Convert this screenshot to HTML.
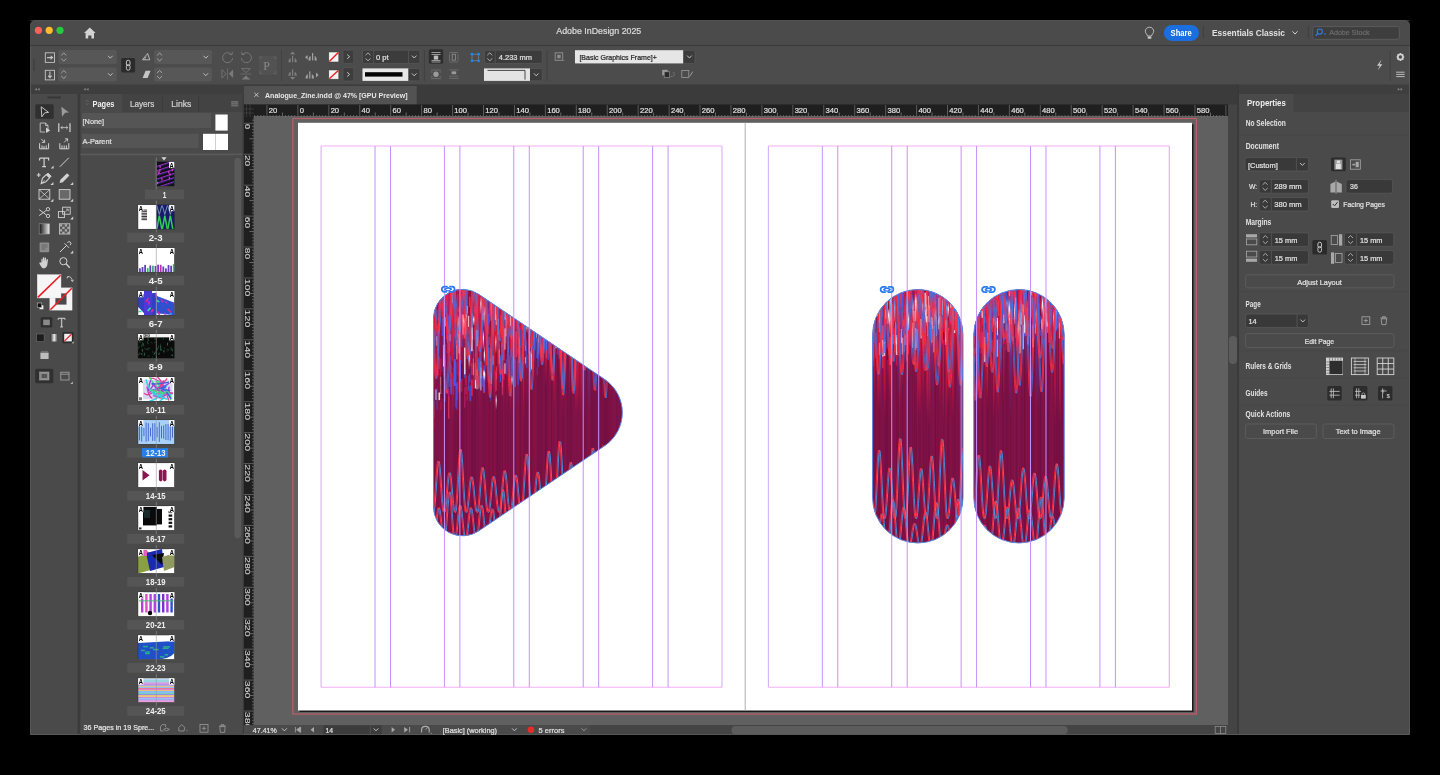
<!DOCTYPE html>
<html><head><meta charset="utf-8">
<style>
*{margin:0;padding:0;box-sizing:border-box}
html,body{width:1440px;height:775px;overflow:hidden;background:#000}
body{position:relative;font-family:"Liberation Sans",sans-serif}
.a{position:absolute}
svg text{font-family:"Liberation Sans",sans-serif}
</style></head>
<body>
<svg class="a" style="left:0;top:0;will-change:transform" width="1440" height="775" viewBox="0 0 1440 775"><path d="M30 735 L30 26 Q30 20 36 20 L1404 20 Q1410 20 1410 26 L1410 735 Z" fill="#3b3b3b" /><path d="M30 45.5 L30 26 Q30 20 36 20 L1404 20 Q1410 20 1410 26 L1410 45.5 Z" fill="#4b4b4b" /><line x1="30" y1="20.5" x2="1410" y2="20.5" stroke="#5a5a5a" stroke-width="0.8" opacity="0.6"/><line x1="30" y1="45.5" x2="1410" y2="45.5" stroke="#3a3a3a" stroke-width="1"/><rect x="30" y="46" width="1380" height="38.8" fill="#4c4c4c"/><rect x="30" y="84.8" width="1380" height="9.2" fill="#3e3e3e"/><rect x="30" y="94" width="47.5" height="641" fill="#4a4a4a"/><rect x="80.5" y="94" width="162" height="18" fill="#434343"/><rect x="80.5" y="112" width="162" height="623" fill="#4a4a4a"/><rect x="244" y="84.8" width="994" height="19.7" fill="#3b3b3b"/><rect x="244" y="86" width="172.7" height="18.5" fill="#525252"/><rect x="244" y="104.5" width="984" height="12" fill="#1f1f1f"/><rect x="244" y="116.5" width="10" height="608.5" fill="#1f1f1f"/><rect x="254" y="116.5" width="974" height="608.5" fill="#606060"/><rect x="1228" y="104.5" width="9.5" height="630.5" fill="#444444"/><rect x="1229" y="336" width="8" height="28" fill="#5c5c5c" rx="4"/><rect x="1237.5" y="84.8" width="1.5" height="650.2" fill="#383838"/><rect x="244" y="725" width="346" height="10" fill="#4a4a4a"/><rect x="590" y="725" width="638" height="10" fill="#444444"/><rect x="731.5" y="726" width="336.2" height="8.3" fill="#5c5c5c" rx="4.1"/><rect x="1239" y="94" width="170" height="18" fill="#434343"/><rect x="1239" y="94" width="54.5" height="18" fill="#4a4a4a"/><rect x="1239" y="112" width="170" height="623" fill="#4a4a4a"/><path d="M30.5 46 L30.5 734.5 L1409.5 734.5 L1409.5 46" fill="none" stroke="#575757" stroke-width="1" /><rect x="292.9" y="118.5" width="903.5" height="595.6" fill="none" stroke="#bb5e68" stroke-width="1.2"/><rect x="299.5" y="124.3" width="894" height="587.7" fill="#1a1a1a"/><rect x="298" y="122.8" width="894" height="587.7" fill="#ffffff"/></svg>
<svg class="a" style="left:0;top:0" width="1440" height="775"><defs><linearGradient id="gr" x1="0" y1="0" x2="0" y2="1"><stop offset="0" stop-color="#ff2038" stop-opacity="0.95"/><stop offset="0.7" stop-color="#e01838" stop-opacity="0.6"/><stop offset="1" stop-color="#c01838" stop-opacity="0"/></linearGradient><linearGradient id="gm" x1="0" y1="0" x2="0" y2="1"><stop offset="0" stop-color="#d0206a" stop-opacity="0.9"/><stop offset="1" stop-color="#b01860" stop-opacity="0"/></linearGradient><linearGradient id="gb" x1="0" y1="0" x2="0" y2="1"><stop offset="0" stop-color="#4060f0" stop-opacity="0.85"/><stop offset="1" stop-color="#4050d0" stop-opacity="0"/></linearGradient><linearGradient id="gc" x1="0" y1="0" x2="0" y2="1"><stop offset="0" stop-color="#9a0c3c" stop-opacity="0.9"/><stop offset="1" stop-color="#9a0c3c" stop-opacity="0"/></linearGradient><linearGradient id="gw" x1="0" y1="0" x2="0" y2="1"><stop offset="0" stop-color="#ffffff" stop-opacity="0"/><stop offset="0.4" stop-color="#ffffff" stop-opacity="0.95"/><stop offset="1" stop-color="#ffffff" stop-opacity="0"/></linearGradient><clipPath id="ct"><path d="M 433.5 318.3 A 29 29 0 0 1 478.7 294.3 L 604.8 379.5 A 40 40 0 0 1 604.8 445.7 L 478.7 530.9 A 29 29 0 0 1 433.5 506.9 Z"/></clipPath><clipPath id="cp1"><path d="M 872.6 334.7 A 45.19999999999999 45.19999999999999 0 0 1 963 334.7 L 963 497.8 A 45.19999999999999 45.19999999999999 0 0 1 872.6 497.8 Z"/></clipPath><clipPath id="cp2"><path d="M 973.8 334.70000000000005 A 45.200000000000045 45.200000000000045 0 0 1 1064.2 334.70000000000005 L 1064.2 497.79999999999995 A 45.200000000000045 45.200000000000045 0 0 1 973.8 497.79999999999995 Z"/></clipPath></defs><g clip-path="url(#ct)"><rect x="433" y="289" width="191" height="248" fill="#7c1246"/><rect x="433.0" y="289" width="1.1" height="248" fill="#8a2068" opacity="0.23"/><rect x="434.7" y="289" width="1.1" height="248" fill="#8a2068" opacity="0.11"/><rect x="436.4" y="289" width="1.1" height="248" fill="#8a2068" opacity="0.22"/><rect x="437.5" y="289" width="0.9" height="248" fill="#b01040" opacity="0.18"/><rect x="439.0" y="289" width="1.2" height="248" fill="#8a2068" opacity="0.26"/><rect x="441.2" y="289" width="1.3" height="248" fill="#8a2068" opacity="0.20"/><rect x="443.0" y="289" width="1.4" height="248" fill="#b01040" opacity="0.09"/><rect x="444.5" y="289" width="0.8" height="248" fill="#b01040" opacity="0.22"/><rect x="445.5" y="289" width="1.2" height="248" fill="#5a0830" opacity="0.17"/><rect x="447.3" y="289" width="1.1" height="248" fill="#4a0a40" opacity="0.10"/><rect x="448.9" y="289" width="1.0" height="248" fill="#8a2068" opacity="0.26"/><rect x="450.6" y="289" width="1.3" height="248" fill="#c01848" opacity="0.22"/><rect x="452.4" y="289" width="0.6" height="248" fill="#8a2068" opacity="0.22"/><rect x="453.2" y="289" width="1.4" height="248" fill="#600a38" opacity="0.09"/><rect x="454.5" y="289" width="1.3" height="248" fill="#5a0830" opacity="0.12"/><rect x="456.7" y="289" width="1.1" height="248" fill="#4a0a40" opacity="0.15"/><rect x="457.7" y="289" width="1.2" height="248" fill="#4a0a40" opacity="0.13"/><rect x="459.0" y="289" width="0.9" height="248" fill="#600a38" opacity="0.22"/><rect x="459.9" y="289" width="0.8" height="248" fill="#b01040" opacity="0.08"/><rect x="461.0" y="289" width="1.1" height="248" fill="#4a0a40" opacity="0.18"/><rect x="462.4" y="289" width="0.8" height="248" fill="#4a0a40" opacity="0.22"/><rect x="463.4" y="289" width="1.0" height="248" fill="#600a38" opacity="0.16"/><rect x="464.5" y="289" width="0.9" height="248" fill="#8a2068" opacity="0.13"/><rect x="466.0" y="289" width="0.8" height="248" fill="#600a38" opacity="0.26"/><rect x="467.1" y="289" width="1.2" height="248" fill="#b01040" opacity="0.26"/><rect x="468.4" y="289" width="0.9" height="248" fill="#8a2068" opacity="0.14"/><rect x="469.4" y="289" width="0.7" height="248" fill="#b01040" opacity="0.12"/><rect x="470.4" y="289" width="0.6" height="248" fill="#c01848" opacity="0.15"/><rect x="471.2" y="289" width="1.6" height="248" fill="#600a38" opacity="0.23"/><rect x="472.8" y="289" width="1.0" height="248" fill="#4a0a40" opacity="0.11"/><rect x="474.5" y="289" width="1.4" height="248" fill="#5a0830" opacity="0.21"/><rect x="476.0" y="289" width="1.2" height="248" fill="#8a2068" opacity="0.12"/><rect x="478.2" y="289" width="1.5" height="248" fill="#8a2068" opacity="0.09"/><rect x="479.6" y="289" width="0.7" height="248" fill="#8a2068" opacity="0.25"/><rect x="480.3" y="289" width="1.3" height="248" fill="#c01848" opacity="0.16"/><rect x="482.6" y="289" width="1.1" height="248" fill="#8a2068" opacity="0.11"/><rect x="484.3" y="289" width="0.7" height="248" fill="#5a0830" opacity="0.17"/><rect x="485.3" y="289" width="1.2" height="248" fill="#b01040" opacity="0.13"/><rect x="487.4" y="289" width="0.8" height="248" fill="#b01040" opacity="0.09"/><rect x="488.4" y="289" width="0.8" height="248" fill="#b01040" opacity="0.11"/><rect x="489.4" y="289" width="1.2" height="248" fill="#5a0830" opacity="0.10"/><rect x="490.6" y="289" width="1.1" height="248" fill="#c01848" opacity="0.20"/><rect x="492.2" y="289" width="1.2" height="248" fill="#5a0830" opacity="0.19"/><rect x="494.3" y="289" width="1.1" height="248" fill="#c01848" opacity="0.21"/><rect x="496.2" y="289" width="0.6" height="248" fill="#4a0a40" opacity="0.09"/><rect x="496.8" y="289" width="0.9" height="248" fill="#5a0830" opacity="0.26"/><rect x="497.7" y="289" width="1.1" height="248" fill="#4a0a40" opacity="0.09"/><rect x="499.7" y="289" width="1.3" height="248" fill="#5a0830" opacity="0.22"/><rect x="502.0" y="289" width="1.0" height="248" fill="#4a0a40" opacity="0.17"/><rect x="502.9" y="289" width="1.5" height="248" fill="#b01040" opacity="0.24"/><rect x="504.9" y="289" width="1.2" height="248" fill="#600a38" opacity="0.15"/><rect x="506.1" y="289" width="0.7" height="248" fill="#b01040" opacity="0.20"/><rect x="507.3" y="289" width="1.5" height="248" fill="#4a0a40" opacity="0.14"/><rect x="509.8" y="289" width="1.3" height="248" fill="#600a38" opacity="0.16"/><rect x="512.0" y="289" width="0.7" height="248" fill="#8a2068" opacity="0.09"/><rect x="513.0" y="289" width="1.1" height="248" fill="#5a0830" opacity="0.25"/><rect x="514.1" y="289" width="1.4" height="248" fill="#4a0a40" opacity="0.25"/><rect x="515.6" y="289" width="0.6" height="248" fill="#c01848" opacity="0.11"/><rect x="516.5" y="289" width="1.1" height="248" fill="#c01848" opacity="0.20"/><rect x="518.0" y="289" width="1.5" height="248" fill="#c01848" opacity="0.15"/><rect x="519.6" y="289" width="1.2" height="248" fill="#5a0830" opacity="0.24"/><rect x="521.2" y="289" width="1.2" height="248" fill="#c01848" opacity="0.12"/><rect x="522.4" y="289" width="1.0" height="248" fill="#b01040" opacity="0.21"/><rect x="524.0" y="289" width="0.9" height="248" fill="#5a0830" opacity="0.10"/><rect x="525.2" y="289" width="1.5" height="248" fill="#600a38" opacity="0.15"/><rect x="527.3" y="289" width="1.3" height="248" fill="#4a0a40" opacity="0.23"/><rect x="529.6" y="289" width="1.1" height="248" fill="#b01040" opacity="0.23"/><rect x="530.8" y="289" width="1.2" height="248" fill="#4a0a40" opacity="0.21"/><rect x="532.5" y="289" width="0.9" height="248" fill="#8a2068" opacity="0.08"/><rect x="533.4" y="289" width="1.1" height="248" fill="#b01040" opacity="0.22"/><rect x="534.6" y="289" width="1.4" height="248" fill="#b01040" opacity="0.26"/><rect x="536.0" y="289" width="0.7" height="248" fill="#8a2068" opacity="0.20"/><rect x="537.1" y="289" width="1.6" height="248" fill="#4a0a40" opacity="0.12"/><rect x="539.7" y="289" width="0.9" height="248" fill="#4a0a40" opacity="0.08"/><rect x="540.8" y="289" width="1.3" height="248" fill="#5a0830" opacity="0.12"/><rect x="542.9" y="289" width="1.1" height="248" fill="#8a2068" opacity="0.17"/><rect x="545.0" y="289" width="0.8" height="248" fill="#4a0a40" opacity="0.24"/><rect x="545.7" y="289" width="1.5" height="248" fill="#4a0a40" opacity="0.15"/><rect x="547.7" y="289" width="0.8" height="248" fill="#b01040" opacity="0.15"/><rect x="548.9" y="289" width="1.5" height="248" fill="#c01848" opacity="0.16"/><rect x="551.1" y="289" width="0.8" height="248" fill="#4a0a40" opacity="0.24"/><rect x="552.4" y="289" width="1.5" height="248" fill="#b01040" opacity="0.12"/><rect x="555.0" y="289" width="1.6" height="248" fill="#c01848" opacity="0.18"/><rect x="557.5" y="289" width="0.9" height="248" fill="#4a0a40" opacity="0.23"/><rect x="558.6" y="289" width="0.7" height="248" fill="#600a38" opacity="0.14"/><rect x="559.5" y="289" width="0.9" height="248" fill="#b01040" opacity="0.12"/><rect x="561.0" y="289" width="1.0" height="248" fill="#b01040" opacity="0.11"/><rect x="562.2" y="289" width="1.4" height="248" fill="#5a0830" opacity="0.16"/><rect x="564.7" y="289" width="1.5" height="248" fill="#8a2068" opacity="0.23"/><rect x="567.0" y="289" width="1.5" height="248" fill="#600a38" opacity="0.18"/><rect x="569.3" y="289" width="1.4" height="248" fill="#600a38" opacity="0.17"/><rect x="570.9" y="289" width="1.3" height="248" fill="#4a0a40" opacity="0.11"/><rect x="572.7" y="289" width="1.5" height="248" fill="#c01848" opacity="0.14"/><rect x="574.6" y="289" width="1.4" height="248" fill="#8a2068" opacity="0.12"/><rect x="577.0" y="289" width="1.6" height="248" fill="#8a2068" opacity="0.13"/><rect x="579.1" y="289" width="1.0" height="248" fill="#b01040" opacity="0.17"/><rect x="580.6" y="289" width="0.6" height="248" fill="#b01040" opacity="0.17"/><rect x="581.4" y="289" width="1.4" height="248" fill="#8a2068" opacity="0.10"/><rect x="582.8" y="289" width="0.8" height="248" fill="#8a2068" opacity="0.16"/><rect x="584.1" y="289" width="1.4" height="248" fill="#600a38" opacity="0.13"/><rect x="585.9" y="289" width="0.7" height="248" fill="#600a38" opacity="0.24"/><rect x="587.2" y="289" width="1.5" height="248" fill="#8a2068" opacity="0.14"/><rect x="588.8" y="289" width="1.2" height="248" fill="#c01848" opacity="0.10"/><rect x="590.8" y="289" width="0.6" height="248" fill="#5a0830" opacity="0.11"/><rect x="591.4" y="289" width="0.9" height="248" fill="#4a0a40" opacity="0.14"/><rect x="592.6" y="289" width="0.7" height="248" fill="#4a0a40" opacity="0.18"/><rect x="593.8" y="289" width="1.2" height="248" fill="#4a0a40" opacity="0.12"/><rect x="595.5" y="289" width="1.0" height="248" fill="#600a38" opacity="0.19"/><rect x="597.2" y="289" width="1.2" height="248" fill="#8a2068" opacity="0.12"/><rect x="599.0" y="289" width="1.2" height="248" fill="#8a2068" opacity="0.12"/><rect x="600.7" y="289" width="1.2" height="248" fill="#5a0830" opacity="0.12"/><rect x="602.6" y="289" width="1.4" height="248" fill="#5a0830" opacity="0.14"/><rect x="604.2" y="289" width="1.5" height="248" fill="#5a0830" opacity="0.22"/><rect x="605.9" y="289" width="0.7" height="248" fill="#5a0830" opacity="0.10"/><rect x="606.6" y="289" width="1.0" height="248" fill="#600a38" opacity="0.23"/><rect x="607.8" y="289" width="1.4" height="248" fill="#5a0830" opacity="0.12"/><rect x="609.9" y="289" width="1.4" height="248" fill="#b01040" opacity="0.12"/><rect x="612.0" y="289" width="1.5" height="248" fill="#c01848" opacity="0.10"/><rect x="614.0" y="289" width="1.4" height="248" fill="#8a2068" opacity="0.26"/><rect x="616.3" y="289" width="1.4" height="248" fill="#600a38" opacity="0.10"/><rect x="617.6" y="289" width="1.2" height="248" fill="#8a2068" opacity="0.24"/><rect x="619.1" y="289" width="0.8" height="248" fill="#b01040" opacity="0.12"/><rect x="620.4" y="289" width="1.6" height="248" fill="#4a0a40" opacity="0.10"/><rect x="621.9" y="289" width="1.6" height="248" fill="#600a38" opacity="0.09"/><rect x="623.5" y="289" width="1.0" height="248" fill="#600a38" opacity="0.17"/><rect x="433.0" y="289.0" width="1.8" height="111.9" fill="url(#gr)"/><rect x="434.8" y="289.0" width="1.2" height="115.1" fill="url(#gm)"/><rect x="435.7" y="289.0" width="1.2" height="96.5" fill="url(#gr)"/><rect x="436.3" y="289.0" width="2.2" height="112.2" fill="url(#gc)"/><rect x="438.6" y="289.0" width="1.8" height="103.6" fill="url(#gm)"/><rect x="440.0" y="289.0" width="2.4" height="75.7" fill="url(#gc)"/><rect x="442.5" y="289.0" width="2.0" height="121.2" fill="url(#gb)"/><rect x="444.0" y="289.0" width="2.2" height="111.4" fill="url(#gc)"/><rect x="446.2" y="289.0" width="2.0" height="113.7" fill="url(#gm)"/><rect x="447.3" y="289.0" width="1.4" height="55.4" fill="url(#gm)"/><rect x="448.3" y="289.0" width="1.9" height="73.6" fill="url(#gm)"/><rect x="450.3" y="289.0" width="1.9" height="108.6" fill="url(#gr)"/><rect x="451.9" y="289.0" width="1.7" height="136.4" fill="url(#gr)"/><rect x="453.4" y="289.0" width="2.0" height="134.8" fill="url(#gb)"/><rect x="454.4" y="289.0" width="1.8" height="75.6" fill="url(#gb)"/><rect x="455.7" y="289.0" width="1.0" height="85.3" fill="url(#gr)"/><rect x="456.3" y="289.0" width="1.3" height="99.6" fill="url(#gc)"/><rect x="457.3" y="289.0" width="2.4" height="136.0" fill="url(#gm)"/><rect x="459.4" y="289.0" width="2.1" height="103.5" fill="url(#gr)"/><rect x="461.4" y="289.0" width="1.0" height="67.6" fill="url(#gc)"/><rect x="462.2" y="289.0" width="1.2" height="104.6" fill="url(#gm)"/><rect x="462.8" y="289.0" width="2.3" height="97.7" fill="url(#gm)"/><rect x="464.8" y="289.0" width="1.4" height="108.2" fill="url(#gr)"/><rect x="466.0" y="289.0" width="1.3" height="78.8" fill="url(#gb)"/><rect x="466.7" y="289.0" width="1.3" height="67.4" fill="url(#gr)"/><rect x="467.9" y="289.0" width="1.5" height="115.8" fill="url(#gc)"/><rect x="468.7" y="289.0" width="2.4" height="60.6" fill="url(#gc)"/><rect x="471.1" y="289.0" width="1.5" height="134.2" fill="url(#gm)"/><rect x="472.1" y="289.0" width="1.7" height="113.7" fill="url(#gc)"/><rect x="473.5" y="289.0" width="2.4" height="104.0" fill="url(#gc)"/><rect x="474.8" y="289.0" width="1.8" height="71.2" fill="url(#gm)"/><rect x="475.8" y="289.0" width="1.7" height="90.8" fill="url(#gr)"/><rect x="477.3" y="289.0" width="1.6" height="102.2" fill="url(#gr)"/><rect x="478.5" y="289.0" width="2.1" height="136.2" fill="url(#gm)"/><rect x="480.7" y="289.0" width="2.0" height="63.9" fill="url(#gr)"/><rect x="482.8" y="289.0" width="2.1" height="84.0" fill="url(#gm)"/><rect x="484.2" y="289.0" width="1.9" height="103.0" fill="url(#gm)"/><rect x="485.9" y="289.0" width="2.0" height="74.9" fill="url(#gr)"/><rect x="488.1" y="289.0" width="2.3" height="57.8" fill="url(#gc)"/><rect x="489.3" y="289.0" width="1.3" height="105.6" fill="url(#gm)"/><rect x="490.0" y="289.0" width="1.7" height="61.6" fill="url(#gr)"/><rect x="491.6" y="289.0" width="1.7" height="85.1" fill="url(#gm)"/><rect x="492.9" y="289.0" width="1.2" height="115.5" fill="url(#gr)"/><rect x="494.1" y="289.0" width="1.0" height="120.8" fill="url(#gr)"/><rect x="495.0" y="289.0" width="2.1" height="89.3" fill="url(#gr)"/><rect x="496.4" y="289.0" width="2.1" height="108.1" fill="url(#gr)"/><rect x="498.7" y="289.0" width="1.4" height="115.6" fill="url(#gm)"/><rect x="500.2" y="289.0" width="1.5" height="62.5" fill="url(#gr)"/><rect x="501.7" y="289.0" width="1.0" height="100.7" fill="url(#gr)"/><rect x="502.5" y="289.0" width="1.9" height="118.0" fill="url(#gr)"/><rect x="503.6" y="289.0" width="1.2" height="61.2" fill="url(#gb)"/><rect x="504.4" y="289.0" width="2.0" height="77.7" fill="url(#gb)"/><rect x="505.6" y="289.0" width="1.4" height="84.5" fill="url(#gb)"/><rect x="506.4" y="289.0" width="2.0" height="129.7" fill="url(#gm)"/><rect x="508.5" y="289.0" width="2.3" height="120.3" fill="url(#gm)"/><rect x="510.0" y="289.0" width="1.4" height="131.1" fill="url(#gr)"/><rect x="511.5" y="289.0" width="1.3" height="84.5" fill="url(#gr)"/><rect x="512.4" y="289.0" width="1.5" height="70.5" fill="url(#gr)"/><rect x="513.6" y="289.0" width="2.1" height="123.0" fill="url(#gm)"/><rect x="515.4" y="289.0" width="1.2" height="126.7" fill="url(#gb)"/><rect x="516.2" y="289.0" width="0.9" height="99.1" fill="url(#gm)"/><rect x="517.0" y="289.0" width="2.3" height="120.4" fill="url(#gb)"/><rect x="518.2" y="289.0" width="1.7" height="61.4" fill="url(#gb)"/><rect x="519.2" y="289.0" width="2.0" height="61.5" fill="url(#gc)"/><rect x="520.9" y="289.0" width="1.1" height="107.7" fill="url(#gb)"/><rect x="521.7" y="289.0" width="1.2" height="97.2" fill="url(#gb)"/><rect x="522.8" y="289.0" width="1.5" height="133.8" fill="url(#gr)"/><rect x="524.2" y="289.0" width="1.6" height="113.6" fill="url(#gm)"/><rect x="525.7" y="289.0" width="2.3" height="122.2" fill="url(#gm)"/><rect x="527.7" y="289.0" width="2.2" height="122.8" fill="url(#gc)"/><rect x="530.0" y="289.0" width="2.3" height="97.4" fill="url(#gm)"/><rect x="532.2" y="289.0" width="2.1" height="89.0" fill="url(#gm)"/><rect x="533.4" y="289.0" width="2.0" height="85.3" fill="url(#gc)"/><rect x="534.6" y="289.0" width="1.2" height="78.5" fill="url(#gm)"/><rect x="535.9" y="289.0" width="1.0" height="64.0" fill="url(#gr)"/><rect x="536.8" y="289.0" width="2.1" height="59.7" fill="url(#gr)"/><rect x="538.4" y="289.0" width="1.8" height="57.5" fill="url(#gc)"/><rect x="539.4" y="289.0" width="1.2" height="73.8" fill="url(#gr)"/><rect x="540.5" y="289.0" width="1.8" height="69.7" fill="url(#gr)"/><rect x="541.7" y="289.0" width="1.2" height="80.1" fill="url(#gb)"/><rect x="542.6" y="289.0" width="2.1" height="75.9" fill="url(#gm)"/><rect x="544.8" y="289.0" width="2.3" height="99.4" fill="url(#gr)"/><rect x="547.3" y="289.0" width="1.6" height="58.6" fill="url(#gr)"/><rect x="549.0" y="289.0" width="2.1" height="97.7" fill="url(#gr)"/><rect x="550.7" y="289.0" width="1.3" height="108.4" fill="url(#gc)"/><rect x="551.6" y="289.0" width="0.9" height="85.0" fill="url(#gm)"/><rect x="552.5" y="289.0" width="2.0" height="67.4" fill="url(#gm)"/><rect x="553.6" y="289.0" width="1.4" height="125.7" fill="url(#gr)"/><rect x="554.7" y="289.0" width="1.9" height="76.4" fill="url(#gc)"/><rect x="556.3" y="289.0" width="1.1" height="54.7" fill="url(#gb)"/><rect x="557.4" y="289.0" width="2.2" height="61.3" fill="url(#gc)"/><rect x="558.8" y="289.0" width="2.0" height="93.9" fill="url(#gr)"/><rect x="560.4" y="289.0" width="2.3" height="124.7" fill="url(#gm)"/><rect x="562.0" y="289.0" width="2.1" height="129.6" fill="url(#gm)"/><rect x="563.1" y="289.0" width="2.1" height="99.0" fill="url(#gr)"/><rect x="564.9" y="289.0" width="1.1" height="80.0" fill="url(#gc)"/><rect x="565.6" y="289.0" width="1.0" height="92.8" fill="url(#gr)"/><rect x="566.6" y="289.0" width="1.4" height="63.2" fill="url(#gb)"/><rect x="567.6" y="289.0" width="1.6" height="122.5" fill="url(#gc)"/><rect x="569.1" y="289.0" width="0.9" height="112.7" fill="url(#gr)"/><rect x="569.7" y="289.0" width="1.7" height="55.4" fill="url(#gm)"/><rect x="571.6" y="289.0" width="2.1" height="105.0" fill="url(#gr)"/><rect x="573.0" y="289.0" width="1.5" height="79.0" fill="url(#gm)"/><rect x="574.0" y="289.0" width="1.5" height="75.5" fill="url(#gb)"/><rect x="574.9" y="289.0" width="2.0" height="131.9" fill="url(#gr)"/><rect x="576.6" y="289.0" width="2.0" height="122.2" fill="url(#gr)"/><rect x="577.7" y="289.0" width="1.1" height="110.0" fill="url(#gr)"/><rect x="578.7" y="289.0" width="1.2" height="123.1" fill="url(#gm)"/><rect x="579.7" y="289.0" width="1.0" height="67.4" fill="url(#gr)"/><rect x="580.3" y="289.0" width="1.5" height="129.9" fill="url(#gr)"/><rect x="581.5" y="289.0" width="1.7" height="117.3" fill="url(#gm)"/><rect x="583.1" y="289.0" width="1.5" height="88.3" fill="url(#gr)"/><rect x="583.9" y="289.0" width="1.5" height="134.9" fill="url(#gb)"/><rect x="585.3" y="289.0" width="1.9" height="56.1" fill="url(#gm)"/><rect x="586.7" y="289.0" width="1.4" height="63.3" fill="url(#gb)"/><rect x="587.7" y="289.0" width="1.7" height="122.1" fill="url(#gb)"/><rect x="589.1" y="289.0" width="1.1" height="128.5" fill="url(#gb)"/><rect x="590.1" y="289.0" width="1.4" height="66.2" fill="url(#gm)"/><rect x="591.4" y="289.0" width="2.4" height="113.1" fill="url(#gm)"/><rect x="593.8" y="289.0" width="1.2" height="105.9" fill="url(#gc)"/><rect x="594.5" y="289.0" width="1.0" height="101.7" fill="url(#gr)"/><rect x="595.5" y="289.0" width="1.4" height="84.1" fill="url(#gc)"/><rect x="596.5" y="289.0" width="1.1" height="65.7" fill="url(#gc)"/><rect x="597.7" y="289.0" width="1.7" height="100.4" fill="url(#gm)"/><rect x="598.8" y="289.0" width="2.3" height="121.5" fill="url(#gc)"/><rect x="600.8" y="289.0" width="1.1" height="78.2" fill="url(#gc)"/><rect x="601.9" y="289.0" width="1.3" height="122.5" fill="url(#gm)"/><rect x="602.7" y="289.0" width="1.7" height="57.2" fill="url(#gr)"/><rect x="603.7" y="289.0" width="2.4" height="108.4" fill="url(#gc)"/><rect x="605.3" y="289.0" width="1.9" height="85.8" fill="url(#gb)"/><rect x="607.0" y="289.0" width="2.1" height="70.9" fill="url(#gr)"/><rect x="608.6" y="289.0" width="1.1" height="101.2" fill="url(#gr)"/><rect x="609.3" y="289.0" width="1.7" height="101.0" fill="url(#gr)"/><rect x="610.5" y="289.0" width="1.9" height="109.5" fill="url(#gr)"/><rect x="611.5" y="289.0" width="2.3" height="93.0" fill="url(#gm)"/><rect x="613.3" y="289.0" width="1.8" height="116.6" fill="url(#gb)"/><rect x="615.0" y="289.0" width="1.6" height="123.2" fill="url(#gc)"/><rect x="616.7" y="289.0" width="1.5" height="100.9" fill="url(#gm)"/><rect x="618.3" y="289.0" width="1.7" height="89.9" fill="url(#gm)"/><rect x="620.0" y="289.0" width="1.4" height="113.9" fill="url(#gr)"/><rect x="621.5" y="289.0" width="2.0" height="116.1" fill="url(#gm)"/><rect x="622.8" y="289.0" width="1.8" height="64.7" fill="url(#gr)"/><rect x="433.0" y="401.4" width="1.2" height="16.5" fill="#ffffff" opacity="0.49"/><rect x="433.0" y="352.0" width="1.2" height="20.5" fill="#3a58f0" opacity="0.92"/><rect x="433.0" y="404.5" width="1.2" height="22.1" fill="#ff2040" opacity="0.89"/><rect x="433.0" y="389.2" width="1.2" height="15.3" fill="#4a60ff" opacity="0.86"/><rect x="434.1" y="303.1" width="1.4" height="7.6" fill="#d02080" opacity="0.73"/><rect x="434.1" y="303.2" width="1.4" height="17.8" fill="#e01838" opacity="0.93"/><rect x="434.1" y="323.1" width="1.4" height="22.0" fill="#ff2040" opacity="0.51"/><rect x="434.1" y="296.2" width="1.4" height="25.7" fill="#e01838" opacity="0.87"/><rect x="435.5" y="315.4" width="1.0" height="12.7" fill="#d02080" opacity="0.70"/><rect x="435.5" y="324.2" width="1.0" height="17.0" fill="#4a60ff" opacity="0.92"/><rect x="435.5" y="389.5" width="1.0" height="10.5" fill="#ffffff" opacity="0.79"/><rect x="435.5" y="311.4" width="1.0" height="24.4" fill="#ff2040" opacity="0.66"/><rect x="436.6" y="312.0" width="0.9" height="19.9" fill="#5a0a30" opacity="0.59"/><rect x="436.6" y="363.0" width="0.9" height="12.7" fill="#ff2040" opacity="0.87"/><rect x="436.6" y="388.0" width="0.9" height="21.7" fill="#2a70ff" opacity="0.56"/><rect x="436.6" y="336.2" width="0.9" height="9.7" fill="#ffffff" opacity="0.79"/><rect x="437.4" y="309.5" width="1.3" height="11.2" fill="#2a70ff" opacity="0.80"/><rect x="437.4" y="331.3" width="1.3" height="20.6" fill="#2a70ff" opacity="0.90"/><rect x="437.4" y="347.5" width="1.3" height="27.5" fill="#d02080" opacity="0.90"/><rect x="437.4" y="364.7" width="1.3" height="12.1" fill="#e01838" opacity="0.79"/><rect x="438.5" y="392.5" width="1.6" height="7.6" fill="#ffffff" opacity="0.81"/><rect x="438.5" y="356.7" width="1.6" height="12.3" fill="#ff2040" opacity="0.61"/><rect x="438.5" y="298.8" width="1.6" height="12.3" fill="#d02080" opacity="0.84"/><rect x="438.5" y="309.2" width="1.6" height="22.2" fill="#3a58f0" opacity="0.51"/><rect x="440.5" y="358.6" width="0.8" height="26.2" fill="#ff2040" opacity="0.76"/><rect x="440.5" y="392.9" width="0.8" height="17.0" fill="#ff2040" opacity="0.58"/><rect x="440.5" y="375.9" width="0.8" height="26.0" fill="#5a0a30" opacity="0.64"/><rect x="440.5" y="376.6" width="0.8" height="17.4" fill="#ffffff" opacity="0.65"/><rect x="441.6" y="371.8" width="1.3" height="17.7" fill="#5a0a30" opacity="0.77"/><rect x="441.6" y="301.5" width="1.3" height="15.6" fill="#e01838" opacity="0.80"/><rect x="441.6" y="375.0" width="1.3" height="23.3" fill="#5a0a30" opacity="0.86"/><rect x="441.6" y="317.9" width="1.3" height="18.0" fill="#3a58f0" opacity="0.88"/><rect x="443.1" y="355.0" width="0.9" height="21.7" fill="#3a58f0" opacity="0.76"/><rect x="443.1" y="324.9" width="0.9" height="19.4" fill="#e01838" opacity="0.77"/><rect x="443.1" y="344.7" width="0.9" height="21.9" fill="#ffffff" opacity="0.79"/><rect x="443.1" y="297.0" width="0.9" height="26.0" fill="#ff2040" opacity="0.76"/><rect x="444.2" y="357.6" width="1.4" height="7.2" fill="#3a58f0" opacity="0.69"/><rect x="444.2" y="379.2" width="1.4" height="22.2" fill="#4a60ff" opacity="0.85"/><rect x="444.2" y="343.8" width="1.4" height="20.3" fill="#d02080" opacity="0.73"/><rect x="444.2" y="317.0" width="1.4" height="9.5" fill="#ffffff" opacity="0.73"/><rect x="446.0" y="323.4" width="1.4" height="16.3" fill="#ff2040" opacity="0.81"/><rect x="446.0" y="303.0" width="1.4" height="22.6" fill="#ff2040" opacity="0.77"/><rect x="446.0" y="304.8" width="1.4" height="16.0" fill="#e01838" opacity="0.84"/><rect x="446.0" y="289.4" width="1.4" height="15.0" fill="#ff2040" opacity="0.74"/><rect x="447.2" y="335.0" width="1.2" height="7.7" fill="#ffffff" opacity="0.46"/><rect x="447.2" y="313.9" width="1.2" height="11.6" fill="#d02080" opacity="0.75"/><rect x="447.2" y="334.4" width="1.2" height="7.9" fill="#3a58f0" opacity="0.60"/><rect x="447.2" y="325.6" width="1.2" height="27.6" fill="#2a70ff" opacity="0.77"/><rect x="448.2" y="396.4" width="1.1" height="22.2" fill="#ff4060" opacity="0.76"/><rect x="448.2" y="388.8" width="1.1" height="9.9" fill="#d02080" opacity="0.89"/><rect x="448.2" y="330.2" width="1.1" height="23.2" fill="#3a58f0" opacity="0.60"/><rect x="448.2" y="315.6" width="1.1" height="23.5" fill="#4a60ff" opacity="0.86"/><rect x="449.4" y="339.2" width="1.1" height="12.8" fill="#d02080" opacity="0.70"/><rect x="449.4" y="362.0" width="1.1" height="25.0" fill="#ff4060" opacity="0.59"/><rect x="449.4" y="334.0" width="1.1" height="7.0" fill="#ffffff" opacity="0.56"/><rect x="449.4" y="355.7" width="1.1" height="17.4" fill="#2a70ff" opacity="0.83"/><rect x="450.5" y="365.4" width="1.2" height="11.9" fill="#ff4060" opacity="0.66"/><rect x="450.5" y="366.8" width="1.2" height="23.1" fill="#e01838" opacity="0.56"/><rect x="450.5" y="366.3" width="1.2" height="26.0" fill="#3a58f0" opacity="0.51"/><rect x="450.5" y="378.6" width="1.2" height="15.9" fill="#4a60ff" opacity="0.88"/><rect x="451.8" y="360.1" width="0.9" height="12.6" fill="#5a0a30" opacity="0.77"/><rect x="451.8" y="293.3" width="0.9" height="9.3" fill="#ffffff" opacity="0.69"/><rect x="451.8" y="311.1" width="0.9" height="15.0" fill="#ff2040" opacity="0.72"/><rect x="451.8" y="343.9" width="0.9" height="18.1" fill="#e01838" opacity="0.64"/><rect x="452.8" y="377.2" width="1.0" height="17.8" fill="#3a58f0" opacity="0.70"/><rect x="452.8" y="329.9" width="1.0" height="25.1" fill="#e01838" opacity="0.60"/><rect x="452.8" y="328.2" width="1.0" height="19.4" fill="#2a70ff" opacity="0.56"/><rect x="452.8" y="368.0" width="1.0" height="16.6" fill="#ff2040" opacity="0.51"/><rect x="454.1" y="359.4" width="1.4" height="26.2" fill="#ff4060" opacity="0.60"/><rect x="454.1" y="359.0" width="1.4" height="27.0" fill="#4a60ff" opacity="0.89"/><rect x="454.1" y="371.3" width="1.4" height="11.7" fill="#3a58f0" opacity="0.86"/><rect x="454.1" y="330.2" width="1.4" height="7.3" fill="#ff2040" opacity="0.67"/><rect x="455.4" y="312.1" width="1.1" height="26.4" fill="#2a70ff" opacity="0.59"/><rect x="455.4" y="325.6" width="1.1" height="21.7" fill="#e01838" opacity="0.73"/><rect x="455.4" y="383.7" width="1.1" height="23.7" fill="#4a60ff" opacity="0.72"/><rect x="455.4" y="362.2" width="1.1" height="18.2" fill="#2a70ff" opacity="0.82"/><rect x="456.4" y="383.5" width="1.1" height="26.1" fill="#4a60ff" opacity="0.62"/><rect x="456.4" y="340.5" width="1.1" height="18.9" fill="#ffffff" opacity="0.64"/><rect x="456.4" y="381.1" width="1.1" height="7.6" fill="#4a60ff" opacity="0.52"/><rect x="456.4" y="381.7" width="1.1" height="18.4" fill="#4a60ff" opacity="0.62"/><rect x="457.6" y="328.7" width="0.9" height="13.5" fill="#ffffff" opacity="0.81"/><rect x="457.6" y="348.5" width="0.9" height="26.7" fill="#ff2040" opacity="0.85"/><rect x="457.6" y="293.9" width="0.9" height="17.9" fill="#ff4060" opacity="0.78"/><rect x="457.6" y="317.5" width="0.9" height="24.3" fill="#ff2040" opacity="0.90"/><rect x="458.5" y="371.6" width="1.5" height="21.0" fill="#ff2040" opacity="0.62"/><rect x="458.5" y="326.1" width="1.5" height="27.5" fill="#ffffff" opacity="0.51"/><rect x="458.5" y="316.7" width="1.5" height="11.7" fill="#3a58f0" opacity="0.60"/><rect x="458.5" y="289.1" width="1.5" height="18.0" fill="#5a0a30" opacity="0.68"/><rect x="460.0" y="367.1" width="1.1" height="7.7" fill="#ff4060" opacity="0.87"/><rect x="460.0" y="316.0" width="1.1" height="8.3" fill="#4a60ff" opacity="0.51"/><rect x="460.0" y="360.0" width="1.1" height="21.1" fill="#3a58f0" opacity="0.93"/><rect x="460.0" y="305.3" width="1.1" height="19.7" fill="#e01838" opacity="0.72"/><rect x="461.3" y="326.2" width="1.0" height="20.7" fill="#2a70ff" opacity="0.72"/><rect x="461.3" y="314.3" width="1.0" height="13.1" fill="#ff4060" opacity="0.58"/><rect x="461.3" y="363.8" width="1.0" height="25.3" fill="#5a0a30" opacity="0.95"/><rect x="461.3" y="378.8" width="1.0" height="12.8" fill="#ff2040" opacity="0.88"/><rect x="462.4" y="305.4" width="1.3" height="25.1" fill="#ff2040" opacity="0.89"/><rect x="462.4" y="323.8" width="1.3" height="14.7" fill="#ff2040" opacity="0.83"/><rect x="462.4" y="314.5" width="1.3" height="20.0" fill="#ffffff" opacity="0.60"/><rect x="462.4" y="322.0" width="1.3" height="13.3" fill="#ff4060" opacity="0.84"/><rect x="464.1" y="387.4" width="1.4" height="20.1" fill="#d02080" opacity="0.56"/><rect x="464.1" y="369.1" width="1.4" height="8.8" fill="#2a70ff" opacity="0.67"/><rect x="464.1" y="318.2" width="1.4" height="20.3" fill="#ff4060" opacity="0.94"/><rect x="464.1" y="347.6" width="1.4" height="26.7" fill="#ffffff" opacity="0.84"/><rect x="465.4" y="314.0" width="1.3" height="20.6" fill="#ffffff" opacity="0.60"/><rect x="465.4" y="387.3" width="1.3" height="7.1" fill="#ff4060" opacity="0.82"/><rect x="465.4" y="375.5" width="1.3" height="10.3" fill="#ff2040" opacity="0.66"/><rect x="465.4" y="387.7" width="1.3" height="8.6" fill="#5a0a30" opacity="0.65"/><rect x="466.5" y="305.9" width="1.2" height="7.5" fill="#ffffff" opacity="0.63"/><rect x="466.5" y="317.0" width="1.2" height="14.6" fill="#ff4060" opacity="0.78"/><rect x="466.5" y="386.0" width="1.2" height="14.6" fill="#e01838" opacity="0.81"/><rect x="466.5" y="316.9" width="1.2" height="25.1" fill="#5a0a30" opacity="0.70"/><rect x="468.0" y="375.4" width="1.2" height="15.5" fill="#2a70ff" opacity="0.57"/><rect x="468.0" y="315.5" width="1.2" height="18.5" fill="#ff2040" opacity="0.62"/><rect x="468.0" y="315.9" width="1.2" height="11.0" fill="#ffffff" opacity="0.64"/><rect x="468.0" y="343.1" width="1.2" height="18.3" fill="#4a60ff" opacity="0.57"/><rect x="469.0" y="296.7" width="1.4" height="10.0" fill="#ff4060" opacity="0.72"/><rect x="469.0" y="385.8" width="1.4" height="15.0" fill="#3a58f0" opacity="0.51"/><rect x="469.0" y="367.8" width="1.4" height="14.7" fill="#4a60ff" opacity="0.53"/><rect x="469.0" y="349.2" width="1.4" height="24.2" fill="#5a0a30" opacity="0.61"/><rect x="470.2" y="385.4" width="1.0" height="15.8" fill="#3a58f0" opacity="0.88"/><rect x="470.2" y="306.0" width="1.0" height="6.6" fill="#ff2040" opacity="0.58"/><rect x="470.2" y="354.4" width="1.0" height="12.0" fill="#ff2040" opacity="0.51"/><rect x="470.2" y="319.1" width="1.0" height="17.3" fill="#5a0a30" opacity="0.50"/><rect x="471.1" y="363.0" width="1.6" height="11.8" fill="#ff2040" opacity="0.61"/><rect x="471.1" y="327.5" width="1.6" height="23.7" fill="#ffffff" opacity="0.78"/><rect x="471.1" y="379.3" width="1.6" height="16.6" fill="#ff2040" opacity="0.88"/><rect x="471.1" y="313.2" width="1.6" height="26.0" fill="#ffffff" opacity="0.46"/><rect x="472.9" y="358.3" width="0.9" height="17.1" fill="#ffffff" opacity="0.56"/><rect x="472.9" y="348.9" width="0.9" height="15.9" fill="#4a60ff" opacity="0.64"/><rect x="472.9" y="375.5" width="0.9" height="13.1" fill="#ff2040" opacity="0.54"/><rect x="472.9" y="309.4" width="0.9" height="10.0" fill="#4a60ff" opacity="0.52"/><rect x="473.7" y="305.9" width="1.0" height="8.3" fill="#3a58f0" opacity="0.56"/><rect x="473.7" y="306.4" width="1.0" height="6.5" fill="#4a60ff" opacity="0.68"/><rect x="473.7" y="327.4" width="1.0" height="13.1" fill="#ff2040" opacity="0.74"/><rect x="473.7" y="291.0" width="1.0" height="9.8" fill="#3a58f0" opacity="0.53"/><rect x="474.8" y="329.7" width="1.2" height="27.2" fill="#4a60ff" opacity="0.60"/><rect x="474.8" y="362.9" width="1.2" height="25.5" fill="#ffffff" opacity="0.78"/><rect x="474.8" y="353.1" width="1.2" height="26.8" fill="#ff2040" opacity="0.65"/><rect x="474.8" y="362.6" width="1.2" height="17.6" fill="#e01838" opacity="0.50"/><rect x="476.4" y="294.2" width="1.3" height="19.6" fill="#ff4060" opacity="0.66"/><rect x="476.4" y="369.4" width="1.3" height="19.8" fill="#ffffff" opacity="0.65"/><rect x="476.4" y="375.8" width="1.3" height="8.7" fill="#d02080" opacity="0.83"/><rect x="476.4" y="330.0" width="1.3" height="16.3" fill="#ffffff" opacity="0.78"/><rect x="477.8" y="342.4" width="1.0" height="17.3" fill="#5a0a30" opacity="0.51"/><rect x="477.8" y="331.1" width="1.0" height="12.3" fill="#ff4060" opacity="0.52"/><rect x="477.8" y="375.8" width="1.0" height="9.3" fill="#ff2040" opacity="0.71"/><rect x="477.8" y="357.8" width="1.0" height="12.9" fill="#2a70ff" opacity="0.83"/><rect x="479.2" y="358.6" width="1.1" height="25.7" fill="#e01838" opacity="0.55"/><rect x="479.2" y="366.7" width="1.1" height="20.3" fill="#e01838" opacity="0.92"/><rect x="479.2" y="362.7" width="1.1" height="17.3" fill="#ff2040" opacity="0.95"/><rect x="479.2" y="306.1" width="1.1" height="6.8" fill="#ff2040" opacity="0.65"/><rect x="480.4" y="338.3" width="1.0" height="25.0" fill="#3a58f0" opacity="0.59"/><rect x="480.4" y="377.3" width="1.0" height="11.2" fill="#2a70ff" opacity="0.55"/><rect x="480.4" y="361.3" width="1.0" height="16.8" fill="#ffffff" opacity="0.55"/><rect x="480.4" y="367.5" width="1.0" height="23.0" fill="#ffffff" opacity="0.67"/><rect x="481.8" y="363.0" width="1.4" height="9.9" fill="#e01838" opacity="0.65"/><rect x="481.8" y="376.1" width="1.4" height="10.8" fill="#4a60ff" opacity="0.63"/><rect x="481.8" y="305.6" width="1.4" height="14.5" fill="#ffffff" opacity="0.79"/><rect x="481.8" y="331.5" width="1.4" height="16.8" fill="#d02080" opacity="0.54"/><rect x="483.5" y="368.2" width="1.2" height="22.0" fill="#4a60ff" opacity="0.59"/><rect x="483.5" y="378.8" width="1.2" height="14.3" fill="#ff4060" opacity="0.87"/><rect x="483.5" y="365.3" width="1.2" height="26.8" fill="#4a60ff" opacity="0.80"/><rect x="483.5" y="351.8" width="1.2" height="10.0" fill="#3a58f0" opacity="0.56"/><rect x="484.9" y="313.9" width="1.1" height="11.7" fill="#e01838" opacity="0.65"/><rect x="484.9" y="321.0" width="1.1" height="10.3" fill="#d02080" opacity="0.95"/><rect x="484.9" y="355.0" width="1.1" height="13.9" fill="#3a58f0" opacity="0.64"/><rect x="484.9" y="306.9" width="1.1" height="7.6" fill="#ffffff" opacity="0.56"/><rect x="486.0" y="329.7" width="1.3" height="17.1" fill="#2a70ff" opacity="0.92"/><rect x="486.0" y="334.8" width="1.3" height="15.2" fill="#4a60ff" opacity="0.72"/><rect x="486.0" y="314.4" width="1.3" height="25.2" fill="#ff2040" opacity="0.63"/><rect x="486.0" y="349.3" width="1.3" height="16.0" fill="#ff2040" opacity="0.92"/><rect x="487.3" y="308.5" width="1.4" height="20.1" fill="#d02080" opacity="0.67"/><rect x="487.3" y="313.9" width="1.4" height="15.7" fill="#4a60ff" opacity="0.93"/><rect x="487.3" y="347.5" width="1.4" height="6.3" fill="#2a70ff" opacity="0.77"/><rect x="487.3" y="325.4" width="1.4" height="8.9" fill="#ff2040" opacity="0.90"/><rect x="488.6" y="298.0" width="1.1" height="25.4" fill="#4a60ff" opacity="0.85"/><rect x="488.6" y="336.9" width="1.1" height="8.2" fill="#ff2040" opacity="0.90"/><rect x="488.6" y="358.3" width="1.1" height="6.4" fill="#ff2040" opacity="0.51"/><rect x="488.6" y="347.7" width="1.1" height="13.6" fill="#d02080" opacity="0.90"/><rect x="490.1" y="302.5" width="0.7" height="7.6" fill="#ff4060" opacity="0.58"/><rect x="490.1" y="316.5" width="0.7" height="20.8" fill="#5a0a30" opacity="0.77"/><rect x="490.1" y="374.0" width="0.7" height="27.8" fill="#3a58f0" opacity="0.68"/><rect x="490.1" y="345.6" width="0.7" height="21.4" fill="#3a58f0" opacity="0.95"/><rect x="490.7" y="357.5" width="1.1" height="26.5" fill="#ffffff" opacity="0.66"/><rect x="490.7" y="307.2" width="1.1" height="14.1" fill="#d02080" opacity="0.56"/><rect x="490.7" y="297.3" width="1.1" height="23.5" fill="#ffffff" opacity="0.45"/><rect x="490.7" y="349.3" width="1.1" height="23.3" fill="#ff4060" opacity="0.91"/><rect x="492.1" y="355.8" width="1.6" height="8.6" fill="#ffffff" opacity="0.64"/><rect x="492.1" y="320.9" width="1.6" height="14.1" fill="#ff2040" opacity="0.87"/><rect x="492.1" y="298.4" width="1.6" height="15.1" fill="#ff2040" opacity="0.75"/><rect x="492.1" y="355.8" width="1.6" height="8.1" fill="#ff2040" opacity="0.95"/><rect x="493.8" y="300.0" width="0.8" height="7.9" fill="#3a58f0" opacity="0.73"/><rect x="493.8" y="319.0" width="0.8" height="11.4" fill="#2a70ff" opacity="0.77"/><rect x="493.8" y="293.6" width="0.8" height="10.8" fill="#ffffff" opacity="0.63"/><rect x="493.8" y="297.9" width="0.8" height="9.0" fill="#5a0a30" opacity="0.90"/><rect x="494.8" y="371.1" width="1.2" height="17.5" fill="#e01838" opacity="0.68"/><rect x="494.8" y="370.6" width="1.2" height="21.7" fill="#d02080" opacity="0.55"/><rect x="494.8" y="308.4" width="1.2" height="23.5" fill="#ff2040" opacity="0.55"/><rect x="494.8" y="302.3" width="1.2" height="17.7" fill="#ffffff" opacity="0.46"/><rect x="495.8" y="343.1" width="1.0" height="24.6" fill="#5a0a30" opacity="0.52"/><rect x="495.8" y="314.2" width="1.0" height="10.7" fill="#ffffff" opacity="0.66"/><rect x="495.8" y="366.3" width="1.0" height="13.2" fill="#ff4060" opacity="0.72"/><rect x="495.8" y="372.6" width="1.0" height="18.3" fill="#ff4060" opacity="0.56"/><rect x="497.2" y="321.9" width="1.5" height="12.6" fill="#ff2040" opacity="0.83"/><rect x="497.2" y="307.4" width="1.5" height="7.9" fill="#2a70ff" opacity="0.86"/><rect x="497.2" y="318.9" width="1.5" height="15.5" fill="#ffffff" opacity="0.63"/><rect x="497.2" y="315.0" width="1.5" height="17.7" fill="#ff2040" opacity="0.57"/><rect x="498.8" y="344.8" width="1.0" height="21.7" fill="#3a58f0" opacity="0.51"/><rect x="498.8" y="329.0" width="1.0" height="11.1" fill="#4a60ff" opacity="0.84"/><rect x="498.8" y="349.6" width="1.0" height="14.2" fill="#ffffff" opacity="0.69"/><rect x="498.8" y="289.6" width="1.0" height="19.1" fill="#ff2040" opacity="0.93"/><rect x="499.8" y="358.0" width="1.2" height="10.6" fill="#4a60ff" opacity="0.84"/><rect x="499.8" y="314.9" width="1.2" height="16.9" fill="#ff2040" opacity="0.73"/><rect x="499.8" y="293.4" width="1.2" height="8.0" fill="#4a60ff" opacity="0.61"/><rect x="499.8" y="355.4" width="1.2" height="26.8" fill="#2a70ff" opacity="0.79"/><rect x="501.0" y="344.4" width="0.8" height="7.9" fill="#d02080" opacity="0.94"/><rect x="501.0" y="315.8" width="0.8" height="13.0" fill="#2a70ff" opacity="0.87"/><rect x="501.0" y="341.4" width="0.8" height="7.2" fill="#2a70ff" opacity="0.84"/><rect x="501.0" y="321.2" width="0.8" height="7.8" fill="#ff2040" opacity="0.56"/><rect x="501.8" y="364.8" width="1.3" height="22.6" fill="#d02080" opacity="0.76"/><rect x="501.8" y="355.9" width="1.3" height="16.5" fill="#ff2040" opacity="0.65"/><rect x="501.8" y="368.8" width="1.3" height="26.2" fill="#ff4060" opacity="0.53"/><rect x="501.8" y="324.7" width="1.3" height="22.5" fill="#ff2040" opacity="0.67"/><rect x="503.3" y="324.8" width="1.1" height="25.7" fill="#ff2040" opacity="0.83"/><rect x="503.3" y="365.9" width="1.1" height="13.8" fill="#ff2040" opacity="0.87"/><rect x="503.3" y="345.5" width="1.1" height="14.7" fill="#ff2040" opacity="0.81"/><rect x="503.3" y="334.1" width="1.1" height="26.3" fill="#ff4060" opacity="0.60"/><rect x="504.4" y="301.4" width="1.2" height="12.0" fill="#ff2040" opacity="0.68"/><rect x="504.4" y="363.3" width="1.2" height="10.4" fill="#ffffff" opacity="0.73"/><rect x="504.4" y="328.4" width="1.2" height="21.2" fill="#ffffff" opacity="0.61"/><rect x="504.4" y="297.4" width="1.2" height="22.3" fill="#ffffff" opacity="0.52"/><rect x="505.8" y="354.2" width="0.9" height="20.3" fill="#4a60ff" opacity="0.67"/><rect x="505.8" y="343.1" width="0.9" height="16.0" fill="#5a0a30" opacity="0.76"/><rect x="505.8" y="317.4" width="0.9" height="18.8" fill="#ffffff" opacity="0.64"/><rect x="505.8" y="315.0" width="0.9" height="21.3" fill="#ffffff" opacity="0.54"/><rect x="506.6" y="292.6" width="1.4" height="26.3" fill="#d02080" opacity="0.86"/><rect x="506.6" y="318.7" width="1.4" height="21.8" fill="#2a70ff" opacity="0.69"/><rect x="506.6" y="294.1" width="1.4" height="10.0" fill="#d02080" opacity="0.69"/><rect x="506.6" y="324.9" width="1.4" height="16.7" fill="#5a0a30" opacity="0.60"/><rect x="508.3" y="328.0" width="0.8" height="9.3" fill="#2a70ff" opacity="0.95"/><rect x="508.3" y="333.3" width="0.8" height="18.1" fill="#4a60ff" opacity="0.65"/><rect x="508.3" y="323.8" width="0.8" height="27.4" fill="#e01838" opacity="0.66"/><rect x="508.3" y="296.6" width="0.8" height="23.2" fill="#2a70ff" opacity="0.60"/><rect x="509.0" y="315.7" width="1.2" height="9.6" fill="#d02080" opacity="0.59"/><rect x="509.0" y="358.7" width="1.2" height="26.3" fill="#e01838" opacity="0.81"/><rect x="509.0" y="297.4" width="1.2" height="23.3" fill="#4a60ff" opacity="0.86"/><rect x="509.0" y="355.5" width="1.2" height="22.0" fill="#d02080" opacity="0.62"/><rect x="510.2" y="357.5" width="0.7" height="20.7" fill="#5a0a30" opacity="0.63"/><rect x="510.2" y="299.1" width="0.7" height="16.7" fill="#5a0a30" opacity="0.62"/><rect x="510.2" y="350.1" width="0.7" height="26.8" fill="#2a70ff" opacity="0.57"/><rect x="510.2" y="301.3" width="0.7" height="24.9" fill="#ffffff" opacity="0.79"/><rect x="511.0" y="329.9" width="1.2" height="20.5" fill="#e01838" opacity="0.91"/><rect x="511.0" y="308.9" width="1.2" height="7.2" fill="#ff4060" opacity="0.92"/><rect x="511.0" y="338.9" width="1.2" height="17.9" fill="#4a60ff" opacity="0.72"/><rect x="511.0" y="317.4" width="1.2" height="22.0" fill="#ff4060" opacity="0.92"/><rect x="512.3" y="356.2" width="1.2" height="7.7" fill="#4a60ff" opacity="0.75"/><rect x="512.3" y="360.4" width="1.2" height="20.5" fill="#d02080" opacity="0.53"/><rect x="512.3" y="296.7" width="1.2" height="18.4" fill="#ff2040" opacity="0.55"/><rect x="512.3" y="312.5" width="1.2" height="25.2" fill="#4a60ff" opacity="0.53"/><rect x="513.8" y="320.1" width="0.8" height="9.1" fill="#ff2040" opacity="0.91"/><rect x="513.8" y="329.8" width="0.8" height="15.6" fill="#5a0a30" opacity="0.81"/><rect x="513.8" y="328.6" width="0.8" height="13.8" fill="#ff2040" opacity="0.72"/><rect x="513.8" y="355.1" width="0.8" height="8.2" fill="#3a58f0" opacity="0.56"/><rect x="514.5" y="330.7" width="1.3" height="27.4" fill="#ff2040" opacity="0.75"/><rect x="514.5" y="356.3" width="1.3" height="11.6" fill="#e01838" opacity="0.60"/><rect x="514.5" y="359.3" width="1.3" height="27.5" fill="#2a70ff" opacity="0.93"/><rect x="514.5" y="353.2" width="1.3" height="26.6" fill="#e01838" opacity="0.51"/><rect x="515.9" y="331.3" width="1.2" height="25.8" fill="#ff4060" opacity="0.64"/><rect x="515.9" y="295.4" width="1.2" height="17.4" fill="#e01838" opacity="0.93"/><rect x="515.9" y="297.1" width="1.2" height="12.6" fill="#ff2040" opacity="0.64"/><rect x="515.9" y="319.7" width="1.2" height="9.3" fill="#ff2040" opacity="0.58"/><rect x="517.3" y="348.3" width="1.5" height="6.0" fill="#ff4060" opacity="0.53"/><rect x="517.3" y="360.6" width="1.5" height="24.3" fill="#3a58f0" opacity="0.68"/><rect x="517.3" y="305.1" width="1.5" height="14.6" fill="#4a60ff" opacity="0.90"/><rect x="517.3" y="308.2" width="1.5" height="18.9" fill="#3a58f0" opacity="0.74"/><rect x="518.8" y="336.3" width="1.3" height="26.5" fill="#ffffff" opacity="0.62"/><rect x="518.8" y="299.9" width="1.3" height="11.6" fill="#3a58f0" opacity="0.72"/><rect x="518.8" y="302.4" width="1.3" height="20.9" fill="#4a60ff" opacity="0.77"/><rect x="518.8" y="327.0" width="1.3" height="11.6" fill="#d02080" opacity="0.89"/><rect x="520.0" y="325.7" width="0.9" height="22.3" fill="#2a70ff" opacity="0.59"/><rect x="520.0" y="345.9" width="0.9" height="17.9" fill="#ff2040" opacity="0.54"/><rect x="520.0" y="306.6" width="0.9" height="10.8" fill="#5a0a30" opacity="0.69"/><rect x="520.0" y="315.7" width="0.9" height="13.8" fill="#e01838" opacity="0.91"/><rect x="521.3" y="318.9" width="1.0" height="20.8" fill="#e01838" opacity="0.60"/><rect x="521.3" y="316.1" width="1.0" height="12.3" fill="#3a58f0" opacity="0.77"/><rect x="521.3" y="323.0" width="1.0" height="24.0" fill="#ff2040" opacity="0.51"/><rect x="521.3" y="291.3" width="1.0" height="27.0" fill="#ffffff" opacity="0.62"/><rect x="522.2" y="351.3" width="0.8" height="27.1" fill="#e01838" opacity="0.92"/><rect x="522.2" y="298.8" width="0.8" height="9.0" fill="#4a60ff" opacity="0.86"/><rect x="522.2" y="356.1" width="0.8" height="10.2" fill="#4a60ff" opacity="0.56"/><rect x="522.2" y="305.8" width="0.8" height="24.7" fill="#ff4060" opacity="0.90"/><rect x="523.1" y="354.1" width="1.0" height="9.2" fill="#ff2040" opacity="0.89"/><rect x="523.1" y="340.1" width="1.0" height="20.9" fill="#e01838" opacity="0.56"/><rect x="523.1" y="301.9" width="1.0" height="8.7" fill="#4a60ff" opacity="0.74"/><rect x="523.1" y="346.5" width="1.0" height="15.7" fill="#5a0a30" opacity="0.86"/><rect x="524.1" y="304.6" width="0.8" height="7.7" fill="#ff4060" opacity="0.64"/><rect x="524.1" y="324.3" width="0.8" height="9.5" fill="#ff4060" opacity="0.65"/><rect x="524.1" y="296.3" width="0.8" height="16.6" fill="#d02080" opacity="0.90"/><rect x="524.1" y="321.2" width="0.8" height="19.3" fill="#d02080" opacity="0.88"/><rect x="524.9" y="357.0" width="0.9" height="6.5" fill="#ffffff" opacity="0.76"/><rect x="524.9" y="326.8" width="0.9" height="12.2" fill="#ffffff" opacity="0.47"/><rect x="524.9" y="340.2" width="0.9" height="10.7" fill="#ffffff" opacity="0.46"/><rect x="524.9" y="318.5" width="0.9" height="27.2" fill="#3a58f0" opacity="0.78"/><rect x="525.7" y="290.1" width="0.7" height="12.7" fill="#4a60ff" opacity="0.52"/><rect x="525.7" y="347.7" width="0.7" height="18.4" fill="#2a70ff" opacity="0.81"/><rect x="525.7" y="332.2" width="0.7" height="13.0" fill="#2a70ff" opacity="0.66"/><rect x="525.7" y="329.2" width="0.7" height="15.2" fill="#d02080" opacity="0.74"/><rect x="526.4" y="305.1" width="1.0" height="26.6" fill="#ffffff" opacity="0.79"/><rect x="526.4" y="300.2" width="1.0" height="17.2" fill="#ff4060" opacity="0.94"/><rect x="526.4" y="341.7" width="1.0" height="26.5" fill="#2a70ff" opacity="0.64"/><rect x="526.4" y="329.2" width="1.0" height="9.5" fill="#5a0a30" opacity="0.93"/><rect x="527.4" y="289.2" width="0.8" height="16.5" fill="#ff4060" opacity="0.55"/><rect x="527.4" y="333.5" width="0.8" height="21.1" fill="#5a0a30" opacity="0.80"/><rect x="527.4" y="307.4" width="0.8" height="18.6" fill="#ffffff" opacity="0.70"/><rect x="527.4" y="292.9" width="0.8" height="13.0" fill="#ffffff" opacity="0.71"/><rect x="528.1" y="308.0" width="0.8" height="15.7" fill="#ff2040" opacity="0.54"/><rect x="528.1" y="304.9" width="0.8" height="24.2" fill="#ff2040" opacity="0.86"/><rect x="528.1" y="302.3" width="0.8" height="19.9" fill="#2a70ff" opacity="0.55"/><rect x="528.1" y="326.8" width="0.8" height="26.8" fill="#4a60ff" opacity="0.72"/><rect x="529.0" y="323.0" width="1.0" height="13.5" fill="#ff4060" opacity="0.59"/><rect x="529.0" y="335.6" width="1.0" height="15.8" fill="#3a58f0" opacity="0.63"/><rect x="529.0" y="351.0" width="1.0" height="21.1" fill="#ff4060" opacity="0.86"/><rect x="529.0" y="343.7" width="1.0" height="23.6" fill="#2a70ff" opacity="0.58"/><rect x="530.2" y="292.0" width="1.0" height="23.8" fill="#3a58f0" opacity="0.93"/><rect x="530.2" y="312.0" width="1.0" height="23.4" fill="#ff4060" opacity="0.77"/><rect x="530.2" y="351.4" width="1.0" height="20.2" fill="#ffffff" opacity="0.48"/><rect x="530.2" y="299.7" width="1.0" height="11.7" fill="#ff4060" opacity="0.63"/><rect x="531.2" y="335.1" width="0.9" height="22.7" fill="#d02080" opacity="0.94"/><rect x="531.2" y="332.1" width="0.9" height="22.5" fill="#d02080" opacity="0.80"/><rect x="531.2" y="346.6" width="0.9" height="22.9" fill="#ffffff" opacity="0.76"/><rect x="531.2" y="326.8" width="0.9" height="26.8" fill="#ff2040" opacity="0.79"/><rect x="532.2" y="291.6" width="1.0" height="25.4" fill="#4a60ff" opacity="0.72"/><rect x="532.2" y="304.2" width="1.0" height="19.6" fill="#3a58f0" opacity="0.55"/><rect x="532.2" y="323.0" width="1.0" height="13.0" fill="#e01838" opacity="0.62"/><rect x="532.2" y="290.8" width="1.0" height="11.9" fill="#e01838" opacity="0.85"/><rect x="533.1" y="348.7" width="1.0" height="12.4" fill="#ff2040" opacity="0.93"/><rect x="533.1" y="308.8" width="1.0" height="16.2" fill="#d02080" opacity="0.53"/><rect x="533.1" y="307.3" width="1.0" height="17.5" fill="#ff2040" opacity="0.72"/><rect x="533.1" y="295.3" width="1.0" height="21.5" fill="#ff2040" opacity="0.52"/><rect x="534.4" y="301.9" width="1.2" height="18.8" fill="#2a70ff" opacity="0.61"/><rect x="534.4" y="314.8" width="1.2" height="13.5" fill="#4a60ff" opacity="0.93"/><rect x="534.4" y="323.2" width="1.2" height="26.9" fill="#2a70ff" opacity="0.79"/><rect x="534.4" y="303.0" width="1.2" height="26.2" fill="#ffffff" opacity="0.77"/><rect x="536.0" y="316.7" width="0.8" height="21.1" fill="#ffffff" opacity="0.75"/><rect x="536.0" y="340.8" width="0.8" height="26.3" fill="#5a0a30" opacity="0.73"/><rect x="536.0" y="326.5" width="0.8" height="15.2" fill="#2a70ff" opacity="0.51"/><rect x="536.0" y="301.1" width="0.8" height="22.9" fill="#ff2040" opacity="0.53"/><rect x="536.7" y="339.1" width="1.2" height="18.9" fill="#2a70ff" opacity="0.92"/><rect x="536.7" y="337.9" width="1.2" height="20.2" fill="#2a70ff" opacity="0.82"/><rect x="536.7" y="292.9" width="1.2" height="27.5" fill="#ffffff" opacity="0.83"/><rect x="536.7" y="349.8" width="1.2" height="25.5" fill="#3a58f0" opacity="0.53"/><rect x="537.7" y="316.7" width="0.9" height="8.8" fill="#d02080" opacity="0.69"/><rect x="537.7" y="338.6" width="0.9" height="11.4" fill="#d02080" opacity="0.87"/><rect x="537.7" y="332.1" width="0.9" height="19.5" fill="#3a58f0" opacity="0.52"/><rect x="537.7" y="297.1" width="0.9" height="7.2" fill="#d02080" opacity="0.71"/><rect x="538.4" y="334.9" width="0.8" height="19.6" fill="#ffffff" opacity="0.53"/><rect x="538.4" y="342.5" width="0.8" height="16.7" fill="#3a58f0" opacity="0.76"/><rect x="538.4" y="347.2" width="0.8" height="20.0" fill="#4a60ff" opacity="0.65"/><rect x="538.4" y="302.9" width="0.8" height="25.0" fill="#ff2040" opacity="0.73"/><rect x="539.2" y="305.1" width="1.1" height="23.4" fill="#3a58f0" opacity="0.82"/><rect x="539.2" y="301.9" width="1.1" height="20.6" fill="#ffffff" opacity="0.53"/><rect x="539.2" y="308.7" width="1.1" height="19.7" fill="#ffffff" opacity="0.61"/><rect x="539.2" y="327.8" width="1.1" height="8.0" fill="#2a70ff" opacity="0.83"/><rect x="540.5" y="312.2" width="1.2" height="25.8" fill="#ff4060" opacity="0.94"/><rect x="540.5" y="343.8" width="1.2" height="7.6" fill="#ffffff" opacity="0.54"/><rect x="540.5" y="333.7" width="1.2" height="26.9" fill="#3a58f0" opacity="0.80"/><rect x="540.5" y="317.1" width="1.2" height="10.7" fill="#ff4060" opacity="0.63"/><rect x="541.9" y="348.9" width="0.8" height="13.5" fill="#d02080" opacity="0.82"/><rect x="541.9" y="340.3" width="0.8" height="13.6" fill="#ff2040" opacity="0.69"/><rect x="541.9" y="326.5" width="0.8" height="10.9" fill="#ff2040" opacity="0.68"/><rect x="541.9" y="334.7" width="0.8" height="15.5" fill="#3a58f0" opacity="0.72"/><rect x="542.5" y="312.8" width="0.9" height="19.0" fill="#ff4060" opacity="0.82"/><rect x="542.5" y="334.4" width="0.9" height="18.7" fill="#4a60ff" opacity="0.61"/><rect x="542.5" y="323.1" width="0.9" height="18.0" fill="#ff4060" opacity="0.94"/><rect x="542.5" y="334.7" width="0.9" height="18.9" fill="#e01838" opacity="0.86"/><rect x="543.5" y="309.7" width="0.7" height="27.0" fill="#d02080" opacity="0.65"/><rect x="543.5" y="336.8" width="0.7" height="16.9" fill="#ff4060" opacity="0.72"/><rect x="543.5" y="329.8" width="0.7" height="8.2" fill="#ffffff" opacity="0.47"/><rect x="543.5" y="320.9" width="0.7" height="27.8" fill="#ffffff" opacity="0.68"/><rect x="544.5" y="293.5" width="1.0" height="12.6" fill="#ff2040" opacity="0.81"/><rect x="544.5" y="338.5" width="1.0" height="14.4" fill="#4a60ff" opacity="0.62"/><rect x="544.5" y="323.6" width="1.0" height="17.3" fill="#4a60ff" opacity="0.74"/><rect x="544.5" y="328.3" width="1.0" height="9.3" fill="#ffffff" opacity="0.57"/><rect x="545.8" y="301.2" width="1.5" height="6.6" fill="#3a58f0" opacity="0.91"/><rect x="545.8" y="335.9" width="1.5" height="22.3" fill="#ff4060" opacity="0.62"/><rect x="545.8" y="292.4" width="1.5" height="18.8" fill="#ffffff" opacity="0.72"/><rect x="545.8" y="339.8" width="1.5" height="10.6" fill="#2a70ff" opacity="0.82"/><rect x="547.7" y="338.2" width="1.0" height="21.4" fill="#3a58f0" opacity="0.51"/><rect x="547.7" y="305.4" width="1.0" height="17.1" fill="#d02080" opacity="0.66"/><rect x="547.7" y="302.0" width="1.0" height="19.6" fill="#5a0a30" opacity="0.57"/><rect x="547.7" y="334.8" width="1.0" height="25.5" fill="#4a60ff" opacity="0.58"/><rect x="548.6" y="316.3" width="1.2" height="19.3" fill="#e01838" opacity="0.66"/><rect x="548.6" y="339.3" width="1.2" height="11.0" fill="#4a60ff" opacity="0.66"/><rect x="548.6" y="317.5" width="1.2" height="20.7" fill="#3a58f0" opacity="0.88"/><rect x="548.6" y="333.2" width="1.2" height="21.0" fill="#ff2040" opacity="0.92"/><rect x="549.6" y="309.2" width="1.0" height="27.7" fill="#d02080" opacity="0.77"/><rect x="549.6" y="292.6" width="1.0" height="8.2" fill="#ffffff" opacity="0.46"/><rect x="549.6" y="299.1" width="1.0" height="12.0" fill="#d02080" opacity="0.80"/><rect x="549.6" y="307.4" width="1.0" height="16.3" fill="#ff4060" opacity="0.63"/><rect x="550.8" y="289.2" width="1.0" height="26.3" fill="#4a60ff" opacity="0.63"/><rect x="550.8" y="289.9" width="1.0" height="12.8" fill="#ff2040" opacity="0.77"/><rect x="550.8" y="298.8" width="1.0" height="9.6" fill="#2a70ff" opacity="0.54"/><rect x="550.8" y="318.0" width="1.0" height="12.9" fill="#ff4060" opacity="0.90"/><rect x="552.0" y="313.9" width="1.3" height="21.8" fill="#ff4060" opacity="0.61"/><rect x="552.0" y="309.3" width="1.3" height="11.8" fill="#ffffff" opacity="0.63"/><rect x="552.0" y="318.9" width="1.3" height="23.3" fill="#d02080" opacity="0.90"/><rect x="552.0" y="305.0" width="1.3" height="12.5" fill="#3a58f0" opacity="0.68"/><rect x="553.5" y="304.8" width="0.7" height="10.2" fill="#ffffff" opacity="0.80"/><rect x="553.5" y="326.8" width="0.7" height="21.2" fill="#5a0a30" opacity="0.84"/><rect x="553.5" y="294.0" width="0.7" height="17.0" fill="#ffffff" opacity="0.54"/><rect x="553.5" y="343.8" width="0.7" height="26.2" fill="#d02080" opacity="0.88"/><rect x="554.2" y="318.9" width="0.9" height="17.3" fill="#4a60ff" opacity="0.64"/><rect x="554.2" y="317.4" width="0.9" height="27.8" fill="#2a70ff" opacity="0.53"/><rect x="554.2" y="289.7" width="0.9" height="9.3" fill="#ff2040" opacity="0.68"/><rect x="554.2" y="330.3" width="0.9" height="15.8" fill="#ff4060" opacity="0.95"/><rect x="555.4" y="321.2" width="1.2" height="18.8" fill="#5a0a30" opacity="0.58"/><rect x="555.4" y="329.5" width="1.2" height="11.3" fill="#ffffff" opacity="0.65"/><rect x="555.4" y="324.4" width="1.2" height="23.9" fill="#ffffff" opacity="0.85"/><rect x="555.4" y="322.4" width="1.2" height="6.3" fill="#ff4060" opacity="0.82"/><rect x="557.1" y="329.8" width="1.2" height="13.3" fill="#3a58f0" opacity="0.93"/><rect x="557.1" y="317.0" width="1.2" height="27.5" fill="#5a0a30" opacity="0.58"/><rect x="557.1" y="332.6" width="1.2" height="21.9" fill="#3a58f0" opacity="0.84"/><rect x="557.1" y="307.4" width="1.2" height="22.0" fill="#ff2040" opacity="0.82"/><rect x="558.6" y="335.7" width="1.3" height="20.2" fill="#e01838" opacity="0.94"/><rect x="558.6" y="336.5" width="1.3" height="22.3" fill="#2a70ff" opacity="0.64"/><rect x="558.6" y="321.4" width="1.3" height="26.6" fill="#ff2040" opacity="0.52"/><rect x="558.6" y="305.0" width="1.3" height="25.3" fill="#d02080" opacity="0.80"/><rect x="560.0" y="314.8" width="1.3" height="27.3" fill="#ffffff" opacity="0.55"/><rect x="560.0" y="303.1" width="1.3" height="10.4" fill="#2a70ff" opacity="0.54"/><rect x="560.0" y="298.7" width="1.3" height="11.2" fill="#2a70ff" opacity="0.63"/><rect x="560.0" y="325.5" width="1.3" height="27.6" fill="#ff4060" opacity="0.80"/><rect x="483.7" y="370.3" width="1.6" height="10.9" fill="url(#gw)" opacity="0.85"/><rect x="483.8" y="350.8" width="1.1" height="10.4" fill="url(#gw)" opacity="0.99"/><rect x="482.8" y="329.7" width="1.2" height="19.5" fill="url(#gw)" opacity="0.97"/><rect x="468.5" y="347.5" width="1.6" height="22.3" fill="url(#gw)" opacity="0.87"/><rect x="472.9" y="314.9" width="1.9" height="11.2" fill="url(#gw)" opacity="0.96"/><rect x="457.5" y="314.9" width="1.6" height="23.5" fill="url(#gw)" opacity="0.89"/><rect x="510.9" y="374.9" width="1.9" height="10.8" fill="url(#gw)" opacity="0.95"/><rect x="466.1" y="312.0" width="1.0" height="10.5" fill="url(#gw)" opacity="0.96"/><rect x="483.6" y="304.1" width="1.1" height="23.5" fill="url(#gw)" opacity="0.88"/><rect x="523.7" y="298.9" width="1.1" height="14.6" fill="url(#gw)" opacity="0.76"/><rect x="463.4" y="316.1" width="1.8" height="12.7" fill="url(#gw)" opacity="0.75"/><rect x="495.2" y="334.4" width="1.2" height="19.1" fill="url(#gw)" opacity="0.85"/><rect x="484.1" y="344.8" width="1.0" height="19.8" fill="url(#gw)" opacity="0.76"/><rect x="480.2" y="296.0" width="2.1" height="19.4" fill="url(#gw)" opacity="0.82"/><rect x="495.6" y="393.7" width="1.2" height="16.1" fill="url(#gw)" opacity="0.91"/><rect x="482.9" y="369.2" width="2.1" height="10.7" fill="url(#gw)" opacity="0.79"/><polyline points="433.0,329.4 433.7,348.7 434.4,365.4 435.1,376.0 435.8,378.5 436.5,372.3 437.2,358.7 437.9,340.4 438.6,321.2 439.3,304.6 440.0,293.6 440.7,289.2 441.4,290.1 442.1,297.6 442.8,312.6 443.5,333.2 444.2,355.7 444.9,375.7 445.6,389.1 446.3,393.2 447.0,387.2 447.7,372.3 448.4,351.5 449.1,329.0 449.8,309.2 450.5,295.5 451.2,289.5 451.9,289.4 452.6,292.9 453.3,300.6 454.0,311.5 454.7,323.7 455.4,334.9 456.1,342.7 456.8,345.6 457.5,343.0 458.2,335.4 458.9,324.4 459.6,312.2 460.3,301.2 461.0,293.2 461.7,289.4 462.4,289.2 463.1,293.0 463.8,302.0 464.5,315.1 465.2,330.1 465.9,344.2 466.6,354.5 467.3,358.9 468.0,356.5 468.7,347.8 469.4,334.6 470.1,319.5 470.8,305.5 471.5,295.2 472.2,289.9 472.9,289.2 473.6,293.7 474.3,305.5 475.0,323.6 475.7,344.9 476.4,365.3 477.1,380.9 477.8,388.3 478.5,386.0 479.2,374.6 479.9,356.4 480.6,335.0 481.3,314.7 482.0,299.2 482.7,290.7 483.4,289.0 484.1,292.5 484.8,302.9 485.5,319.3 486.2,339.2 486.9,358.8 487.6,374.2 488.3,382.3 489.0,381.3 489.7,371.5 490.4,354.9 491.1,334.9 491.8,315.4 492.5,300.1 493.2,291.2 493.9,289.0 494.6,290.5 495.3,295.8 496.0,304.5 496.7,315.4 497.4,326.3 498.1,335.2 498.8,340.2 499.5,340.3 500.2,335.5 500.9,326.7 501.6,315.7 502.3,304.8 503.0,296.0 503.7,290.6 504.4,289.0 505.1,291.4 505.8,301.3 506.5,318.6 507.2,340.9 507.9,363.9 508.6,383.1 509.3,394.6 510.0,396.1 510.7,387.2 511.4,369.8 512.1,347.4 512.8,324.5 513.5,305.4 514.2,293.3 514.9,289.1 515.6,290.5 516.3,298.1 517.0,312.3 517.7,331.0 518.4,350.8 519.1,367.9 519.8,378.8 520.5,381.1 521.2,374.5 521.9,360.4 522.6,341.5 523.3,321.7 524.0,304.8 524.7,293.6 525.4,289.2 526.1,290.1 526.8,297.5 527.5,312.1 528.2,332.0 528.9,353.7 529.6,372.9 530.3,385.6 531.0,389.4 531.7,383.4 532.4,368.8 533.1,348.7 533.8,327.1 534.5,308.1 535.2,295.1 535.9,289.4 536.6,289.5 537.3,293.9 538.0,303.2 538.7,316.4 539.4,331.0 540.1,344.3 540.8,353.6 541.5,357.0 542.2,353.7 542.9,344.5 543.6,331.2 544.3,316.5 545.0,303.3 545.7,293.9 546.4,289.5 547.1,289.3 547.8,294.0 548.5,304.8 549.2,320.5 549.9,338.5 550.6,355.3 551.3,367.5 552.0,372.6 552.7,369.6 553.4,359.0 554.1,343.1 554.8,325.1 555.5,308.4 556.2,296.2 556.9,290.0 557.6,289.2 558.3,294.2 559.0,307.0 559.7,326.4 560.4,349.2 561.1,371.0 561.8,387.4 562.5,395.1 563.2,392.5 563.9,380.1 564.6,360.5 565.3,337.7 566.0,316.1 566.7,299.7 567.4,290.8 568.1,289.1 568.8,293.0 569.5,304.4 570.2,322.5 570.9,344.3 571.6,365.6 572.3,382.3 573.0,390.8 573.7,389.6 574.4,378.7 575.1,360.5 575.8,338.6 576.5,317.4 577.2,300.8 577.9,291.3 578.6,289.0 579.3,291.5 580.0,299.9 580.7,313.8 581.4,330.9 582.1,348.2 582.8,362.1 583.5,369.9 584.2,369.8 584.9,362.0 585.6,348.1 586.3,330.8 587.0,313.6 587.7,299.8 588.4,291.5 589.1,289.0 589.8,291.4 590.5,300.9 591.2,317.5 591.9,338.6 592.6,360.3 593.3,378.4 594.0,389.1 594.7,390.3 595.4,381.7 596.1,365.0 596.8,343.8 597.5,322.2 598.2,304.2 598.9,292.9 599.6,289.1 600.3,290.8 601.0,300.0 601.7,316.9 602.4,339.1 603.1,362.5 603.8,382.5 604.5,395.1 605.2,397.7 605.9,389.7 606.6,372.8 607.3,350.5 608.0,327.1 608.7,307.3 609.4,294.2 610.1,289.2 610.8,290.2 611.5,297.6 612.2,312.1 612.9,331.8 613.6,353.0 614.3,371.8 615.0,384.2 615.7,387.7 616.4,381.6 617.1,367.1 617.8,347.3 618.5,326.0 619.2,307.5 619.9,294.8 620.6,289.4 621.3,289.7 622.0,295.4 622.7,307.5 623.4,324.4" transform="translate(1,0.3)" fill="none" stroke="#3a80f0" stroke-width="0.85" opacity="0.85"/><polyline points="433.0,329.4 433.7,348.7 434.4,365.4 435.1,376.0 435.8,378.5 436.5,372.3 437.2,358.7 437.9,340.4 438.6,321.2 439.3,304.6 440.0,293.6 440.7,289.2 441.4,290.1 442.1,297.6 442.8,312.6 443.5,333.2 444.2,355.7 444.9,375.7 445.6,389.1 446.3,393.2 447.0,387.2 447.7,372.3 448.4,351.5 449.1,329.0 449.8,309.2 450.5,295.5 451.2,289.5 451.9,289.4 452.6,292.9 453.3,300.6 454.0,311.5 454.7,323.7 455.4,334.9 456.1,342.7 456.8,345.6 457.5,343.0 458.2,335.4 458.9,324.4 459.6,312.2 460.3,301.2 461.0,293.2 461.7,289.4 462.4,289.2 463.1,293.0 463.8,302.0 464.5,315.1 465.2,330.1 465.9,344.2 466.6,354.5 467.3,358.9 468.0,356.5 468.7,347.8 469.4,334.6 470.1,319.5 470.8,305.5 471.5,295.2 472.2,289.9 472.9,289.2 473.6,293.7 474.3,305.5 475.0,323.6 475.7,344.9 476.4,365.3 477.1,380.9 477.8,388.3 478.5,386.0 479.2,374.6 479.9,356.4 480.6,335.0 481.3,314.7 482.0,299.2 482.7,290.7 483.4,289.0 484.1,292.5 484.8,302.9 485.5,319.3 486.2,339.2 486.9,358.8 487.6,374.2 488.3,382.3 489.0,381.3 489.7,371.5 490.4,354.9 491.1,334.9 491.8,315.4 492.5,300.1 493.2,291.2 493.9,289.0 494.6,290.5 495.3,295.8 496.0,304.5 496.7,315.4 497.4,326.3 498.1,335.2 498.8,340.2 499.5,340.3 500.2,335.5 500.9,326.7 501.6,315.7 502.3,304.8 503.0,296.0 503.7,290.6 504.4,289.0 505.1,291.4 505.8,301.3 506.5,318.6 507.2,340.9 507.9,363.9 508.6,383.1 509.3,394.6 510.0,396.1 510.7,387.2 511.4,369.8 512.1,347.4 512.8,324.5 513.5,305.4 514.2,293.3 514.9,289.1 515.6,290.5 516.3,298.1 517.0,312.3 517.7,331.0 518.4,350.8 519.1,367.9 519.8,378.8 520.5,381.1 521.2,374.5 521.9,360.4 522.6,341.5 523.3,321.7 524.0,304.8 524.7,293.6 525.4,289.2 526.1,290.1 526.8,297.5 527.5,312.1 528.2,332.0 528.9,353.7 529.6,372.9 530.3,385.6 531.0,389.4 531.7,383.4 532.4,368.8 533.1,348.7 533.8,327.1 534.5,308.1 535.2,295.1 535.9,289.4 536.6,289.5 537.3,293.9 538.0,303.2 538.7,316.4 539.4,331.0 540.1,344.3 540.8,353.6 541.5,357.0 542.2,353.7 542.9,344.5 543.6,331.2 544.3,316.5 545.0,303.3 545.7,293.9 546.4,289.5 547.1,289.3 547.8,294.0 548.5,304.8 549.2,320.5 549.9,338.5 550.6,355.3 551.3,367.5 552.0,372.6 552.7,369.6 553.4,359.0 554.1,343.1 554.8,325.1 555.5,308.4 556.2,296.2 556.9,290.0 557.6,289.2 558.3,294.2 559.0,307.0 559.7,326.4 560.4,349.2 561.1,371.0 561.8,387.4 562.5,395.1 563.2,392.5 563.9,380.1 564.6,360.5 565.3,337.7 566.0,316.1 566.7,299.7 567.4,290.8 568.1,289.1 568.8,293.0 569.5,304.4 570.2,322.5 570.9,344.3 571.6,365.6 572.3,382.3 573.0,390.8 573.7,389.6 574.4,378.7 575.1,360.5 575.8,338.6 576.5,317.4 577.2,300.8 577.9,291.3 578.6,289.0 579.3,291.5 580.0,299.9 580.7,313.8 581.4,330.9 582.1,348.2 582.8,362.1 583.5,369.9 584.2,369.8 584.9,362.0 585.6,348.1 586.3,330.8 587.0,313.6 587.7,299.8 588.4,291.5 589.1,289.0 589.8,291.4 590.5,300.9 591.2,317.5 591.9,338.6 592.6,360.3 593.3,378.4 594.0,389.1 594.7,390.3 595.4,381.7 596.1,365.0 596.8,343.8 597.5,322.2 598.2,304.2 598.9,292.9 599.6,289.1 600.3,290.8 601.0,300.0 601.7,316.9 602.4,339.1 603.1,362.5 603.8,382.5 604.5,395.1 605.2,397.7 605.9,389.7 606.6,372.8 607.3,350.5 608.0,327.1 608.7,307.3 609.4,294.2 610.1,289.2 610.8,290.2 611.5,297.6 612.2,312.1 612.9,331.8 613.6,353.0 614.3,371.8 615.0,384.2 615.7,387.7 616.4,381.6 617.1,367.1 617.8,347.3 618.5,326.0 619.2,307.5 619.9,294.8 620.6,289.4 621.3,289.7 622.0,295.4 622.7,307.5 623.4,324.4" fill="none" stroke="#ff3040" stroke-width="0.85" opacity="0.9"/><polyline points="433.0,289.8 433.7,293.8 434.4,301.0 435.1,310.4 435.8,320.1 436.5,328.2 437.2,332.9 437.9,333.3 438.6,329.3 439.3,321.7 440.0,312.1 440.7,302.6 441.4,294.9 442.1,290.3 442.8,289.0 443.5,290.2 444.2,294.7 444.9,302.3 445.6,311.8 446.3,321.4 447.0,329.1 447.7,333.3 448.4,333.0 449.1,328.4 449.8,320.4 450.5,310.7 451.2,301.3 451.9,294.0 452.6,289.9 453.3,289.0 454.0,290.6 454.7,295.6 455.4,303.6 456.1,313.3 456.8,322.8 457.5,330.0 458.2,333.6 458.9,332.6 459.6,327.4 460.3,319.0 461.0,309.3 461.7,300.1 462.4,293.2 463.1,289.6 463.8,289.1 464.5,292.2 465.2,300.2 465.9,312.5 466.6,326.9 467.3,340.4 468.0,350.4 468.7,354.7 469.4,352.4 470.1,343.9 470.8,331.1 471.5,316.7 472.2,303.5 472.9,294.0 473.6,289.5 474.3,289.2 475.0,292.8 475.7,301.1 476.4,313.2 477.1,326.9 477.8,339.4 478.5,348.2 479.2,351.4 479.9,348.2 480.6,339.5 481.3,326.9 482.0,313.3 482.7,301.2 483.4,292.8 484.1,289.2 484.8,289.8 485.5,297.3 486.2,312.9 486.9,334.6 487.6,358.4 488.3,379.5 489.0,393.5 489.7,397.4 490.4,390.4 491.1,374.0 491.8,351.6 492.5,327.9 493.2,307.6 493.9,294.2 494.6,289.2 495.3,290.1 496.0,296.9 496.7,310.1 497.4,327.7 498.1,346.5 498.8,362.5 499.5,372.6 500.2,374.4 500.9,367.6 501.6,353.7 502.3,335.6 503.0,317.1 503.7,301.7 504.4,292.2 505.1,289.0 505.8,290.0 506.5,294.4 507.2,302.4 507.9,312.6 508.6,323.2 509.3,332.0 510.0,337.1 510.7,337.4 511.4,332.8 512.1,324.5 512.8,314.0 513.5,303.6 514.2,295.2 514.9,290.3 515.6,289.0 516.3,291.6 517.0,300.9 517.7,316.5 518.4,335.9 519.1,355.3 519.8,370.8 520.5,379.0 521.2,378.2 521.9,368.6 522.6,352.2 523.3,332.5 524.0,313.5 524.7,298.8 525.4,290.7 526.1,289.0 526.8,291.3 527.5,298.1 528.2,308.8 528.9,321.7 529.6,334.3 530.3,343.8 531.0,348.4 531.7,347.0 532.4,339.9 533.1,328.7 533.8,315.6 534.5,303.4 535.2,294.4 535.9,289.7 536.6,289.1 537.3,292.8 538.0,302.2 538.7,316.4 539.4,333.0 540.1,348.5 540.8,359.9 541.5,364.6 542.2,361.7 542.9,351.8 543.6,337.0 544.3,320.4 545.0,305.3 545.7,294.6 546.4,289.5 547.1,289.4 547.8,294.8 548.5,307.1 549.2,324.9 549.9,344.9 550.6,363.2 551.3,375.8 552.0,380.2 552.7,375.4 553.4,362.4 554.1,344.0 554.8,324.0 555.5,306.4 556.2,294.4 556.9,289.3 557.6,289.9 558.3,296.9 559.0,311.4 559.7,331.5 560.4,353.4 561.1,372.7 561.8,385.4 562.5,388.7 563.2,382.0 563.9,366.7 564.6,346.0 565.3,324.2 566.0,305.7 566.7,293.6 567.4,289.1 568.1,290.5 568.8,299.0 569.5,315.3 570.2,337.0 570.9,359.9 571.6,379.4 572.3,391.5 573.0,393.4 573.7,384.9 574.4,367.7 575.1,345.5 575.8,322.8 576.5,304.2 577.2,292.7 577.9,289.0 578.6,290.5 579.3,297.2 580.0,309.0 580.7,324.1 581.4,339.7 582.1,352.4 582.8,359.7 583.5,360.0 584.2,353.2 584.9,340.7 585.6,325.3 586.3,310.0 587.0,297.9 587.7,290.8 588.4,289.0 589.1,291.0 589.8,297.7 590.5,309.0 591.2,323.0 591.9,336.9 592.6,347.9 593.3,353.6 594.0,352.9 594.7,345.8 595.4,334.0 596.1,319.8 596.8,306.2 597.5,295.8 598.2,290.1 598.9,289.0 599.6,291.8 600.3,299.9 601.0,312.7 601.7,328.0 602.4,342.7 603.1,353.8 603.8,359.1 604.5,357.2 605.2,348.7 605.9,335.4 606.6,320.0 607.3,305.7 608.0,295.1 608.7,289.8 609.4,289.1 610.1,292.4 610.8,300.6 611.5,312.9 612.2,327.0 612.9,340.3 613.6,349.9 614.3,353.8 615.0,351.1 615.7,342.5 616.4,329.7 617.1,315.5 617.8,302.7 618.5,293.6 619.2,289.4 619.9,289.5 620.6,295.1 621.3,307.8 622.0,325.9 622.7,346.2 623.4,364.6" transform="translate(1,0.3)" fill="none" stroke="#3a80f0" stroke-width="0.85" opacity="0.85"/><polyline points="433.0,289.8 433.7,293.8 434.4,301.0 435.1,310.4 435.8,320.1 436.5,328.2 437.2,332.9 437.9,333.3 438.6,329.3 439.3,321.7 440.0,312.1 440.7,302.6 441.4,294.9 442.1,290.3 442.8,289.0 443.5,290.2 444.2,294.7 444.9,302.3 445.6,311.8 446.3,321.4 447.0,329.1 447.7,333.3 448.4,333.0 449.1,328.4 449.8,320.4 450.5,310.7 451.2,301.3 451.9,294.0 452.6,289.9 453.3,289.0 454.0,290.6 454.7,295.6 455.4,303.6 456.1,313.3 456.8,322.8 457.5,330.0 458.2,333.6 458.9,332.6 459.6,327.4 460.3,319.0 461.0,309.3 461.7,300.1 462.4,293.2 463.1,289.6 463.8,289.1 464.5,292.2 465.2,300.2 465.9,312.5 466.6,326.9 467.3,340.4 468.0,350.4 468.7,354.7 469.4,352.4 470.1,343.9 470.8,331.1 471.5,316.7 472.2,303.5 472.9,294.0 473.6,289.5 474.3,289.2 475.0,292.8 475.7,301.1 476.4,313.2 477.1,326.9 477.8,339.4 478.5,348.2 479.2,351.4 479.9,348.2 480.6,339.5 481.3,326.9 482.0,313.3 482.7,301.2 483.4,292.8 484.1,289.2 484.8,289.8 485.5,297.3 486.2,312.9 486.9,334.6 487.6,358.4 488.3,379.5 489.0,393.5 489.7,397.4 490.4,390.4 491.1,374.0 491.8,351.6 492.5,327.9 493.2,307.6 493.9,294.2 494.6,289.2 495.3,290.1 496.0,296.9 496.7,310.1 497.4,327.7 498.1,346.5 498.8,362.5 499.5,372.6 500.2,374.4 500.9,367.6 501.6,353.7 502.3,335.6 503.0,317.1 503.7,301.7 504.4,292.2 505.1,289.0 505.8,290.0 506.5,294.4 507.2,302.4 507.9,312.6 508.6,323.2 509.3,332.0 510.0,337.1 510.7,337.4 511.4,332.8 512.1,324.5 512.8,314.0 513.5,303.6 514.2,295.2 514.9,290.3 515.6,289.0 516.3,291.6 517.0,300.9 517.7,316.5 518.4,335.9 519.1,355.3 519.8,370.8 520.5,379.0 521.2,378.2 521.9,368.6 522.6,352.2 523.3,332.5 524.0,313.5 524.7,298.8 525.4,290.7 526.1,289.0 526.8,291.3 527.5,298.1 528.2,308.8 528.9,321.7 529.6,334.3 530.3,343.8 531.0,348.4 531.7,347.0 532.4,339.9 533.1,328.7 533.8,315.6 534.5,303.4 535.2,294.4 535.9,289.7 536.6,289.1 537.3,292.8 538.0,302.2 538.7,316.4 539.4,333.0 540.1,348.5 540.8,359.9 541.5,364.6 542.2,361.7 542.9,351.8 543.6,337.0 544.3,320.4 545.0,305.3 545.7,294.6 546.4,289.5 547.1,289.4 547.8,294.8 548.5,307.1 549.2,324.9 549.9,344.9 550.6,363.2 551.3,375.8 552.0,380.2 552.7,375.4 553.4,362.4 554.1,344.0 554.8,324.0 555.5,306.4 556.2,294.4 556.9,289.3 557.6,289.9 558.3,296.9 559.0,311.4 559.7,331.5 560.4,353.4 561.1,372.7 561.8,385.4 562.5,388.7 563.2,382.0 563.9,366.7 564.6,346.0 565.3,324.2 566.0,305.7 566.7,293.6 567.4,289.1 568.1,290.5 568.8,299.0 569.5,315.3 570.2,337.0 570.9,359.9 571.6,379.4 572.3,391.5 573.0,393.4 573.7,384.9 574.4,367.7 575.1,345.5 575.8,322.8 576.5,304.2 577.2,292.7 577.9,289.0 578.6,290.5 579.3,297.2 580.0,309.0 580.7,324.1 581.4,339.7 582.1,352.4 582.8,359.7 583.5,360.0 584.2,353.2 584.9,340.7 585.6,325.3 586.3,310.0 587.0,297.9 587.7,290.8 588.4,289.0 589.1,291.0 589.8,297.7 590.5,309.0 591.2,323.0 591.9,336.9 592.6,347.9 593.3,353.6 594.0,352.9 594.7,345.8 595.4,334.0 596.1,319.8 596.8,306.2 597.5,295.8 598.2,290.1 598.9,289.0 599.6,291.8 600.3,299.9 601.0,312.7 601.7,328.0 602.4,342.7 603.1,353.8 603.8,359.1 604.5,357.2 605.2,348.7 605.9,335.4 606.6,320.0 607.3,305.7 608.0,295.1 608.7,289.8 609.4,289.1 610.1,292.4 610.8,300.6 611.5,312.9 612.2,327.0 612.9,340.3 613.6,349.9 614.3,353.8 615.0,351.1 615.7,342.5 616.4,329.7 617.1,315.5 617.8,302.7 618.5,293.6 619.2,289.4 619.9,289.5 620.6,295.1 621.3,307.8 622.0,325.9 622.7,346.2 623.4,364.6" fill="none" stroke="#ff3040" stroke-width="0.85" opacity="0.9"/><polyline points="433.0,511.6 433.7,507.9 434.4,500.7 435.1,491.1 435.8,480.4 436.5,470.7 437.2,463.8 437.9,460.9 438.6,462.6 439.3,468.7 440.0,477.8 440.7,488.4 441.4,498.5 442.1,506.4 442.8,511.0 443.5,512.2 444.2,511.2 444.9,507.7 445.6,501.6 446.3,493.8 447.0,485.6 447.7,478.5 448.4,473.8 449.1,472.5 449.8,474.7 450.5,480.1 451.2,487.6 451.9,495.8 452.6,503.3 453.3,508.8 454.0,511.7 454.7,512.1 455.4,509.7 456.1,502.9 456.8,492.4 457.5,479.6 458.2,466.7 458.9,456.2 459.6,450.0 460.3,449.2 461.0,454.1 461.7,463.7 462.4,476.2 463.1,489.2 463.8,500.5 464.5,508.4 465.2,511.9 465.9,512.0 466.6,510.1 467.3,505.6 468.0,499.3 468.7,491.9 469.4,484.8 470.1,479.4 470.8,476.6 471.5,477.0 472.2,480.5 472.9,486.4 473.6,493.7 474.3,500.9 475.0,506.9 475.7,510.8 476.4,512.2 477.1,511.6 477.8,508.4 478.5,502.2 479.2,493.7 479.9,484.4 480.6,475.9 481.3,469.8 482.0,467.3 482.7,468.8 483.4,474.0 484.1,482.0 484.8,491.3 485.5,500.1 486.2,507.1 486.9,511.1 487.6,512.2 488.3,511.3 489.0,508.1 489.7,502.6 490.4,495.5 491.1,488.1 491.8,481.7 492.5,477.4 493.2,476.2 493.9,478.2 494.6,483.0 495.3,489.8 496.0,497.3 496.7,504.1 497.4,509.1 498.1,511.7 498.8,512.2 499.5,510.5 500.2,506.1 500.9,499.1 501.6,490.6 502.3,482.1 503.0,475.2 503.7,471.0 504.4,470.5 505.1,473.7 505.8,480.1 506.5,488.3 507.2,497.0 507.9,504.5 508.6,509.6 509.3,512.0 510.0,512.0 510.7,510.0 511.4,505.4 512.1,498.7 512.8,490.9 513.5,483.5 514.2,477.8 514.9,474.9 515.6,475.3 516.3,478.9 517.0,485.2 517.7,492.8 518.4,500.4 519.1,506.6 519.8,510.7 520.5,512.2 521.2,511.5 521.9,507.3 522.6,499.2 523.3,488.2 524.0,476.1 524.7,465.1 525.4,457.1 526.1,453.8 526.8,455.7 527.5,462.5 528.2,472.9 528.9,485.0 529.6,496.5 530.3,505.5 531.0,510.8 531.7,512.2 532.4,511.2 533.1,507.7 533.8,501.5 534.5,493.5 535.2,485.2 535.9,478.0 536.6,473.2 537.3,471.8 538.0,474.0 538.7,479.5 539.4,487.1 540.1,495.4 540.8,503.1 541.5,508.7 542.2,511.7 542.9,512.1 543.6,509.8 544.3,503.3 545.0,493.0 545.7,480.5 546.4,468.0 547.1,457.8 547.8,451.7 548.5,450.9 549.2,455.6 549.9,464.9 550.6,477.0 551.3,489.7 552.0,500.8 552.7,508.4 553.4,511.9 554.1,511.9 554.8,508.0 555.5,499.2 556.2,486.5 556.9,471.8 557.6,457.7 558.3,446.8 559.0,441.2 559.7,441.9 560.4,448.8 561.1,460.7 561.8,475.1 562.5,489.6 563.2,501.6 563.9,509.3 564.6,512.1 565.3,511.6 566.0,508.0 566.7,501.1 567.4,491.7 568.1,481.3 568.8,471.8 569.5,465.0 570.2,462.1 570.9,463.8 571.6,469.6 572.3,478.5 573.0,488.8 573.7,498.7 574.4,506.4 575.1,511.0 575.8,512.2 576.5,511.3 577.2,507.7 577.9,501.6 578.6,493.7 579.3,485.5 580.0,478.3 580.7,473.5 581.4,472.1 582.1,474.3 582.8,479.7 583.5,487.3 584.2,495.6 584.9,503.1 585.6,508.7 586.3,511.7 587.0,512.1 587.7,509.7 588.4,502.9 589.1,492.1 589.8,479.0 590.5,465.9 591.2,455.1 591.9,448.7 592.6,447.9 593.3,452.8 594.0,462.6 594.7,475.3 595.4,488.6 596.1,500.2 596.8,508.2 597.5,511.9 598.2,511.9 598.9,508.2 599.6,500.0 600.3,488.1 601.0,474.2 601.7,461.0 602.4,450.7 603.1,445.4 603.8,446.1 604.5,452.6 605.2,463.7 605.9,477.3 606.6,490.9 607.3,502.2 608.0,509.4 608.7,512.1 609.4,511.3 610.1,506.0 610.8,495.8 611.5,481.9 612.2,466.5 612.9,452.5 613.6,442.4 614.3,438.1 615.0,440.5 615.7,449.1 616.4,462.3 617.1,477.5 617.8,492.2 618.5,503.6 619.2,510.3 619.9,512.2 620.6,510.8 621.3,505.6 622.0,496.5 622.7,484.9 623.4,472.6" transform="translate(1,0.3)" fill="none" stroke="#40a0f0" stroke-width="0.9" opacity="0.95"/><polyline points="433.0,511.6 433.7,507.9 434.4,500.7 435.1,491.1 435.8,480.4 436.5,470.7 437.2,463.8 437.9,460.9 438.6,462.6 439.3,468.7 440.0,477.8 440.7,488.4 441.4,498.5 442.1,506.4 442.8,511.0 443.5,512.2 444.2,511.2 444.9,507.7 445.6,501.6 446.3,493.8 447.0,485.6 447.7,478.5 448.4,473.8 449.1,472.5 449.8,474.7 450.5,480.1 451.2,487.6 451.9,495.8 452.6,503.3 453.3,508.8 454.0,511.7 454.7,512.1 455.4,509.7 456.1,502.9 456.8,492.4 457.5,479.6 458.2,466.7 458.9,456.2 459.6,450.0 460.3,449.2 461.0,454.1 461.7,463.7 462.4,476.2 463.1,489.2 463.8,500.5 464.5,508.4 465.2,511.9 465.9,512.0 466.6,510.1 467.3,505.6 468.0,499.3 468.7,491.9 469.4,484.8 470.1,479.4 470.8,476.6 471.5,477.0 472.2,480.5 472.9,486.4 473.6,493.7 474.3,500.9 475.0,506.9 475.7,510.8 476.4,512.2 477.1,511.6 477.8,508.4 478.5,502.2 479.2,493.7 479.9,484.4 480.6,475.9 481.3,469.8 482.0,467.3 482.7,468.8 483.4,474.0 484.1,482.0 484.8,491.3 485.5,500.1 486.2,507.1 486.9,511.1 487.6,512.2 488.3,511.3 489.0,508.1 489.7,502.6 490.4,495.5 491.1,488.1 491.8,481.7 492.5,477.4 493.2,476.2 493.9,478.2 494.6,483.0 495.3,489.8 496.0,497.3 496.7,504.1 497.4,509.1 498.1,511.7 498.8,512.2 499.5,510.5 500.2,506.1 500.9,499.1 501.6,490.6 502.3,482.1 503.0,475.2 503.7,471.0 504.4,470.5 505.1,473.7 505.8,480.1 506.5,488.3 507.2,497.0 507.9,504.5 508.6,509.6 509.3,512.0 510.0,512.0 510.7,510.0 511.4,505.4 512.1,498.7 512.8,490.9 513.5,483.5 514.2,477.8 514.9,474.9 515.6,475.3 516.3,478.9 517.0,485.2 517.7,492.8 518.4,500.4 519.1,506.6 519.8,510.7 520.5,512.2 521.2,511.5 521.9,507.3 522.6,499.2 523.3,488.2 524.0,476.1 524.7,465.1 525.4,457.1 526.1,453.8 526.8,455.7 527.5,462.5 528.2,472.9 528.9,485.0 529.6,496.5 530.3,505.5 531.0,510.8 531.7,512.2 532.4,511.2 533.1,507.7 533.8,501.5 534.5,493.5 535.2,485.2 535.9,478.0 536.6,473.2 537.3,471.8 538.0,474.0 538.7,479.5 539.4,487.1 540.1,495.4 540.8,503.1 541.5,508.7 542.2,511.7 542.9,512.1 543.6,509.8 544.3,503.3 545.0,493.0 545.7,480.5 546.4,468.0 547.1,457.8 547.8,451.7 548.5,450.9 549.2,455.6 549.9,464.9 550.6,477.0 551.3,489.7 552.0,500.8 552.7,508.4 553.4,511.9 554.1,511.9 554.8,508.0 555.5,499.2 556.2,486.5 556.9,471.8 557.6,457.7 558.3,446.8 559.0,441.2 559.7,441.9 560.4,448.8 561.1,460.7 561.8,475.1 562.5,489.6 563.2,501.6 563.9,509.3 564.6,512.1 565.3,511.6 566.0,508.0 566.7,501.1 567.4,491.7 568.1,481.3 568.8,471.8 569.5,465.0 570.2,462.1 570.9,463.8 571.6,469.6 572.3,478.5 573.0,488.8 573.7,498.7 574.4,506.4 575.1,511.0 575.8,512.2 576.5,511.3 577.2,507.7 577.9,501.6 578.6,493.7 579.3,485.5 580.0,478.3 580.7,473.5 581.4,472.1 582.1,474.3 582.8,479.7 583.5,487.3 584.2,495.6 584.9,503.1 585.6,508.7 586.3,511.7 587.0,512.1 587.7,509.7 588.4,502.9 589.1,492.1 589.8,479.0 590.5,465.9 591.2,455.1 591.9,448.7 592.6,447.9 593.3,452.8 594.0,462.6 594.7,475.3 595.4,488.6 596.1,500.2 596.8,508.2 597.5,511.9 598.2,511.9 598.9,508.2 599.6,500.0 600.3,488.1 601.0,474.2 601.7,461.0 602.4,450.7 603.1,445.4 603.8,446.1 604.5,452.6 605.2,463.7 605.9,477.3 606.6,490.9 607.3,502.2 608.0,509.4 608.7,512.1 609.4,511.3 610.1,506.0 610.8,495.8 611.5,481.9 612.2,466.5 612.9,452.5 613.6,442.4 614.3,438.1 615.0,440.5 615.7,449.1 616.4,462.3 617.1,477.5 617.8,492.2 618.5,503.6 619.2,510.3 619.9,512.2 620.6,510.8 621.3,505.6 622.0,496.5 622.7,484.9 623.4,472.6" fill="none" stroke="#ff3040" stroke-width="0.9" opacity="1"/><polyline points="433.0,539.0 433.7,538.0 434.4,534.8 435.1,529.5 435.8,523.0 436.5,516.3 437.2,511.0 437.9,507.9 438.6,507.7 439.3,510.5 440.0,515.8 440.7,522.3 441.4,528.9 442.1,534.4 442.8,537.8 443.5,539.0 444.2,538.2 444.9,534.3 445.6,527.1 446.3,517.7 447.0,507.6 447.7,498.9 448.4,493.3 449.1,491.8 449.8,494.9 450.5,501.9 451.2,511.4 451.9,521.4 452.6,530.2 453.3,536.2 454.0,538.8 454.7,538.8 455.4,536.6 456.1,532.0 456.8,525.4 457.5,518.1 458.2,511.4 458.9,506.6 459.6,504.8 460.3,506.2 461.0,510.6 461.7,517.1 462.4,524.4 463.1,531.1 463.8,536.1 464.5,538.6 465.2,538.9 465.9,537.5 466.6,533.8 467.3,528.1 468.0,521.4 468.7,515.0 469.4,510.0 470.1,507.5 470.8,508.0 471.5,511.4 472.2,517.0 472.9,523.7 473.6,530.2 474.3,535.3 475.0,538.2 475.7,539.0 476.4,538.0 477.1,534.7 477.8,529.1 478.5,522.0 479.2,514.8 479.9,508.9 480.6,505.5 481.3,505.2 482.0,508.0 482.7,513.6 483.4,520.6 484.1,527.8 484.8,533.8 485.5,537.6 486.2,539.0 486.9,538.6 487.6,536.2 488.3,531.6 489.0,525.5 489.7,519.0 490.4,513.4 491.1,509.6 491.8,508.6 492.5,510.4 493.2,514.8 493.9,520.9 494.6,527.4 495.3,533.1 496.0,537.1 496.7,538.8 497.4,538.7 498.1,535.7 498.8,529.2 499.5,519.8 500.2,509.3 500.9,499.5 501.6,492.4 502.3,489.4 503.0,491.3 503.7,497.4 504.4,506.7 505.1,517.3 505.8,527.2 506.5,534.5 507.2,538.3 507.9,539.0 508.6,538.1 509.3,535.7 510.0,531.9 510.7,527.5 511.4,523.1 512.1,519.7 512.8,517.9 513.5,518.2 514.2,520.4 514.9,524.1 515.6,528.5 516.3,532.9 517.0,536.4 517.7,538.4 518.4,539.0 519.1,538.2 519.8,535.2 520.5,530.1 521.2,523.5 521.9,516.8 522.6,511.3 523.3,507.9 524.0,507.5 524.7,510.0 525.4,515.1 526.1,521.6 526.8,528.3 527.5,533.9 528.2,537.6 528.9,539.0 529.6,538.7 530.3,537.0 531.0,533.8 531.7,529.4 532.4,524.7 533.1,520.5 533.8,517.7 534.5,516.8 535.2,518.1 535.9,521.2 536.6,525.6 537.3,530.3 538.0,534.5 538.7,537.5 539.4,538.9 540.1,538.8 540.8,536.6 541.5,531.4 542.2,523.9 542.9,515.4 543.6,507.4 544.3,501.6 545.0,499.0 545.7,500.3 546.4,505.2 547.1,512.6 547.8,521.1 548.5,529.1 549.2,535.1 549.9,538.4 550.6,539.0 551.3,538.0 552.0,535.4 552.7,531.1 553.4,526.0 554.1,521.0 554.8,517.0 555.5,514.9 556.2,515.1 556.9,517.5 557.6,521.6 558.3,526.7 559.0,531.8 559.7,535.8 560.4,538.3 561.1,539.0 561.8,538.5 562.5,536.2 563.2,532.4 563.9,527.4 564.6,522.3 565.3,518.0 566.0,515.3 566.7,514.8 567.4,516.7 568.1,520.5 568.8,525.4 569.5,530.5 570.2,534.9 570.9,537.8 571.6,539.0 572.3,538.7 573.0,536.3 573.7,531.7 574.4,525.3 575.1,518.4 575.8,512.2 576.5,508.0 577.2,506.6 577.9,508.3 578.6,512.7 579.3,519.0 580.0,526.0 580.7,532.2 581.4,536.6 582.1,538.8 582.8,538.9 583.5,536.9 584.2,532.1 584.9,525.2 585.6,517.1 586.3,509.6 587.0,503.9 587.7,501.3 588.4,502.4 589.1,506.8 589.8,513.7 590.5,521.7 591.2,529.3 591.9,535.1 592.6,538.3 593.3,539.0 594.0,537.5 594.7,532.9 595.4,525.6 596.1,516.8 596.8,507.9 597.5,500.8 598.2,496.9 598.9,497.0 599.6,501.0 600.3,508.2 601.0,517.1 601.7,526.0 602.4,533.2 603.1,537.6 603.8,539.0 604.5,538.3 605.2,535.4 605.9,530.3 606.6,523.6 607.3,516.6 608.0,510.6 608.7,506.8 609.4,506.0 610.1,508.4 610.8,513.4 611.5,520.1 612.2,527.2 612.9,533.2 613.6,537.2 614.3,538.9 615.0,538.7 615.7,536.8 616.4,532.8 617.1,527.2 617.8,521.1 618.5,515.6 619.2,511.8 619.9,510.4 620.6,511.7 621.3,515.6 622.0,521.1 622.7,527.2 623.4,532.7" transform="translate(1,0.3)" fill="none" stroke="#40a0f0" stroke-width="0.9" opacity="0.95"/><polyline points="433.0,539.0 433.7,538.0 434.4,534.8 435.1,529.5 435.8,523.0 436.5,516.3 437.2,511.0 437.9,507.9 438.6,507.7 439.3,510.5 440.0,515.8 440.7,522.3 441.4,528.9 442.1,534.4 442.8,537.8 443.5,539.0 444.2,538.2 444.9,534.3 445.6,527.1 446.3,517.7 447.0,507.6 447.7,498.9 448.4,493.3 449.1,491.8 449.8,494.9 450.5,501.9 451.2,511.4 451.9,521.4 452.6,530.2 453.3,536.2 454.0,538.8 454.7,538.8 455.4,536.6 456.1,532.0 456.8,525.4 457.5,518.1 458.2,511.4 458.9,506.6 459.6,504.8 460.3,506.2 461.0,510.6 461.7,517.1 462.4,524.4 463.1,531.1 463.8,536.1 464.5,538.6 465.2,538.9 465.9,537.5 466.6,533.8 467.3,528.1 468.0,521.4 468.7,515.0 469.4,510.0 470.1,507.5 470.8,508.0 471.5,511.4 472.2,517.0 472.9,523.7 473.6,530.2 474.3,535.3 475.0,538.2 475.7,539.0 476.4,538.0 477.1,534.7 477.8,529.1 478.5,522.0 479.2,514.8 479.9,508.9 480.6,505.5 481.3,505.2 482.0,508.0 482.7,513.6 483.4,520.6 484.1,527.8 484.8,533.8 485.5,537.6 486.2,539.0 486.9,538.6 487.6,536.2 488.3,531.6 489.0,525.5 489.7,519.0 490.4,513.4 491.1,509.6 491.8,508.6 492.5,510.4 493.2,514.8 493.9,520.9 494.6,527.4 495.3,533.1 496.0,537.1 496.7,538.8 497.4,538.7 498.1,535.7 498.8,529.2 499.5,519.8 500.2,509.3 500.9,499.5 501.6,492.4 502.3,489.4 503.0,491.3 503.7,497.4 504.4,506.7 505.1,517.3 505.8,527.2 506.5,534.5 507.2,538.3 507.9,539.0 508.6,538.1 509.3,535.7 510.0,531.9 510.7,527.5 511.4,523.1 512.1,519.7 512.8,517.9 513.5,518.2 514.2,520.4 514.9,524.1 515.6,528.5 516.3,532.9 517.0,536.4 517.7,538.4 518.4,539.0 519.1,538.2 519.8,535.2 520.5,530.1 521.2,523.5 521.9,516.8 522.6,511.3 523.3,507.9 524.0,507.5 524.7,510.0 525.4,515.1 526.1,521.6 526.8,528.3 527.5,533.9 528.2,537.6 528.9,539.0 529.6,538.7 530.3,537.0 531.0,533.8 531.7,529.4 532.4,524.7 533.1,520.5 533.8,517.7 534.5,516.8 535.2,518.1 535.9,521.2 536.6,525.6 537.3,530.3 538.0,534.5 538.7,537.5 539.4,538.9 540.1,538.8 540.8,536.6 541.5,531.4 542.2,523.9 542.9,515.4 543.6,507.4 544.3,501.6 545.0,499.0 545.7,500.3 546.4,505.2 547.1,512.6 547.8,521.1 548.5,529.1 549.2,535.1 549.9,538.4 550.6,539.0 551.3,538.0 552.0,535.4 552.7,531.1 553.4,526.0 554.1,521.0 554.8,517.0 555.5,514.9 556.2,515.1 556.9,517.5 557.6,521.6 558.3,526.7 559.0,531.8 559.7,535.8 560.4,538.3 561.1,539.0 561.8,538.5 562.5,536.2 563.2,532.4 563.9,527.4 564.6,522.3 565.3,518.0 566.0,515.3 566.7,514.8 567.4,516.7 568.1,520.5 568.8,525.4 569.5,530.5 570.2,534.9 570.9,537.8 571.6,539.0 572.3,538.7 573.0,536.3 573.7,531.7 574.4,525.3 575.1,518.4 575.8,512.2 576.5,508.0 577.2,506.6 577.9,508.3 578.6,512.7 579.3,519.0 580.0,526.0 580.7,532.2 581.4,536.6 582.1,538.8 582.8,538.9 583.5,536.9 584.2,532.1 584.9,525.2 585.6,517.1 586.3,509.6 587.0,503.9 587.7,501.3 588.4,502.4 589.1,506.8 589.8,513.7 590.5,521.7 591.2,529.3 591.9,535.1 592.6,538.3 593.3,539.0 594.0,537.5 594.7,532.9 595.4,525.6 596.1,516.8 596.8,507.9 597.5,500.8 598.2,496.9 598.9,497.0 599.6,501.0 600.3,508.2 601.0,517.1 601.7,526.0 602.4,533.2 603.1,537.6 603.8,539.0 604.5,538.3 605.2,535.4 605.9,530.3 606.6,523.6 607.3,516.6 608.0,510.6 608.7,506.8 609.4,506.0 610.1,508.4 610.8,513.4 611.5,520.1 612.2,527.2 612.9,533.2 613.6,537.2 614.3,538.9 615.0,538.7 615.7,536.8 616.4,532.8 617.1,527.2 617.8,521.1 618.5,515.6 619.2,511.8 619.9,510.4 620.6,511.7 621.3,515.6 622.0,521.1 622.7,527.2 623.4,532.7" fill="none" stroke="#ff3040" stroke-width="0.9" opacity="1"/></g><g clip-path="url(#cp1)"><rect x="872" y="289" width="92" height="255" fill="#7c1246"/><rect x="872.0" y="289" width="1.6" height="255" fill="#5a0830" opacity="0.12"/><rect x="874.3" y="289" width="1.0" height="255" fill="#4a0a40" opacity="0.10"/><rect x="875.8" y="289" width="0.9" height="255" fill="#b01040" opacity="0.12"/><rect x="877.5" y="289" width="0.9" height="255" fill="#8a2068" opacity="0.11"/><rect x="878.8" y="289" width="1.3" height="255" fill="#600a38" opacity="0.21"/><rect x="880.0" y="289" width="1.5" height="255" fill="#8a2068" opacity="0.13"/><rect x="881.9" y="289" width="0.8" height="255" fill="#b01040" opacity="0.18"/><rect x="883.3" y="289" width="1.4" height="255" fill="#8a2068" opacity="0.09"/><rect x="884.9" y="289" width="0.9" height="255" fill="#5a0830" opacity="0.25"/><rect x="886.0" y="289" width="1.4" height="255" fill="#4a0a40" opacity="0.17"/><rect x="887.6" y="289" width="0.9" height="255" fill="#4a0a40" opacity="0.11"/><rect x="888.4" y="289" width="1.1" height="255" fill="#b01040" opacity="0.16"/><rect x="889.7" y="289" width="0.9" height="255" fill="#600a38" opacity="0.15"/><rect x="891.2" y="289" width="0.8" height="255" fill="#8a2068" opacity="0.15"/><rect x="892.4" y="289" width="0.9" height="255" fill="#8a2068" opacity="0.18"/><rect x="893.6" y="289" width="1.4" height="255" fill="#8a2068" opacity="0.16"/><rect x="894.9" y="289" width="1.0" height="255" fill="#b01040" opacity="0.16"/><rect x="896.2" y="289" width="1.5" height="255" fill="#5a0830" opacity="0.17"/><rect x="898.2" y="289" width="0.7" height="255" fill="#5a0830" opacity="0.11"/><rect x="899.1" y="289" width="0.9" height="255" fill="#c01848" opacity="0.24"/><rect x="900.5" y="289" width="1.0" height="255" fill="#b01040" opacity="0.18"/><rect x="902.2" y="289" width="1.2" height="255" fill="#5a0830" opacity="0.20"/><rect x="903.5" y="289" width="0.8" height="255" fill="#b01040" opacity="0.23"/><rect x="904.8" y="289" width="1.1" height="255" fill="#b01040" opacity="0.17"/><rect x="906.3" y="289" width="1.2" height="255" fill="#4a0a40" opacity="0.21"/><rect x="907.9" y="289" width="1.3" height="255" fill="#4a0a40" opacity="0.21"/><rect x="910.2" y="289" width="0.7" height="255" fill="#8a2068" opacity="0.13"/><rect x="910.9" y="289" width="0.8" height="255" fill="#c01848" opacity="0.19"/><rect x="911.9" y="289" width="0.8" height="255" fill="#4a0a40" opacity="0.19"/><rect x="913.0" y="289" width="0.8" height="255" fill="#b01040" opacity="0.25"/><rect x="914.0" y="289" width="0.7" height="255" fill="#5a0830" opacity="0.18"/><rect x="914.9" y="289" width="0.7" height="255" fill="#b01040" opacity="0.13"/><rect x="915.6" y="289" width="1.1" height="255" fill="#5a0830" opacity="0.15"/><rect x="916.7" y="289" width="1.5" height="255" fill="#8a2068" opacity="0.23"/><rect x="918.1" y="289" width="1.0" height="255" fill="#8a2068" opacity="0.09"/><rect x="919.2" y="289" width="1.1" height="255" fill="#600a38" opacity="0.09"/><rect x="920.8" y="289" width="1.0" height="255" fill="#c01848" opacity="0.12"/><rect x="921.9" y="289" width="0.9" height="255" fill="#b01040" opacity="0.25"/><rect x="923.2" y="289" width="0.8" height="255" fill="#4a0a40" opacity="0.14"/><rect x="923.9" y="289" width="0.8" height="255" fill="#c01848" opacity="0.09"/><rect x="924.9" y="289" width="0.6" height="255" fill="#b01040" opacity="0.12"/><rect x="925.9" y="289" width="1.1" height="255" fill="#4a0a40" opacity="0.12"/><rect x="927.4" y="289" width="0.7" height="255" fill="#c01848" opacity="0.13"/><rect x="928.7" y="289" width="1.3" height="255" fill="#4a0a40" opacity="0.15"/><rect x="930.6" y="289" width="0.8" height="255" fill="#8a2068" opacity="0.18"/><rect x="931.5" y="289" width="1.4" height="255" fill="#8a2068" opacity="0.13"/><rect x="933.2" y="289" width="1.1" height="255" fill="#c01848" opacity="0.23"/><rect x="934.7" y="289" width="1.3" height="255" fill="#5a0830" opacity="0.26"/><rect x="936.1" y="289" width="1.0" height="255" fill="#b01040" opacity="0.15"/><rect x="937.6" y="289" width="0.8" height="255" fill="#5a0830" opacity="0.10"/><rect x="939.0" y="289" width="0.9" height="255" fill="#b01040" opacity="0.17"/><rect x="940.6" y="289" width="0.8" height="255" fill="#8a2068" opacity="0.15"/><rect x="942.0" y="289" width="0.6" height="255" fill="#c01848" opacity="0.22"/><rect x="942.5" y="289" width="1.5" height="255" fill="#4a0a40" opacity="0.09"/><rect x="944.8" y="289" width="0.7" height="255" fill="#8a2068" opacity="0.09"/><rect x="945.5" y="289" width="1.1" height="255" fill="#c01848" opacity="0.24"/><rect x="946.9" y="289" width="1.2" height="255" fill="#4a0a40" opacity="0.18"/><rect x="948.4" y="289" width="1.3" height="255" fill="#4a0a40" opacity="0.09"/><rect x="949.8" y="289" width="1.1" height="255" fill="#c01848" opacity="0.20"/><rect x="950.8" y="289" width="0.8" height="255" fill="#b01040" opacity="0.25"/><rect x="951.8" y="289" width="0.6" height="255" fill="#c01848" opacity="0.10"/><rect x="952.8" y="289" width="1.4" height="255" fill="#5a0830" opacity="0.11"/><rect x="954.5" y="289" width="1.0" height="255" fill="#5a0830" opacity="0.23"/><rect x="955.6" y="289" width="1.1" height="255" fill="#8a2068" opacity="0.25"/><rect x="957.1" y="289" width="0.6" height="255" fill="#c01848" opacity="0.17"/><rect x="957.8" y="289" width="0.7" height="255" fill="#5a0830" opacity="0.22"/><rect x="958.8" y="289" width="1.0" height="255" fill="#c01848" opacity="0.26"/><rect x="960.5" y="289" width="0.7" height="255" fill="#600a38" opacity="0.14"/><rect x="961.2" y="289" width="1.0" height="255" fill="#4a0a40" opacity="0.14"/><rect x="962.5" y="289" width="1.5" height="255" fill="#8a2068" opacity="0.24"/><rect x="872.0" y="289.0" width="1.7" height="94.7" fill="url(#gr)"/><rect x="873.7" y="289.0" width="1.6" height="114.0" fill="url(#gr)"/><rect x="875.4" y="289.0" width="1.1" height="119.5" fill="url(#gc)"/><rect x="876.0" y="289.0" width="1.7" height="78.6" fill="url(#gc)"/><rect x="877.0" y="289.0" width="2.0" height="122.4" fill="url(#gr)"/><rect x="878.7" y="289.0" width="1.8" height="122.8" fill="url(#gr)"/><rect x="880.3" y="289.0" width="1.6" height="121.4" fill="url(#gb)"/><rect x="881.8" y="289.0" width="1.6" height="91.9" fill="url(#gc)"/><rect x="883.3" y="289.0" width="1.2" height="110.2" fill="url(#gr)"/><rect x="884.1" y="289.0" width="1.3" height="134.1" fill="url(#gr)"/><rect x="885.2" y="289.0" width="1.3" height="124.0" fill="url(#gm)"/><rect x="886.6" y="289.0" width="1.1" height="85.4" fill="url(#gb)"/><rect x="887.4" y="289.0" width="2.3" height="102.4" fill="url(#gr)"/><rect x="889.3" y="289.0" width="1.9" height="124.0" fill="url(#gr)"/><rect x="890.8" y="289.0" width="2.3" height="64.7" fill="url(#gr)"/><rect x="892.6" y="289.0" width="2.0" height="70.0" fill="url(#gr)"/><rect x="894.8" y="289.0" width="1.4" height="69.9" fill="url(#gm)"/><rect x="896.0" y="289.0" width="2.0" height="66.3" fill="url(#gr)"/><rect x="897.2" y="289.0" width="2.0" height="112.4" fill="url(#gb)"/><rect x="899.0" y="289.0" width="1.7" height="122.1" fill="url(#gr)"/><rect x="900.2" y="289.0" width="2.2" height="109.8" fill="url(#gb)"/><rect x="902.1" y="289.0" width="1.4" height="100.7" fill="url(#gr)"/><rect x="903.6" y="289.0" width="1.5" height="136.2" fill="url(#gc)"/><rect x="905.1" y="289.0" width="1.0" height="137.7" fill="url(#gc)"/><rect x="905.8" y="289.0" width="1.8" height="79.1" fill="url(#gm)"/><rect x="907.4" y="289.0" width="1.4" height="64.2" fill="url(#gr)"/><rect x="908.1" y="289.0" width="1.4" height="93.4" fill="url(#gr)"/><rect x="909.6" y="289.0" width="0.9" height="91.8" fill="url(#gb)"/><rect x="910.2" y="289.0" width="0.9" height="74.0" fill="url(#gm)"/><rect x="910.7" y="289.0" width="1.7" height="134.7" fill="url(#gc)"/><rect x="912.7" y="289.0" width="1.1" height="73.1" fill="url(#gm)"/><rect x="913.5" y="289.0" width="1.2" height="61.5" fill="url(#gr)"/><rect x="914.7" y="289.0" width="1.2" height="110.5" fill="url(#gm)"/><rect x="915.7" y="289.0" width="1.3" height="86.2" fill="url(#gm)"/><rect x="916.6" y="289.0" width="1.4" height="138.1" fill="url(#gm)"/><rect x="917.4" y="289.0" width="1.5" height="124.3" fill="url(#gr)"/><rect x="918.8" y="289.0" width="2.0" height="133.3" fill="url(#gr)"/><rect x="920.8" y="289.0" width="2.3" height="107.7" fill="url(#gm)"/><rect x="922.7" y="289.0" width="1.2" height="117.9" fill="url(#gr)"/><rect x="923.3" y="289.0" width="0.9" height="102.1" fill="url(#gm)"/><rect x="923.9" y="289.0" width="1.9" height="137.3" fill="url(#gc)"/><rect x="925.0" y="289.0" width="1.3" height="121.8" fill="url(#gc)"/><rect x="926.1" y="289.0" width="1.9" height="129.0" fill="url(#gr)"/><rect x="927.3" y="289.0" width="1.1" height="137.7" fill="url(#gb)"/><rect x="928.4" y="289.0" width="1.9" height="139.7" fill="url(#gr)"/><rect x="930.1" y="289.0" width="1.9" height="102.8" fill="url(#gb)"/><rect x="931.3" y="289.0" width="1.9" height="83.0" fill="url(#gr)"/><rect x="932.4" y="289.0" width="1.0" height="133.3" fill="url(#gb)"/><rect x="933.2" y="289.0" width="2.2" height="66.2" fill="url(#gr)"/><rect x="934.4" y="289.0" width="2.3" height="57.9" fill="url(#gb)"/><rect x="936.4" y="289.0" width="1.8" height="90.8" fill="url(#gb)"/><rect x="938.1" y="289.0" width="2.0" height="70.8" fill="url(#gb)"/><rect x="939.4" y="289.0" width="1.4" height="119.7" fill="url(#gr)"/><rect x="940.4" y="289.0" width="2.1" height="86.8" fill="url(#gm)"/><rect x="942.7" y="289.0" width="1.3" height="138.1" fill="url(#gr)"/><rect x="943.4" y="289.0" width="1.0" height="58.6" fill="url(#gb)"/><rect x="944.5" y="289.0" width="1.7" height="85.9" fill="url(#gr)"/><rect x="945.8" y="289.0" width="1.7" height="135.9" fill="url(#gr)"/><rect x="947.3" y="289.0" width="1.4" height="106.7" fill="url(#gr)"/><rect x="948.1" y="289.0" width="2.4" height="117.2" fill="url(#gr)"/><rect x="950.5" y="289.0" width="1.5" height="126.3" fill="url(#gc)"/><rect x="951.9" y="289.0" width="2.3" height="130.4" fill="url(#gr)"/><rect x="953.5" y="289.0" width="2.1" height="85.2" fill="url(#gr)"/><rect x="955.0" y="289.0" width="1.3" height="70.6" fill="url(#gm)"/><rect x="956.3" y="289.0" width="1.0" height="76.1" fill="url(#gr)"/><rect x="957.0" y="289.0" width="2.0" height="124.8" fill="url(#gb)"/><rect x="958.5" y="289.0" width="1.9" height="137.9" fill="url(#gm)"/><rect x="959.9" y="289.0" width="2.1" height="65.6" fill="url(#gc)"/><rect x="961.4" y="289.0" width="1.3" height="131.1" fill="url(#gr)"/><rect x="962.5" y="289.0" width="1.6" height="93.3" fill="url(#gr)"/><rect x="872.0" y="314.3" width="1.6" height="22.8" fill="#ffffff" opacity="0.60"/><rect x="872.0" y="332.9" width="1.6" height="27.0" fill="#ff2040" opacity="0.82"/><rect x="872.0" y="295.6" width="1.6" height="27.2" fill="#d02080" opacity="0.83"/><rect x="872.0" y="334.3" width="1.6" height="21.9" fill="#4a60ff" opacity="0.84"/><rect x="873.3" y="335.9" width="1.3" height="6.2" fill="#2a70ff" opacity="0.61"/><rect x="873.3" y="317.0" width="1.3" height="7.1" fill="#4a60ff" opacity="0.58"/><rect x="873.3" y="310.4" width="1.3" height="7.1" fill="#3a58f0" opacity="0.62"/><rect x="873.3" y="294.3" width="1.3" height="7.9" fill="#4a60ff" opacity="0.83"/><rect x="875.1" y="329.0" width="1.4" height="18.5" fill="#5a0a30" opacity="0.86"/><rect x="875.1" y="293.5" width="1.4" height="17.3" fill="#5a0a30" opacity="0.89"/><rect x="875.1" y="291.3" width="1.4" height="14.6" fill="#2a70ff" opacity="0.59"/><rect x="875.1" y="332.8" width="1.4" height="25.0" fill="#ff2040" opacity="0.94"/><rect x="876.9" y="299.2" width="0.9" height="17.0" fill="#5a0a30" opacity="0.81"/><rect x="876.9" y="322.8" width="0.9" height="12.3" fill="#ff2040" opacity="0.58"/><rect x="876.9" y="308.7" width="0.9" height="7.1" fill="#ffffff" opacity="0.61"/><rect x="876.9" y="302.2" width="0.9" height="13.9" fill="#ffffff" opacity="0.61"/><rect x="877.7" y="291.8" width="1.0" height="12.3" fill="#3a58f0" opacity="0.53"/><rect x="877.7" y="325.5" width="1.0" height="26.3" fill="#e01838" opacity="0.80"/><rect x="877.7" y="347.3" width="1.0" height="13.7" fill="#e01838" opacity="0.79"/><rect x="877.7" y="319.9" width="1.0" height="8.0" fill="#2a70ff" opacity="0.71"/><rect x="878.9" y="342.8" width="1.4" height="12.4" fill="#ffffff" opacity="0.51"/><rect x="878.9" y="295.4" width="1.4" height="17.5" fill="#ff2040" opacity="0.77"/><rect x="878.9" y="322.9" width="1.4" height="11.6" fill="#5a0a30" opacity="0.84"/><rect x="878.9" y="306.7" width="1.4" height="25.7" fill="#ffffff" opacity="0.62"/><rect x="880.8" y="304.6" width="1.4" height="12.6" fill="#d02080" opacity="0.76"/><rect x="880.8" y="308.1" width="1.4" height="9.4" fill="#ff2040" opacity="0.90"/><rect x="880.8" y="291.3" width="1.4" height="12.6" fill="#ff4060" opacity="0.52"/><rect x="880.8" y="319.2" width="1.4" height="25.5" fill="#d02080" opacity="0.83"/><rect x="882.1" y="325.1" width="1.4" height="12.7" fill="#ff4060" opacity="0.73"/><rect x="882.1" y="326.6" width="1.4" height="20.2" fill="#ff4060" opacity="0.85"/><rect x="882.1" y="340.8" width="1.4" height="27.5" fill="#ff4060" opacity="0.59"/><rect x="882.1" y="340.0" width="1.4" height="16.7" fill="#ffffff" opacity="0.62"/><rect x="883.7" y="339.2" width="1.5" height="13.0" fill="#ffffff" opacity="0.50"/><rect x="883.7" y="341.2" width="1.5" height="14.8" fill="#ffffff" opacity="0.66"/><rect x="883.7" y="324.5" width="1.5" height="17.7" fill="#3a58f0" opacity="0.86"/><rect x="883.7" y="343.3" width="1.5" height="9.6" fill="#3a58f0" opacity="0.72"/><rect x="885.0" y="302.0" width="1.3" height="16.9" fill="#ffffff" opacity="0.77"/><rect x="885.0" y="290.7" width="1.3" height="19.5" fill="#d02080" opacity="0.69"/><rect x="885.0" y="294.7" width="1.3" height="8.0" fill="#5a0a30" opacity="0.81"/><rect x="885.0" y="317.9" width="1.3" height="24.5" fill="#4a60ff" opacity="0.57"/><rect x="886.7" y="335.2" width="1.1" height="24.9" fill="#5a0a30" opacity="0.70"/><rect x="886.7" y="327.3" width="1.1" height="21.1" fill="#2a70ff" opacity="0.61"/><rect x="886.7" y="299.5" width="1.1" height="24.3" fill="#ffffff" opacity="0.58"/><rect x="886.7" y="323.9" width="1.1" height="23.5" fill="#e01838" opacity="0.52"/><rect x="887.9" y="293.5" width="1.3" height="26.6" fill="#5a0a30" opacity="0.67"/><rect x="887.9" y="336.5" width="1.3" height="13.7" fill="#ff2040" opacity="0.72"/><rect x="887.9" y="310.4" width="1.3" height="6.9" fill="#d02080" opacity="0.89"/><rect x="887.9" y="335.0" width="1.3" height="9.9" fill="#e01838" opacity="0.73"/><rect x="889.5" y="306.3" width="1.5" height="14.0" fill="#5a0a30" opacity="0.56"/><rect x="889.5" y="337.3" width="1.5" height="27.7" fill="#ff4060" opacity="0.95"/><rect x="889.5" y="313.1" width="1.5" height="20.2" fill="#ff2040" opacity="0.94"/><rect x="889.5" y="294.4" width="1.5" height="26.0" fill="#ffffff" opacity="0.81"/><rect x="891.1" y="291.6" width="1.1" height="26.4" fill="#3a58f0" opacity="0.56"/><rect x="891.1" y="319.7" width="1.1" height="27.9" fill="#d02080" opacity="0.62"/><rect x="891.1" y="290.1" width="1.1" height="6.6" fill="#4a60ff" opacity="0.81"/><rect x="891.1" y="291.7" width="1.1" height="22.0" fill="#ff4060" opacity="0.86"/><rect x="892.2" y="334.5" width="1.2" height="9.4" fill="#ffffff" opacity="0.77"/><rect x="892.2" y="304.5" width="1.2" height="6.0" fill="#ff2040" opacity="0.54"/><rect x="892.2" y="292.6" width="1.2" height="11.4" fill="#5a0a30" opacity="0.68"/><rect x="892.2" y="324.2" width="1.2" height="20.4" fill="#ff2040" opacity="0.91"/><rect x="893.9" y="328.1" width="1.3" height="13.1" fill="#e01838" opacity="0.71"/><rect x="893.9" y="328.4" width="1.3" height="24.0" fill="#ff2040" opacity="0.74"/><rect x="893.9" y="290.0" width="1.3" height="6.7" fill="#ff2040" opacity="0.64"/><rect x="893.9" y="296.0" width="1.3" height="25.5" fill="#ff2040" opacity="0.91"/><rect x="895.0" y="304.2" width="0.7" height="25.1" fill="#2a70ff" opacity="0.71"/><rect x="895.0" y="291.4" width="0.7" height="23.1" fill="#d02080" opacity="0.59"/><rect x="895.0" y="325.8" width="0.7" height="19.5" fill="#ffffff" opacity="0.59"/><rect x="895.0" y="322.0" width="0.7" height="21.0" fill="#ffffff" opacity="0.76"/><rect x="895.9" y="339.9" width="1.5" height="25.8" fill="#ff2040" opacity="0.57"/><rect x="895.9" y="334.9" width="1.5" height="20.1" fill="#ffffff" opacity="0.66"/><rect x="895.9" y="302.6" width="1.5" height="22.1" fill="#5a0a30" opacity="0.60"/><rect x="895.9" y="337.3" width="1.5" height="7.0" fill="#ffffff" opacity="0.56"/><rect x="897.3" y="309.3" width="0.7" height="12.5" fill="#ff2040" opacity="0.50"/><rect x="897.3" y="313.8" width="0.7" height="14.3" fill="#ff2040" opacity="0.56"/><rect x="897.3" y="330.3" width="0.7" height="21.3" fill="#e01838" opacity="0.95"/><rect x="897.3" y="289.5" width="0.7" height="11.7" fill="#2a70ff" opacity="0.67"/><rect x="898.2" y="328.5" width="0.9" height="27.2" fill="#ff2040" opacity="0.84"/><rect x="898.2" y="311.0" width="0.9" height="26.5" fill="#4a60ff" opacity="0.62"/><rect x="898.2" y="301.6" width="0.9" height="22.1" fill="#e01838" opacity="0.82"/><rect x="898.2" y="315.7" width="0.9" height="25.6" fill="#e01838" opacity="0.66"/><rect x="899.1" y="296.5" width="1.3" height="18.6" fill="#2a70ff" opacity="0.74"/><rect x="899.1" y="325.4" width="1.3" height="7.7" fill="#5a0a30" opacity="0.75"/><rect x="899.1" y="306.2" width="1.3" height="25.8" fill="#e01838" opacity="0.58"/><rect x="899.1" y="293.1" width="1.3" height="7.5" fill="#ff2040" opacity="0.53"/><rect x="900.8" y="327.2" width="1.2" height="12.6" fill="#e01838" opacity="0.71"/><rect x="900.8" y="318.7" width="1.2" height="24.2" fill="#3a58f0" opacity="0.72"/><rect x="900.8" y="329.0" width="1.2" height="14.2" fill="#ffffff" opacity="0.50"/><rect x="900.8" y="290.1" width="1.2" height="12.5" fill="#e01838" opacity="0.79"/><rect x="901.7" y="296.8" width="1.3" height="15.6" fill="#5a0a30" opacity="0.57"/><rect x="901.7" y="337.6" width="1.3" height="17.0" fill="#ffffff" opacity="0.48"/><rect x="901.7" y="290.7" width="1.3" height="16.5" fill="#4a60ff" opacity="0.75"/><rect x="901.7" y="314.8" width="1.3" height="22.3" fill="#3a58f0" opacity="0.67"/><rect x="903.6" y="337.6" width="0.8" height="14.8" fill="#ffffff" opacity="0.51"/><rect x="903.6" y="319.6" width="0.8" height="7.2" fill="#ffffff" opacity="0.45"/><rect x="903.6" y="307.9" width="0.8" height="18.2" fill="#2a70ff" opacity="0.53"/><rect x="903.6" y="289.8" width="0.8" height="23.2" fill="#ff4060" opacity="0.90"/><rect x="904.4" y="334.1" width="1.2" height="11.0" fill="#ffffff" opacity="0.73"/><rect x="904.4" y="304.7" width="1.2" height="24.4" fill="#ff2040" opacity="0.69"/><rect x="904.4" y="315.0" width="1.2" height="15.8" fill="#ff2040" opacity="0.71"/><rect x="904.4" y="336.9" width="1.2" height="14.3" fill="#ff2040" opacity="0.55"/><rect x="905.9" y="328.6" width="0.8" height="15.5" fill="#d02080" opacity="0.54"/><rect x="905.9" y="333.7" width="0.8" height="27.0" fill="#ff4060" opacity="0.79"/><rect x="905.9" y="315.1" width="0.8" height="23.3" fill="#ff4060" opacity="0.61"/><rect x="905.9" y="309.3" width="0.8" height="18.3" fill="#4a60ff" opacity="0.79"/><rect x="906.7" y="289.5" width="1.0" height="16.2" fill="#ff4060" opacity="0.80"/><rect x="906.7" y="304.0" width="1.0" height="7.3" fill="#ffffff" opacity="0.68"/><rect x="906.7" y="310.1" width="1.0" height="25.6" fill="#3a58f0" opacity="0.69"/><rect x="906.7" y="334.5" width="1.0" height="12.0" fill="#ff2040" opacity="0.70"/><rect x="907.7" y="319.0" width="1.3" height="25.9" fill="#3a58f0" opacity="0.87"/><rect x="907.7" y="320.9" width="1.3" height="10.2" fill="#ffffff" opacity="0.55"/><rect x="907.7" y="310.1" width="1.3" height="21.8" fill="#3a58f0" opacity="0.56"/><rect x="907.7" y="330.1" width="1.3" height="23.8" fill="#ff2040" opacity="0.85"/><rect x="909.3" y="335.5" width="0.9" height="9.8" fill="#4a60ff" opacity="0.54"/><rect x="909.3" y="306.0" width="0.9" height="20.5" fill="#ff2040" opacity="0.90"/><rect x="909.3" y="324.8" width="0.9" height="11.2" fill="#ff2040" opacity="0.76"/><rect x="909.3" y="330.3" width="0.9" height="11.4" fill="#2a70ff" opacity="0.79"/><rect x="910.1" y="307.8" width="1.1" height="21.0" fill="#4a60ff" opacity="0.51"/><rect x="910.1" y="308.8" width="1.1" height="17.0" fill="#5a0a30" opacity="0.52"/><rect x="910.1" y="319.9" width="1.1" height="11.7" fill="#e01838" opacity="0.72"/><rect x="910.1" y="294.4" width="1.1" height="13.8" fill="#ff4060" opacity="0.56"/><rect x="911.0" y="294.6" width="1.0" height="14.9" fill="#2a70ff" opacity="0.60"/><rect x="911.0" y="310.4" width="1.0" height="14.8" fill="#d02080" opacity="0.67"/><rect x="911.0" y="320.2" width="1.0" height="26.7" fill="#2a70ff" opacity="0.53"/><rect x="911.0" y="331.4" width="1.0" height="14.0" fill="#e01838" opacity="0.90"/><rect x="912.2" y="328.2" width="1.3" height="13.5" fill="#ffffff" opacity="0.46"/><rect x="912.2" y="307.7" width="1.3" height="8.2" fill="#3a58f0" opacity="0.83"/><rect x="912.2" y="306.3" width="1.3" height="11.8" fill="#d02080" opacity="0.64"/><rect x="912.2" y="322.9" width="1.3" height="25.0" fill="#ffffff" opacity="0.81"/><rect x="913.3" y="311.1" width="1.2" height="17.7" fill="#ffffff" opacity="0.70"/><rect x="913.3" y="321.1" width="1.2" height="22.5" fill="#ff4060" opacity="0.78"/><rect x="913.3" y="290.6" width="1.2" height="12.8" fill="#5a0a30" opacity="0.52"/><rect x="913.3" y="328.1" width="1.2" height="24.8" fill="#ff2040" opacity="0.72"/><rect x="914.8" y="314.1" width="1.4" height="25.2" fill="#ff2040" opacity="0.69"/><rect x="914.8" y="300.5" width="1.4" height="20.7" fill="#ffffff" opacity="0.49"/><rect x="914.8" y="328.1" width="1.4" height="22.0" fill="#ffffff" opacity="0.71"/><rect x="914.8" y="289.9" width="1.4" height="14.1" fill="#ff2040" opacity="0.70"/><rect x="916.3" y="318.6" width="1.4" height="23.2" fill="#3a58f0" opacity="0.68"/><rect x="916.3" y="327.4" width="1.4" height="21.3" fill="#d02080" opacity="0.89"/><rect x="916.3" y="329.1" width="1.4" height="18.7" fill="#ffffff" opacity="0.58"/><rect x="916.3" y="297.1" width="1.4" height="25.7" fill="#e01838" opacity="0.63"/><rect x="917.7" y="304.7" width="1.2" height="14.1" fill="#2a70ff" opacity="0.83"/><rect x="917.7" y="313.4" width="1.2" height="18.6" fill="#ff2040" opacity="0.67"/><rect x="917.7" y="296.3" width="1.2" height="9.3" fill="#ff2040" opacity="0.78"/><rect x="917.7" y="327.8" width="1.2" height="26.9" fill="#3a58f0" opacity="0.62"/><rect x="918.9" y="290.0" width="1.3" height="12.0" fill="#4a60ff" opacity="0.71"/><rect x="918.9" y="294.8" width="1.3" height="14.2" fill="#ff4060" opacity="0.82"/><rect x="918.9" y="298.6" width="1.3" height="14.2" fill="#3a58f0" opacity="0.75"/><rect x="918.9" y="330.4" width="1.3" height="20.3" fill="#d02080" opacity="0.84"/><rect x="920.5" y="289.0" width="1.4" height="26.5" fill="#ff2040" opacity="0.72"/><rect x="920.5" y="321.7" width="1.4" height="16.2" fill="#5a0a30" opacity="0.52"/><rect x="920.5" y="309.2" width="1.4" height="24.6" fill="#ff2040" opacity="0.60"/><rect x="920.5" y="318.9" width="1.4" height="19.4" fill="#ffffff" opacity="0.72"/><rect x="921.6" y="325.9" width="1.6" height="9.5" fill="#ff2040" opacity="0.93"/><rect x="921.6" y="315.1" width="1.6" height="27.6" fill="#3a58f0" opacity="0.51"/><rect x="921.6" y="328.6" width="1.6" height="7.9" fill="#ff2040" opacity="0.90"/><rect x="921.6" y="291.5" width="1.6" height="19.1" fill="#ff2040" opacity="0.74"/><rect x="923.2" y="307.2" width="1.0" height="27.3" fill="#4a60ff" opacity="0.84"/><rect x="923.2" y="328.0" width="1.0" height="17.3" fill="#ff2040" opacity="0.78"/><rect x="923.2" y="324.1" width="1.0" height="25.1" fill="#e01838" opacity="0.83"/><rect x="923.2" y="295.4" width="1.0" height="13.3" fill="#5a0a30" opacity="0.89"/><rect x="924.4" y="292.6" width="1.5" height="19.7" fill="#ffffff" opacity="0.73"/><rect x="924.4" y="320.0" width="1.5" height="25.7" fill="#e01838" opacity="0.91"/><rect x="924.4" y="316.8" width="1.5" height="16.2" fill="#4a60ff" opacity="0.83"/><rect x="924.4" y="307.4" width="1.5" height="16.9" fill="#ff2040" opacity="0.69"/><rect x="926.2" y="295.3" width="0.9" height="17.9" fill="#ffffff" opacity="0.62"/><rect x="926.2" y="311.6" width="0.9" height="14.2" fill="#ff4060" opacity="0.80"/><rect x="926.2" y="289.7" width="0.9" height="14.5" fill="#ff4060" opacity="0.63"/><rect x="926.2" y="316.2" width="0.9" height="6.1" fill="#ffffff" opacity="0.81"/><rect x="927.2" y="293.1" width="0.8" height="15.3" fill="#ff2040" opacity="0.60"/><rect x="927.2" y="294.6" width="0.8" height="15.5" fill="#ff2040" opacity="0.80"/><rect x="927.2" y="316.4" width="0.8" height="19.7" fill="#ffffff" opacity="0.60"/><rect x="927.2" y="300.1" width="0.8" height="12.4" fill="#d02080" opacity="0.88"/><rect x="928.0" y="313.8" width="0.8" height="12.5" fill="#5a0a30" opacity="0.50"/><rect x="928.0" y="302.0" width="0.8" height="20.1" fill="#ffffff" opacity="0.65"/><rect x="928.0" y="296.8" width="0.8" height="10.5" fill="#ff4060" opacity="0.57"/><rect x="928.0" y="296.0" width="0.8" height="15.0" fill="#ffffff" opacity="0.70"/><rect x="929.0" y="307.1" width="1.1" height="7.2" fill="#4a60ff" opacity="0.79"/><rect x="929.0" y="306.6" width="1.1" height="14.3" fill="#4a60ff" opacity="0.81"/><rect x="929.0" y="297.5" width="1.1" height="6.8" fill="#2a70ff" opacity="0.72"/><rect x="929.0" y="305.3" width="1.1" height="16.9" fill="#ffffff" opacity="0.76"/><rect x="929.9" y="314.7" width="1.1" height="25.6" fill="#2a70ff" opacity="0.77"/><rect x="929.9" y="291.4" width="1.1" height="22.4" fill="#3a58f0" opacity="0.88"/><rect x="929.9" y="317.8" width="1.1" height="6.1" fill="#ffffff" opacity="0.76"/><rect x="929.9" y="310.4" width="1.1" height="25.7" fill="#2a70ff" opacity="0.77"/><rect x="931.2" y="317.1" width="1.1" height="25.6" fill="#ffffff" opacity="0.81"/><rect x="931.2" y="317.8" width="1.1" height="22.6" fill="#ff2040" opacity="0.51"/><rect x="931.2" y="324.7" width="1.1" height="20.4" fill="#ff2040" opacity="0.79"/><rect x="931.2" y="299.3" width="1.1" height="7.4" fill="#ff4060" opacity="0.58"/><rect x="932.3" y="296.4" width="1.4" height="7.0" fill="#ff4060" opacity="0.52"/><rect x="932.3" y="290.8" width="1.4" height="20.0" fill="#5a0a30" opacity="0.55"/><rect x="932.3" y="308.3" width="1.4" height="20.6" fill="#ffffff" opacity="0.52"/><rect x="932.3" y="306.9" width="1.4" height="11.3" fill="#d02080" opacity="0.78"/><rect x="933.4" y="293.7" width="1.3" height="11.6" fill="#4a60ff" opacity="0.62"/><rect x="933.4" y="315.7" width="1.3" height="20.2" fill="#3a58f0" opacity="0.91"/><rect x="933.4" y="315.6" width="1.3" height="26.0" fill="#ff2040" opacity="0.87"/><rect x="933.4" y="326.0" width="1.3" height="26.4" fill="#ffffff" opacity="0.59"/><rect x="934.9" y="292.9" width="1.2" height="18.4" fill="#ffffff" opacity="0.49"/><rect x="934.9" y="294.0" width="1.2" height="11.1" fill="#d02080" opacity="0.87"/><rect x="934.9" y="300.7" width="1.2" height="9.1" fill="#ff4060" opacity="0.84"/><rect x="934.9" y="304.5" width="1.2" height="15.5" fill="#3a58f0" opacity="0.80"/><rect x="936.2" y="320.1" width="0.8" height="24.3" fill="#e01838" opacity="0.84"/><rect x="936.2" y="316.6" width="0.8" height="19.3" fill="#ffffff" opacity="0.65"/><rect x="936.2" y="289.9" width="0.8" height="9.4" fill="#d02080" opacity="0.80"/><rect x="936.2" y="307.8" width="0.8" height="17.0" fill="#ff2040" opacity="0.52"/><rect x="936.9" y="320.2" width="1.4" height="14.4" fill="#2a70ff" opacity="0.76"/><rect x="936.9" y="294.9" width="1.4" height="19.5" fill="#ff2040" opacity="0.69"/><rect x="936.9" y="320.8" width="1.4" height="6.3" fill="#d02080" opacity="0.71"/><rect x="936.9" y="325.1" width="1.4" height="8.6" fill="#e01838" opacity="0.67"/><rect x="938.4" y="319.2" width="0.9" height="9.9" fill="#ffffff" opacity="0.52"/><rect x="938.4" y="305.7" width="0.9" height="17.1" fill="#2a70ff" opacity="0.54"/><rect x="938.4" y="289.5" width="0.9" height="25.1" fill="#ff4060" opacity="0.51"/><rect x="938.4" y="298.1" width="0.9" height="25.8" fill="#ffffff" opacity="0.55"/><rect x="939.3" y="296.9" width="1.2" height="22.2" fill="#ffffff" opacity="0.71"/><rect x="939.3" y="294.5" width="1.2" height="22.2" fill="#d02080" opacity="0.76"/><rect x="939.3" y="321.3" width="1.2" height="25.6" fill="#ff2040" opacity="0.53"/><rect x="939.3" y="313.4" width="1.2" height="13.9" fill="#5a0a30" opacity="0.63"/><rect x="941.0" y="289.4" width="1.3" height="20.5" fill="#ff2040" opacity="0.82"/><rect x="941.0" y="314.7" width="1.3" height="13.1" fill="#ff4060" opacity="0.75"/><rect x="941.0" y="293.6" width="1.3" height="23.2" fill="#5a0a30" opacity="0.77"/><rect x="941.0" y="295.0" width="1.3" height="10.7" fill="#d02080" opacity="0.83"/><rect x="942.1" y="300.1" width="0.8" height="10.8" fill="#ffffff" opacity="0.69"/><rect x="942.1" y="317.1" width="0.8" height="23.7" fill="#ff2040" opacity="0.59"/><rect x="942.1" y="299.2" width="0.8" height="15.7" fill="#ffffff" opacity="0.75"/><rect x="942.1" y="321.1" width="0.8" height="22.5" fill="#ff2040" opacity="0.91"/><rect x="943.1" y="312.3" width="1.4" height="27.4" fill="#5a0a30" opacity="0.91"/><rect x="943.1" y="313.1" width="1.4" height="8.5" fill="#e01838" opacity="0.60"/><rect x="943.1" y="310.6" width="1.4" height="17.2" fill="#d02080" opacity="0.61"/><rect x="943.1" y="307.5" width="1.4" height="24.5" fill="#ff2040" opacity="0.70"/><rect x="944.4" y="315.1" width="1.0" height="18.5" fill="#ff2040" opacity="0.86"/><rect x="944.4" y="307.1" width="1.0" height="19.1" fill="#ff2040" opacity="0.67"/><rect x="944.4" y="317.5" width="1.0" height="27.3" fill="#ff2040" opacity="0.57"/><rect x="944.4" y="289.8" width="1.0" height="16.7" fill="#ffffff" opacity="0.57"/><rect x="945.3" y="319.8" width="1.5" height="22.2" fill="#ffffff" opacity="0.76"/><rect x="945.3" y="301.6" width="1.5" height="8.2" fill="#5a0a30" opacity="0.81"/><rect x="945.3" y="321.6" width="1.5" height="23.2" fill="#ffffff" opacity="0.57"/><rect x="945.3" y="290.1" width="1.5" height="26.8" fill="#d02080" opacity="0.59"/><rect x="946.9" y="298.5" width="1.0" height="12.3" fill="#ff2040" opacity="0.94"/><rect x="946.9" y="304.0" width="1.0" height="13.6" fill="#5a0a30" opacity="0.56"/><rect x="946.9" y="316.7" width="1.0" height="22.7" fill="#ff2040" opacity="0.81"/><rect x="946.9" y="306.6" width="1.0" height="11.0" fill="#ff4060" opacity="0.93"/><rect x="947.9" y="302.8" width="1.0" height="16.3" fill="#d02080" opacity="0.87"/><rect x="947.9" y="320.8" width="1.0" height="9.6" fill="#ff4060" opacity="0.87"/><rect x="947.9" y="293.8" width="1.0" height="22.3" fill="#e01838" opacity="0.67"/><rect x="947.9" y="314.7" width="1.0" height="13.6" fill="#5a0a30" opacity="0.55"/><rect x="949.2" y="309.5" width="1.6" height="7.1" fill="#3a58f0" opacity="0.87"/><rect x="949.2" y="296.5" width="1.6" height="24.9" fill="#4a60ff" opacity="0.93"/><rect x="949.2" y="295.3" width="1.6" height="20.0" fill="#e01838" opacity="0.77"/><rect x="949.2" y="320.7" width="1.6" height="9.1" fill="#e01838" opacity="0.70"/><rect x="950.4" y="301.1" width="1.2" height="7.6" fill="#ff2040" opacity="0.79"/><rect x="950.4" y="302.1" width="1.2" height="21.6" fill="#ff4060" opacity="0.89"/><rect x="950.4" y="291.0" width="1.2" height="16.7" fill="#ffffff" opacity="0.79"/><rect x="950.4" y="293.6" width="1.2" height="7.0" fill="#2a70ff" opacity="0.74"/><rect x="951.8" y="297.7" width="0.9" height="27.6" fill="#e01838" opacity="0.55"/><rect x="951.8" y="306.2" width="0.9" height="19.1" fill="#ffffff" opacity="0.62"/><rect x="951.8" y="295.9" width="0.9" height="17.3" fill="#ff2040" opacity="0.94"/><rect x="951.8" y="314.8" width="0.9" height="12.6" fill="#d02080" opacity="0.73"/><rect x="952.6" y="302.6" width="1.1" height="22.4" fill="#ffffff" opacity="0.73"/><rect x="952.6" y="308.5" width="1.1" height="23.4" fill="#ff2040" opacity="0.53"/><rect x="952.6" y="289.8" width="1.1" height="20.1" fill="#ff4060" opacity="0.66"/><rect x="952.6" y="318.7" width="1.1" height="25.6" fill="#3a58f0" opacity="0.89"/><rect x="953.9" y="292.6" width="1.4" height="27.2" fill="#2a70ff" opacity="0.93"/><rect x="953.9" y="316.3" width="1.4" height="16.8" fill="#ffffff" opacity="0.70"/><rect x="953.9" y="310.8" width="1.4" height="19.5" fill="#e01838" opacity="0.94"/><rect x="953.9" y="289.1" width="1.4" height="19.0" fill="#ffffff" opacity="0.66"/><rect x="955.5" y="294.7" width="1.3" height="26.0" fill="#ffffff" opacity="0.71"/><rect x="955.5" y="305.7" width="1.3" height="20.4" fill="#2a70ff" opacity="0.66"/><rect x="955.5" y="309.1" width="1.3" height="20.1" fill="#e01838" opacity="0.87"/><rect x="955.5" y="305.8" width="1.3" height="25.2" fill="#ff4060" opacity="0.87"/><rect x="956.7" y="313.6" width="0.8" height="23.7" fill="#ff4060" opacity="0.81"/><rect x="956.7" y="303.4" width="0.8" height="9.9" fill="#5a0a30" opacity="0.55"/><rect x="956.7" y="295.9" width="0.8" height="14.8" fill="#4a60ff" opacity="0.85"/><rect x="956.7" y="309.4" width="0.8" height="6.7" fill="#2a70ff" opacity="0.79"/><rect x="957.3" y="300.6" width="0.8" height="10.5" fill="#d02080" opacity="0.64"/><rect x="957.3" y="308.7" width="0.8" height="17.8" fill="#ff2040" opacity="0.60"/><rect x="957.3" y="295.3" width="0.8" height="25.9" fill="#d02080" opacity="0.66"/><rect x="957.3" y="303.3" width="0.8" height="15.7" fill="#3a58f0" opacity="0.61"/><rect x="958.0" y="314.9" width="1.2" height="19.7" fill="#ffffff" opacity="0.83"/><rect x="958.0" y="313.2" width="1.2" height="9.9" fill="#2a70ff" opacity="0.66"/><rect x="958.0" y="316.0" width="1.2" height="27.4" fill="#2a70ff" opacity="0.60"/><rect x="958.0" y="301.6" width="1.2" height="16.2" fill="#e01838" opacity="0.74"/><rect x="959.6" y="295.6" width="1.2" height="21.0" fill="#ff2040" opacity="0.86"/><rect x="959.6" y="290.0" width="1.2" height="8.4" fill="#ff2040" opacity="0.68"/><rect x="959.6" y="291.6" width="1.2" height="19.6" fill="#ffffff" opacity="0.81"/><rect x="959.6" y="310.5" width="1.2" height="17.4" fill="#3a58f0" opacity="0.58"/><rect x="960.8" y="302.4" width="1.2" height="15.9" fill="#2a70ff" opacity="0.63"/><rect x="960.8" y="292.3" width="1.2" height="10.5" fill="#d02080" opacity="0.92"/><rect x="960.8" y="301.0" width="1.2" height="28.0" fill="#4a60ff" opacity="0.53"/><rect x="960.8" y="289.0" width="1.2" height="13.3" fill="#d02080" opacity="0.94"/><rect x="962.1" y="303.2" width="0.9" height="22.5" fill="#e01838" opacity="0.92"/><rect x="962.1" y="316.1" width="0.9" height="23.2" fill="#ffffff" opacity="0.49"/><rect x="962.1" y="305.2" width="0.9" height="17.9" fill="#ffffff" opacity="0.77"/><rect x="962.1" y="299.1" width="0.9" height="24.1" fill="#ff2040" opacity="0.59"/><rect x="963.2" y="298.5" width="1.5" height="25.5" fill="#d02080" opacity="0.76"/><rect x="963.2" y="301.3" width="1.5" height="13.8" fill="#3a58f0" opacity="0.56"/><rect x="963.2" y="292.5" width="1.5" height="7.8" fill="#d02080" opacity="0.64"/><rect x="963.2" y="302.1" width="1.5" height="23.7" fill="#e01838" opacity="0.80"/><rect x="945.9" y="302.8" width="1.2" height="12.4" fill="url(#gw)" opacity="0.77"/><rect x="927.8" y="303.0" width="1.9" height="16.8" fill="url(#gw)" opacity="0.88"/><rect x="921.9" y="300.0" width="1.7" height="14.6" fill="url(#gw)" opacity="0.80"/><rect x="907.6" y="311.0" width="1.7" height="19.9" fill="url(#gw)" opacity="0.87"/><rect x="947.6" y="302.4" width="1.3" height="15.6" fill="url(#gw)" opacity="0.98"/><rect x="938.7" y="311.5" width="2.1" height="21.8" fill="url(#gw)" opacity="0.74"/><rect x="916.2" y="296.4" width="1.2" height="25.2" fill="url(#gw)" opacity="0.96"/><rect x="906.4" y="300.1" width="1.7" height="24.2" fill="url(#gw)" opacity="0.95"/><rect x="889.4" y="308.5" width="1.9" height="25.0" fill="url(#gw)" opacity="0.95"/><rect x="914.8" y="293.3" width="1.8" height="19.6" fill="url(#gw)" opacity="0.88"/><rect x="894.1" y="298.1" width="1.2" height="23.8" fill="url(#gw)" opacity="0.75"/><rect x="924.8" y="307.4" width="1.9" height="16.2" fill="url(#gw)" opacity="0.79"/><rect x="887.9" y="308.0" width="2.0" height="17.6" fill="url(#gw)" opacity="0.99"/><rect x="911.9" y="297.9" width="1.8" height="23.6" fill="url(#gw)" opacity="0.78"/><rect x="888.8" y="313.1" width="1.3" height="11.3" fill="url(#gw)" opacity="1.00"/><rect x="934.2" y="305.8" width="2.1" height="24.0" fill="url(#gw)" opacity="0.76"/><polyline points="872.0,289.0 872.7,290.7 873.4,297.2 874.1,308.8 874.8,324.1 875.5,340.8 876.2,356.4 876.9,368.2 877.6,374.4 878.3,373.8 879.0,366.6 879.7,353.9 880.4,337.9 881.1,321.3 881.8,306.5 882.5,295.7 883.2,290.1 883.9,289.0 884.6,291.2 885.3,297.3 886.0,307.3 886.7,319.9 887.4,333.1 888.1,345.0 888.8,353.5 889.5,357.2 890.2,355.4 890.9,348.6 891.6,337.8 892.3,324.8 893.0,311.7 893.7,300.6 894.4,293.0 895.1,289.4 895.8,289.3 896.5,293.0 897.2,301.9 897.9,315.4 898.6,331.5 899.3,348.0 900.0,362.1 900.7,371.5 901.4,374.6 902.1,370.9 902.8,361.0 903.5,346.6 904.2,330.0 904.9,314.0 905.6,300.9 906.3,292.5 907.0,289.2 907.7,289.6 908.4,294.0 909.1,302.9 909.8,315.5 910.5,330.2 911.2,344.5 911.9,356.2 912.6,363.3 913.3,364.7 914.0,360.1 914.7,350.2 915.4,336.8 916.1,322.0 916.8,308.2 917.5,297.5 918.2,291.0 918.9,289.0 919.6,290.3 920.3,296.2 921.0,306.8 921.7,321.2 922.4,337.1 923.1,352.2 923.8,363.9 924.5,370.2 925.2,370.2 925.9,363.8 926.6,352.1 927.3,337.0 928.0,321.1 928.7,306.7 929.4,296.1 930.1,290.3 930.8,289.0 931.5,291.6 932.2,299.8 932.9,313.5 933.6,330.9 934.3,349.7 935.0,366.6 935.7,379.1 936.4,384.9 937.1,383.1 937.8,374.0 938.5,359.1 939.2,341.0 939.9,322.5 940.6,306.5 941.3,295.2 942.0,289.8 942.7,289.2 943.4,292.4 944.1,300.7 944.8,313.4 945.5,329.0 946.2,345.1 946.9,359.0 947.6,368.6 948.3,372.2 949.0,369.1 949.7,359.9 950.4,346.2 951.1,330.2 951.8,314.5 952.5,301.5 953.2,292.9 953.9,289.2 954.6,289.6 955.3,294.6 956.0,305.5 956.7,321.3 957.4,339.7 958.1,358.1 958.8,373.3 959.5,382.9 960.2,385.3 960.9,380.0 961.6,368.0 962.3,351.2 963.0,332.5 963.7,314.7" transform="translate(1,0.3)" fill="none" stroke="#3a80f0" stroke-width="0.85" opacity="0.85"/><polyline points="872.0,289.0 872.7,290.7 873.4,297.2 874.1,308.8 874.8,324.1 875.5,340.8 876.2,356.4 876.9,368.2 877.6,374.4 878.3,373.8 879.0,366.6 879.7,353.9 880.4,337.9 881.1,321.3 881.8,306.5 882.5,295.7 883.2,290.1 883.9,289.0 884.6,291.2 885.3,297.3 886.0,307.3 886.7,319.9 887.4,333.1 888.1,345.0 888.8,353.5 889.5,357.2 890.2,355.4 890.9,348.6 891.6,337.8 892.3,324.8 893.0,311.7 893.7,300.6 894.4,293.0 895.1,289.4 895.8,289.3 896.5,293.0 897.2,301.9 897.9,315.4 898.6,331.5 899.3,348.0 900.0,362.1 900.7,371.5 901.4,374.6 902.1,370.9 902.8,361.0 903.5,346.6 904.2,330.0 904.9,314.0 905.6,300.9 906.3,292.5 907.0,289.2 907.7,289.6 908.4,294.0 909.1,302.9 909.8,315.5 910.5,330.2 911.2,344.5 911.9,356.2 912.6,363.3 913.3,364.7 914.0,360.1 914.7,350.2 915.4,336.8 916.1,322.0 916.8,308.2 917.5,297.5 918.2,291.0 918.9,289.0 919.6,290.3 920.3,296.2 921.0,306.8 921.7,321.2 922.4,337.1 923.1,352.2 923.8,363.9 924.5,370.2 925.2,370.2 925.9,363.8 926.6,352.1 927.3,337.0 928.0,321.1 928.7,306.7 929.4,296.1 930.1,290.3 930.8,289.0 931.5,291.6 932.2,299.8 932.9,313.5 933.6,330.9 934.3,349.7 935.0,366.6 935.7,379.1 936.4,384.9 937.1,383.1 937.8,374.0 938.5,359.1 939.2,341.0 939.9,322.5 940.6,306.5 941.3,295.2 942.0,289.8 942.7,289.2 943.4,292.4 944.1,300.7 944.8,313.4 945.5,329.0 946.2,345.1 946.9,359.0 947.6,368.6 948.3,372.2 949.0,369.1 949.7,359.9 950.4,346.2 951.1,330.2 951.8,314.5 952.5,301.5 953.2,292.9 953.9,289.2 954.6,289.6 955.3,294.6 956.0,305.5 956.7,321.3 957.4,339.7 958.1,358.1 958.8,373.3 959.5,382.9 960.2,385.3 960.9,380.0 961.6,368.0 962.3,351.2 963.0,332.5 963.7,314.7" fill="none" stroke="#ff3040" stroke-width="0.85" opacity="0.9"/><polyline points="872.0,365.7 872.7,348.0 873.4,328.7 874.1,311.0 874.8,297.7 875.5,290.5 876.2,289.0 876.9,291.1 877.6,297.3 878.3,307.5 879.0,320.2 879.7,333.4 880.4,344.8 881.1,352.3 881.8,354.6 882.5,351.2 883.2,342.8 883.9,330.9 884.6,317.6 885.3,305.2 886.0,295.7 886.7,290.3 887.4,289.0 888.1,290.9 888.8,297.3 889.5,308.1 890.2,321.9 890.9,336.5 891.6,349.4 892.3,358.1 893.0,361.3 893.7,358.1 894.4,349.4 895.1,336.5 895.8,321.9 896.5,308.1 897.2,297.2 897.9,290.8 898.6,289.0 899.3,290.0 900.0,293.8 900.7,300.5 901.4,309.3 902.1,318.7 902.8,327.2 903.5,333.2 904.2,335.6 904.9,333.9 905.6,328.6 906.3,320.5 907.0,311.1 907.7,302.1 908.4,294.9 909.1,290.5 909.8,289.0 910.5,290.3 911.2,296.6 911.9,308.1 912.6,323.4 913.3,340.2 914.0,355.5 914.7,366.6 915.4,371.5 916.1,369.3 916.8,360.4 917.5,346.5 918.2,329.9 918.9,313.7 919.6,300.5 920.3,292.1 921.0,289.1 921.7,290.0 922.4,295.6 923.1,306.4 923.8,321.1 924.5,337.5 925.2,352.7 925.9,364.1 926.6,369.6 927.3,368.1 928.0,360.0 928.7,346.7 929.4,330.6 930.1,314.6 930.8,301.3 931.5,292.6 932.2,289.2 932.9,289.7 933.6,294.6 934.3,304.4 935.0,318.2 935.7,333.9 936.4,348.7 937.1,360.0 937.8,365.9 938.5,365.1 939.2,358.0 939.9,345.6 940.6,330.4 941.3,314.9 942.0,301.9 942.7,293.0 943.4,289.3 944.1,289.6 944.8,295.2 945.5,307.3 946.2,324.6 946.9,344.5 947.6,363.7 948.3,378.8 949.0,387.0 949.7,386.9 950.4,378.5 951.1,363.2 951.8,344.0 952.5,324.1 953.2,306.9 953.9,295.0 954.6,289.5 955.3,289.4 956.0,294.1 956.7,304.8 957.4,320.7 958.1,339.3 958.8,357.5 959.5,372.2 960.2,380.7 960.9,381.4 961.6,374.1 962.3,360.3 963.0,342.5 963.7,323.7" transform="translate(1,0.3)" fill="none" stroke="#3a80f0" stroke-width="0.85" opacity="0.85"/><polyline points="872.0,365.7 872.7,348.0 873.4,328.7 874.1,311.0 874.8,297.7 875.5,290.5 876.2,289.0 876.9,291.1 877.6,297.3 878.3,307.5 879.0,320.2 879.7,333.4 880.4,344.8 881.1,352.3 881.8,354.6 882.5,351.2 883.2,342.8 883.9,330.9 884.6,317.6 885.3,305.2 886.0,295.7 886.7,290.3 887.4,289.0 888.1,290.9 888.8,297.3 889.5,308.1 890.2,321.9 890.9,336.5 891.6,349.4 892.3,358.1 893.0,361.3 893.7,358.1 894.4,349.4 895.1,336.5 895.8,321.9 896.5,308.1 897.2,297.2 897.9,290.8 898.6,289.0 899.3,290.0 900.0,293.8 900.7,300.5 901.4,309.3 902.1,318.7 902.8,327.2 903.5,333.2 904.2,335.6 904.9,333.9 905.6,328.6 906.3,320.5 907.0,311.1 907.7,302.1 908.4,294.9 909.1,290.5 909.8,289.0 910.5,290.3 911.2,296.6 911.9,308.1 912.6,323.4 913.3,340.2 914.0,355.5 914.7,366.6 915.4,371.5 916.1,369.3 916.8,360.4 917.5,346.5 918.2,329.9 918.9,313.7 919.6,300.5 920.3,292.1 921.0,289.1 921.7,290.0 922.4,295.6 923.1,306.4 923.8,321.1 924.5,337.5 925.2,352.7 925.9,364.1 926.6,369.6 927.3,368.1 928.0,360.0 928.7,346.7 929.4,330.6 930.1,314.6 930.8,301.3 931.5,292.6 932.2,289.2 932.9,289.7 933.6,294.6 934.3,304.4 935.0,318.2 935.7,333.9 936.4,348.7 937.1,360.0 937.8,365.9 938.5,365.1 939.2,358.0 939.9,345.6 940.6,330.4 941.3,314.9 942.0,301.9 942.7,293.0 943.4,289.3 944.1,289.6 944.8,295.2 945.5,307.3 946.2,324.6 946.9,344.5 947.6,363.7 948.3,378.8 949.0,387.0 949.7,386.9 950.4,378.5 951.1,363.2 951.8,344.0 952.5,324.1 953.2,306.9 953.9,295.0 954.6,289.5 955.3,289.4 956.0,294.1 956.7,304.8 957.4,320.7 958.1,339.3 958.8,357.5 959.5,372.2 960.2,380.7 960.9,381.4 961.6,374.1 962.3,360.3 963.0,342.5 963.7,323.7" fill="none" stroke="#ff3040" stroke-width="0.85" opacity="0.9"/><polyline points="872.0,511.8 872.7,517.1 873.4,518.5 874.1,516.6 874.8,509.6 875.5,498.0 876.2,483.4 876.9,468.7 877.6,456.8 878.3,450.3 879.0,450.4 879.7,457.1 880.4,469.1 881.1,483.9 881.8,498.4 882.5,509.9 883.2,516.7 883.9,518.5 884.6,517.1 885.3,511.9 886.0,503.3 886.7,492.5 887.4,481.6 888.1,472.8 888.8,468.0 889.5,468.1 890.2,473.1 890.9,481.9 891.6,492.9 892.3,503.6 893.0,512.2 893.7,517.2 894.4,518.5 895.1,516.2 895.8,508.1 896.5,494.4 897.2,477.3 897.9,460.1 898.6,446.2 899.3,438.6 900.0,438.7 900.7,446.6 901.4,460.7 902.1,478.0 902.8,495.0 903.5,508.5 904.2,516.4 904.9,518.5 905.6,516.5 906.3,509.2 907.0,496.9 907.7,481.7 908.4,466.3 909.1,453.9 909.8,447.1 910.5,447.2 911.2,454.3 911.9,466.9 912.6,482.3 913.3,497.5 914.0,509.6 914.7,516.6 915.4,518.5 916.1,517.1 916.8,512.0 917.5,503.4 918.2,492.8 918.9,482.1 919.6,473.4 920.3,468.6 921.0,468.7 921.7,473.7 922.4,482.5 923.1,493.2 923.8,503.8 924.5,512.3 925.2,517.2 925.9,518.5 926.6,516.7 927.3,510.3 928.0,499.6 928.7,486.3 929.4,472.8 930.1,462.0 930.8,456.0 931.5,456.1 932.2,462.3 932.9,473.3 933.6,486.8 934.3,500.1 935.0,510.7 935.7,516.9 936.4,518.5 937.1,516.2 937.8,508.1 938.5,494.5 939.2,477.6 939.9,460.6 940.6,446.8 941.3,439.2 942.0,439.4 942.7,447.3 943.4,461.3 944.1,478.4 944.8,495.2 945.5,508.6 946.2,516.4 946.9,518.5 947.6,517.3 948.3,513.2 949.0,506.2 949.7,497.6 950.4,488.8 951.1,481.8 951.8,477.9 952.5,478.0 953.2,482.1 953.9,489.2 954.6,498.0 955.3,506.6 956.0,513.4 956.7,517.5 957.4,518.5 958.1,516.5 958.8,509.3 959.5,497.3 960.2,482.4 960.9,467.4 961.6,455.3 962.3,448.6 963.0,448.8 963.7,455.7" transform="translate(1,0.3)" fill="none" stroke="#40a0f0" stroke-width="0.9" opacity="0.95"/><polyline points="872.0,511.8 872.7,517.1 873.4,518.5 874.1,516.6 874.8,509.6 875.5,498.0 876.2,483.4 876.9,468.7 877.6,456.8 878.3,450.3 879.0,450.4 879.7,457.1 880.4,469.1 881.1,483.9 881.8,498.4 882.5,509.9 883.2,516.7 883.9,518.5 884.6,517.1 885.3,511.9 886.0,503.3 886.7,492.5 887.4,481.6 888.1,472.8 888.8,468.0 889.5,468.1 890.2,473.1 890.9,481.9 891.6,492.9 892.3,503.6 893.0,512.2 893.7,517.2 894.4,518.5 895.1,516.2 895.8,508.1 896.5,494.4 897.2,477.3 897.9,460.1 898.6,446.2 899.3,438.6 900.0,438.7 900.7,446.6 901.4,460.7 902.1,478.0 902.8,495.0 903.5,508.5 904.2,516.4 904.9,518.5 905.6,516.5 906.3,509.2 907.0,496.9 907.7,481.7 908.4,466.3 909.1,453.9 909.8,447.1 910.5,447.2 911.2,454.3 911.9,466.9 912.6,482.3 913.3,497.5 914.0,509.6 914.7,516.6 915.4,518.5 916.1,517.1 916.8,512.0 917.5,503.4 918.2,492.8 918.9,482.1 919.6,473.4 920.3,468.6 921.0,468.7 921.7,473.7 922.4,482.5 923.1,493.2 923.8,503.8 924.5,512.3 925.2,517.2 925.9,518.5 926.6,516.7 927.3,510.3 928.0,499.6 928.7,486.3 929.4,472.8 930.1,462.0 930.8,456.0 931.5,456.1 932.2,462.3 932.9,473.3 933.6,486.8 934.3,500.1 935.0,510.7 935.7,516.9 936.4,518.5 937.1,516.2 937.8,508.1 938.5,494.5 939.2,477.6 939.9,460.6 940.6,446.8 941.3,439.2 942.0,439.4 942.7,447.3 943.4,461.3 944.1,478.4 944.8,495.2 945.5,508.6 946.2,516.4 946.9,518.5 947.6,517.3 948.3,513.2 949.0,506.2 949.7,497.6 950.4,488.8 951.1,481.8 951.8,477.9 952.5,478.0 953.2,482.1 953.9,489.2 954.6,498.0 955.3,506.6 956.0,513.4 956.7,517.5 957.4,518.5 958.1,516.5 958.8,509.3 959.5,497.3 960.2,482.4 960.9,467.4 961.6,455.3 962.3,448.6 963.0,448.8 963.7,455.7" fill="none" stroke="#ff3040" stroke-width="0.9" opacity="1"/><polyline points="872.0,505.9 872.7,515.3 873.4,525.7 874.1,535.1 874.8,542.0 875.5,545.5 876.2,545.9 876.9,544.5 877.6,540.8 878.3,535.2 879.0,528.4 879.7,521.8 880.4,516.6 881.1,513.8 881.8,513.9 882.5,516.9 883.2,522.3 883.9,528.9 884.6,535.6 885.3,541.2 886.0,544.7 886.7,546.0 887.4,545.4 888.1,541.9 888.8,535.2 889.5,526.2 890.2,516.4 890.9,507.7 891.6,501.6 892.3,499.4 893.0,501.5 893.7,507.5 894.4,516.3 895.1,526.0 895.8,535.1 896.5,541.8 897.2,545.3 897.9,546.0 898.6,544.5 899.3,540.2 900.0,533.6 900.7,525.5 901.4,517.5 902.1,510.9 902.8,507.2 903.5,507.1 904.2,510.4 904.9,516.7 905.6,524.7 906.3,532.8 907.0,539.7 907.7,544.2 908.4,545.9 909.1,545.8 909.8,544.2 910.5,541.0 911.2,536.7 911.9,531.9 912.6,527.5 913.3,524.4 914.0,523.1 914.7,524.0 915.4,526.8 916.1,531.0 916.8,535.8 917.5,540.3 918.2,543.7 918.9,545.6 919.6,546.0 920.3,544.9 921.0,541.4 921.7,535.7 922.4,528.7 923.1,521.6 923.8,515.7 924.5,512.2 925.2,511.8 925.9,514.5 926.6,519.8 927.3,526.7 928.0,533.9 928.7,540.0 929.4,544.2 930.1,545.9 930.8,545.7 931.5,542.9 932.2,537.1 932.9,528.9 933.6,519.7 934.3,511.1 935.0,504.9 935.7,502.2 936.4,503.5 937.1,508.6 937.8,516.5 938.5,525.7 939.2,534.4 939.9,541.2 940.6,545.0 941.3,546.0 942.0,545.4 942.7,543.3 943.4,539.9 944.1,535.6 944.8,531.1 945.5,527.4 946.2,525.1 946.9,524.6 947.6,526.2 948.3,529.4 949.0,533.6 949.7,538.1 950.4,542.0 951.1,544.7 951.8,545.9 952.5,545.7 953.2,543.0 953.9,537.0 954.6,528.4 955.3,518.5 956.0,509.2 956.7,502.2 957.4,498.9 958.1,500.0 958.8,505.2 959.5,513.5 960.2,523.3 960.9,532.8 961.6,540.3 962.3,544.7 963.0,546.0 963.7,544.9" transform="translate(1,0.3)" fill="none" stroke="#40a0f0" stroke-width="0.9" opacity="0.95"/><polyline points="872.0,505.9 872.7,515.3 873.4,525.7 874.1,535.1 874.8,542.0 875.5,545.5 876.2,545.9 876.9,544.5 877.6,540.8 878.3,535.2 879.0,528.4 879.7,521.8 880.4,516.6 881.1,513.8 881.8,513.9 882.5,516.9 883.2,522.3 883.9,528.9 884.6,535.6 885.3,541.2 886.0,544.7 886.7,546.0 887.4,545.4 888.1,541.9 888.8,535.2 889.5,526.2 890.2,516.4 890.9,507.7 891.6,501.6 892.3,499.4 893.0,501.5 893.7,507.5 894.4,516.3 895.1,526.0 895.8,535.1 896.5,541.8 897.2,545.3 897.9,546.0 898.6,544.5 899.3,540.2 900.0,533.6 900.7,525.5 901.4,517.5 902.1,510.9 902.8,507.2 903.5,507.1 904.2,510.4 904.9,516.7 905.6,524.7 906.3,532.8 907.0,539.7 907.7,544.2 908.4,545.9 909.1,545.8 909.8,544.2 910.5,541.0 911.2,536.7 911.9,531.9 912.6,527.5 913.3,524.4 914.0,523.1 914.7,524.0 915.4,526.8 916.1,531.0 916.8,535.8 917.5,540.3 918.2,543.7 918.9,545.6 919.6,546.0 920.3,544.9 921.0,541.4 921.7,535.7 922.4,528.7 923.1,521.6 923.8,515.7 924.5,512.2 925.2,511.8 925.9,514.5 926.6,519.8 927.3,526.7 928.0,533.9 928.7,540.0 929.4,544.2 930.1,545.9 930.8,545.7 931.5,542.9 932.2,537.1 932.9,528.9 933.6,519.7 934.3,511.1 935.0,504.9 935.7,502.2 936.4,503.5 937.1,508.6 937.8,516.5 938.5,525.7 939.2,534.4 939.9,541.2 940.6,545.0 941.3,546.0 942.0,545.4 942.7,543.3 943.4,539.9 944.1,535.6 944.8,531.1 945.5,527.4 946.2,525.1 946.9,524.6 947.6,526.2 948.3,529.4 949.0,533.6 949.7,538.1 950.4,542.0 951.1,544.7 951.8,545.9 952.5,545.7 953.2,543.0 953.9,537.0 954.6,528.4 955.3,518.5 956.0,509.2 956.7,502.2 957.4,498.9 958.1,500.0 958.8,505.2 959.5,513.5 960.2,523.3 960.9,532.8 961.6,540.3 962.3,544.7 963.0,546.0 963.7,544.9" fill="none" stroke="#ff3040" stroke-width="0.9" opacity="1"/></g><g clip-path="url(#cp2)"><rect x="973" y="289" width="92" height="255" fill="#7c1246"/><rect x="973.0" y="289" width="1.2" height="255" fill="#4a0a40" opacity="0.12"/><rect x="974.9" y="289" width="1.1" height="255" fill="#8a2068" opacity="0.24"/><rect x="976.1" y="289" width="1.3" height="255" fill="#8a2068" opacity="0.25"/><rect x="977.6" y="289" width="1.3" height="255" fill="#600a38" opacity="0.16"/><rect x="979.8" y="289" width="1.2" height="255" fill="#c01848" opacity="0.15"/><rect x="981.5" y="289" width="1.5" height="255" fill="#4a0a40" opacity="0.19"/><rect x="983.9" y="289" width="1.0" height="255" fill="#c01848" opacity="0.25"/><rect x="985.3" y="289" width="1.3" height="255" fill="#b01040" opacity="0.24"/><rect x="986.8" y="289" width="1.5" height="255" fill="#5a0830" opacity="0.26"/><rect x="988.2" y="289" width="1.0" height="255" fill="#4a0a40" opacity="0.14"/><rect x="989.3" y="289" width="0.9" height="255" fill="#b01040" opacity="0.14"/><rect x="990.6" y="289" width="1.2" height="255" fill="#600a38" opacity="0.11"/><rect x="991.8" y="289" width="0.6" height="255" fill="#4a0a40" opacity="0.21"/><rect x="992.7" y="289" width="0.7" height="255" fill="#5a0830" opacity="0.10"/><rect x="993.8" y="289" width="0.6" height="255" fill="#600a38" opacity="0.13"/><rect x="994.5" y="289" width="0.8" height="255" fill="#4a0a40" opacity="0.15"/><rect x="995.6" y="289" width="1.4" height="255" fill="#8a2068" opacity="0.18"/><rect x="997.9" y="289" width="0.9" height="255" fill="#b01040" opacity="0.08"/><rect x="999.0" y="289" width="1.4" height="255" fill="#c01848" opacity="0.10"/><rect x="1001.3" y="289" width="0.6" height="255" fill="#8a2068" opacity="0.19"/><rect x="1002.2" y="289" width="1.5" height="255" fill="#4a0a40" opacity="0.24"/><rect x="1004.8" y="289" width="1.3" height="255" fill="#600a38" opacity="0.09"/><rect x="1006.1" y="289" width="1.2" height="255" fill="#4a0a40" opacity="0.13"/><rect x="1007.5" y="289" width="1.5" height="255" fill="#600a38" opacity="0.13"/><rect x="1010.1" y="289" width="1.6" height="255" fill="#600a38" opacity="0.15"/><rect x="1012.5" y="289" width="0.9" height="255" fill="#c01848" opacity="0.11"/><rect x="1014.2" y="289" width="1.5" height="255" fill="#c01848" opacity="0.19"/><rect x="1015.9" y="289" width="1.2" height="255" fill="#4a0a40" opacity="0.25"/><rect x="1017.9" y="289" width="1.0" height="255" fill="#c01848" opacity="0.25"/><rect x="1019.7" y="289" width="1.4" height="255" fill="#8a2068" opacity="0.20"/><rect x="1020.9" y="289" width="1.3" height="255" fill="#4a0a40" opacity="0.08"/><rect x="1022.7" y="289" width="1.4" height="255" fill="#8a2068" opacity="0.09"/><rect x="1024.1" y="289" width="1.5" height="255" fill="#5a0830" opacity="0.25"/><rect x="1025.5" y="289" width="1.5" height="255" fill="#b01040" opacity="0.18"/><rect x="1028.3" y="289" width="1.3" height="255" fill="#b01040" opacity="0.23"/><rect x="1029.6" y="289" width="0.6" height="255" fill="#b01040" opacity="0.23"/><rect x="1030.3" y="289" width="0.6" height="255" fill="#b01040" opacity="0.19"/><rect x="1030.9" y="289" width="1.2" height="255" fill="#4a0a40" opacity="0.10"/><rect x="1032.4" y="289" width="1.4" height="255" fill="#4a0a40" opacity="0.17"/><rect x="1034.0" y="289" width="0.6" height="255" fill="#4a0a40" opacity="0.23"/><rect x="1034.6" y="289" width="0.6" height="255" fill="#c01848" opacity="0.19"/><rect x="1035.3" y="289" width="0.7" height="255" fill="#c01848" opacity="0.10"/><rect x="1036.2" y="289" width="1.4" height="255" fill="#c01848" opacity="0.12"/><rect x="1037.5" y="289" width="0.8" height="255" fill="#5a0830" opacity="0.13"/><rect x="1038.4" y="289" width="1.1" height="255" fill="#5a0830" opacity="0.22"/><rect x="1040.0" y="289" width="1.1" height="255" fill="#4a0a40" opacity="0.21"/><rect x="1040.9" y="289" width="0.6" height="255" fill="#5a0830" opacity="0.14"/><rect x="1041.7" y="289" width="0.9" height="255" fill="#c01848" opacity="0.19"/><rect x="1043.1" y="289" width="1.1" height="255" fill="#8a2068" opacity="0.15"/><rect x="1044.3" y="289" width="1.3" height="255" fill="#5a0830" opacity="0.22"/><rect x="1045.9" y="289" width="1.0" height="255" fill="#b01040" opacity="0.14"/><rect x="1046.9" y="289" width="1.6" height="255" fill="#4a0a40" opacity="0.25"/><rect x="1048.8" y="289" width="0.8" height="255" fill="#600a38" opacity="0.09"/><rect x="1049.8" y="289" width="1.4" height="255" fill="#8a2068" opacity="0.11"/><rect x="1052.2" y="289" width="1.2" height="255" fill="#b01040" opacity="0.23"/><rect x="1053.8" y="289" width="1.4" height="255" fill="#600a38" opacity="0.23"/><rect x="1055.9" y="289" width="0.9" height="255" fill="#600a38" opacity="0.24"/><rect x="1057.2" y="289" width="0.8" height="255" fill="#4a0a40" opacity="0.21"/><rect x="1058.3" y="289" width="1.1" height="255" fill="#4a0a40" opacity="0.15"/><rect x="1059.3" y="289" width="1.4" height="255" fill="#5a0830" opacity="0.13"/><rect x="1061.6" y="289" width="0.7" height="255" fill="#5a0830" opacity="0.15"/><rect x="1062.5" y="289" width="0.8" height="255" fill="#600a38" opacity="0.10"/><rect x="1063.4" y="289" width="1.4" height="255" fill="#8a2068" opacity="0.15"/><rect x="1064.8" y="289" width="1.5" height="255" fill="#8a2068" opacity="0.10"/><rect x="973.0" y="289.0" width="2.4" height="100.8" fill="url(#gc)"/><rect x="974.7" y="289.0" width="1.8" height="139.8" fill="url(#gc)"/><rect x="976.2" y="289.0" width="1.7" height="101.6" fill="url(#gr)"/><rect x="977.5" y="289.0" width="1.3" height="133.1" fill="url(#gm)"/><rect x="978.4" y="289.0" width="1.3" height="128.3" fill="url(#gr)"/><rect x="979.3" y="289.0" width="2.1" height="129.8" fill="url(#gc)"/><rect x="981.4" y="289.0" width="1.2" height="125.4" fill="url(#gm)"/><rect x="982.1" y="289.0" width="1.8" height="134.7" fill="url(#gc)"/><rect x="983.4" y="289.0" width="1.1" height="82.7" fill="url(#gr)"/><rect x="984.3" y="289.0" width="1.3" height="110.8" fill="url(#gc)"/><rect x="985.5" y="289.0" width="2.1" height="110.8" fill="url(#gr)"/><rect x="987.0" y="289.0" width="1.3" height="122.5" fill="url(#gr)"/><rect x="988.4" y="289.0" width="0.9" height="61.4" fill="url(#gb)"/><rect x="989.1" y="289.0" width="1.4" height="92.5" fill="url(#gc)"/><rect x="990.2" y="289.0" width="1.4" height="76.6" fill="url(#gr)"/><rect x="991.0" y="289.0" width="0.9" height="118.2" fill="url(#gm)"/><rect x="991.8" y="289.0" width="1.3" height="62.7" fill="url(#gc)"/><rect x="992.8" y="289.0" width="1.4" height="137.0" fill="url(#gr)"/><rect x="994.1" y="289.0" width="1.1" height="124.3" fill="url(#gr)"/><rect x="994.9" y="289.0" width="1.4" height="83.5" fill="url(#gr)"/><rect x="996.0" y="289.0" width="1.4" height="61.4" fill="url(#gm)"/><rect x="997.1" y="289.0" width="1.8" height="129.1" fill="url(#gr)"/><rect x="999.0" y="289.0" width="1.9" height="70.1" fill="url(#gm)"/><rect x="1000.7" y="289.0" width="1.3" height="100.9" fill="url(#gr)"/><rect x="1001.5" y="289.0" width="1.9" height="57.1" fill="url(#gb)"/><rect x="1003.1" y="289.0" width="1.2" height="117.0" fill="url(#gr)"/><rect x="1004.4" y="289.0" width="1.4" height="85.3" fill="url(#gb)"/><rect x="1005.9" y="289.0" width="1.2" height="63.1" fill="url(#gb)"/><rect x="1006.8" y="289.0" width="2.0" height="120.5" fill="url(#gc)"/><rect x="1008.5" y="289.0" width="1.5" height="110.7" fill="url(#gm)"/><rect x="1009.8" y="289.0" width="2.0" height="135.0" fill="url(#gb)"/><rect x="1011.5" y="289.0" width="2.2" height="88.1" fill="url(#gb)"/><rect x="1013.7" y="289.0" width="1.4" height="130.1" fill="url(#gc)"/><rect x="1015.2" y="289.0" width="2.3" height="98.0" fill="url(#gb)"/><rect x="1016.7" y="289.0" width="1.9" height="86.3" fill="url(#gc)"/><rect x="1017.9" y="289.0" width="2.0" height="73.4" fill="url(#gc)"/><rect x="1019.1" y="289.0" width="1.1" height="126.1" fill="url(#gm)"/><rect x="1019.8" y="289.0" width="2.1" height="73.7" fill="url(#gr)"/><rect x="1021.5" y="289.0" width="2.0" height="114.0" fill="url(#gm)"/><rect x="1023.0" y="289.0" width="1.5" height="56.3" fill="url(#gm)"/><rect x="1023.9" y="289.0" width="1.4" height="72.7" fill="url(#gb)"/><rect x="1024.8" y="289.0" width="2.4" height="90.7" fill="url(#gb)"/><rect x="1027.1" y="289.0" width="2.0" height="103.1" fill="url(#gc)"/><rect x="1028.8" y="289.0" width="1.0" height="89.1" fill="url(#gm)"/><rect x="1029.5" y="289.0" width="1.4" height="74.8" fill="url(#gc)"/><rect x="1030.3" y="289.0" width="1.4" height="58.1" fill="url(#gr)"/><rect x="1031.8" y="289.0" width="1.7" height="100.8" fill="url(#gr)"/><rect x="1032.8" y="289.0" width="1.6" height="138.4" fill="url(#gc)"/><rect x="1034.0" y="289.0" width="2.1" height="62.9" fill="url(#gm)"/><rect x="1035.6" y="289.0" width="2.1" height="116.9" fill="url(#gb)"/><rect x="1037.9" y="289.0" width="1.5" height="125.0" fill="url(#gb)"/><rect x="1039.4" y="289.0" width="2.2" height="84.7" fill="url(#gc)"/><rect x="1041.0" y="289.0" width="1.8" height="82.0" fill="url(#gr)"/><rect x="1042.4" y="289.0" width="1.2" height="111.0" fill="url(#gr)"/><rect x="1043.2" y="289.0" width="1.0" height="135.7" fill="url(#gc)"/><rect x="1043.8" y="289.0" width="1.9" height="74.7" fill="url(#gr)"/><rect x="1045.0" y="289.0" width="1.9" height="125.3" fill="url(#gm)"/><rect x="1046.6" y="289.0" width="2.0" height="105.2" fill="url(#gc)"/><rect x="1047.9" y="289.0" width="1.1" height="125.1" fill="url(#gc)"/><rect x="1048.9" y="289.0" width="2.3" height="90.0" fill="url(#gc)"/><rect x="1050.4" y="289.0" width="1.5" height="130.9" fill="url(#gc)"/><rect x="1051.1" y="289.0" width="0.9" height="132.7" fill="url(#gm)"/><rect x="1052.1" y="289.0" width="2.2" height="73.4" fill="url(#gr)"/><rect x="1054.2" y="289.0" width="1.6" height="136.9" fill="url(#gr)"/><rect x="1054.9" y="289.0" width="1.6" height="115.1" fill="url(#gc)"/><rect x="1056.6" y="289.0" width="1.3" height="138.5" fill="url(#gm)"/><rect x="1057.4" y="289.0" width="1.5" height="69.6" fill="url(#gc)"/><rect x="1058.9" y="289.0" width="2.0" height="139.4" fill="url(#gr)"/><rect x="1060.8" y="289.0" width="1.1" height="130.4" fill="url(#gc)"/><rect x="1061.7" y="289.0" width="0.9" height="105.3" fill="url(#gb)"/><rect x="1062.6" y="289.0" width="1.0" height="124.1" fill="url(#gm)"/><rect x="1063.6" y="289.0" width="1.2" height="94.3" fill="url(#gr)"/><rect x="1064.5" y="289.0" width="2.4" height="56.2" fill="url(#gc)"/><rect x="973.0" y="330.7" width="0.8" height="14.6" fill="#5a0a30" opacity="0.81"/><rect x="973.0" y="299.2" width="0.8" height="7.4" fill="#d02080" opacity="0.85"/><rect x="973.0" y="298.7" width="0.8" height="16.2" fill="#ffffff" opacity="0.68"/><rect x="973.0" y="322.8" width="0.8" height="25.2" fill="#4a60ff" opacity="0.93"/><rect x="974.0" y="323.8" width="1.4" height="21.1" fill="#e01838" opacity="0.91"/><rect x="974.0" y="305.9" width="1.4" height="17.4" fill="#4a60ff" opacity="0.91"/><rect x="974.0" y="322.7" width="1.4" height="14.0" fill="#3a58f0" opacity="0.79"/><rect x="974.0" y="347.9" width="1.4" height="14.8" fill="#ff2040" opacity="0.77"/><rect x="975.1" y="304.7" width="1.3" height="24.4" fill="#ff2040" opacity="0.67"/><rect x="975.1" y="305.6" width="1.3" height="13.6" fill="#ffffff" opacity="0.83"/><rect x="975.1" y="344.8" width="1.3" height="8.5" fill="#4a60ff" opacity="0.53"/><rect x="975.1" y="309.1" width="1.3" height="8.3" fill="#ffffff" opacity="0.49"/><rect x="976.4" y="312.4" width="1.0" height="22.8" fill="#ff4060" opacity="0.51"/><rect x="976.4" y="324.1" width="1.0" height="25.1" fill="#4a60ff" opacity="0.95"/><rect x="976.4" y="298.7" width="1.0" height="15.4" fill="#e01838" opacity="0.77"/><rect x="976.4" y="290.9" width="1.0" height="22.7" fill="#5a0a30" opacity="0.78"/><rect x="977.6" y="291.5" width="1.4" height="26.7" fill="#e01838" opacity="0.93"/><rect x="977.6" y="340.1" width="1.4" height="11.9" fill="#4a60ff" opacity="0.79"/><rect x="977.6" y="308.7" width="1.4" height="19.2" fill="#3a58f0" opacity="0.85"/><rect x="977.6" y="291.9" width="1.4" height="14.0" fill="#ffffff" opacity="0.65"/><rect x="979.5" y="323.4" width="0.9" height="24.3" fill="#ff4060" opacity="0.68"/><rect x="979.5" y="303.9" width="0.9" height="11.7" fill="#2a70ff" opacity="0.84"/><rect x="979.5" y="313.0" width="0.9" height="11.4" fill="#ff2040" opacity="0.77"/><rect x="979.5" y="332.6" width="0.9" height="8.1" fill="#3a58f0" opacity="0.54"/><rect x="980.7" y="316.7" width="0.8" height="25.5" fill="#d02080" opacity="0.75"/><rect x="980.7" y="332.0" width="0.8" height="21.2" fill="#ff4060" opacity="0.80"/><rect x="980.7" y="325.2" width="0.8" height="23.5" fill="#ff2040" opacity="0.82"/><rect x="980.7" y="307.7" width="0.8" height="7.6" fill="#2a70ff" opacity="0.67"/><rect x="981.6" y="298.8" width="1.5" height="26.5" fill="#ff2040" opacity="0.75"/><rect x="981.6" y="332.1" width="1.5" height="16.0" fill="#d02080" opacity="0.93"/><rect x="981.6" y="295.9" width="1.5" height="20.0" fill="#ff4060" opacity="0.89"/><rect x="981.6" y="310.9" width="1.5" height="6.9" fill="#ffffff" opacity="0.79"/><rect x="983.0" y="298.2" width="1.3" height="14.6" fill="#ff2040" opacity="0.65"/><rect x="983.0" y="335.9" width="1.3" height="12.3" fill="#ff2040" opacity="0.91"/><rect x="983.0" y="292.4" width="1.3" height="18.3" fill="#e01838" opacity="0.58"/><rect x="983.0" y="341.8" width="1.3" height="21.0" fill="#3a58f0" opacity="0.88"/><rect x="984.1" y="316.4" width="1.6" height="6.4" fill="#ff2040" opacity="0.91"/><rect x="984.1" y="298.6" width="1.6" height="14.8" fill="#d02080" opacity="0.77"/><rect x="984.1" y="289.7" width="1.6" height="9.4" fill="#3a58f0" opacity="0.76"/><rect x="984.1" y="337.0" width="1.6" height="24.8" fill="#ffffff" opacity="0.75"/><rect x="985.4" y="329.1" width="1.4" height="26.5" fill="#e01838" opacity="0.93"/><rect x="985.4" y="330.5" width="1.4" height="12.7" fill="#3a58f0" opacity="0.85"/><rect x="985.4" y="294.2" width="1.4" height="13.0" fill="#4a60ff" opacity="0.88"/><rect x="985.4" y="291.1" width="1.4" height="9.3" fill="#ffffff" opacity="0.56"/><rect x="986.6" y="331.6" width="0.7" height="14.3" fill="#4a60ff" opacity="0.69"/><rect x="986.6" y="320.8" width="0.7" height="19.0" fill="#3a58f0" opacity="0.58"/><rect x="986.6" y="318.7" width="0.7" height="17.8" fill="#4a60ff" opacity="0.87"/><rect x="986.6" y="295.9" width="0.7" height="27.3" fill="#ff2040" opacity="0.86"/><rect x="987.5" y="294.6" width="1.3" height="24.2" fill="#e01838" opacity="0.68"/><rect x="987.5" y="332.7" width="1.3" height="8.4" fill="#ffffff" opacity="0.55"/><rect x="987.5" y="339.2" width="1.3" height="14.7" fill="#ff4060" opacity="0.83"/><rect x="987.5" y="333.6" width="1.3" height="16.2" fill="#ff4060" opacity="0.77"/><rect x="988.9" y="331.0" width="1.6" height="26.0" fill="#d02080" opacity="0.75"/><rect x="988.9" y="298.2" width="1.6" height="16.9" fill="#2a70ff" opacity="0.62"/><rect x="988.9" y="301.0" width="1.6" height="18.0" fill="#ff2040" opacity="0.50"/><rect x="988.9" y="317.5" width="1.6" height="23.5" fill="#2a70ff" opacity="0.85"/><rect x="990.7" y="302.8" width="1.5" height="26.3" fill="#ff2040" opacity="0.79"/><rect x="990.7" y="309.1" width="1.5" height="11.3" fill="#ff2040" opacity="0.72"/><rect x="990.7" y="324.0" width="1.5" height="25.7" fill="#2a70ff" opacity="0.58"/><rect x="990.7" y="339.4" width="1.5" height="12.7" fill="#2a70ff" opacity="0.69"/><rect x="992.2" y="295.7" width="1.0" height="16.9" fill="#ff2040" opacity="0.57"/><rect x="992.2" y="340.0" width="1.0" height="13.4" fill="#ff2040" opacity="0.61"/><rect x="992.2" y="317.8" width="1.0" height="14.2" fill="#ff4060" opacity="0.77"/><rect x="992.2" y="295.9" width="1.0" height="21.4" fill="#4a60ff" opacity="0.62"/><rect x="993.0" y="289.7" width="0.7" height="15.4" fill="#4a60ff" opacity="0.76"/><rect x="993.0" y="325.9" width="0.7" height="21.7" fill="#5a0a30" opacity="0.82"/><rect x="993.0" y="324.6" width="0.7" height="23.9" fill="#3a58f0" opacity="0.75"/><rect x="993.0" y="310.9" width="0.7" height="11.1" fill="#5a0a30" opacity="0.62"/><rect x="993.9" y="303.5" width="1.6" height="24.2" fill="#5a0a30" opacity="0.70"/><rect x="993.9" y="340.0" width="1.6" height="26.9" fill="#e01838" opacity="0.65"/><rect x="993.9" y="307.2" width="1.6" height="13.6" fill="#3a58f0" opacity="0.63"/><rect x="993.9" y="301.1" width="1.6" height="7.8" fill="#e01838" opacity="0.89"/><rect x="995.7" y="340.4" width="1.1" height="16.4" fill="#ff4060" opacity="0.94"/><rect x="995.7" y="306.3" width="1.1" height="16.3" fill="#d02080" opacity="0.76"/><rect x="995.7" y="331.6" width="1.1" height="26.0" fill="#3a58f0" opacity="0.92"/><rect x="995.7" y="292.3" width="1.1" height="27.7" fill="#ff2040" opacity="0.63"/><rect x="996.9" y="317.9" width="1.2" height="17.4" fill="#ffffff" opacity="0.70"/><rect x="996.9" y="321.0" width="1.2" height="6.6" fill="#ffffff" opacity="0.69"/><rect x="996.9" y="339.6" width="1.2" height="17.2" fill="#ffffff" opacity="0.50"/><rect x="996.9" y="302.7" width="1.2" height="9.4" fill="#ff2040" opacity="0.84"/><rect x="998.2" y="315.6" width="1.2" height="18.3" fill="#5a0a30" opacity="0.67"/><rect x="998.2" y="328.3" width="1.2" height="21.9" fill="#3a58f0" opacity="0.57"/><rect x="998.2" y="303.7" width="1.2" height="25.7" fill="#e01838" opacity="0.79"/><rect x="998.2" y="300.6" width="1.2" height="15.5" fill="#ff4060" opacity="0.73"/><rect x="999.7" y="319.6" width="1.0" height="8.7" fill="#ffffff" opacity="0.56"/><rect x="999.7" y="318.5" width="1.0" height="24.9" fill="#5a0a30" opacity="0.65"/><rect x="999.7" y="316.8" width="1.0" height="24.2" fill="#3a58f0" opacity="0.81"/><rect x="999.7" y="315.3" width="1.0" height="15.6" fill="#4a60ff" opacity="0.87"/><rect x="1000.8" y="300.3" width="1.4" height="9.0" fill="#ff4060" opacity="0.52"/><rect x="1000.8" y="335.2" width="1.4" height="24.1" fill="#e01838" opacity="0.78"/><rect x="1000.8" y="330.3" width="1.4" height="9.5" fill="#ff2040" opacity="0.62"/><rect x="1000.8" y="330.9" width="1.4" height="16.8" fill="#3a58f0" opacity="0.91"/><rect x="1002.3" y="321.6" width="0.8" height="9.8" fill="#ff2040" opacity="0.93"/><rect x="1002.3" y="294.1" width="0.8" height="15.7" fill="#d02080" opacity="0.89"/><rect x="1002.3" y="298.0" width="0.8" height="17.4" fill="#2a70ff" opacity="0.81"/><rect x="1002.3" y="314.2" width="0.8" height="8.6" fill="#e01838" opacity="0.55"/><rect x="1003.2" y="333.7" width="1.4" height="10.2" fill="#ff2040" opacity="0.76"/><rect x="1003.2" y="318.9" width="1.4" height="23.5" fill="#2a70ff" opacity="0.62"/><rect x="1003.2" y="296.4" width="1.4" height="27.0" fill="#ff4060" opacity="0.79"/><rect x="1003.2" y="314.6" width="1.4" height="8.7" fill="#ffffff" opacity="0.48"/><rect x="1004.5" y="322.9" width="1.5" height="24.3" fill="#5a0a30" opacity="0.60"/><rect x="1004.5" y="298.6" width="1.5" height="15.4" fill="#4a60ff" opacity="0.88"/><rect x="1004.5" y="303.3" width="1.5" height="17.3" fill="#2a70ff" opacity="0.90"/><rect x="1004.5" y="330.2" width="1.5" height="20.4" fill="#e01838" opacity="0.56"/><rect x="1006.2" y="326.3" width="1.2" height="11.3" fill="#ff2040" opacity="0.82"/><rect x="1006.2" y="322.6" width="1.2" height="20.5" fill="#d02080" opacity="0.67"/><rect x="1006.2" y="290.5" width="1.2" height="13.6" fill="#3a58f0" opacity="0.70"/><rect x="1006.2" y="324.2" width="1.2" height="6.4" fill="#ffffff" opacity="0.71"/><rect x="1007.5" y="309.9" width="1.4" height="26.6" fill="#e01838" opacity="0.52"/><rect x="1007.5" y="305.6" width="1.4" height="22.4" fill="#ff2040" opacity="0.56"/><rect x="1007.5" y="327.2" width="1.4" height="23.5" fill="#ff4060" opacity="0.78"/><rect x="1007.5" y="322.6" width="1.4" height="16.4" fill="#4a60ff" opacity="0.57"/><rect x="1008.9" y="293.4" width="1.0" height="26.4" fill="#d02080" opacity="0.56"/><rect x="1008.9" y="289.7" width="1.0" height="6.1" fill="#ffffff" opacity="0.83"/><rect x="1008.9" y="335.9" width="1.0" height="6.5" fill="#4a60ff" opacity="0.53"/><rect x="1008.9" y="317.8" width="1.0" height="25.1" fill="#ffffff" opacity="0.64"/><rect x="1009.7" y="298.4" width="0.8" height="11.9" fill="#3a58f0" opacity="0.55"/><rect x="1009.7" y="323.8" width="0.8" height="23.1" fill="#ff4060" opacity="0.80"/><rect x="1009.7" y="325.6" width="0.8" height="8.6" fill="#3a58f0" opacity="0.62"/><rect x="1009.7" y="320.3" width="0.8" height="12.4" fill="#ff4060" opacity="0.94"/><rect x="1010.7" y="313.1" width="1.1" height="12.0" fill="#e01838" opacity="0.90"/><rect x="1010.7" y="309.3" width="1.1" height="15.3" fill="#ffffff" opacity="0.70"/><rect x="1010.7" y="334.4" width="1.1" height="20.7" fill="#d02080" opacity="0.86"/><rect x="1010.7" y="325.0" width="1.1" height="13.5" fill="#2a70ff" opacity="0.69"/><rect x="1011.9" y="333.7" width="0.9" height="22.1" fill="#5a0a30" opacity="0.62"/><rect x="1011.9" y="328.5" width="0.9" height="11.9" fill="#ffffff" opacity="0.82"/><rect x="1011.9" y="318.5" width="0.9" height="16.9" fill="#ff2040" opacity="0.76"/><rect x="1011.9" y="323.1" width="0.9" height="18.7" fill="#4a60ff" opacity="0.90"/><rect x="1012.8" y="318.3" width="1.2" height="22.9" fill="#ff4060" opacity="0.78"/><rect x="1012.8" y="326.9" width="1.2" height="7.2" fill="#2a70ff" opacity="0.77"/><rect x="1012.8" y="328.4" width="1.2" height="15.8" fill="#ff2040" opacity="0.80"/><rect x="1012.8" y="319.6" width="1.2" height="16.5" fill="#5a0a30" opacity="0.87"/><rect x="1013.9" y="312.2" width="1.1" height="11.6" fill="#d02080" opacity="0.94"/><rect x="1013.9" y="304.1" width="1.1" height="6.3" fill="#ffffff" opacity="0.65"/><rect x="1013.9" y="295.6" width="1.1" height="13.6" fill="#4a60ff" opacity="0.78"/><rect x="1013.9" y="289.7" width="1.1" height="27.1" fill="#ff4060" opacity="0.57"/><rect x="1015.0" y="295.1" width="1.2" height="15.1" fill="#ff2040" opacity="0.68"/><rect x="1015.0" y="325.7" width="1.2" height="12.3" fill="#2a70ff" opacity="0.79"/><rect x="1015.0" y="297.6" width="1.2" height="21.3" fill="#ffffff" opacity="0.71"/><rect x="1015.0" y="310.6" width="1.2" height="13.5" fill="#2a70ff" opacity="0.72"/><rect x="1016.1" y="302.9" width="1.3" height="11.4" fill="#4a60ff" opacity="0.94"/><rect x="1016.1" y="324.1" width="1.3" height="26.8" fill="#3a58f0" opacity="0.55"/><rect x="1016.1" y="327.9" width="1.3" height="18.8" fill="#d02080" opacity="0.92"/><rect x="1016.1" y="307.4" width="1.3" height="12.3" fill="#2a70ff" opacity="0.88"/><rect x="1017.8" y="316.7" width="1.1" height="9.6" fill="#ff2040" opacity="0.82"/><rect x="1017.8" y="311.0" width="1.1" height="13.2" fill="#ff2040" opacity="0.85"/><rect x="1017.8" y="327.0" width="1.1" height="16.5" fill="#d02080" opacity="0.60"/><rect x="1017.8" y="289.8" width="1.1" height="22.5" fill="#ff2040" opacity="0.70"/><rect x="1018.7" y="310.2" width="0.8" height="23.0" fill="#ffffff" opacity="0.73"/><rect x="1018.7" y="308.9" width="0.8" height="25.2" fill="#e01838" opacity="0.69"/><rect x="1018.7" y="297.8" width="0.8" height="24.7" fill="#e01838" opacity="0.81"/><rect x="1018.7" y="313.7" width="0.8" height="13.7" fill="#ffffff" opacity="0.54"/><rect x="1019.5" y="309.2" width="1.1" height="20.8" fill="#ffffff" opacity="0.62"/><rect x="1019.5" y="310.7" width="1.1" height="12.6" fill="#ffffff" opacity="0.65"/><rect x="1019.5" y="326.3" width="1.1" height="27.1" fill="#ffffff" opacity="0.77"/><rect x="1019.5" y="292.8" width="1.1" height="19.3" fill="#4a60ff" opacity="0.92"/><rect x="1020.7" y="320.3" width="1.1" height="13.4" fill="#e01838" opacity="0.50"/><rect x="1020.7" y="299.7" width="1.1" height="25.1" fill="#ffffff" opacity="0.79"/><rect x="1020.7" y="290.5" width="1.1" height="13.1" fill="#d02080" opacity="0.67"/><rect x="1020.7" y="293.0" width="1.1" height="19.6" fill="#e01838" opacity="0.65"/><rect x="1021.8" y="311.5" width="1.0" height="10.5" fill="#5a0a30" opacity="0.68"/><rect x="1021.8" y="331.2" width="1.0" height="6.6" fill="#3a58f0" opacity="0.68"/><rect x="1021.8" y="310.8" width="1.0" height="27.4" fill="#2a70ff" opacity="0.73"/><rect x="1021.8" y="305.0" width="1.0" height="8.5" fill="#ff2040" opacity="0.67"/><rect x="1022.6" y="327.4" width="1.1" height="18.2" fill="#e01838" opacity="0.55"/><rect x="1022.6" y="331.1" width="1.1" height="17.8" fill="#4a60ff" opacity="0.78"/><rect x="1022.6" y="324.7" width="1.1" height="24.6" fill="#ffffff" opacity="0.71"/><rect x="1022.6" y="304.2" width="1.1" height="8.6" fill="#ffffff" opacity="0.82"/><rect x="1024.1" y="293.7" width="1.0" height="25.1" fill="#ff2040" opacity="0.84"/><rect x="1024.1" y="312.6" width="1.0" height="23.8" fill="#4a60ff" opacity="0.74"/><rect x="1024.1" y="315.7" width="1.0" height="17.0" fill="#ffffff" opacity="0.64"/><rect x="1024.1" y="315.1" width="1.0" height="18.2" fill="#ffffff" opacity="0.52"/><rect x="1025.4" y="305.9" width="1.3" height="10.5" fill="#ffffff" opacity="0.47"/><rect x="1025.4" y="316.6" width="1.3" height="19.4" fill="#4a60ff" opacity="0.91"/><rect x="1025.4" y="296.9" width="1.3" height="26.2" fill="#ff2040" opacity="0.57"/><rect x="1025.4" y="300.4" width="1.3" height="27.3" fill="#e01838" opacity="0.93"/><rect x="1027.0" y="323.2" width="1.5" height="21.3" fill="#ffffff" opacity="0.55"/><rect x="1027.0" y="320.1" width="1.5" height="11.9" fill="#4a60ff" opacity="0.74"/><rect x="1027.0" y="301.1" width="1.5" height="8.7" fill="#ff2040" opacity="0.84"/><rect x="1027.0" y="307.5" width="1.5" height="19.2" fill="#ff4060" opacity="0.91"/><rect x="1028.5" y="289.2" width="0.8" height="27.5" fill="#2a70ff" opacity="0.74"/><rect x="1028.5" y="291.8" width="0.8" height="14.4" fill="#ff2040" opacity="0.90"/><rect x="1028.5" y="291.6" width="0.8" height="22.8" fill="#3a58f0" opacity="0.53"/><rect x="1028.5" y="293.8" width="0.8" height="17.1" fill="#d02080" opacity="0.76"/><rect x="1029.3" y="290.5" width="0.9" height="13.9" fill="#ff2040" opacity="0.84"/><rect x="1029.3" y="324.0" width="0.9" height="14.4" fill="#3a58f0" opacity="0.66"/><rect x="1029.3" y="302.0" width="0.9" height="26.8" fill="#d02080" opacity="0.71"/><rect x="1029.3" y="318.2" width="0.9" height="27.9" fill="#ff2040" opacity="0.61"/><rect x="1030.3" y="291.3" width="1.5" height="19.9" fill="#ffffff" opacity="0.66"/><rect x="1030.3" y="295.6" width="1.5" height="27.9" fill="#5a0a30" opacity="0.71"/><rect x="1030.3" y="294.8" width="1.5" height="11.1" fill="#ff2040" opacity="0.84"/><rect x="1030.3" y="307.3" width="1.5" height="10.1" fill="#e01838" opacity="0.54"/><rect x="1032.3" y="323.7" width="1.4" height="23.7" fill="#ffffff" opacity="0.74"/><rect x="1032.3" y="297.2" width="1.4" height="26.1" fill="#ff4060" opacity="0.95"/><rect x="1032.3" y="319.7" width="1.4" height="18.1" fill="#4a60ff" opacity="0.66"/><rect x="1032.3" y="309.2" width="1.4" height="16.4" fill="#d02080" opacity="0.65"/><rect x="1034.2" y="307.2" width="0.8" height="16.3" fill="#ff2040" opacity="0.95"/><rect x="1034.2" y="304.6" width="0.8" height="23.2" fill="#3a58f0" opacity="0.85"/><rect x="1034.2" y="315.2" width="0.8" height="25.5" fill="#e01838" opacity="0.50"/><rect x="1034.2" y="298.3" width="0.8" height="10.4" fill="#4a60ff" opacity="0.72"/><rect x="1035.1" y="313.4" width="0.9" height="20.2" fill="#ffffff" opacity="0.84"/><rect x="1035.1" y="293.7" width="0.9" height="16.1" fill="#ff2040" opacity="0.59"/><rect x="1035.1" y="295.7" width="0.9" height="27.9" fill="#e01838" opacity="0.92"/><rect x="1035.1" y="315.3" width="0.9" height="19.4" fill="#e01838" opacity="0.50"/><rect x="1035.9" y="294.5" width="1.2" height="18.7" fill="#4a60ff" opacity="0.50"/><rect x="1035.9" y="296.4" width="1.2" height="13.8" fill="#5a0a30" opacity="0.93"/><rect x="1035.9" y="315.5" width="1.2" height="13.2" fill="#ff2040" opacity="0.83"/><rect x="1035.9" y="319.7" width="1.2" height="16.0" fill="#e01838" opacity="0.85"/><rect x="1037.1" y="318.7" width="1.4" height="24.0" fill="#ff2040" opacity="0.79"/><rect x="1037.1" y="294.4" width="1.4" height="11.9" fill="#4a60ff" opacity="0.87"/><rect x="1037.1" y="312.5" width="1.4" height="13.8" fill="#e01838" opacity="0.62"/><rect x="1037.1" y="296.3" width="1.4" height="15.1" fill="#3a58f0" opacity="0.74"/><rect x="1038.4" y="294.0" width="1.5" height="25.3" fill="#d02080" opacity="0.67"/><rect x="1038.4" y="317.4" width="1.5" height="8.1" fill="#4a60ff" opacity="0.52"/><rect x="1038.4" y="303.4" width="1.5" height="20.9" fill="#3a58f0" opacity="0.93"/><rect x="1038.4" y="313.2" width="1.5" height="19.8" fill="#3a58f0" opacity="0.66"/><rect x="1040.3" y="324.4" width="0.9" height="11.5" fill="#4a60ff" opacity="0.78"/><rect x="1040.3" y="299.4" width="0.9" height="17.0" fill="#ff2040" opacity="0.50"/><rect x="1040.3" y="309.3" width="0.9" height="20.2" fill="#5a0a30" opacity="0.75"/><rect x="1040.3" y="316.0" width="0.9" height="7.7" fill="#3a58f0" opacity="0.91"/><rect x="1041.4" y="297.5" width="1.4" height="14.8" fill="#2a70ff" opacity="0.80"/><rect x="1041.4" y="308.6" width="1.4" height="17.1" fill="#5a0a30" opacity="0.55"/><rect x="1041.4" y="302.3" width="1.4" height="13.4" fill="#2a70ff" opacity="0.79"/><rect x="1041.4" y="319.4" width="1.4" height="9.7" fill="#ffffff" opacity="0.60"/><rect x="1042.9" y="308.8" width="1.3" height="9.1" fill="#d02080" opacity="0.67"/><rect x="1042.9" y="295.4" width="1.3" height="10.2" fill="#ff4060" opacity="0.73"/><rect x="1042.9" y="305.2" width="1.3" height="16.0" fill="#ffffff" opacity="0.58"/><rect x="1042.9" y="303.3" width="1.3" height="21.7" fill="#ffffff" opacity="0.53"/><rect x="1044.7" y="306.3" width="1.3" height="10.5" fill="#4a60ff" opacity="0.62"/><rect x="1044.7" y="291.9" width="1.3" height="15.7" fill="#ffffff" opacity="0.79"/><rect x="1044.7" y="322.6" width="1.3" height="7.7" fill="#5a0a30" opacity="0.57"/><rect x="1044.7" y="308.9" width="1.3" height="11.7" fill="#3a58f0" opacity="0.83"/><rect x="1046.2" y="297.1" width="1.4" height="12.2" fill="#ffffff" opacity="0.71"/><rect x="1046.2" y="307.1" width="1.4" height="19.4" fill="#ffffff" opacity="0.65"/><rect x="1046.2" y="302.1" width="1.4" height="10.9" fill="#ff2040" opacity="0.87"/><rect x="1046.2" y="304.9" width="1.4" height="14.7" fill="#ff2040" opacity="0.61"/><rect x="1047.5" y="312.4" width="0.7" height="13.1" fill="#ff4060" opacity="0.83"/><rect x="1047.5" y="321.9" width="0.7" height="10.9" fill="#ffffff" opacity="0.63"/><rect x="1047.5" y="295.4" width="0.7" height="10.3" fill="#ff2040" opacity="0.73"/><rect x="1047.5" y="296.3" width="0.7" height="10.6" fill="#ff2040" opacity="0.82"/><rect x="1048.4" y="308.8" width="1.1" height="16.6" fill="#ff2040" opacity="0.62"/><rect x="1048.4" y="316.2" width="1.1" height="25.8" fill="#3a58f0" opacity="0.62"/><rect x="1048.4" y="318.3" width="1.1" height="24.6" fill="#ff2040" opacity="0.64"/><rect x="1048.4" y="313.8" width="1.1" height="20.7" fill="#e01838" opacity="0.92"/><rect x="1049.4" y="294.2" width="1.6" height="24.3" fill="#ff4060" opacity="0.64"/><rect x="1049.4" y="302.8" width="1.6" height="22.5" fill="#5a0a30" opacity="0.54"/><rect x="1049.4" y="297.5" width="1.6" height="18.8" fill="#2a70ff" opacity="0.94"/><rect x="1049.4" y="304.9" width="1.6" height="23.3" fill="#ff2040" opacity="0.58"/><rect x="1051.1" y="292.7" width="1.3" height="14.1" fill="#ff4060" opacity="0.83"/><rect x="1051.1" y="303.3" width="1.3" height="21.7" fill="#ff2040" opacity="0.91"/><rect x="1051.1" y="305.7" width="1.3" height="11.6" fill="#ff2040" opacity="0.88"/><rect x="1051.1" y="307.4" width="1.3" height="15.3" fill="#2a70ff" opacity="0.61"/><rect x="1052.7" y="300.7" width="0.7" height="9.5" fill="#3a58f0" opacity="0.68"/><rect x="1052.7" y="309.8" width="0.7" height="25.7" fill="#e01838" opacity="0.87"/><rect x="1052.7" y="308.1" width="0.7" height="15.5" fill="#5a0a30" opacity="0.66"/><rect x="1052.7" y="307.1" width="0.7" height="18.6" fill="#2a70ff" opacity="0.54"/><rect x="1053.4" y="298.3" width="1.3" height="19.7" fill="#d02080" opacity="0.71"/><rect x="1053.4" y="291.5" width="1.3" height="9.3" fill="#ff2040" opacity="0.85"/><rect x="1053.4" y="290.4" width="1.3" height="7.5" fill="#ff4060" opacity="0.53"/><rect x="1053.4" y="290.7" width="1.3" height="12.1" fill="#d02080" opacity="0.66"/><rect x="1054.8" y="295.9" width="0.8" height="13.0" fill="#ffffff" opacity="0.73"/><rect x="1054.8" y="309.9" width="0.8" height="15.8" fill="#ff2040" opacity="0.74"/><rect x="1054.8" y="319.1" width="0.8" height="21.3" fill="#4a60ff" opacity="0.95"/><rect x="1054.8" y="306.0" width="0.8" height="21.4" fill="#d02080" opacity="0.60"/><rect x="1055.7" y="304.0" width="1.3" height="24.3" fill="#ff2040" opacity="0.79"/><rect x="1055.7" y="297.8" width="1.3" height="23.3" fill="#4a60ff" opacity="0.77"/><rect x="1055.7" y="318.3" width="1.3" height="11.3" fill="#ffffff" opacity="0.65"/><rect x="1055.7" y="312.5" width="1.3" height="18.7" fill="#3a58f0" opacity="0.81"/><rect x="1057.2" y="301.9" width="1.5" height="25.8" fill="#4a60ff" opacity="0.78"/><rect x="1057.2" y="291.3" width="1.5" height="26.9" fill="#2a70ff" opacity="0.56"/><rect x="1057.2" y="297.2" width="1.5" height="13.6" fill="#ffffff" opacity="0.82"/><rect x="1057.2" y="304.4" width="1.5" height="24.7" fill="#ff2040" opacity="0.65"/><rect x="1058.8" y="314.9" width="1.1" height="6.4" fill="#4a60ff" opacity="0.53"/><rect x="1058.8" y="315.9" width="1.1" height="22.6" fill="#ffffff" opacity="0.51"/><rect x="1058.8" y="304.2" width="1.1" height="11.6" fill="#2a70ff" opacity="0.92"/><rect x="1058.8" y="295.2" width="1.1" height="27.5" fill="#3a58f0" opacity="0.78"/><rect x="1060.3" y="299.2" width="1.6" height="13.0" fill="#ff4060" opacity="0.69"/><rect x="1060.3" y="301.2" width="1.6" height="26.5" fill="#2a70ff" opacity="0.56"/><rect x="1060.3" y="314.5" width="1.6" height="16.1" fill="#ff4060" opacity="0.54"/><rect x="1060.3" y="290.8" width="1.6" height="21.3" fill="#ff4060" opacity="0.70"/><rect x="1062.1" y="316.4" width="0.9" height="6.7" fill="#ff2040" opacity="0.83"/><rect x="1062.1" y="290.2" width="0.9" height="26.9" fill="#ffffff" opacity="0.59"/><rect x="1062.1" y="314.6" width="0.9" height="16.4" fill="#ff2040" opacity="0.89"/><rect x="1062.1" y="291.0" width="0.9" height="16.0" fill="#4a60ff" opacity="0.62"/><rect x="1063.1" y="314.4" width="1.4" height="8.2" fill="#e01838" opacity="0.72"/><rect x="1063.1" y="294.6" width="1.4" height="27.4" fill="#e01838" opacity="0.91"/><rect x="1063.1" y="289.5" width="1.4" height="23.6" fill="#d02080" opacity="0.61"/><rect x="1063.1" y="297.2" width="1.4" height="27.3" fill="#5a0a30" opacity="0.89"/><rect x="1064.6" y="295.3" width="0.9" height="22.9" fill="#ffffff" opacity="0.55"/><rect x="1064.6" y="309.0" width="0.9" height="12.3" fill="#5a0a30" opacity="0.51"/><rect x="1064.6" y="307.4" width="0.9" height="11.2" fill="#ffffff" opacity="0.64"/><rect x="1064.6" y="291.9" width="0.9" height="18.3" fill="#ff2040" opacity="0.88"/><rect x="1041.6" y="315.2" width="1.8" height="20.7" fill="url(#gw)" opacity="0.88"/><rect x="1008.2" y="298.7" width="2.0" height="23.9" fill="url(#gw)" opacity="0.96"/><rect x="1043.2" y="304.4" width="1.9" height="14.3" fill="url(#gw)" opacity="0.81"/><rect x="1041.6" y="301.7" width="2.1" height="12.6" fill="url(#gw)" opacity="0.79"/><rect x="1035.7" y="305.0" width="1.2" height="21.5" fill="url(#gw)" opacity="0.75"/><rect x="993.4" y="314.3" width="1.3" height="13.9" fill="url(#gw)" opacity="0.86"/><rect x="1022.2" y="304.3" width="1.6" height="23.2" fill="url(#gw)" opacity="0.77"/><rect x="1014.1" y="301.8" width="1.0" height="25.2" fill="url(#gw)" opacity="0.81"/><rect x="1053.3" y="308.8" width="1.1" height="21.0" fill="url(#gw)" opacity="0.90"/><rect x="988.7" y="313.2" width="1.3" height="25.0" fill="url(#gw)" opacity="0.78"/><rect x="1017.5" y="319.6" width="1.9" height="23.6" fill="url(#gw)" opacity="0.87"/><rect x="1006.5" y="299.0" width="1.4" height="11.4" fill="url(#gw)" opacity="0.74"/><rect x="1055.0" y="299.0" width="1.9" height="21.0" fill="url(#gw)" opacity="0.96"/><rect x="995.1" y="317.0" width="1.1" height="15.7" fill="url(#gw)" opacity="0.93"/><rect x="1042.0" y="296.1" width="1.2" height="16.5" fill="url(#gw)" opacity="0.96"/><rect x="1024.8" y="316.9" width="1.6" height="19.4" fill="url(#gw)" opacity="0.71"/><polyline points="973.0,291.1 973.7,289.0 974.4,290.6 975.1,298.0 975.8,311.6 976.5,330.1 977.2,350.9 977.9,370.9 978.6,386.9 979.3,396.5 980.0,398.0 980.7,391.1 981.4,377.1 982.1,358.1 982.8,337.2 983.5,317.6 984.2,302.1 984.9,292.5 985.6,289.1 986.3,289.9 987.0,295.1 987.7,305.1 988.4,318.9 989.1,334.7 989.8,350.1 990.5,362.8 991.2,370.6 991.9,372.3 992.6,367.7 993.3,357.4 994.0,343.2 994.7,327.3 995.4,312.1 996.1,299.9 996.8,292.1 997.5,289.1 998.2,289.4 998.9,292.3 999.6,298.0 1000.3,306.1 1001.0,315.6 1001.7,324.9 1002.4,332.7 1003.1,337.8 1003.8,339.2 1004.5,336.7 1005.2,330.8 1005.9,322.4 1006.6,312.9 1007.3,303.7 1008.0,296.1 1008.7,291.2 1009.4,289.1 1010.1,289.6 1010.8,295.0 1011.5,306.3 1012.2,322.8 1012.9,342.3 1013.6,361.8 1014.3,378.4 1015.0,389.4 1015.7,393.1 1016.4,388.7 1017.1,377.1 1017.8,360.1 1018.5,340.4 1019.2,321.1 1019.9,305.1 1020.6,294.2 1021.3,289.4 1022.0,289.2 1022.7,291.4 1023.4,296.4 1024.1,303.9 1024.8,312.8 1025.5,322.0 1026.2,329.9 1026.9,335.3 1027.6,337.3 1028.3,335.6 1029.0,330.5 1029.7,322.8 1030.4,313.7 1031.1,304.7 1031.8,297.1 1032.5,291.8 1033.2,289.3 1033.9,289.2 1034.6,292.0 1035.3,298.8 1036.0,309.2 1036.7,321.8 1037.4,334.9 1038.1,346.4 1038.8,354.5 1039.5,357.9 1040.2,356.0 1040.9,349.1 1041.6,338.4 1042.3,325.6 1043.0,312.6 1043.7,301.4 1044.4,293.5 1045.1,289.6 1045.8,289.1 1046.5,292.1 1047.2,299.9 1047.9,312.1 1048.6,327.2 1049.3,343.1 1050.0,357.3 1050.7,367.6 1051.4,372.3 1052.1,370.6 1052.8,362.8 1053.5,350.2 1054.2,334.7 1054.9,318.9 1055.6,305.1 1056.3,295.1 1057.0,290.0 1057.7,289.0 1058.4,291.4 1059.1,298.0 1059.8,308.7 1060.5,322.2 1061.2,336.5 1061.9,349.6 1062.6,359.3 1063.3,364.0 1064.0,363.0 1064.7,356.4" transform="translate(1,0.3)" fill="none" stroke="#3a80f0" stroke-width="0.85" opacity="0.85"/><polyline points="973.0,291.1 973.7,289.0 974.4,290.6 975.1,298.0 975.8,311.6 976.5,330.1 977.2,350.9 977.9,370.9 978.6,386.9 979.3,396.5 980.0,398.0 980.7,391.1 981.4,377.1 982.1,358.1 982.8,337.2 983.5,317.6 984.2,302.1 984.9,292.5 985.6,289.1 986.3,289.9 987.0,295.1 987.7,305.1 988.4,318.9 989.1,334.7 989.8,350.1 990.5,362.8 991.2,370.6 991.9,372.3 992.6,367.7 993.3,357.4 994.0,343.2 994.7,327.3 995.4,312.1 996.1,299.9 996.8,292.1 997.5,289.1 998.2,289.4 998.9,292.3 999.6,298.0 1000.3,306.1 1001.0,315.6 1001.7,324.9 1002.4,332.7 1003.1,337.8 1003.8,339.2 1004.5,336.7 1005.2,330.8 1005.9,322.4 1006.6,312.9 1007.3,303.7 1008.0,296.1 1008.7,291.2 1009.4,289.1 1010.1,289.6 1010.8,295.0 1011.5,306.3 1012.2,322.8 1012.9,342.3 1013.6,361.8 1014.3,378.4 1015.0,389.4 1015.7,393.1 1016.4,388.7 1017.1,377.1 1017.8,360.1 1018.5,340.4 1019.2,321.1 1019.9,305.1 1020.6,294.2 1021.3,289.4 1022.0,289.2 1022.7,291.4 1023.4,296.4 1024.1,303.9 1024.8,312.8 1025.5,322.0 1026.2,329.9 1026.9,335.3 1027.6,337.3 1028.3,335.6 1029.0,330.5 1029.7,322.8 1030.4,313.7 1031.1,304.7 1031.8,297.1 1032.5,291.8 1033.2,289.3 1033.9,289.2 1034.6,292.0 1035.3,298.8 1036.0,309.2 1036.7,321.8 1037.4,334.9 1038.1,346.4 1038.8,354.5 1039.5,357.9 1040.2,356.0 1040.9,349.1 1041.6,338.4 1042.3,325.6 1043.0,312.6 1043.7,301.4 1044.4,293.5 1045.1,289.6 1045.8,289.1 1046.5,292.1 1047.2,299.9 1047.9,312.1 1048.6,327.2 1049.3,343.1 1050.0,357.3 1050.7,367.6 1051.4,372.3 1052.1,370.6 1052.8,362.8 1053.5,350.2 1054.2,334.7 1054.9,318.9 1055.6,305.1 1056.3,295.1 1057.0,290.0 1057.7,289.0 1058.4,291.4 1059.1,298.0 1059.8,308.7 1060.5,322.2 1061.2,336.5 1061.9,349.6 1062.6,359.3 1063.3,364.0 1064.0,363.0 1064.7,356.4" fill="none" stroke="#ff3040" stroke-width="0.85" opacity="0.9"/><polyline points="973.0,354.9 973.7,376.6 974.4,392.8 975.1,400.3 975.8,397.7 976.5,385.5 977.2,366.0 977.9,342.9 978.6,320.6 979.3,302.8 980.0,292.2 980.7,289.0 981.4,290.6 982.1,297.3 982.8,309.1 983.5,324.4 984.2,340.5 984.9,354.6 985.6,363.9 986.3,366.7 987.0,362.4 987.7,351.9 988.4,337.1 989.1,320.9 989.8,306.2 990.5,295.4 991.2,289.9 991.9,289.1 992.6,293.5 993.3,305.0 994.0,322.7 994.7,344.0 995.4,365.1 996.1,382.0 996.8,391.6 997.5,392.0 998.2,383.1 998.9,366.6 999.6,345.7 1000.3,324.3 1001.0,306.1 1001.7,294.1 1002.4,289.2 1003.1,289.6 1003.8,293.7 1004.5,302.1 1005.2,313.8 1005.9,326.9 1006.6,339.1 1007.3,347.9 1008.0,351.8 1008.7,350.0 1009.4,342.8 1010.1,331.7 1010.8,318.6 1011.5,306.1 1012.2,296.3 1012.9,290.6 1013.6,289.0 1014.3,291.3 1015.0,300.0 1015.7,315.0 1016.4,334.1 1017.1,354.1 1017.8,371.3 1018.5,382.5 1019.2,385.4 1019.9,379.6 1020.6,366.1 1021.3,347.5 1022.0,327.4 1022.7,309.4 1023.4,296.3 1024.1,289.9 1024.8,289.2 1025.5,294.2 1026.2,306.6 1026.9,325.4 1027.6,347.6 1028.3,369.4 1029.0,386.7 1029.7,396.1 1030.4,395.9 1031.1,386.1 1031.8,368.6 1032.5,346.7 1033.2,324.5 1033.9,305.9 1034.6,293.8 1035.3,289.2 1036.0,290.1 1036.7,297.3 1037.4,311.4 1038.1,330.8 1038.8,352.3 1039.5,371.9 1040.2,385.9 1040.9,391.8 1041.6,388.2 1042.3,376.0 1043.0,357.5 1043.7,336.1 1044.4,315.9 1045.1,300.2 1045.8,291.2 1046.5,289.0 1047.2,290.6 1047.9,296.2 1048.6,305.7 1049.3,317.5 1050.0,329.8 1050.7,340.2 1051.4,346.8 1052.1,348.3 1052.8,344.4 1053.5,335.8 1054.2,324.3 1054.9,311.9 1055.6,301.0 1056.3,293.2 1057.0,289.4 1057.7,289.2 1058.4,291.7 1059.1,297.8 1059.8,306.8 1060.5,317.3 1061.2,327.6 1061.9,335.5 1062.6,339.7 1063.3,339.4 1064.0,334.5 1064.7,326.0" transform="translate(1,0.3)" fill="none" stroke="#3a80f0" stroke-width="0.85" opacity="0.85"/><polyline points="973.0,354.9 973.7,376.6 974.4,392.8 975.1,400.3 975.8,397.7 976.5,385.5 977.2,366.0 977.9,342.9 978.6,320.6 979.3,302.8 980.0,292.2 980.7,289.0 981.4,290.6 982.1,297.3 982.8,309.1 983.5,324.4 984.2,340.5 984.9,354.6 985.6,363.9 986.3,366.7 987.0,362.4 987.7,351.9 988.4,337.1 989.1,320.9 989.8,306.2 990.5,295.4 991.2,289.9 991.9,289.1 992.6,293.5 993.3,305.0 994.0,322.7 994.7,344.0 995.4,365.1 996.1,382.0 996.8,391.6 997.5,392.0 998.2,383.1 998.9,366.6 999.6,345.7 1000.3,324.3 1001.0,306.1 1001.7,294.1 1002.4,289.2 1003.1,289.6 1003.8,293.7 1004.5,302.1 1005.2,313.8 1005.9,326.9 1006.6,339.1 1007.3,347.9 1008.0,351.8 1008.7,350.0 1009.4,342.8 1010.1,331.7 1010.8,318.6 1011.5,306.1 1012.2,296.3 1012.9,290.6 1013.6,289.0 1014.3,291.3 1015.0,300.0 1015.7,315.0 1016.4,334.1 1017.1,354.1 1017.8,371.3 1018.5,382.5 1019.2,385.4 1019.9,379.6 1020.6,366.1 1021.3,347.5 1022.0,327.4 1022.7,309.4 1023.4,296.3 1024.1,289.9 1024.8,289.2 1025.5,294.2 1026.2,306.6 1026.9,325.4 1027.6,347.6 1028.3,369.4 1029.0,386.7 1029.7,396.1 1030.4,395.9 1031.1,386.1 1031.8,368.6 1032.5,346.7 1033.2,324.5 1033.9,305.9 1034.6,293.8 1035.3,289.2 1036.0,290.1 1036.7,297.3 1037.4,311.4 1038.1,330.8 1038.8,352.3 1039.5,371.9 1040.2,385.9 1040.9,391.8 1041.6,388.2 1042.3,376.0 1043.0,357.5 1043.7,336.1 1044.4,315.9 1045.1,300.2 1045.8,291.2 1046.5,289.0 1047.2,290.6 1047.9,296.2 1048.6,305.7 1049.3,317.5 1050.0,329.8 1050.7,340.2 1051.4,346.8 1052.1,348.3 1052.8,344.4 1053.5,335.8 1054.2,324.3 1054.9,311.9 1055.6,301.0 1056.3,293.2 1057.0,289.4 1057.7,289.2 1058.4,291.7 1059.1,297.8 1059.8,306.8 1060.5,317.3 1061.2,327.6 1061.9,335.5 1062.6,339.7 1063.3,339.4 1064.0,334.5 1064.7,326.0" fill="none" stroke="#ff3040" stroke-width="0.85" opacity="0.9"/><polyline points="973.0,518.2 973.7,514.7 974.4,507.0 975.1,495.8 975.8,482.8 976.5,470.2 977.2,460.4 977.9,455.1 978.6,455.4 979.3,461.1 980.0,471.3 980.7,484.0 981.4,496.9 982.1,507.9 982.8,515.2 983.5,518.3 984.2,518.1 984.9,514.9 985.6,508.2 986.3,498.7 987.0,487.9 987.7,477.6 988.4,469.7 989.1,465.7 989.8,466.3 990.5,471.5 991.2,480.1 991.9,490.8 992.6,501.4 993.3,510.3 994.0,516.1 994.7,518.4 995.4,517.8 996.1,513.4 996.8,504.4 997.5,491.9 998.2,477.9 998.9,464.8 999.6,455.0 1000.3,450.3 1001.0,451.7 1001.7,458.7 1002.4,470.2 1003.1,484.0 1003.8,497.6 1004.5,508.8 1005.2,515.9 1005.9,518.4 1006.6,518.0 1007.3,515.2 1008.0,509.9 1008.7,502.7 1009.4,494.7 1010.1,487.4 1010.8,482.0 1011.5,479.6 1012.2,480.7 1012.9,485.0 1013.6,491.7 1014.3,499.6 1015.0,507.2 1015.7,513.4 1016.4,517.2 1017.1,518.5 1017.8,517.7 1018.5,513.7 1019.2,506.5 1019.9,496.9 1020.6,486.5 1021.3,477.0 1022.0,470.3 1022.7,467.6 1023.4,469.3 1024.1,475.2 1024.8,484.2 1025.5,494.6 1026.2,504.6 1026.9,512.4 1027.6,517.1 1028.3,518.5 1029.0,517.6 1029.7,513.8 1030.4,507.1 1031.1,498.3 1031.8,489.0 1032.5,480.7 1033.2,474.9 1033.9,472.8 1034.6,474.7 1035.3,480.3 1036.0,488.5 1036.7,497.9 1037.4,506.7 1038.1,513.5 1038.8,517.5 1039.5,518.5 1040.2,517.5 1040.9,513.7 1041.6,507.2 1042.3,499.0 1043.0,490.3 1043.7,482.7 1044.4,477.6 1045.1,475.9 1045.8,478.0 1046.5,483.5 1047.2,491.3 1047.9,500.0 1048.6,508.1 1049.3,514.3 1050.0,517.7 1050.7,518.5 1051.4,516.9 1052.1,511.7 1052.8,503.1 1053.5,492.3 1054.2,481.1 1054.9,471.5 1055.6,465.3 1056.3,463.5 1057.0,466.7 1057.7,474.0 1058.4,484.3 1059.1,495.6 1059.8,505.9 1060.5,513.6 1061.2,517.7 1061.9,518.5 1062.6,517.0 1063.3,512.7 1064.0,505.8 1064.7,497.3" transform="translate(1,0.3)" fill="none" stroke="#40a0f0" stroke-width="0.9" opacity="0.95"/><polyline points="973.0,518.2 973.7,514.7 974.4,507.0 975.1,495.8 975.8,482.8 976.5,470.2 977.2,460.4 977.9,455.1 978.6,455.4 979.3,461.1 980.0,471.3 980.7,484.0 981.4,496.9 982.1,507.9 982.8,515.2 983.5,518.3 984.2,518.1 984.9,514.9 985.6,508.2 986.3,498.7 987.0,487.9 987.7,477.6 988.4,469.7 989.1,465.7 989.8,466.3 990.5,471.5 991.2,480.1 991.9,490.8 992.6,501.4 993.3,510.3 994.0,516.1 994.7,518.4 995.4,517.8 996.1,513.4 996.8,504.4 997.5,491.9 998.2,477.9 998.9,464.8 999.6,455.0 1000.3,450.3 1001.0,451.7 1001.7,458.7 1002.4,470.2 1003.1,484.0 1003.8,497.6 1004.5,508.8 1005.2,515.9 1005.9,518.4 1006.6,518.0 1007.3,515.2 1008.0,509.9 1008.7,502.7 1009.4,494.7 1010.1,487.4 1010.8,482.0 1011.5,479.6 1012.2,480.7 1012.9,485.0 1013.6,491.7 1014.3,499.6 1015.0,507.2 1015.7,513.4 1016.4,517.2 1017.1,518.5 1017.8,517.7 1018.5,513.7 1019.2,506.5 1019.9,496.9 1020.6,486.5 1021.3,477.0 1022.0,470.3 1022.7,467.6 1023.4,469.3 1024.1,475.2 1024.8,484.2 1025.5,494.6 1026.2,504.6 1026.9,512.4 1027.6,517.1 1028.3,518.5 1029.0,517.6 1029.7,513.8 1030.4,507.1 1031.1,498.3 1031.8,489.0 1032.5,480.7 1033.2,474.9 1033.9,472.8 1034.6,474.7 1035.3,480.3 1036.0,488.5 1036.7,497.9 1037.4,506.7 1038.1,513.5 1038.8,517.5 1039.5,518.5 1040.2,517.5 1040.9,513.7 1041.6,507.2 1042.3,499.0 1043.0,490.3 1043.7,482.7 1044.4,477.6 1045.1,475.9 1045.8,478.0 1046.5,483.5 1047.2,491.3 1047.9,500.0 1048.6,508.1 1049.3,514.3 1050.0,517.7 1050.7,518.5 1051.4,516.9 1052.1,511.7 1052.8,503.1 1053.5,492.3 1054.2,481.1 1054.9,471.5 1055.6,465.3 1056.3,463.5 1057.0,466.7 1057.7,474.0 1058.4,484.3 1059.1,495.6 1059.8,505.9 1060.5,513.6 1061.2,517.7 1061.9,518.5 1062.6,517.0 1063.3,512.7 1064.0,505.8 1064.7,497.3" fill="none" stroke="#ff3040" stroke-width="0.9" opacity="1"/><polyline points="973.0,508.3 973.7,512.0 974.4,518.1 975.1,525.7 975.8,533.3 976.5,539.7 977.2,544.0 977.9,545.9 978.6,545.9 979.3,544.7 980.0,542.1 980.7,538.5 981.4,534.2 982.1,530.1 982.8,526.8 983.5,525.0 984.2,524.9 984.9,526.6 985.6,529.8 986.3,533.9 987.0,538.1 987.7,541.9 988.4,544.5 989.1,545.8 989.8,545.9 990.5,543.9 991.2,539.1 991.9,531.6 992.6,522.7 993.3,513.7 994.0,506.2 994.7,501.6 995.4,500.7 996.1,503.6 996.8,509.9 997.5,518.3 998.2,527.4 998.9,535.8 999.6,542.0 1000.3,545.3 1001.0,546.0 1001.7,544.8 1002.4,541.0 1003.1,535.0 1003.8,527.4 1004.5,519.6 1005.2,512.7 1005.9,508.2 1006.6,506.7 1007.3,508.6 1008.0,513.5 1008.7,520.5 1009.4,528.4 1010.1,535.8 1010.8,541.6 1011.5,545.0 1012.2,546.0 1012.9,545.2 1013.6,542.1 1014.3,536.6 1015.0,529.4 1015.7,521.7 1016.4,514.8 1017.1,509.8 1017.8,507.8 1018.5,509.0 1019.2,513.2 1019.9,519.7 1020.6,527.3 1021.3,534.8 1022.0,540.8 1022.7,544.6 1023.4,546.0 1024.1,545.5 1024.8,543.0 1025.5,538.2 1026.2,531.5 1026.9,524.1 1027.6,517.2 1028.3,512.0 1029.0,509.4 1029.7,509.9 1030.4,513.5 1031.1,519.4 1031.8,526.6 1032.5,533.8 1033.2,540.0 1033.9,544.1 1034.6,545.9 1035.3,545.7 1036.0,542.9 1036.7,537.0 1037.4,528.5 1038.1,518.6 1038.8,509.0 1039.5,501.4 1040.2,497.2 1040.9,497.0 1041.6,501.0 1042.3,508.4 1043.0,517.9 1043.7,527.8 1044.4,536.5 1045.1,542.6 1045.8,545.6 1046.5,545.9 1047.2,544.6 1047.9,541.4 1048.6,536.4 1049.3,530.4 1050.0,524.5 1050.7,519.5 1051.4,516.4 1052.1,515.8 1052.8,517.8 1053.5,521.9 1054.2,527.6 1054.9,533.7 1055.6,539.2 1056.3,543.3 1057.0,545.5 1057.7,546.0 1058.4,545.1 1059.1,542.3 1059.8,537.8 1060.5,532.2 1061.2,526.4 1061.9,521.4 1062.6,518.0 1063.3,517.0 1064.0,518.4 1064.7,522.0" transform="translate(1,0.3)" fill="none" stroke="#40a0f0" stroke-width="0.9" opacity="0.95"/><polyline points="973.0,508.3 973.7,512.0 974.4,518.1 975.1,525.7 975.8,533.3 976.5,539.7 977.2,544.0 977.9,545.9 978.6,545.9 979.3,544.7 980.0,542.1 980.7,538.5 981.4,534.2 982.1,530.1 982.8,526.8 983.5,525.0 984.2,524.9 984.9,526.6 985.6,529.8 986.3,533.9 987.0,538.1 987.7,541.9 988.4,544.5 989.1,545.8 989.8,545.9 990.5,543.9 991.2,539.1 991.9,531.6 992.6,522.7 993.3,513.7 994.0,506.2 994.7,501.6 995.4,500.7 996.1,503.6 996.8,509.9 997.5,518.3 998.2,527.4 998.9,535.8 999.6,542.0 1000.3,545.3 1001.0,546.0 1001.7,544.8 1002.4,541.0 1003.1,535.0 1003.8,527.4 1004.5,519.6 1005.2,512.7 1005.9,508.2 1006.6,506.7 1007.3,508.6 1008.0,513.5 1008.7,520.5 1009.4,528.4 1010.1,535.8 1010.8,541.6 1011.5,545.0 1012.2,546.0 1012.9,545.2 1013.6,542.1 1014.3,536.6 1015.0,529.4 1015.7,521.7 1016.4,514.8 1017.1,509.8 1017.8,507.8 1018.5,509.0 1019.2,513.2 1019.9,519.7 1020.6,527.3 1021.3,534.8 1022.0,540.8 1022.7,544.6 1023.4,546.0 1024.1,545.5 1024.8,543.0 1025.5,538.2 1026.2,531.5 1026.9,524.1 1027.6,517.2 1028.3,512.0 1029.0,509.4 1029.7,509.9 1030.4,513.5 1031.1,519.4 1031.8,526.6 1032.5,533.8 1033.2,540.0 1033.9,544.1 1034.6,545.9 1035.3,545.7 1036.0,542.9 1036.7,537.0 1037.4,528.5 1038.1,518.6 1038.8,509.0 1039.5,501.4 1040.2,497.2 1040.9,497.0 1041.6,501.0 1042.3,508.4 1043.0,517.9 1043.7,527.8 1044.4,536.5 1045.1,542.6 1045.8,545.6 1046.5,545.9 1047.2,544.6 1047.9,541.4 1048.6,536.4 1049.3,530.4 1050.0,524.5 1050.7,519.5 1051.4,516.4 1052.1,515.8 1052.8,517.8 1053.5,521.9 1054.2,527.6 1054.9,533.7 1055.6,539.2 1056.3,543.3 1057.0,545.5 1057.7,546.0 1058.4,545.1 1059.1,542.3 1059.8,537.8 1060.5,532.2 1061.2,526.4 1061.9,521.4 1062.6,518.0 1063.3,517.0 1064.0,518.4 1064.7,522.0" fill="none" stroke="#ff3040" stroke-width="0.9" opacity="1"/></g><path d="M 433.5 318.3 A 29 29 0 0 1 478.7 294.3 L 604.8 379.5 A 40 40 0 0 1 604.8 445.7 L 478.7 530.9 A 29 29 0 0 1 433.5 506.9 Z" fill="none" stroke="#5a86e0" stroke-width="1"/><path d="M 872.6 334.7 A 45.19999999999999 45.19999999999999 0 0 1 963 334.7 L 963 497.8 A 45.19999999999999 45.19999999999999 0 0 1 872.6 497.8 Z" fill="none" stroke="#5a86e0" stroke-width="1"/><path d="M 973.8 334.70000000000005 A 45.200000000000045 45.200000000000045 0 0 1 1064.2 334.70000000000005 L 1064.2 497.79999999999995 A 45.200000000000045 45.200000000000045 0 0 1 973.8 497.79999999999995 Z" fill="none" stroke="#5a86e0" stroke-width="1"/><line x1="745.20" y1="122.8" x2="745.20" y2="710.5" stroke="#b0b0b0" stroke-width="1"/><line x1="321.10049999999995" y1="146.00" x2="721.9995" y2="146.00" stroke="#f4b0fa" stroke-width="1.1"/><line x1="321.10049999999995" y1="687.30" x2="721.9995" y2="687.30" stroke="#f4b0fa" stroke-width="1.1"/><line x1="321.10" y1="146.0005" x2="321.10" y2="687.2995" stroke="#d8b0fb" stroke-width="1.1"/><line x1="722.00" y1="146.0005" x2="722.00" y2="687.2995" stroke="#d8b0fb" stroke-width="1.1"/><line x1="375.03" y1="146.0005" x2="375.03" y2="687.2995" stroke="#c690fa" stroke-width="1"/><line x1="390.49" y1="146.0005" x2="390.49" y2="687.2995" stroke="#c690fa" stroke-width="1"/><line x1="444.42" y1="146.0005" x2="444.42" y2="687.2995" stroke="#c690fa" stroke-width="1"/><line x1="459.89" y1="146.0005" x2="459.89" y2="687.2995" stroke="#c690fa" stroke-width="1"/><line x1="513.82" y1="146.0005" x2="513.82" y2="687.2995" stroke="#c690fa" stroke-width="1"/><line x1="529.28" y1="146.0005" x2="529.28" y2="687.2995" stroke="#c690fa" stroke-width="1"/><line x1="583.21" y1="146.0005" x2="583.21" y2="687.2995" stroke="#c690fa" stroke-width="1"/><line x1="598.68" y1="146.0005" x2="598.68" y2="687.2995" stroke="#c690fa" stroke-width="1"/><line x1="652.61" y1="146.0005" x2="652.61" y2="687.2995" stroke="#c690fa" stroke-width="1"/><line x1="668.07" y1="146.0005" x2="668.07" y2="687.2995" stroke="#c690fa" stroke-width="1"/><line x1="768.4005000000001" y1="146.00" x2="1169.2995" y2="146.00" stroke="#f4b0fa" stroke-width="1.1"/><line x1="768.4005000000001" y1="687.30" x2="1169.2995" y2="687.30" stroke="#f4b0fa" stroke-width="1.1"/><line x1="768.40" y1="146.0005" x2="768.40" y2="687.2995" stroke="#d8b0fb" stroke-width="1.1"/><line x1="1169.30" y1="146.0005" x2="1169.30" y2="687.2995" stroke="#d8b0fb" stroke-width="1.1"/><line x1="822.33" y1="146.0005" x2="822.33" y2="687.2995" stroke="#c690fa" stroke-width="1"/><line x1="837.79" y1="146.0005" x2="837.79" y2="687.2995" stroke="#c690fa" stroke-width="1"/><line x1="891.72" y1="146.0005" x2="891.72" y2="687.2995" stroke="#c690fa" stroke-width="1"/><line x1="907.19" y1="146.0005" x2="907.19" y2="687.2995" stroke="#c690fa" stroke-width="1"/><line x1="961.12" y1="146.0005" x2="961.12" y2="687.2995" stroke="#c690fa" stroke-width="1"/><line x1="976.58" y1="146.0005" x2="976.58" y2="687.2995" stroke="#c690fa" stroke-width="1"/><line x1="1030.51" y1="146.0005" x2="1030.51" y2="687.2995" stroke="#c690fa" stroke-width="1"/><line x1="1045.98" y1="146.0005" x2="1045.98" y2="687.2995" stroke="#c690fa" stroke-width="1"/><line x1="1099.91" y1="146.0005" x2="1099.91" y2="687.2995" stroke="#c690fa" stroke-width="1"/><line x1="1115.37" y1="146.0005" x2="1115.37" y2="687.2995" stroke="#c690fa" stroke-width="1"/><g transform="translate(448.2,289.2)" fill="none" stroke="#2a7af0" stroke-width="1.7" stroke-linecap="round"><path d="M-1.2 -2.6 L-3.8 -2.6 A2.6 2.6 0 0 0 -3.8 2.6 L-1.8 2.6"/><path d="M1.2 2.6 L3.8 2.6 A2.6 2.6 0 0 0 3.8 -2.6 L1.8 -2.6"/><path d="M-3 0 Q0 -2.6 3 0" /><path d="M-3 0.6 Q0 2.8 3 0.2" stroke-width="1.2"/></g><g transform="translate(887,289.5)" fill="none" stroke="#2a7af0" stroke-width="1.7" stroke-linecap="round"><path d="M-1.2 -2.6 L-3.8 -2.6 A2.6 2.6 0 0 0 -3.8 2.6 L-1.8 2.6"/><path d="M1.2 2.6 L3.8 2.6 A2.6 2.6 0 0 0 3.8 -2.6 L1.8 -2.6"/><path d="M-3 0 Q0 -2.6 3 0" /><path d="M-3 0.6 Q0 2.8 3 0.2" stroke-width="1.2"/></g><g transform="translate(988.5,289.5)" fill="none" stroke="#2a7af0" stroke-width="1.7" stroke-linecap="round"><path d="M-1.2 -2.6 L-3.8 -2.6 A2.6 2.6 0 0 0 -3.8 2.6 L-1.8 2.6"/><path d="M1.2 2.6 L3.8 2.6 A2.6 2.6 0 0 0 3.8 -2.6 L1.8 -2.6"/><path d="M-3 0 Q0 -2.6 3 0" /><path d="M-3 0.6 Q0 2.8 3 0.2" stroke-width="1.2"/></g></svg><svg class="a" style="left:0;top:0;will-change:transform" width="1440" height="775" viewBox="0 0 1440 775"></svg>
<svg class="a" style="left:254px;top:104.5px;will-change:transform" width="974" height="12" font-family="Liberation Sans"><line x1="0.59" y1="10" x2="0.59" y2="12" stroke="#7a7a7a" stroke-width="0.7"/><line x1="3.69" y1="10" x2="3.69" y2="12" stroke="#7a7a7a" stroke-width="0.7"/><line x1="6.78" y1="10" x2="6.78" y2="12" stroke="#7a7a7a" stroke-width="0.7"/><line x1="9.87" y1="10" x2="9.87" y2="12" stroke="#7a7a7a" stroke-width="0.7"/><line x1="12.97" y1="0" x2="12.97" y2="12" stroke="#6a6a6a" stroke-width="0.8"/><text x="14.77" y="8.2" font-size="7.6" fill="#e0e0e0" stroke="#e0e0e0" stroke-width="0.2">20</text><line x1="16.06" y1="10" x2="16.06" y2="12" stroke="#7a7a7a" stroke-width="0.7"/><line x1="19.15" y1="10" x2="19.15" y2="12" stroke="#7a7a7a" stroke-width="0.7"/><line x1="22.25" y1="10" x2="22.25" y2="12" stroke="#7a7a7a" stroke-width="0.7"/><line x1="25.34" y1="10" x2="25.34" y2="12" stroke="#7a7a7a" stroke-width="0.7"/><line x1="28.43" y1="7.5" x2="28.43" y2="12" stroke="#8a8a8a" stroke-width="0.7"/><line x1="31.53" y1="10" x2="31.53" y2="12" stroke="#7a7a7a" stroke-width="0.7"/><line x1="34.62" y1="10" x2="34.62" y2="12" stroke="#7a7a7a" stroke-width="0.7"/><line x1="37.71" y1="10" x2="37.71" y2="12" stroke="#7a7a7a" stroke-width="0.7"/><line x1="40.81" y1="10" x2="40.81" y2="12" stroke="#7a7a7a" stroke-width="0.7"/><line x1="43.90" y1="0" x2="43.90" y2="12" stroke="#6a6a6a" stroke-width="0.8"/><text x="45.70" y="8.2" font-size="7.6" fill="#e0e0e0" stroke="#e0e0e0" stroke-width="0.2">0</text><line x1="46.99" y1="10" x2="46.99" y2="12" stroke="#7a7a7a" stroke-width="0.7"/><line x1="50.09" y1="10" x2="50.09" y2="12" stroke="#7a7a7a" stroke-width="0.7"/><line x1="53.18" y1="10" x2="53.18" y2="12" stroke="#7a7a7a" stroke-width="0.7"/><line x1="56.27" y1="10" x2="56.27" y2="12" stroke="#7a7a7a" stroke-width="0.7"/><line x1="59.37" y1="7.5" x2="59.37" y2="12" stroke="#8a8a8a" stroke-width="0.7"/><line x1="62.46" y1="10" x2="62.46" y2="12" stroke="#7a7a7a" stroke-width="0.7"/><line x1="65.55" y1="10" x2="65.55" y2="12" stroke="#7a7a7a" stroke-width="0.7"/><line x1="68.65" y1="10" x2="68.65" y2="12" stroke="#7a7a7a" stroke-width="0.7"/><line x1="71.74" y1="10" x2="71.74" y2="12" stroke="#7a7a7a" stroke-width="0.7"/><line x1="74.83" y1="0" x2="74.83" y2="12" stroke="#6a6a6a" stroke-width="0.8"/><text x="76.63" y="8.2" font-size="7.6" fill="#e0e0e0" stroke="#e0e0e0" stroke-width="0.2">20</text><line x1="77.93" y1="10" x2="77.93" y2="12" stroke="#7a7a7a" stroke-width="0.7"/><line x1="81.02" y1="10" x2="81.02" y2="12" stroke="#7a7a7a" stroke-width="0.7"/><line x1="84.11" y1="10" x2="84.11" y2="12" stroke="#7a7a7a" stroke-width="0.7"/><line x1="87.21" y1="10" x2="87.21" y2="12" stroke="#7a7a7a" stroke-width="0.7"/><line x1="90.30" y1="7.5" x2="90.30" y2="12" stroke="#8a8a8a" stroke-width="0.7"/><line x1="93.39" y1="10" x2="93.39" y2="12" stroke="#7a7a7a" stroke-width="0.7"/><line x1="96.49" y1="10" x2="96.49" y2="12" stroke="#7a7a7a" stroke-width="0.7"/><line x1="99.58" y1="10" x2="99.58" y2="12" stroke="#7a7a7a" stroke-width="0.7"/><line x1="102.67" y1="10" x2="102.67" y2="12" stroke="#7a7a7a" stroke-width="0.7"/><line x1="105.77" y1="0" x2="105.77" y2="12" stroke="#6a6a6a" stroke-width="0.8"/><text x="107.57" y="8.2" font-size="7.6" fill="#e0e0e0" stroke="#e0e0e0" stroke-width="0.2">40</text><line x1="108.86" y1="10" x2="108.86" y2="12" stroke="#7a7a7a" stroke-width="0.7"/><line x1="111.95" y1="10" x2="111.95" y2="12" stroke="#7a7a7a" stroke-width="0.7"/><line x1="115.05" y1="10" x2="115.05" y2="12" stroke="#7a7a7a" stroke-width="0.7"/><line x1="118.14" y1="10" x2="118.14" y2="12" stroke="#7a7a7a" stroke-width="0.7"/><line x1="121.23" y1="7.5" x2="121.23" y2="12" stroke="#8a8a8a" stroke-width="0.7"/><line x1="124.33" y1="10" x2="124.33" y2="12" stroke="#7a7a7a" stroke-width="0.7"/><line x1="127.42" y1="10" x2="127.42" y2="12" stroke="#7a7a7a" stroke-width="0.7"/><line x1="130.52" y1="10" x2="130.52" y2="12" stroke="#7a7a7a" stroke-width="0.7"/><line x1="133.61" y1="10" x2="133.61" y2="12" stroke="#7a7a7a" stroke-width="0.7"/><line x1="136.70" y1="0" x2="136.70" y2="12" stroke="#6a6a6a" stroke-width="0.8"/><text x="138.50" y="8.2" font-size="7.6" fill="#e0e0e0" stroke="#e0e0e0" stroke-width="0.2">60</text><line x1="139.80" y1="10" x2="139.80" y2="12" stroke="#7a7a7a" stroke-width="0.7"/><line x1="142.89" y1="10" x2="142.89" y2="12" stroke="#7a7a7a" stroke-width="0.7"/><line x1="145.98" y1="10" x2="145.98" y2="12" stroke="#7a7a7a" stroke-width="0.7"/><line x1="149.08" y1="10" x2="149.08" y2="12" stroke="#7a7a7a" stroke-width="0.7"/><line x1="152.17" y1="7.5" x2="152.17" y2="12" stroke="#8a8a8a" stroke-width="0.7"/><line x1="155.26" y1="10" x2="155.26" y2="12" stroke="#7a7a7a" stroke-width="0.7"/><line x1="158.36" y1="10" x2="158.36" y2="12" stroke="#7a7a7a" stroke-width="0.7"/><line x1="161.45" y1="10" x2="161.45" y2="12" stroke="#7a7a7a" stroke-width="0.7"/><line x1="164.54" y1="10" x2="164.54" y2="12" stroke="#7a7a7a" stroke-width="0.7"/><line x1="167.64" y1="0" x2="167.64" y2="12" stroke="#6a6a6a" stroke-width="0.8"/><text x="169.44" y="8.2" font-size="7.6" fill="#e0e0e0" stroke="#e0e0e0" stroke-width="0.2">80</text><line x1="170.73" y1="10" x2="170.73" y2="12" stroke="#7a7a7a" stroke-width="0.7"/><line x1="173.82" y1="10" x2="173.82" y2="12" stroke="#7a7a7a" stroke-width="0.7"/><line x1="176.92" y1="10" x2="176.92" y2="12" stroke="#7a7a7a" stroke-width="0.7"/><line x1="180.01" y1="10" x2="180.01" y2="12" stroke="#7a7a7a" stroke-width="0.7"/><line x1="183.10" y1="7.5" x2="183.10" y2="12" stroke="#8a8a8a" stroke-width="0.7"/><line x1="186.20" y1="10" x2="186.20" y2="12" stroke="#7a7a7a" stroke-width="0.7"/><line x1="189.29" y1="10" x2="189.29" y2="12" stroke="#7a7a7a" stroke-width="0.7"/><line x1="192.38" y1="10" x2="192.38" y2="12" stroke="#7a7a7a" stroke-width="0.7"/><line x1="195.48" y1="10" x2="195.48" y2="12" stroke="#7a7a7a" stroke-width="0.7"/><line x1="198.57" y1="0" x2="198.57" y2="12" stroke="#6a6a6a" stroke-width="0.8"/><text x="200.37" y="8.2" font-size="7.6" fill="#e0e0e0" stroke="#e0e0e0" stroke-width="0.2">100</text><line x1="201.66" y1="10" x2="201.66" y2="12" stroke="#7a7a7a" stroke-width="0.7"/><line x1="204.76" y1="10" x2="204.76" y2="12" stroke="#7a7a7a" stroke-width="0.7"/><line x1="207.85" y1="10" x2="207.85" y2="12" stroke="#7a7a7a" stroke-width="0.7"/><line x1="210.94" y1="10" x2="210.94" y2="12" stroke="#7a7a7a" stroke-width="0.7"/><line x1="214.04" y1="7.5" x2="214.04" y2="12" stroke="#8a8a8a" stroke-width="0.7"/><line x1="217.13" y1="10" x2="217.13" y2="12" stroke="#7a7a7a" stroke-width="0.7"/><line x1="220.22" y1="10" x2="220.22" y2="12" stroke="#7a7a7a" stroke-width="0.7"/><line x1="223.32" y1="10" x2="223.32" y2="12" stroke="#7a7a7a" stroke-width="0.7"/><line x1="226.41" y1="10" x2="226.41" y2="12" stroke="#7a7a7a" stroke-width="0.7"/><line x1="229.50" y1="0" x2="229.50" y2="12" stroke="#6a6a6a" stroke-width="0.8"/><text x="231.30" y="8.2" font-size="7.6" fill="#e0e0e0" stroke="#e0e0e0" stroke-width="0.2">120</text><line x1="232.60" y1="10" x2="232.60" y2="12" stroke="#7a7a7a" stroke-width="0.7"/><line x1="235.69" y1="10" x2="235.69" y2="12" stroke="#7a7a7a" stroke-width="0.7"/><line x1="238.78" y1="10" x2="238.78" y2="12" stroke="#7a7a7a" stroke-width="0.7"/><line x1="241.88" y1="10" x2="241.88" y2="12" stroke="#7a7a7a" stroke-width="0.7"/><line x1="244.97" y1="7.5" x2="244.97" y2="12" stroke="#8a8a8a" stroke-width="0.7"/><line x1="248.06" y1="10" x2="248.06" y2="12" stroke="#7a7a7a" stroke-width="0.7"/><line x1="251.16" y1="10" x2="251.16" y2="12" stroke="#7a7a7a" stroke-width="0.7"/><line x1="254.25" y1="10" x2="254.25" y2="12" stroke="#7a7a7a" stroke-width="0.7"/><line x1="257.34" y1="10" x2="257.34" y2="12" stroke="#7a7a7a" stroke-width="0.7"/><line x1="260.44" y1="0" x2="260.44" y2="12" stroke="#6a6a6a" stroke-width="0.8"/><text x="262.24" y="8.2" font-size="7.6" fill="#e0e0e0" stroke="#e0e0e0" stroke-width="0.2">140</text><line x1="263.53" y1="10" x2="263.53" y2="12" stroke="#7a7a7a" stroke-width="0.7"/><line x1="266.62" y1="10" x2="266.62" y2="12" stroke="#7a7a7a" stroke-width="0.7"/><line x1="269.72" y1="10" x2="269.72" y2="12" stroke="#7a7a7a" stroke-width="0.7"/><line x1="272.81" y1="10" x2="272.81" y2="12" stroke="#7a7a7a" stroke-width="0.7"/><line x1="275.90" y1="7.5" x2="275.90" y2="12" stroke="#8a8a8a" stroke-width="0.7"/><line x1="279.00" y1="10" x2="279.00" y2="12" stroke="#7a7a7a" stroke-width="0.7"/><line x1="282.09" y1="10" x2="282.09" y2="12" stroke="#7a7a7a" stroke-width="0.7"/><line x1="285.19" y1="10" x2="285.19" y2="12" stroke="#7a7a7a" stroke-width="0.7"/><line x1="288.28" y1="10" x2="288.28" y2="12" stroke="#7a7a7a" stroke-width="0.7"/><line x1="291.37" y1="0" x2="291.37" y2="12" stroke="#6a6a6a" stroke-width="0.8"/><text x="293.17" y="8.2" font-size="7.6" fill="#e0e0e0" stroke="#e0e0e0" stroke-width="0.2">160</text><line x1="294.47" y1="10" x2="294.47" y2="12" stroke="#7a7a7a" stroke-width="0.7"/><line x1="297.56" y1="10" x2="297.56" y2="12" stroke="#7a7a7a" stroke-width="0.7"/><line x1="300.65" y1="10" x2="300.65" y2="12" stroke="#7a7a7a" stroke-width="0.7"/><line x1="303.75" y1="10" x2="303.75" y2="12" stroke="#7a7a7a" stroke-width="0.7"/><line x1="306.84" y1="7.5" x2="306.84" y2="12" stroke="#8a8a8a" stroke-width="0.7"/><line x1="309.93" y1="10" x2="309.93" y2="12" stroke="#7a7a7a" stroke-width="0.7"/><line x1="313.03" y1="10" x2="313.03" y2="12" stroke="#7a7a7a" stroke-width="0.7"/><line x1="316.12" y1="10" x2="316.12" y2="12" stroke="#7a7a7a" stroke-width="0.7"/><line x1="319.21" y1="10" x2="319.21" y2="12" stroke="#7a7a7a" stroke-width="0.7"/><line x1="322.31" y1="0" x2="322.31" y2="12" stroke="#6a6a6a" stroke-width="0.8"/><text x="324.11" y="8.2" font-size="7.6" fill="#e0e0e0" stroke="#e0e0e0" stroke-width="0.2">180</text><line x1="325.40" y1="10" x2="325.40" y2="12" stroke="#7a7a7a" stroke-width="0.7"/><line x1="328.49" y1="10" x2="328.49" y2="12" stroke="#7a7a7a" stroke-width="0.7"/><line x1="331.59" y1="10" x2="331.59" y2="12" stroke="#7a7a7a" stroke-width="0.7"/><line x1="334.68" y1="10" x2="334.68" y2="12" stroke="#7a7a7a" stroke-width="0.7"/><line x1="337.77" y1="7.5" x2="337.77" y2="12" stroke="#8a8a8a" stroke-width="0.7"/><line x1="340.87" y1="10" x2="340.87" y2="12" stroke="#7a7a7a" stroke-width="0.7"/><line x1="343.96" y1="10" x2="343.96" y2="12" stroke="#7a7a7a" stroke-width="0.7"/><line x1="347.05" y1="10" x2="347.05" y2="12" stroke="#7a7a7a" stroke-width="0.7"/><line x1="350.15" y1="10" x2="350.15" y2="12" stroke="#7a7a7a" stroke-width="0.7"/><line x1="353.24" y1="0" x2="353.24" y2="12" stroke="#6a6a6a" stroke-width="0.8"/><text x="355.04" y="8.2" font-size="7.6" fill="#e0e0e0" stroke="#e0e0e0" stroke-width="0.2">200</text><line x1="356.33" y1="10" x2="356.33" y2="12" stroke="#7a7a7a" stroke-width="0.7"/><line x1="359.43" y1="10" x2="359.43" y2="12" stroke="#7a7a7a" stroke-width="0.7"/><line x1="362.52" y1="10" x2="362.52" y2="12" stroke="#7a7a7a" stroke-width="0.7"/><line x1="365.61" y1="10" x2="365.61" y2="12" stroke="#7a7a7a" stroke-width="0.7"/><line x1="368.71" y1="7.5" x2="368.71" y2="12" stroke="#8a8a8a" stroke-width="0.7"/><line x1="371.80" y1="10" x2="371.80" y2="12" stroke="#7a7a7a" stroke-width="0.7"/><line x1="374.89" y1="10" x2="374.89" y2="12" stroke="#7a7a7a" stroke-width="0.7"/><line x1="377.99" y1="10" x2="377.99" y2="12" stroke="#7a7a7a" stroke-width="0.7"/><line x1="381.08" y1="10" x2="381.08" y2="12" stroke="#7a7a7a" stroke-width="0.7"/><line x1="384.17" y1="0" x2="384.17" y2="12" stroke="#6a6a6a" stroke-width="0.8"/><text x="385.97" y="8.2" font-size="7.6" fill="#e0e0e0" stroke="#e0e0e0" stroke-width="0.2">220</text><line x1="387.27" y1="10" x2="387.27" y2="12" stroke="#7a7a7a" stroke-width="0.7"/><line x1="390.36" y1="10" x2="390.36" y2="12" stroke="#7a7a7a" stroke-width="0.7"/><line x1="393.45" y1="10" x2="393.45" y2="12" stroke="#7a7a7a" stroke-width="0.7"/><line x1="396.55" y1="10" x2="396.55" y2="12" stroke="#7a7a7a" stroke-width="0.7"/><line x1="399.64" y1="7.5" x2="399.64" y2="12" stroke="#8a8a8a" stroke-width="0.7"/><line x1="402.73" y1="10" x2="402.73" y2="12" stroke="#7a7a7a" stroke-width="0.7"/><line x1="405.83" y1="10" x2="405.83" y2="12" stroke="#7a7a7a" stroke-width="0.7"/><line x1="408.92" y1="10" x2="408.92" y2="12" stroke="#7a7a7a" stroke-width="0.7"/><line x1="412.01" y1="10" x2="412.01" y2="12" stroke="#7a7a7a" stroke-width="0.7"/><line x1="415.11" y1="0" x2="415.11" y2="12" stroke="#6a6a6a" stroke-width="0.8"/><text x="416.91" y="8.2" font-size="7.6" fill="#e0e0e0" stroke="#e0e0e0" stroke-width="0.2">240</text><line x1="418.20" y1="10" x2="418.20" y2="12" stroke="#7a7a7a" stroke-width="0.7"/><line x1="421.29" y1="10" x2="421.29" y2="12" stroke="#7a7a7a" stroke-width="0.7"/><line x1="424.39" y1="10" x2="424.39" y2="12" stroke="#7a7a7a" stroke-width="0.7"/><line x1="427.48" y1="10" x2="427.48" y2="12" stroke="#7a7a7a" stroke-width="0.7"/><line x1="430.58" y1="7.5" x2="430.58" y2="12" stroke="#8a8a8a" stroke-width="0.7"/><line x1="433.67" y1="10" x2="433.67" y2="12" stroke="#7a7a7a" stroke-width="0.7"/><line x1="436.76" y1="10" x2="436.76" y2="12" stroke="#7a7a7a" stroke-width="0.7"/><line x1="439.86" y1="10" x2="439.86" y2="12" stroke="#7a7a7a" stroke-width="0.7"/><line x1="442.95" y1="10" x2="442.95" y2="12" stroke="#7a7a7a" stroke-width="0.7"/><line x1="446.04" y1="0" x2="446.04" y2="12" stroke="#6a6a6a" stroke-width="0.8"/><text x="447.84" y="8.2" font-size="7.6" fill="#e0e0e0" stroke="#e0e0e0" stroke-width="0.2">260</text><line x1="449.14" y1="10" x2="449.14" y2="12" stroke="#7a7a7a" stroke-width="0.7"/><line x1="452.23" y1="10" x2="452.23" y2="12" stroke="#7a7a7a" stroke-width="0.7"/><line x1="455.32" y1="10" x2="455.32" y2="12" stroke="#7a7a7a" stroke-width="0.7"/><line x1="458.42" y1="10" x2="458.42" y2="12" stroke="#7a7a7a" stroke-width="0.7"/><line x1="461.51" y1="7.5" x2="461.51" y2="12" stroke="#8a8a8a" stroke-width="0.7"/><line x1="464.60" y1="10" x2="464.60" y2="12" stroke="#7a7a7a" stroke-width="0.7"/><line x1="467.70" y1="10" x2="467.70" y2="12" stroke="#7a7a7a" stroke-width="0.7"/><line x1="470.79" y1="10" x2="470.79" y2="12" stroke="#7a7a7a" stroke-width="0.7"/><line x1="473.88" y1="10" x2="473.88" y2="12" stroke="#7a7a7a" stroke-width="0.7"/><line x1="476.98" y1="0" x2="476.98" y2="12" stroke="#6a6a6a" stroke-width="0.8"/><text x="478.78" y="8.2" font-size="7.6" fill="#e0e0e0" stroke="#e0e0e0" stroke-width="0.2">280</text><line x1="480.07" y1="10" x2="480.07" y2="12" stroke="#7a7a7a" stroke-width="0.7"/><line x1="483.16" y1="10" x2="483.16" y2="12" stroke="#7a7a7a" stroke-width="0.7"/><line x1="486.26" y1="10" x2="486.26" y2="12" stroke="#7a7a7a" stroke-width="0.7"/><line x1="489.35" y1="10" x2="489.35" y2="12" stroke="#7a7a7a" stroke-width="0.7"/><line x1="492.44" y1="7.5" x2="492.44" y2="12" stroke="#8a8a8a" stroke-width="0.7"/><line x1="495.54" y1="10" x2="495.54" y2="12" stroke="#7a7a7a" stroke-width="0.7"/><line x1="498.63" y1="10" x2="498.63" y2="12" stroke="#7a7a7a" stroke-width="0.7"/><line x1="501.72" y1="10" x2="501.72" y2="12" stroke="#7a7a7a" stroke-width="0.7"/><line x1="504.82" y1="10" x2="504.82" y2="12" stroke="#7a7a7a" stroke-width="0.7"/><line x1="507.91" y1="0" x2="507.91" y2="12" stroke="#6a6a6a" stroke-width="0.8"/><text x="509.71" y="8.2" font-size="7.6" fill="#e0e0e0" stroke="#e0e0e0" stroke-width="0.2">300</text><line x1="511.00" y1="10" x2="511.00" y2="12" stroke="#7a7a7a" stroke-width="0.7"/><line x1="514.10" y1="10" x2="514.10" y2="12" stroke="#7a7a7a" stroke-width="0.7"/><line x1="517.19" y1="10" x2="517.19" y2="12" stroke="#7a7a7a" stroke-width="0.7"/><line x1="520.28" y1="10" x2="520.28" y2="12" stroke="#7a7a7a" stroke-width="0.7"/><line x1="523.38" y1="7.5" x2="523.38" y2="12" stroke="#8a8a8a" stroke-width="0.7"/><line x1="526.47" y1="10" x2="526.47" y2="12" stroke="#7a7a7a" stroke-width="0.7"/><line x1="529.56" y1="10" x2="529.56" y2="12" stroke="#7a7a7a" stroke-width="0.7"/><line x1="532.66" y1="10" x2="532.66" y2="12" stroke="#7a7a7a" stroke-width="0.7"/><line x1="535.75" y1="10" x2="535.75" y2="12" stroke="#7a7a7a" stroke-width="0.7"/><line x1="538.84" y1="0" x2="538.84" y2="12" stroke="#6a6a6a" stroke-width="0.8"/><text x="540.64" y="8.2" font-size="7.6" fill="#e0e0e0" stroke="#e0e0e0" stroke-width="0.2">320</text><line x1="541.94" y1="10" x2="541.94" y2="12" stroke="#7a7a7a" stroke-width="0.7"/><line x1="545.03" y1="10" x2="545.03" y2="12" stroke="#7a7a7a" stroke-width="0.7"/><line x1="548.12" y1="10" x2="548.12" y2="12" stroke="#7a7a7a" stroke-width="0.7"/><line x1="551.22" y1="10" x2="551.22" y2="12" stroke="#7a7a7a" stroke-width="0.7"/><line x1="554.31" y1="7.5" x2="554.31" y2="12" stroke="#8a8a8a" stroke-width="0.7"/><line x1="557.40" y1="10" x2="557.40" y2="12" stroke="#7a7a7a" stroke-width="0.7"/><line x1="560.50" y1="10" x2="560.50" y2="12" stroke="#7a7a7a" stroke-width="0.7"/><line x1="563.59" y1="10" x2="563.59" y2="12" stroke="#7a7a7a" stroke-width="0.7"/><line x1="566.68" y1="10" x2="566.68" y2="12" stroke="#7a7a7a" stroke-width="0.7"/><line x1="569.78" y1="0" x2="569.78" y2="12" stroke="#6a6a6a" stroke-width="0.8"/><text x="571.58" y="8.2" font-size="7.6" fill="#e0e0e0" stroke="#e0e0e0" stroke-width="0.2">340</text><line x1="572.87" y1="10" x2="572.87" y2="12" stroke="#7a7a7a" stroke-width="0.7"/><line x1="575.96" y1="10" x2="575.96" y2="12" stroke="#7a7a7a" stroke-width="0.7"/><line x1="579.06" y1="10" x2="579.06" y2="12" stroke="#7a7a7a" stroke-width="0.7"/><line x1="582.15" y1="10" x2="582.15" y2="12" stroke="#7a7a7a" stroke-width="0.7"/><line x1="585.25" y1="7.5" x2="585.25" y2="12" stroke="#8a8a8a" stroke-width="0.7"/><line x1="588.34" y1="10" x2="588.34" y2="12" stroke="#7a7a7a" stroke-width="0.7"/><line x1="591.43" y1="10" x2="591.43" y2="12" stroke="#7a7a7a" stroke-width="0.7"/><line x1="594.53" y1="10" x2="594.53" y2="12" stroke="#7a7a7a" stroke-width="0.7"/><line x1="597.62" y1="10" x2="597.62" y2="12" stroke="#7a7a7a" stroke-width="0.7"/><line x1="600.71" y1="0" x2="600.71" y2="12" stroke="#6a6a6a" stroke-width="0.8"/><text x="602.51" y="8.2" font-size="7.6" fill="#e0e0e0" stroke="#e0e0e0" stroke-width="0.2">360</text><line x1="603.81" y1="10" x2="603.81" y2="12" stroke="#7a7a7a" stroke-width="0.7"/><line x1="606.90" y1="10" x2="606.90" y2="12" stroke="#7a7a7a" stroke-width="0.7"/><line x1="609.99" y1="10" x2="609.99" y2="12" stroke="#7a7a7a" stroke-width="0.7"/><line x1="613.09" y1="10" x2="613.09" y2="12" stroke="#7a7a7a" stroke-width="0.7"/><line x1="616.18" y1="7.5" x2="616.18" y2="12" stroke="#8a8a8a" stroke-width="0.7"/><line x1="619.27" y1="10" x2="619.27" y2="12" stroke="#7a7a7a" stroke-width="0.7"/><line x1="622.37" y1="10" x2="622.37" y2="12" stroke="#7a7a7a" stroke-width="0.7"/><line x1="625.46" y1="10" x2="625.46" y2="12" stroke="#7a7a7a" stroke-width="0.7"/><line x1="628.55" y1="10" x2="628.55" y2="12" stroke="#7a7a7a" stroke-width="0.7"/><line x1="631.65" y1="0" x2="631.65" y2="12" stroke="#6a6a6a" stroke-width="0.8"/><text x="633.45" y="8.2" font-size="7.6" fill="#e0e0e0" stroke="#e0e0e0" stroke-width="0.2">380</text><line x1="634.74" y1="10" x2="634.74" y2="12" stroke="#7a7a7a" stroke-width="0.7"/><line x1="637.83" y1="10" x2="637.83" y2="12" stroke="#7a7a7a" stroke-width="0.7"/><line x1="640.93" y1="10" x2="640.93" y2="12" stroke="#7a7a7a" stroke-width="0.7"/><line x1="644.02" y1="10" x2="644.02" y2="12" stroke="#7a7a7a" stroke-width="0.7"/><line x1="647.11" y1="7.5" x2="647.11" y2="12" stroke="#8a8a8a" stroke-width="0.7"/><line x1="650.21" y1="10" x2="650.21" y2="12" stroke="#7a7a7a" stroke-width="0.7"/><line x1="653.30" y1="10" x2="653.30" y2="12" stroke="#7a7a7a" stroke-width="0.7"/><line x1="656.39" y1="10" x2="656.39" y2="12" stroke="#7a7a7a" stroke-width="0.7"/><line x1="659.49" y1="10" x2="659.49" y2="12" stroke="#7a7a7a" stroke-width="0.7"/><line x1="662.58" y1="0" x2="662.58" y2="12" stroke="#6a6a6a" stroke-width="0.8"/><text x="664.38" y="8.2" font-size="7.6" fill="#e0e0e0" stroke="#e0e0e0" stroke-width="0.2">400</text><line x1="665.67" y1="10" x2="665.67" y2="12" stroke="#7a7a7a" stroke-width="0.7"/><line x1="668.77" y1="10" x2="668.77" y2="12" stroke="#7a7a7a" stroke-width="0.7"/><line x1="671.86" y1="10" x2="671.86" y2="12" stroke="#7a7a7a" stroke-width="0.7"/><line x1="674.95" y1="10" x2="674.95" y2="12" stroke="#7a7a7a" stroke-width="0.7"/><line x1="678.05" y1="7.5" x2="678.05" y2="12" stroke="#8a8a8a" stroke-width="0.7"/><line x1="681.14" y1="10" x2="681.14" y2="12" stroke="#7a7a7a" stroke-width="0.7"/><line x1="684.23" y1="10" x2="684.23" y2="12" stroke="#7a7a7a" stroke-width="0.7"/><line x1="687.33" y1="10" x2="687.33" y2="12" stroke="#7a7a7a" stroke-width="0.7"/><line x1="690.42" y1="10" x2="690.42" y2="12" stroke="#7a7a7a" stroke-width="0.7"/><line x1="693.51" y1="0" x2="693.51" y2="12" stroke="#6a6a6a" stroke-width="0.8"/><text x="695.31" y="8.2" font-size="7.6" fill="#e0e0e0" stroke="#e0e0e0" stroke-width="0.2">420</text><line x1="696.61" y1="10" x2="696.61" y2="12" stroke="#7a7a7a" stroke-width="0.7"/><line x1="699.70" y1="10" x2="699.70" y2="12" stroke="#7a7a7a" stroke-width="0.7"/><line x1="702.79" y1="10" x2="702.79" y2="12" stroke="#7a7a7a" stroke-width="0.7"/><line x1="705.89" y1="10" x2="705.89" y2="12" stroke="#7a7a7a" stroke-width="0.7"/><line x1="708.98" y1="7.5" x2="708.98" y2="12" stroke="#8a8a8a" stroke-width="0.7"/><line x1="712.07" y1="10" x2="712.07" y2="12" stroke="#7a7a7a" stroke-width="0.7"/><line x1="715.17" y1="10" x2="715.17" y2="12" stroke="#7a7a7a" stroke-width="0.7"/><line x1="718.26" y1="10" x2="718.26" y2="12" stroke="#7a7a7a" stroke-width="0.7"/><line x1="721.35" y1="10" x2="721.35" y2="12" stroke="#7a7a7a" stroke-width="0.7"/><line x1="724.45" y1="0" x2="724.45" y2="12" stroke="#6a6a6a" stroke-width="0.8"/><text x="726.25" y="8.2" font-size="7.6" fill="#e0e0e0" stroke="#e0e0e0" stroke-width="0.2">440</text><line x1="727.54" y1="10" x2="727.54" y2="12" stroke="#7a7a7a" stroke-width="0.7"/><line x1="730.63" y1="10" x2="730.63" y2="12" stroke="#7a7a7a" stroke-width="0.7"/><line x1="733.73" y1="10" x2="733.73" y2="12" stroke="#7a7a7a" stroke-width="0.7"/><line x1="736.82" y1="10" x2="736.82" y2="12" stroke="#7a7a7a" stroke-width="0.7"/><line x1="739.91" y1="7.5" x2="739.91" y2="12" stroke="#8a8a8a" stroke-width="0.7"/><line x1="743.01" y1="10" x2="743.01" y2="12" stroke="#7a7a7a" stroke-width="0.7"/><line x1="746.10" y1="10" x2="746.10" y2="12" stroke="#7a7a7a" stroke-width="0.7"/><line x1="749.20" y1="10" x2="749.20" y2="12" stroke="#7a7a7a" stroke-width="0.7"/><line x1="752.29" y1="10" x2="752.29" y2="12" stroke="#7a7a7a" stroke-width="0.7"/><line x1="755.38" y1="0" x2="755.38" y2="12" stroke="#6a6a6a" stroke-width="0.8"/><text x="757.18" y="8.2" font-size="7.6" fill="#e0e0e0" stroke="#e0e0e0" stroke-width="0.2">460</text><line x1="758.48" y1="10" x2="758.48" y2="12" stroke="#7a7a7a" stroke-width="0.7"/><line x1="761.57" y1="10" x2="761.57" y2="12" stroke="#7a7a7a" stroke-width="0.7"/><line x1="764.66" y1="10" x2="764.66" y2="12" stroke="#7a7a7a" stroke-width="0.7"/><line x1="767.76" y1="10" x2="767.76" y2="12" stroke="#7a7a7a" stroke-width="0.7"/><line x1="770.85" y1="7.5" x2="770.85" y2="12" stroke="#8a8a8a" stroke-width="0.7"/><line x1="773.94" y1="10" x2="773.94" y2="12" stroke="#7a7a7a" stroke-width="0.7"/><line x1="777.04" y1="10" x2="777.04" y2="12" stroke="#7a7a7a" stroke-width="0.7"/><line x1="780.13" y1="10" x2="780.13" y2="12" stroke="#7a7a7a" stroke-width="0.7"/><line x1="783.22" y1="10" x2="783.22" y2="12" stroke="#7a7a7a" stroke-width="0.7"/><line x1="786.32" y1="0" x2="786.32" y2="12" stroke="#6a6a6a" stroke-width="0.8"/><text x="788.12" y="8.2" font-size="7.6" fill="#e0e0e0" stroke="#e0e0e0" stroke-width="0.2">480</text><line x1="789.41" y1="10" x2="789.41" y2="12" stroke="#7a7a7a" stroke-width="0.7"/><line x1="792.50" y1="10" x2="792.50" y2="12" stroke="#7a7a7a" stroke-width="0.7"/><line x1="795.60" y1="10" x2="795.60" y2="12" stroke="#7a7a7a" stroke-width="0.7"/><line x1="798.69" y1="10" x2="798.69" y2="12" stroke="#7a7a7a" stroke-width="0.7"/><line x1="801.78" y1="7.5" x2="801.78" y2="12" stroke="#8a8a8a" stroke-width="0.7"/><line x1="804.88" y1="10" x2="804.88" y2="12" stroke="#7a7a7a" stroke-width="0.7"/><line x1="807.97" y1="10" x2="807.97" y2="12" stroke="#7a7a7a" stroke-width="0.7"/><line x1="811.06" y1="10" x2="811.06" y2="12" stroke="#7a7a7a" stroke-width="0.7"/><line x1="814.16" y1="10" x2="814.16" y2="12" stroke="#7a7a7a" stroke-width="0.7"/><line x1="817.25" y1="0" x2="817.25" y2="12" stroke="#6a6a6a" stroke-width="0.8"/><text x="819.05" y="8.2" font-size="7.6" fill="#e0e0e0" stroke="#e0e0e0" stroke-width="0.2">500</text><line x1="820.34" y1="10" x2="820.34" y2="12" stroke="#7a7a7a" stroke-width="0.7"/><line x1="823.44" y1="10" x2="823.44" y2="12" stroke="#7a7a7a" stroke-width="0.7"/><line x1="826.53" y1="10" x2="826.53" y2="12" stroke="#7a7a7a" stroke-width="0.7"/><line x1="829.62" y1="10" x2="829.62" y2="12" stroke="#7a7a7a" stroke-width="0.7"/><line x1="832.72" y1="7.5" x2="832.72" y2="12" stroke="#8a8a8a" stroke-width="0.7"/><line x1="835.81" y1="10" x2="835.81" y2="12" stroke="#7a7a7a" stroke-width="0.7"/><line x1="838.90" y1="10" x2="838.90" y2="12" stroke="#7a7a7a" stroke-width="0.7"/><line x1="842.00" y1="10" x2="842.00" y2="12" stroke="#7a7a7a" stroke-width="0.7"/><line x1="845.09" y1="10" x2="845.09" y2="12" stroke="#7a7a7a" stroke-width="0.7"/><line x1="848.18" y1="0" x2="848.18" y2="12" stroke="#6a6a6a" stroke-width="0.8"/><text x="849.98" y="8.2" font-size="7.6" fill="#e0e0e0" stroke="#e0e0e0" stroke-width="0.2">520</text><line x1="851.28" y1="10" x2="851.28" y2="12" stroke="#7a7a7a" stroke-width="0.7"/><line x1="854.37" y1="10" x2="854.37" y2="12" stroke="#7a7a7a" stroke-width="0.7"/><line x1="857.46" y1="10" x2="857.46" y2="12" stroke="#7a7a7a" stroke-width="0.7"/><line x1="860.56" y1="10" x2="860.56" y2="12" stroke="#7a7a7a" stroke-width="0.7"/><line x1="863.65" y1="7.5" x2="863.65" y2="12" stroke="#8a8a8a" stroke-width="0.7"/><line x1="866.74" y1="10" x2="866.74" y2="12" stroke="#7a7a7a" stroke-width="0.7"/><line x1="869.84" y1="10" x2="869.84" y2="12" stroke="#7a7a7a" stroke-width="0.7"/><line x1="872.93" y1="10" x2="872.93" y2="12" stroke="#7a7a7a" stroke-width="0.7"/><line x1="876.02" y1="10" x2="876.02" y2="12" stroke="#7a7a7a" stroke-width="0.7"/><line x1="879.12" y1="0" x2="879.12" y2="12" stroke="#6a6a6a" stroke-width="0.8"/><text x="880.92" y="8.2" font-size="7.6" fill="#e0e0e0" stroke="#e0e0e0" stroke-width="0.2">540</text><line x1="882.21" y1="10" x2="882.21" y2="12" stroke="#7a7a7a" stroke-width="0.7"/><line x1="885.30" y1="10" x2="885.30" y2="12" stroke="#7a7a7a" stroke-width="0.7"/><line x1="888.40" y1="10" x2="888.40" y2="12" stroke="#7a7a7a" stroke-width="0.7"/><line x1="891.49" y1="10" x2="891.49" y2="12" stroke="#7a7a7a" stroke-width="0.7"/><line x1="894.59" y1="7.5" x2="894.59" y2="12" stroke="#8a8a8a" stroke-width="0.7"/><line x1="897.68" y1="10" x2="897.68" y2="12" stroke="#7a7a7a" stroke-width="0.7"/><line x1="900.77" y1="10" x2="900.77" y2="12" stroke="#7a7a7a" stroke-width="0.7"/><line x1="903.87" y1="10" x2="903.87" y2="12" stroke="#7a7a7a" stroke-width="0.7"/><line x1="906.96" y1="10" x2="906.96" y2="12" stroke="#7a7a7a" stroke-width="0.7"/><line x1="910.05" y1="0" x2="910.05" y2="12" stroke="#6a6a6a" stroke-width="0.8"/><text x="911.85" y="8.2" font-size="7.6" fill="#e0e0e0" stroke="#e0e0e0" stroke-width="0.2">560</text><line x1="913.15" y1="10" x2="913.15" y2="12" stroke="#7a7a7a" stroke-width="0.7"/><line x1="916.24" y1="10" x2="916.24" y2="12" stroke="#7a7a7a" stroke-width="0.7"/><line x1="919.33" y1="10" x2="919.33" y2="12" stroke="#7a7a7a" stroke-width="0.7"/><line x1="922.43" y1="10" x2="922.43" y2="12" stroke="#7a7a7a" stroke-width="0.7"/><line x1="925.52" y1="7.5" x2="925.52" y2="12" stroke="#8a8a8a" stroke-width="0.7"/><line x1="928.61" y1="10" x2="928.61" y2="12" stroke="#7a7a7a" stroke-width="0.7"/><line x1="931.71" y1="10" x2="931.71" y2="12" stroke="#7a7a7a" stroke-width="0.7"/><line x1="934.80" y1="10" x2="934.80" y2="12" stroke="#7a7a7a" stroke-width="0.7"/><line x1="937.89" y1="10" x2="937.89" y2="12" stroke="#7a7a7a" stroke-width="0.7"/><line x1="940.99" y1="0" x2="940.99" y2="12" stroke="#6a6a6a" stroke-width="0.8"/><text x="942.79" y="8.2" font-size="7.6" fill="#e0e0e0" stroke="#e0e0e0" stroke-width="0.2">580</text><line x1="944.08" y1="10" x2="944.08" y2="12" stroke="#7a7a7a" stroke-width="0.7"/><line x1="947.17" y1="10" x2="947.17" y2="12" stroke="#7a7a7a" stroke-width="0.7"/><line x1="950.27" y1="10" x2="950.27" y2="12" stroke="#7a7a7a" stroke-width="0.7"/><line x1="953.36" y1="10" x2="953.36" y2="12" stroke="#7a7a7a" stroke-width="0.7"/><line x1="956.45" y1="7.5" x2="956.45" y2="12" stroke="#8a8a8a" stroke-width="0.7"/><line x1="959.55" y1="10" x2="959.55" y2="12" stroke="#7a7a7a" stroke-width="0.7"/><line x1="962.64" y1="10" x2="962.64" y2="12" stroke="#7a7a7a" stroke-width="0.7"/><line x1="965.73" y1="10" x2="965.73" y2="12" stroke="#7a7a7a" stroke-width="0.7"/><line x1="968.83" y1="10" x2="968.83" y2="12" stroke="#7a7a7a" stroke-width="0.7"/><line x1="971.92" y1="0" x2="971.92" y2="12" stroke="#6a6a6a" stroke-width="0.8"/><text x="973.72" y="8.2" font-size="7.6" fill="#e0e0e0" stroke="#e0e0e0" stroke-width="0.2">600</text><line x1="0" y1="11.7" x2="974" y2="11.7" stroke="#6e6e6e" stroke-width="0.8"/></svg><svg class="a" style="left:244px;top:116.5px;will-change:transform" width="10" height="608" font-family="Liberation Sans"><line x1="8" y1="3.21" x2="10" y2="3.21" stroke="#7a7a7a" stroke-width="0.7"/><line x1="0" y1="6.30" x2="10" y2="6.30" stroke="#6a6a6a" stroke-width="0.8"/><text transform="translate(1.0,7.00) rotate(90)" x="0" y="0" font-size="6.3" textLength="5.1" lengthAdjust="spacingAndGlyphs" fill="#d0d0d0" stroke="#d0d0d0" stroke-width="0.1">0</text><line x1="8" y1="9.39" x2="10" y2="9.39" stroke="#7a7a7a" stroke-width="0.7"/><line x1="8" y1="12.49" x2="10" y2="12.49" stroke="#7a7a7a" stroke-width="0.7"/><line x1="8" y1="15.58" x2="10" y2="15.58" stroke="#7a7a7a" stroke-width="0.7"/><line x1="8" y1="18.67" x2="10" y2="18.67" stroke="#7a7a7a" stroke-width="0.7"/><line x1="5.5" y1="21.77" x2="10" y2="21.77" stroke="#8a8a8a" stroke-width="0.7"/><line x1="8" y1="24.86" x2="10" y2="24.86" stroke="#7a7a7a" stroke-width="0.7"/><line x1="8" y1="27.95" x2="10" y2="27.95" stroke="#7a7a7a" stroke-width="0.7"/><line x1="8" y1="31.05" x2="10" y2="31.05" stroke="#7a7a7a" stroke-width="0.7"/><line x1="8" y1="34.14" x2="10" y2="34.14" stroke="#7a7a7a" stroke-width="0.7"/><line x1="0" y1="37.23" x2="10" y2="37.23" stroke="#6a6a6a" stroke-width="0.8"/><text transform="translate(1.0,37.93) rotate(90)" x="0" y="0" font-size="6.3" textLength="11.4" lengthAdjust="spacingAndGlyphs" fill="#d0d0d0" stroke="#d0d0d0" stroke-width="0.1">20</text><line x1="8" y1="40.33" x2="10" y2="40.33" stroke="#7a7a7a" stroke-width="0.7"/><line x1="8" y1="43.42" x2="10" y2="43.42" stroke="#7a7a7a" stroke-width="0.7"/><line x1="8" y1="46.51" x2="10" y2="46.51" stroke="#7a7a7a" stroke-width="0.7"/><line x1="8" y1="49.61" x2="10" y2="49.61" stroke="#7a7a7a" stroke-width="0.7"/><line x1="5.5" y1="52.70" x2="10" y2="52.70" stroke="#8a8a8a" stroke-width="0.7"/><line x1="8" y1="55.79" x2="10" y2="55.79" stroke="#7a7a7a" stroke-width="0.7"/><line x1="8" y1="58.89" x2="10" y2="58.89" stroke="#7a7a7a" stroke-width="0.7"/><line x1="8" y1="61.98" x2="10" y2="61.98" stroke="#7a7a7a" stroke-width="0.7"/><line x1="8" y1="65.07" x2="10" y2="65.07" stroke="#7a7a7a" stroke-width="0.7"/><line x1="0" y1="68.17" x2="10" y2="68.17" stroke="#6a6a6a" stroke-width="0.8"/><text transform="translate(1.0,68.87) rotate(90)" x="0" y="0" font-size="6.3" textLength="11.4" lengthAdjust="spacingAndGlyphs" fill="#d0d0d0" stroke="#d0d0d0" stroke-width="0.1">40</text><line x1="8" y1="71.26" x2="10" y2="71.26" stroke="#7a7a7a" stroke-width="0.7"/><line x1="8" y1="74.35" x2="10" y2="74.35" stroke="#7a7a7a" stroke-width="0.7"/><line x1="8" y1="77.45" x2="10" y2="77.45" stroke="#7a7a7a" stroke-width="0.7"/><line x1="8" y1="80.54" x2="10" y2="80.54" stroke="#7a7a7a" stroke-width="0.7"/><line x1="5.5" y1="83.63" x2="10" y2="83.63" stroke="#8a8a8a" stroke-width="0.7"/><line x1="8" y1="86.73" x2="10" y2="86.73" stroke="#7a7a7a" stroke-width="0.7"/><line x1="8" y1="89.82" x2="10" y2="89.82" stroke="#7a7a7a" stroke-width="0.7"/><line x1="8" y1="92.92" x2="10" y2="92.92" stroke="#7a7a7a" stroke-width="0.7"/><line x1="8" y1="96.01" x2="10" y2="96.01" stroke="#7a7a7a" stroke-width="0.7"/><line x1="0" y1="99.10" x2="10" y2="99.10" stroke="#6a6a6a" stroke-width="0.8"/><text transform="translate(1.0,99.80) rotate(90)" x="0" y="0" font-size="6.3" textLength="11.4" lengthAdjust="spacingAndGlyphs" fill="#d0d0d0" stroke="#d0d0d0" stroke-width="0.1">60</text><line x1="8" y1="102.20" x2="10" y2="102.20" stroke="#7a7a7a" stroke-width="0.7"/><line x1="8" y1="105.29" x2="10" y2="105.29" stroke="#7a7a7a" stroke-width="0.7"/><line x1="8" y1="108.38" x2="10" y2="108.38" stroke="#7a7a7a" stroke-width="0.7"/><line x1="8" y1="111.48" x2="10" y2="111.48" stroke="#7a7a7a" stroke-width="0.7"/><line x1="5.5" y1="114.57" x2="10" y2="114.57" stroke="#8a8a8a" stroke-width="0.7"/><line x1="8" y1="117.66" x2="10" y2="117.66" stroke="#7a7a7a" stroke-width="0.7"/><line x1="8" y1="120.76" x2="10" y2="120.76" stroke="#7a7a7a" stroke-width="0.7"/><line x1="8" y1="123.85" x2="10" y2="123.85" stroke="#7a7a7a" stroke-width="0.7"/><line x1="8" y1="126.94" x2="10" y2="126.94" stroke="#7a7a7a" stroke-width="0.7"/><line x1="0" y1="130.04" x2="10" y2="130.04" stroke="#6a6a6a" stroke-width="0.8"/><text transform="translate(1.0,130.74) rotate(90)" x="0" y="0" font-size="6.3" textLength="11.4" lengthAdjust="spacingAndGlyphs" fill="#d0d0d0" stroke="#d0d0d0" stroke-width="0.1">80</text><line x1="8" y1="133.13" x2="10" y2="133.13" stroke="#7a7a7a" stroke-width="0.7"/><line x1="8" y1="136.22" x2="10" y2="136.22" stroke="#7a7a7a" stroke-width="0.7"/><line x1="8" y1="139.32" x2="10" y2="139.32" stroke="#7a7a7a" stroke-width="0.7"/><line x1="8" y1="142.41" x2="10" y2="142.41" stroke="#7a7a7a" stroke-width="0.7"/><line x1="5.5" y1="145.50" x2="10" y2="145.50" stroke="#8a8a8a" stroke-width="0.7"/><line x1="8" y1="148.60" x2="10" y2="148.60" stroke="#7a7a7a" stroke-width="0.7"/><line x1="8" y1="151.69" x2="10" y2="151.69" stroke="#7a7a7a" stroke-width="0.7"/><line x1="8" y1="154.78" x2="10" y2="154.78" stroke="#7a7a7a" stroke-width="0.7"/><line x1="8" y1="157.88" x2="10" y2="157.88" stroke="#7a7a7a" stroke-width="0.7"/><line x1="0" y1="160.97" x2="10" y2="160.97" stroke="#6a6a6a" stroke-width="0.8"/><text transform="translate(1.0,161.67) rotate(90)" x="0" y="0" font-size="6.3" textLength="17.7" lengthAdjust="spacingAndGlyphs" fill="#d0d0d0" stroke="#d0d0d0" stroke-width="0.1">100</text><line x1="8" y1="164.06" x2="10" y2="164.06" stroke="#7a7a7a" stroke-width="0.7"/><line x1="8" y1="167.16" x2="10" y2="167.16" stroke="#7a7a7a" stroke-width="0.7"/><line x1="8" y1="170.25" x2="10" y2="170.25" stroke="#7a7a7a" stroke-width="0.7"/><line x1="8" y1="173.34" x2="10" y2="173.34" stroke="#7a7a7a" stroke-width="0.7"/><line x1="5.5" y1="176.44" x2="10" y2="176.44" stroke="#8a8a8a" stroke-width="0.7"/><line x1="8" y1="179.53" x2="10" y2="179.53" stroke="#7a7a7a" stroke-width="0.7"/><line x1="8" y1="182.62" x2="10" y2="182.62" stroke="#7a7a7a" stroke-width="0.7"/><line x1="8" y1="185.72" x2="10" y2="185.72" stroke="#7a7a7a" stroke-width="0.7"/><line x1="8" y1="188.81" x2="10" y2="188.81" stroke="#7a7a7a" stroke-width="0.7"/><line x1="0" y1="191.90" x2="10" y2="191.90" stroke="#6a6a6a" stroke-width="0.8"/><text transform="translate(1.0,192.60) rotate(90)" x="0" y="0" font-size="6.3" textLength="17.7" lengthAdjust="spacingAndGlyphs" fill="#d0d0d0" stroke="#d0d0d0" stroke-width="0.1">120</text><line x1="8" y1="195.00" x2="10" y2="195.00" stroke="#7a7a7a" stroke-width="0.7"/><line x1="8" y1="198.09" x2="10" y2="198.09" stroke="#7a7a7a" stroke-width="0.7"/><line x1="8" y1="201.18" x2="10" y2="201.18" stroke="#7a7a7a" stroke-width="0.7"/><line x1="8" y1="204.28" x2="10" y2="204.28" stroke="#7a7a7a" stroke-width="0.7"/><line x1="5.5" y1="207.37" x2="10" y2="207.37" stroke="#8a8a8a" stroke-width="0.7"/><line x1="8" y1="210.46" x2="10" y2="210.46" stroke="#7a7a7a" stroke-width="0.7"/><line x1="8" y1="213.56" x2="10" y2="213.56" stroke="#7a7a7a" stroke-width="0.7"/><line x1="8" y1="216.65" x2="10" y2="216.65" stroke="#7a7a7a" stroke-width="0.7"/><line x1="8" y1="219.74" x2="10" y2="219.74" stroke="#7a7a7a" stroke-width="0.7"/><line x1="0" y1="222.84" x2="10" y2="222.84" stroke="#6a6a6a" stroke-width="0.8"/><text transform="translate(1.0,223.54) rotate(90)" x="0" y="0" font-size="6.3" textLength="17.7" lengthAdjust="spacingAndGlyphs" fill="#d0d0d0" stroke="#d0d0d0" stroke-width="0.1">140</text><line x1="8" y1="225.93" x2="10" y2="225.93" stroke="#7a7a7a" stroke-width="0.7"/><line x1="8" y1="229.02" x2="10" y2="229.02" stroke="#7a7a7a" stroke-width="0.7"/><line x1="8" y1="232.12" x2="10" y2="232.12" stroke="#7a7a7a" stroke-width="0.7"/><line x1="8" y1="235.21" x2="10" y2="235.21" stroke="#7a7a7a" stroke-width="0.7"/><line x1="5.5" y1="238.31" x2="10" y2="238.31" stroke="#8a8a8a" stroke-width="0.7"/><line x1="8" y1="241.40" x2="10" y2="241.40" stroke="#7a7a7a" stroke-width="0.7"/><line x1="8" y1="244.49" x2="10" y2="244.49" stroke="#7a7a7a" stroke-width="0.7"/><line x1="8" y1="247.59" x2="10" y2="247.59" stroke="#7a7a7a" stroke-width="0.7"/><line x1="8" y1="250.68" x2="10" y2="250.68" stroke="#7a7a7a" stroke-width="0.7"/><line x1="0" y1="253.77" x2="10" y2="253.77" stroke="#6a6a6a" stroke-width="0.8"/><text transform="translate(1.0,254.47) rotate(90)" x="0" y="0" font-size="6.3" textLength="17.7" lengthAdjust="spacingAndGlyphs" fill="#d0d0d0" stroke="#d0d0d0" stroke-width="0.1">160</text><line x1="8" y1="256.87" x2="10" y2="256.87" stroke="#7a7a7a" stroke-width="0.7"/><line x1="8" y1="259.96" x2="10" y2="259.96" stroke="#7a7a7a" stroke-width="0.7"/><line x1="8" y1="263.05" x2="10" y2="263.05" stroke="#7a7a7a" stroke-width="0.7"/><line x1="8" y1="266.15" x2="10" y2="266.15" stroke="#7a7a7a" stroke-width="0.7"/><line x1="5.5" y1="269.24" x2="10" y2="269.24" stroke="#8a8a8a" stroke-width="0.7"/><line x1="8" y1="272.33" x2="10" y2="272.33" stroke="#7a7a7a" stroke-width="0.7"/><line x1="8" y1="275.43" x2="10" y2="275.43" stroke="#7a7a7a" stroke-width="0.7"/><line x1="8" y1="278.52" x2="10" y2="278.52" stroke="#7a7a7a" stroke-width="0.7"/><line x1="8" y1="281.61" x2="10" y2="281.61" stroke="#7a7a7a" stroke-width="0.7"/><line x1="0" y1="284.71" x2="10" y2="284.71" stroke="#6a6a6a" stroke-width="0.8"/><text transform="translate(1.0,285.41) rotate(90)" x="0" y="0" font-size="6.3" textLength="17.7" lengthAdjust="spacingAndGlyphs" fill="#d0d0d0" stroke="#d0d0d0" stroke-width="0.1">180</text><line x1="8" y1="287.80" x2="10" y2="287.80" stroke="#7a7a7a" stroke-width="0.7"/><line x1="8" y1="290.89" x2="10" y2="290.89" stroke="#7a7a7a" stroke-width="0.7"/><line x1="8" y1="293.99" x2="10" y2="293.99" stroke="#7a7a7a" stroke-width="0.7"/><line x1="8" y1="297.08" x2="10" y2="297.08" stroke="#7a7a7a" stroke-width="0.7"/><line x1="5.5" y1="300.17" x2="10" y2="300.17" stroke="#8a8a8a" stroke-width="0.7"/><line x1="8" y1="303.27" x2="10" y2="303.27" stroke="#7a7a7a" stroke-width="0.7"/><line x1="8" y1="306.36" x2="10" y2="306.36" stroke="#7a7a7a" stroke-width="0.7"/><line x1="8" y1="309.45" x2="10" y2="309.45" stroke="#7a7a7a" stroke-width="0.7"/><line x1="8" y1="312.55" x2="10" y2="312.55" stroke="#7a7a7a" stroke-width="0.7"/><line x1="0" y1="315.64" x2="10" y2="315.64" stroke="#6a6a6a" stroke-width="0.8"/><text transform="translate(1.0,316.34) rotate(90)" x="0" y="0" font-size="6.3" textLength="17.7" lengthAdjust="spacingAndGlyphs" fill="#d0d0d0" stroke="#d0d0d0" stroke-width="0.1">200</text><line x1="8" y1="318.73" x2="10" y2="318.73" stroke="#7a7a7a" stroke-width="0.7"/><line x1="8" y1="321.83" x2="10" y2="321.83" stroke="#7a7a7a" stroke-width="0.7"/><line x1="8" y1="324.92" x2="10" y2="324.92" stroke="#7a7a7a" stroke-width="0.7"/><line x1="8" y1="328.01" x2="10" y2="328.01" stroke="#7a7a7a" stroke-width="0.7"/><line x1="5.5" y1="331.11" x2="10" y2="331.11" stroke="#8a8a8a" stroke-width="0.7"/><line x1="8" y1="334.20" x2="10" y2="334.20" stroke="#7a7a7a" stroke-width="0.7"/><line x1="8" y1="337.29" x2="10" y2="337.29" stroke="#7a7a7a" stroke-width="0.7"/><line x1="8" y1="340.39" x2="10" y2="340.39" stroke="#7a7a7a" stroke-width="0.7"/><line x1="8" y1="343.48" x2="10" y2="343.48" stroke="#7a7a7a" stroke-width="0.7"/><line x1="0" y1="346.57" x2="10" y2="346.57" stroke="#6a6a6a" stroke-width="0.8"/><text transform="translate(1.0,347.27) rotate(90)" x="0" y="0" font-size="6.3" textLength="17.7" lengthAdjust="spacingAndGlyphs" fill="#d0d0d0" stroke="#d0d0d0" stroke-width="0.1">220</text><line x1="8" y1="349.67" x2="10" y2="349.67" stroke="#7a7a7a" stroke-width="0.7"/><line x1="8" y1="352.76" x2="10" y2="352.76" stroke="#7a7a7a" stroke-width="0.7"/><line x1="8" y1="355.85" x2="10" y2="355.85" stroke="#7a7a7a" stroke-width="0.7"/><line x1="8" y1="358.95" x2="10" y2="358.95" stroke="#7a7a7a" stroke-width="0.7"/><line x1="5.5" y1="362.04" x2="10" y2="362.04" stroke="#8a8a8a" stroke-width="0.7"/><line x1="8" y1="365.13" x2="10" y2="365.13" stroke="#7a7a7a" stroke-width="0.7"/><line x1="8" y1="368.23" x2="10" y2="368.23" stroke="#7a7a7a" stroke-width="0.7"/><line x1="8" y1="371.32" x2="10" y2="371.32" stroke="#7a7a7a" stroke-width="0.7"/><line x1="8" y1="374.41" x2="10" y2="374.41" stroke="#7a7a7a" stroke-width="0.7"/><line x1="0" y1="377.51" x2="10" y2="377.51" stroke="#6a6a6a" stroke-width="0.8"/><text transform="translate(1.0,378.21) rotate(90)" x="0" y="0" font-size="6.3" textLength="17.7" lengthAdjust="spacingAndGlyphs" fill="#d0d0d0" stroke="#d0d0d0" stroke-width="0.1">240</text><line x1="8" y1="380.60" x2="10" y2="380.60" stroke="#7a7a7a" stroke-width="0.7"/><line x1="8" y1="383.69" x2="10" y2="383.69" stroke="#7a7a7a" stroke-width="0.7"/><line x1="8" y1="386.79" x2="10" y2="386.79" stroke="#7a7a7a" stroke-width="0.7"/><line x1="8" y1="389.88" x2="10" y2="389.88" stroke="#7a7a7a" stroke-width="0.7"/><line x1="5.5" y1="392.98" x2="10" y2="392.98" stroke="#8a8a8a" stroke-width="0.7"/><line x1="8" y1="396.07" x2="10" y2="396.07" stroke="#7a7a7a" stroke-width="0.7"/><line x1="8" y1="399.16" x2="10" y2="399.16" stroke="#7a7a7a" stroke-width="0.7"/><line x1="8" y1="402.26" x2="10" y2="402.26" stroke="#7a7a7a" stroke-width="0.7"/><line x1="8" y1="405.35" x2="10" y2="405.35" stroke="#7a7a7a" stroke-width="0.7"/><line x1="0" y1="408.44" x2="10" y2="408.44" stroke="#6a6a6a" stroke-width="0.8"/><text transform="translate(1.0,409.14) rotate(90)" x="0" y="0" font-size="6.3" textLength="17.7" lengthAdjust="spacingAndGlyphs" fill="#d0d0d0" stroke="#d0d0d0" stroke-width="0.1">260</text><line x1="8" y1="411.54" x2="10" y2="411.54" stroke="#7a7a7a" stroke-width="0.7"/><line x1="8" y1="414.63" x2="10" y2="414.63" stroke="#7a7a7a" stroke-width="0.7"/><line x1="8" y1="417.72" x2="10" y2="417.72" stroke="#7a7a7a" stroke-width="0.7"/><line x1="8" y1="420.82" x2="10" y2="420.82" stroke="#7a7a7a" stroke-width="0.7"/><line x1="5.5" y1="423.91" x2="10" y2="423.91" stroke="#8a8a8a" stroke-width="0.7"/><line x1="8" y1="427.00" x2="10" y2="427.00" stroke="#7a7a7a" stroke-width="0.7"/><line x1="8" y1="430.10" x2="10" y2="430.10" stroke="#7a7a7a" stroke-width="0.7"/><line x1="8" y1="433.19" x2="10" y2="433.19" stroke="#7a7a7a" stroke-width="0.7"/><line x1="8" y1="436.28" x2="10" y2="436.28" stroke="#7a7a7a" stroke-width="0.7"/><line x1="0" y1="439.38" x2="10" y2="439.38" stroke="#6a6a6a" stroke-width="0.8"/><text transform="translate(1.0,440.08) rotate(90)" x="0" y="0" font-size="6.3" textLength="17.7" lengthAdjust="spacingAndGlyphs" fill="#d0d0d0" stroke="#d0d0d0" stroke-width="0.1">280</text><line x1="8" y1="442.47" x2="10" y2="442.47" stroke="#7a7a7a" stroke-width="0.7"/><line x1="8" y1="445.56" x2="10" y2="445.56" stroke="#7a7a7a" stroke-width="0.7"/><line x1="8" y1="448.66" x2="10" y2="448.66" stroke="#7a7a7a" stroke-width="0.7"/><line x1="8" y1="451.75" x2="10" y2="451.75" stroke="#7a7a7a" stroke-width="0.7"/><line x1="5.5" y1="454.84" x2="10" y2="454.84" stroke="#8a8a8a" stroke-width="0.7"/><line x1="8" y1="457.94" x2="10" y2="457.94" stroke="#7a7a7a" stroke-width="0.7"/><line x1="8" y1="461.03" x2="10" y2="461.03" stroke="#7a7a7a" stroke-width="0.7"/><line x1="8" y1="464.12" x2="10" y2="464.12" stroke="#7a7a7a" stroke-width="0.7"/><line x1="8" y1="467.22" x2="10" y2="467.22" stroke="#7a7a7a" stroke-width="0.7"/><line x1="0" y1="470.31" x2="10" y2="470.31" stroke="#6a6a6a" stroke-width="0.8"/><text transform="translate(1.0,471.01) rotate(90)" x="0" y="0" font-size="6.3" textLength="17.7" lengthAdjust="spacingAndGlyphs" fill="#d0d0d0" stroke="#d0d0d0" stroke-width="0.1">300</text><line x1="8" y1="473.40" x2="10" y2="473.40" stroke="#7a7a7a" stroke-width="0.7"/><line x1="8" y1="476.50" x2="10" y2="476.50" stroke="#7a7a7a" stroke-width="0.7"/><line x1="8" y1="479.59" x2="10" y2="479.59" stroke="#7a7a7a" stroke-width="0.7"/><line x1="8" y1="482.68" x2="10" y2="482.68" stroke="#7a7a7a" stroke-width="0.7"/><line x1="5.5" y1="485.78" x2="10" y2="485.78" stroke="#8a8a8a" stroke-width="0.7"/><line x1="8" y1="488.87" x2="10" y2="488.87" stroke="#7a7a7a" stroke-width="0.7"/><line x1="8" y1="491.96" x2="10" y2="491.96" stroke="#7a7a7a" stroke-width="0.7"/><line x1="8" y1="495.06" x2="10" y2="495.06" stroke="#7a7a7a" stroke-width="0.7"/><line x1="8" y1="498.15" x2="10" y2="498.15" stroke="#7a7a7a" stroke-width="0.7"/><line x1="0" y1="501.24" x2="10" y2="501.24" stroke="#6a6a6a" stroke-width="0.8"/><text transform="translate(1.0,501.94) rotate(90)" x="0" y="0" font-size="6.3" textLength="17.7" lengthAdjust="spacingAndGlyphs" fill="#d0d0d0" stroke="#d0d0d0" stroke-width="0.1">320</text><line x1="8" y1="504.34" x2="10" y2="504.34" stroke="#7a7a7a" stroke-width="0.7"/><line x1="8" y1="507.43" x2="10" y2="507.43" stroke="#7a7a7a" stroke-width="0.7"/><line x1="8" y1="510.52" x2="10" y2="510.52" stroke="#7a7a7a" stroke-width="0.7"/><line x1="8" y1="513.62" x2="10" y2="513.62" stroke="#7a7a7a" stroke-width="0.7"/><line x1="5.5" y1="516.71" x2="10" y2="516.71" stroke="#8a8a8a" stroke-width="0.7"/><line x1="8" y1="519.80" x2="10" y2="519.80" stroke="#7a7a7a" stroke-width="0.7"/><line x1="8" y1="522.90" x2="10" y2="522.90" stroke="#7a7a7a" stroke-width="0.7"/><line x1="8" y1="525.99" x2="10" y2="525.99" stroke="#7a7a7a" stroke-width="0.7"/><line x1="8" y1="529.08" x2="10" y2="529.08" stroke="#7a7a7a" stroke-width="0.7"/><line x1="0" y1="532.18" x2="10" y2="532.18" stroke="#6a6a6a" stroke-width="0.8"/><text transform="translate(1.0,532.88) rotate(90)" x="0" y="0" font-size="6.3" textLength="17.7" lengthAdjust="spacingAndGlyphs" fill="#d0d0d0" stroke="#d0d0d0" stroke-width="0.1">340</text><line x1="8" y1="535.27" x2="10" y2="535.27" stroke="#7a7a7a" stroke-width="0.7"/><line x1="8" y1="538.36" x2="10" y2="538.36" stroke="#7a7a7a" stroke-width="0.7"/><line x1="8" y1="541.46" x2="10" y2="541.46" stroke="#7a7a7a" stroke-width="0.7"/><line x1="8" y1="544.55" x2="10" y2="544.55" stroke="#7a7a7a" stroke-width="0.7"/><line x1="5.5" y1="547.64" x2="10" y2="547.64" stroke="#8a8a8a" stroke-width="0.7"/><line x1="8" y1="550.74" x2="10" y2="550.74" stroke="#7a7a7a" stroke-width="0.7"/><line x1="8" y1="553.83" x2="10" y2="553.83" stroke="#7a7a7a" stroke-width="0.7"/><line x1="8" y1="556.93" x2="10" y2="556.93" stroke="#7a7a7a" stroke-width="0.7"/><line x1="8" y1="560.02" x2="10" y2="560.02" stroke="#7a7a7a" stroke-width="0.7"/><line x1="0" y1="563.11" x2="10" y2="563.11" stroke="#6a6a6a" stroke-width="0.8"/><text transform="translate(1.0,563.81) rotate(90)" x="0" y="0" font-size="6.3" textLength="17.7" lengthAdjust="spacingAndGlyphs" fill="#d0d0d0" stroke="#d0d0d0" stroke-width="0.1">360</text><line x1="8" y1="566.21" x2="10" y2="566.21" stroke="#7a7a7a" stroke-width="0.7"/><line x1="8" y1="569.30" x2="10" y2="569.30" stroke="#7a7a7a" stroke-width="0.7"/><line x1="8" y1="572.39" x2="10" y2="572.39" stroke="#7a7a7a" stroke-width="0.7"/><line x1="8" y1="575.49" x2="10" y2="575.49" stroke="#7a7a7a" stroke-width="0.7"/><line x1="5.5" y1="578.58" x2="10" y2="578.58" stroke="#8a8a8a" stroke-width="0.7"/><line x1="8" y1="581.67" x2="10" y2="581.67" stroke="#7a7a7a" stroke-width="0.7"/><line x1="8" y1="584.77" x2="10" y2="584.77" stroke="#7a7a7a" stroke-width="0.7"/><line x1="8" y1="587.86" x2="10" y2="587.86" stroke="#7a7a7a" stroke-width="0.7"/><line x1="8" y1="590.95" x2="10" y2="590.95" stroke="#7a7a7a" stroke-width="0.7"/><line x1="0" y1="594.05" x2="10" y2="594.05" stroke="#6a6a6a" stroke-width="0.8"/><text transform="translate(1.0,594.75) rotate(90)" x="0" y="0" font-size="6.3" textLength="17.7" lengthAdjust="spacingAndGlyphs" fill="#d0d0d0" stroke="#d0d0d0" stroke-width="0.1">380</text><line x1="8" y1="597.14" x2="10" y2="597.14" stroke="#7a7a7a" stroke-width="0.7"/><line x1="8" y1="600.23" x2="10" y2="600.23" stroke="#7a7a7a" stroke-width="0.7"/><line x1="8" y1="603.33" x2="10" y2="603.33" stroke="#7a7a7a" stroke-width="0.7"/><line x1="8" y1="606.42" x2="10" y2="606.42" stroke="#7a7a7a" stroke-width="0.7"/><line x1="9.7" y1="0" x2="9.7" y2="608" stroke="#5a5a5a" stroke-width="0.6"/></svg><svg class="a" style="left:0;top:0;will-change:transform" width="1440" height="775" viewBox="0 0 1440 775"><circle cx="38.4" cy="30.3" r="3.6" fill="#fe5f57"/><circle cx="49.2" cy="30.3" r="3.6" fill="#febc2e"/><circle cx="60.0" cy="30.3" r="3.6" fill="#28c840"/><path d="M89.8 27.6 L95.6 33 L94 33 L94 38.6 L91.4 38.6 L91.4 35.4 L88.2 35.4 L88.2 38.6 L85.6 38.6 L85.6 33 L84 33 Z" fill="#d2d2d2" /><text x="556.3" y="33.8" font-size="8.6" fill="#dadada" stroke="#dadada" stroke-width="0.22" textLength="85" lengthAdjust="spacingAndGlyphs">Adobe InDesign 2025</text><path d="M1149.5 27.2 C1146.7 27.2 1145.3 29.4 1145.3 31.3 C1145.3 33.3 1147.3 34.4 1147.5 36 L1151.5 36 C1151.7 34.4 1153.7 33.3 1153.7 31.3 C1153.7 29.4 1152.3 27.2 1149.5 27.2 Z" fill="none" stroke="#c8c8c8" stroke-width="0.9" /><rect x="1147.6" y="36.6" width="3.8" height="2.2" fill="#c8c8c8" rx="0.8"/><rect x="1163.9" y="25" width="35" height="15.9" fill="#1a6fe0" rx="7.95"/><text x="1170.6" y="36.4" font-size="9" fill="#ffffff" font-weight="bold" textLength="21.1" lengthAdjust="spacingAndGlyphs">Share</text><line x1="1203.3" y1="26" x2="1203.3" y2="38" stroke="#3e3e3e" stroke-width="1"/><text x="1212" y="35.9" font-size="9.2" fill="#e2e2e2" font-weight="bold" textLength="73" lengthAdjust="spacingAndGlyphs">Essentials Classic</text><path d="M1292.5 31.300000000000004 L1295 34.1 L1297.5 31.300000000000004" fill="none" stroke="#d0d0d0" stroke-width="1" /><line x1="1308.3" y1="26" x2="1308.3" y2="38" stroke="#3e3e3e" stroke-width="1"/><rect x="1312.8" y="26.6" width="86.5" height="12.7" fill="#3e3e3e" rx="2" stroke="#5e5e5e" stroke-width="0.9"/><circle cx="1319.8" cy="31.6" r="2.6" fill="none" stroke="#2d7fe8" stroke-width="1.1"/><line x1="1318" y1="33.6" x2="1315.6" y2="35.8" stroke="#2d7fe8" stroke-width="1.3"/><path d="M1323.8 33.6 L1326.2 33.6 L1325 35 Z" fill="#2d7fe8" /><text x="1329.2" y="35" font-size="7.3" fill="#6c6c6c" stroke="#6c6c6c" stroke-width="0.22" textLength="40.4" lengthAdjust="spacingAndGlyphs">Adobe Stock</text><rect x="33.3" y="59.5" width="1.2" height="1" fill="#2e2e2e"/><rect x="33.3" y="61.5" width="1.2" height="1" fill="#2e2e2e"/><rect x="33.3" y="63.5" width="1.2" height="1" fill="#2e2e2e"/><rect x="33.3" y="65.5" width="1.2" height="1" fill="#2e2e2e"/><rect x="33.3" y="67.5" width="1.2" height="1" fill="#2e2e2e"/><rect x="33.3" y="69.5" width="1.2" height="1" fill="#2e2e2e"/><rect x="45.3" y="52.8" width="9.2" height="9.6" fill="none" stroke="#c4c4c4" stroke-width="0.9"/><path d="M47 57.6 L52.4 57.6 M50.6 55.8 L52.6 57.6 L50.6 59.4" fill="none" stroke="#c4c4c4" stroke-width="1.1" /><rect x="45.3" y="70.3" width="9.2" height="9.6" fill="none" stroke="#c4c4c4" stroke-width="0.9"/><path d="M49.9 71.6 L49.9 77.4 M48.1 75.6 L49.9 77.6 L51.7 75.6" fill="none" stroke="#c4c4c4" stroke-width="1.1" /><rect x="58.3" y="50" width="58.5" height="14" fill="#575757" rx="2"/><path d="M61.3 55.4 L63.8 53 L66.3 55.4 M61.3 58.6 L63.8 61 L66.3 58.6" fill="none" stroke="#b8b8b8" stroke-width="0.8" /><path d="M108.0 55.8 L110.3 58.2 L112.6 55.8" fill="none" stroke="#c8c8c8" stroke-width="0.9" /><rect x="58.3" y="67.5" width="58.5" height="14" fill="#575757" rx="2"/><path d="M61.3 72.9 L63.8 70.5 L66.3 72.9 M61.3 76.1 L63.8 78.5 L66.3 76.1" fill="none" stroke="#b8b8b8" stroke-width="0.8" /><path d="M108.0 73.3 L110.3 75.7 L112.6 73.3" fill="none" stroke="#c8c8c8" stroke-width="0.9" /><rect x="121.2" y="58" width="13.9" height="14.5" fill="#2b2b2b" rx="1.5"/><rect x="126.4" y="60.2" width="3.6" height="5.6" fill="none" rx="1.8" stroke="#d0d0d0" stroke-width="0.9"/><rect x="126.4" y="64.6" width="3.6" height="5.6" fill="none" rx="1.8" stroke="#d0d0d0" stroke-width="0.9"/><path d="M142.5 59.8 L149.8 59.8 L147.6 53.5 Z" fill="none" stroke="#c4c4c4" stroke-width="0.9" /><path d="M144.8 59.8 Q144.6 57.6 146.3 56.8" fill="none" stroke="#c4c4c4" stroke-width="0.7" /><path d="M142.6 78 L145.6 70.8 L150.6 70.8 L147.6 78 Z" fill="#c4c4c4" /><rect x="154.1" y="50" width="58" height="14" fill="#575757" rx="2"/><path d="M157.1 55.4 L159.6 53 L162.1 55.4 M157.1 58.6 L159.6 61 L162.1 58.6" fill="none" stroke="#b8b8b8" stroke-width="0.8" /><path d="M203.5 55.8 L205.8 58.2 L208.10000000000002 55.8" fill="none" stroke="#c8c8c8" stroke-width="0.9" /><rect x="154.1" y="67.5" width="58" height="14" fill="#575757" rx="2"/><path d="M157.1 72.9 L159.6 70.5 L162.1 72.9 M157.1 76.1 L159.6 78.5 L162.1 76.1" fill="none" stroke="#b8b8b8" stroke-width="0.8" /><path d="M203.5 73.3 L205.8 75.7 L208.10000000000002 73.3" fill="none" stroke="#c8c8c8" stroke-width="0.9" /><path d="M231.8 55 A5 5 0 1 0 232.6 58" fill="none" stroke="#7a7a7a" stroke-width="0.9" /><path d="M229.4 54.4 L232.2 54.6 L232.2 51.8" fill="none" stroke="#7a7a7a" stroke-width="0.9" /><path d="M242.2 55 A5 5 0 1 1 241.4 58" fill="none" stroke="#7a7a7a" stroke-width="0.9" /><path d="M244.6 54.4 L241.8 54.6 L241.8 51.8" fill="none" stroke="#7a7a7a" stroke-width="0.9" /><path d="M221.9 69.6 L226.2 73.8 L221.9 78 Z" fill="none" stroke="#7a7a7a" stroke-width="0.8" /><path d="M233.1 69.6 L228.8 73.8 L233.1 78 Z" fill="#7a7a7a" /><line x1="227.5" y1="68.2" x2="227.5" y2="79.6" stroke="#7a7a7a" stroke-width="0.6"/><path d="M241.6 68.6 L250.4 68.6 L246 72.6 Z" fill="none" stroke="#7a7a7a" stroke-width="0.8" /><path d="M241.6 79.4 L250.4 79.4 L246 75.4 Z" fill="#7a7a7a" /><line x1="240.4" y1="74" x2="251.6" y2="74" stroke="#7a7a7a" stroke-width="0.6"/><rect x="258.8" y="55.9" width="18.1" height="18.7" fill="#525252"/><path d="M259.8 59.4 L259.8 57 L262.2 57 M273.5 57 L275.9 57 L275.9 59.4 M259.8 71.1 L259.8 73.5 L262.2 73.5 M273.5 73.5 L275.9 73.5 L275.9 71.1" fill="none" stroke="#6c6c6c" stroke-width="0.7" /><text x="263.3" y="70.2" font-size="12" style="font-family:Liberation Serif" fill="#8a8a8a">P</text><line x1="281.5" y1="50" x2="281.5" y2="81" stroke="#404040" stroke-width="0.9"/><path d="M290 54.2 L292.6 51.4 L295.2 54.2 Z" fill="#808080" /><rect x="292.0" y="55.6" width="1.2" height="6.6" fill="#808080"/><path d="M288.40000000000003 62.2 Q288.6 58.57 290.6 58.24 L290.6 62.2 Z" fill="#808080" /><path d="M296.8 62.2 Q296.6 58.57 294.6 58.24 L294.6 62.2 Z" fill="#808080" /><path d="M305 57.2 L307.6 55 L307.6 59.4 Z" fill="#a2a2a2" /><rect x="312.0" y="53.0" width="1.2" height="7.4" fill="#a2a2a2"/><path d="M308.40000000000003 60.4 Q308.6 56.33 310.6 55.96 L310.6 60.4 Z" fill="#a2a2a2" /><path d="M316.8 60.4 Q316.6 56.33 314.6 55.96 L314.6 60.4 Z" fill="#a2a2a2" /><rect x="292.0" y="69.39999999999999" width="1.2" height="6.4" fill="#808080"/><path d="M288.40000000000003 75.8 Q288.6 72.28 290.6 71.96 L290.6 75.8 Z" fill="#808080" /><path d="M296.8 75.8 Q296.6 72.28 294.6 71.96 L294.6 75.8 Z" fill="#808080" /><path d="M290 77 L292.6 79.8 L295.2 77 Z" fill="#808080" /><rect x="309.2" y="71.39999999999999" width="1.2" height="7.2" fill="#a2a2a2"/><path d="M305.6 78.6 Q305.8 74.64 307.8 74.28 L307.8 78.6 Z" fill="#a2a2a2" /><path d="M314.0 78.6 Q313.8 74.64 311.8 74.28 L311.8 78.6 Z" fill="#a2a2a2" /><path d="M316 72.6 L318.6 75 L316 77.4 Z" fill="#a2a2a2" /><rect x="328.8" y="52" width="10" height="10" fill="#f4f4f4" stroke="#3a3a3a" stroke-width="0.5"/><line x1="329.3" y1="61.5" x2="338.3" y2="52.5" stroke="#ee1c24" stroke-width="1.4"/><rect x="328.8" y="70" width="10" height="9.2" fill="#f4f4f4" stroke="#3a3a3a" stroke-width="0.5"/><line x1="329.3" y1="78.7" x2="338.3" y2="70.5" stroke="#ee1c24" stroke-width="1.4"/><rect x="343" y="50" width="10.8" height="13.4" fill="#3d3d3d" rx="1.5" stroke="#575757" stroke-width="0.8"/><path d="M347.2 54.6 L349.6 56.7 L347.2 58.8" fill="none" stroke="#d4d4d4" stroke-width="0.9" /><rect x="343" y="67.7" width="10.8" height="13.4" fill="#3d3d3d" rx="1.5" stroke="#575757" stroke-width="0.8"/><path d="M347.2 72.3 L349.6 74.4 L347.2 76.5" fill="none" stroke="#d4d4d4" stroke-width="0.9" /><rect x="362.5" y="50.2" width="57.5" height="13.2" fill="#3c3c3c" rx="1.5" stroke="#585858" stroke-width="0.8"/><line x1="373.6" y1="50.6" x2="373.6" y2="63" stroke="#585858" stroke-width="0.8"/><line x1="408.6" y1="50.6" x2="408.6" y2="63" stroke="#585858" stroke-width="0.8"/><path d="M365.5 55.199999999999996 L368 52.8 L370.5 55.199999999999996 M365.5 58.4 L368 60.8 L370.5 58.4" fill="none" stroke="#c8c8c8" stroke-width="0.8" /><path d="M411.9 55.599999999999994 L414.2 58.0 L416.5 55.599999999999994" fill="none" stroke="#d0d0d0" stroke-width="0.9" /><text x="376" y="60.3" font-size="7.6" fill="#e0e0e0" stroke="#e0e0e0" stroke-width="0.22" textLength="12.7" lengthAdjust="spacingAndGlyphs">0 pt</text><rect x="362.5" y="68.4" width="57.5" height="12.5" fill="#3c3c3c" rx="1.5" stroke="#585858" stroke-width="0.8"/><rect x="362.5" y="68.4" width="45.8" height="12.5" fill="#e8e8e8"/><rect x="365" y="72.2" width="37.5" height="4.4" fill="#050505"/><path d="M411.9 73.39999999999999 L414.2 75.8 L416.5 73.39999999999999" fill="none" stroke="#d0d0d0" stroke-width="0.9" /><line x1="424.4" y1="50" x2="424.4" y2="81" stroke="#404040" stroke-width="0.9"/><rect x="428.8" y="49.3" width="14.3" height="14.5" fill="#2e2e2e" rx="1.5"/><path d="M431.5 52.5 L440.5 52.5 M431.5 54.5 L440.5 54.5 M431.5 60.5 L440.5 60.5 M431.5 62 L440.5 62" fill="none" stroke="#c4c4c4" stroke-width="0.7" /><rect x="433.8" y="55.6" width="4.4" height="4" fill="#bdbdbd"/><path d="M449.5 52.5 L458 52.5 M449.5 62 L458 62 M449.5 54 L449.5 61 M458 54 L458 61" fill="none" stroke="#7a7a7a" stroke-width="0.7" /><rect x="452.2" y="54.2" width="3.2" height="6" fill="none" stroke="#909090" stroke-width="0.8"/><circle cx="436" cy="74.2" r="2.7" fill="#9a9a9a"/><path d="M430.8 70 L441.2 70 M430.8 72 L432.6 72 M439.4 72 L441.2 72 M430.8 76.5 L432.6 76.5 M439.4 76.5 L441.2 76.5 M430.8 78.6 L441.2 78.6" fill="none" stroke="#7a7a7a" stroke-width="0.7" /><path d="M449.2 70 L458.6 70 M449.2 76.2 L458.6 76.2 M449.2 78.4 L458.6 78.4" fill="none" stroke="#7a7a7a" stroke-width="0.7" /><rect x="451.6" y="71.4" width="4.6" height="2.8" fill="#9a9a9a"/><rect x="472" y="54.2" width="6.6" height="6.6" fill="none" stroke="#909090" stroke-width="0.6"/><circle cx="472" cy="54.2" r="1.4" fill="#1e88f0"/><circle cx="478.6" cy="54.2" r="1.4" fill="#1e88f0"/><circle cx="472" cy="60.8" r="1.4" fill="#1e88f0"/><circle cx="478.6" cy="60.8" r="1.4" fill="#1e88f0"/><rect x="484.4" y="50.2" width="57.9" height="13.2" fill="#3c3c3c" rx="1.5" stroke="#585858" stroke-width="0.8"/><line x1="495.2" y1="50.6" x2="495.2" y2="63" stroke="#585858" stroke-width="0.8"/><path d="M487.3 55.199999999999996 L489.8 52.8 L492.3 55.199999999999996 M487.3 58.4 L489.8 60.8 L492.3 58.4" fill="none" stroke="#c8c8c8" stroke-width="0.8" /><text x="498.8" y="60.3" font-size="7.6" fill="#e0e0e0" stroke="#e0e0e0" stroke-width="0.22" textLength="33.1" lengthAdjust="spacingAndGlyphs">4.233 mm</text><rect x="484" y="68.4" width="58.3" height="12.5" fill="#3c3c3c" rx="1.5" stroke="#585858" stroke-width="0.8"/><rect x="484" y="68.4" width="46" height="12.5" fill="#e4e4e4"/><path d="M487.5 70.4 L525 70.4 L525 79.6" fill="none" stroke="#202020" stroke-width="0.8" /><path d="M533.9000000000001 73.39999999999999 L536.2 75.8 L538.5 73.39999999999999" fill="none" stroke="#d0d0d0" stroke-width="0.9" /><line x1="546.9" y1="50" x2="546.9" y2="81" stroke="#404040" stroke-width="0.9"/><rect x="555.2" y="52.8" width="7.5" height="7.5" fill="none" stroke="#8c8c8c" stroke-width="1"/><rect x="557.2" y="54.8" width="3.5" height="3.5" fill="#8c8c8c"/><circle cx="564" cy="60.5" r="0.5" fill="#8c8c8c"/><rect x="575" y="50.2" width="120" height="13.2" fill="#3c3c3c" rx="1.5" stroke="#585858" stroke-width="0.8"/><rect x="575" y="50.2" width="108.2" height="13.2" fill="#e6e6e6"/><path d="M687.1 55.599999999999994 L689.4 58.0 L691.6999999999999 55.599999999999994" fill="none" stroke="#d0d0d0" stroke-width="0.9" /><text x="579.4" y="60.3" font-size="7.6" fill="#1e1e1e" stroke="#1e1e1e" stroke-width="0.22" textLength="77.5" lengthAdjust="spacingAndGlyphs">[Basic Graphics Frame]+</text><rect x="662.2" y="69.8" width="5.5" height="5.5" fill="#9a9a9a"/><rect x="664.2" y="71.8" width="5.5" height="5.5" fill="#2a2a2a" stroke="#9a9a9a" stroke-width="0.6"/><path d="M670.5 76.5 Q674.6 77 674.6 73.6 M672.6 73.2 L674.6 72.4" fill="none" stroke="#7c7c7c" stroke-width="0.7" /><rect x="681.8" y="70.4" width="7" height="7" fill="none" stroke="#9a9a9a" stroke-width="0.8"/><path d="M689.6 76.6 L692.8 71.6" fill="none" stroke="#9a9a9a" stroke-width="1" /><path d="M1381.6 59.6 L1377 65.8 L1379.8 65.8 L1377.6 70.6 L1382.4 64.2 L1379.6 64.2 Z" fill="#cccccc" /><line x1="1390.2" y1="50.5" x2="1390.2" y2="81" stroke="#404040" stroke-width="0.9"/><circle cx="1400.4" cy="57" r="2.6" fill="none" stroke="#d0d0d0" stroke-width="1.8"/><line x1="1403.0" y1="57.0" x2="1404.3000000000002" y2="57.0" stroke="#d0d0d0" stroke-width="1.2"/><line x1="1402.238477631085" y1="58.83847763108503" x2="1403.1577164466275" y2="59.75771644662753" stroke="#d0d0d0" stroke-width="1.2"/><line x1="1400.4" y1="59.6" x2="1400.4" y2="60.9" stroke="#d0d0d0" stroke-width="1.2"/><line x1="1398.5615223689151" y1="58.83847763108503" x2="1397.6422835533726" y2="59.75771644662753" stroke="#d0d0d0" stroke-width="1.2"/><line x1="1397.8000000000002" y1="57.0" x2="1396.5" y2="57.0" stroke="#d0d0d0" stroke-width="1.2"/><line x1="1398.5615223689151" y1="55.16152236891497" x2="1397.6422835533726" y2="54.24228355337247" stroke="#d0d0d0" stroke-width="1.2"/><line x1="1400.4" y1="54.4" x2="1400.4" y2="53.1" stroke="#d0d0d0" stroke-width="1.2"/><line x1="1402.238477631085" y1="55.16152236891497" x2="1403.1577164466275" y2="54.24228355337247" stroke="#d0d0d0" stroke-width="1.2"/><path d="M1396.2 72.2 L1404.6 72.2 M1396.2 74.4 L1404.6 74.4 M1396.2 76.6 L1404.6 76.6" fill="none" stroke="#c8c8c8" stroke-width="0.9" /><path d="M34.8 89.3 L36.8 87.9 L36.8 90.7 Z M37.6 89.3 L39.6 87.9 L39.6 90.7 Z" fill="#8c8c8c" /><path d="M83.7 89.3 L85.7 87.9 L85.7 90.7 Z M86.5 89.3 L88.5 87.9 L88.5 90.7 Z" fill="#8c8c8c" /><path d="M1402.6 89.3 L1400.6 87.9 L1400.6 90.7 Z M1399.8 89.3 L1397.8 87.9 L1397.8 90.7 Z" fill="#8c8c8c" /><rect x="47.6" y="96.6" width="1.2" height="1.8" fill="#2a2a2a"/><rect x="49.550000000000004" y="96.6" width="1.2" height="1.8" fill="#2a2a2a"/><rect x="51.5" y="96.6" width="1.2" height="1.8" fill="#2a2a2a"/><rect x="53.45" y="96.6" width="1.2" height="1.8" fill="#2a2a2a"/><rect x="55.4" y="96.6" width="1.2" height="1.8" fill="#2a2a2a"/><rect x="57.35" y="96.6" width="1.2" height="1.8" fill="#2a2a2a"/><rect x="59.3" y="96.6" width="1.2" height="1.8" fill="#2a2a2a"/><rect x="35.3" y="104.2" width="18.4" height="14.5" fill="#303030" rx="1.5"/><path d="M41.2 106.8 L48.6 112.4 L44.8 112.8 L41.8 116.8 Z" fill="none" stroke="#d2d2d2" stroke-width="0.9" /><path d="M61.4 106.8 L69 112.4 L65.2 112.8 L62 116.8 Z" fill="#9a9a9a" /><path d="M40.2 123 L45.6 123 L48 125.6 L48 130 M40.2 123 L40.2 132 L45 132 M45.6 123 L45.6 125.6 L48 125.6" fill="none" stroke="#d2d2d2" stroke-width="0.8" /><path d="M46 127.6 L50.2 130.6 L46 133 Z" fill="#d2d2d2" /><path d="M58.8 123.2 L58.8 132 M70 123.2 L70 132" fill="none" stroke="#d2d2d2" stroke-width="1.2" /><path d="M61 127.6 L67.8 127.6 M62.6 126 L61 127.6 L62.6 129.2 M66.2 126 L67.8 127.6 L66.2 129.2" fill="none" stroke="#d2d2d2" stroke-width="0.8" /><path d="M39.6 143.2 L39.6 148.8 L48.6 148.8 L48.6 143.2 M42 148.8 L42 145.4 M44 148.8 L44 146 M46.2 148.8 L46.2 145.4" fill="none" stroke="#d2d2d2" stroke-width="1" /><path d="M41.2 138.8 L44.6 142.4 M44.6 139.6 L44.6 142.4 L41.8 142.4" fill="none" stroke="#d2d2d2" stroke-width="0.9" /><path d="M59.8 143.2 L59.8 148.8 L68.8 148.8 L68.8 143.2 M62 148.8 L62 145.4 M64.2 148.8 L64.2 145.4 M66.4 148.8 L66.4 145.4" fill="none" stroke="#d2d2d2" stroke-width="1" /><path d="M64.2 142.4 L67.6 138.8 M65 138.8 L67.6 138.8 L67.6 141.4" fill="none" stroke="#d2d2d2" stroke-width="0.9" /><path d="M39.6 158.2 L48.6 158.2 L48.6 160.6 M39.6 158.2 L39.6 160.6 M44.1 158.2 L44.1 166.6 M42.2 166.6 L46 166.6" fill="none" stroke="#d2d2d2" stroke-width="1.2" /><path d="M50.8 168.4 L53.6 165.4 L53.6 168.4 Z" fill="#d2d2d2" /><line x1="59.8" y1="166.8" x2="68.8" y2="157.8" stroke="#d2d2d2" stroke-width="1"/><path d="M41.2 183.6 L42.4 178.4 L46.4 174.6 L49.6 177.8 L45.8 181.8 Z" fill="none" stroke="#d2d2d2" stroke-width="1.1" /><path d="M46.4 174.6 L48 173 L51.2 176.2 L49.6 177.8" fill="#d2d2d2" stroke="#d2d2d2" stroke-width="0.8" /><path d="M41.6 183.2 L44.6 180.2" fill="none" stroke="#d2d2d2" stroke-width="0.7" /><path d="M36.8 175 L40.6 175 M38.7 173.1 L38.7 176.9" fill="none" stroke="#d2d2d2" stroke-width="1.1" /><path d="M50.4 185 L53.4 182 L53.4 185 Z" fill="#d2d2d2" /><path d="M59.6 183 L60.4 179.8 L67 173.2 L69.4 175.6 L62.8 182.2 Z" fill="#d2d2d2" /><path d="M70.2 185 L73.2 182 L73.2 185 Z" fill="#d2d2d2" /><rect x="39" y="189.6" width="10.8" height="9.6" fill="none" stroke="#d2d2d2" stroke-width="0.9"/><path d="M39 189.6 L49.8 199.2 M49.8 189.6 L39 199.2" fill="none" stroke="#d2d2d2" stroke-width="0.8" /><path d="M50.4 201.8 L53.4 198.8 L53.4 201.8 Z" fill="#d2d2d2" /><rect x="59.2" y="189.6" width="10.8" height="9.6" fill="#686868" stroke="#d2d2d2" stroke-width="0.9"/><path d="M70.2 201.8 L73.2 198.8 L73.2 201.8 Z" fill="#d2d2d2" /><circle cx="48" cy="209.2" r="1.7" fill="none" stroke="#d2d2d2" stroke-width="0.9"/><circle cx="48" cy="216" r="1.7" fill="none" stroke="#d2d2d2" stroke-width="0.9"/><path d="M46.5 210.2 L39.2 215.6 M46.5 215 L39.2 209.6" fill="none" stroke="#d2d2d2" stroke-width="1" /><rect x="58.4" y="211.6" width="6" height="6" fill="none" stroke="#d2d2d2" stroke-width="0.9"/><rect x="62.6" y="207.2" width="7.6" height="7" fill="none" stroke="#d2d2d2" stroke-width="0.9"/><path d="M65 212.4 L68.2 209.2 M66 209.2 L68.2 209.2 L68.2 211.4" fill="none" stroke="#d2d2d2" stroke-width="0.7" /><path d="M70.2 219.4 L73.2 216.4 L73.2 219.4 Z" fill="#d2d2d2" /><defs><linearGradient id="gsw" x1="0" x2="1"><stop offset="0" stop-color="#111"/><stop offset="1" stop-color="#eee"/></linearGradient><linearGradient id="gsw2" x1="0" x2="1"><stop offset="0" stop-color="#eee"/><stop offset="1" stop-color="#222"/></linearGradient></defs><rect x="39.2" y="223.8" width="10.4" height="10.2" fill="url(#gsw)" stroke="#9a9a9a" stroke-width="0.6"/><rect x="59.4" y="223.8" width="10.4" height="10.2" fill="#555" stroke="#d2d2d2" stroke-width="0.8"/><rect x="59.8" y="224.2" width="2.3" height="2.3" fill="#aaaaaa"/><rect x="59.8" y="229.2" width="2.3" height="2.3" fill="#aaaaaa"/><rect x="62.3" y="226.7" width="2.3" height="2.3" fill="#aaaaaa"/><rect x="62.3" y="231.7" width="2.3" height="2.3" fill="#aaaaaa"/><rect x="64.8" y="224.2" width="2.3" height="2.3" fill="#aaaaaa"/><rect x="64.8" y="229.2" width="2.3" height="2.3" fill="#aaaaaa"/><rect x="67.3" y="226.7" width="2.3" height="2.3" fill="#aaaaaa"/><rect x="67.3" y="231.7" width="2.3" height="2.3" fill="#aaaaaa"/><rect x="39.6" y="242.4" width="9.6" height="9.8" fill="#8c8c8c" rx="1"/><path d="M41.4 245 L47.4 245 M41.4 247 L47.4 247 M41.4 249 L45.4 249" fill="none" stroke="#4a4a4a" stroke-width="0.6" /><path d="M60 252 L66.6 245.4 M64.6 243.4 L69 247.8 M67.4 242.6 Q69 240.8 70.4 242.2 Q71.8 243.6 70 245.2" fill="none" stroke="#d2d2d2" stroke-width="1" /><path d="M70.2 253.4 L73.2 250.4 L73.2 253.4 Z" fill="#d2d2d2" /><path d="M41.4 262.8 L41.4 259.6 Q41.4 258.4 42.4 258.6 L42.8 262 L43 257.6 Q43.4 256.6 44.2 257.6 L44.4 261.6 L44.8 257.8 Q45.4 257 46 257.8 L46 262 L46.6 259.4 Q47.4 258.6 48 259.4 L47.4 264.6 Q46.6 268.4 43.8 268.4 Q41.8 268.2 40.8 266 L39.4 263.4 Q39.2 262.2 40.4 262.4 Z" fill="#d2d2d2" /><circle cx="63.4" cy="261.2" r="3.6" fill="none" stroke="#d2d2d2" stroke-width="1"/><line x1="66" y1="263.8" x2="69.8" y2="267.8" stroke="#d2d2d2" stroke-width="1.3"/><rect x="49.6" y="287.6" width="22.7" height="22.8" fill="#f4f4f4"/><rect x="55.4" y="293.4" width="11.1" height="11.2" fill="#4a4a4a"/><line x1="50.4" y1="309.8" x2="71.8" y2="288.2" stroke="#ee1c24" stroke-width="1.6"/><rect x="37.2" y="274.6" width="23.8" height="23.4" fill="#f6f6f6" stroke="#dcdcdc" stroke-width="0.4"/><line x1="37.8" y1="297.4" x2="60.6" y2="275.2" stroke="#ee1c24" stroke-width="1.6"/><path d="M68 276.6 Q72 276.4 72.4 281.4 M66.6 277.6 L68.2 276.4 L67.2 278.4 M71 279.8 L72.4 281.6 L73.6 279.8" fill="none" stroke="#d2d2d2" stroke-width="0.8" /><rect x="39.2" y="305" width="4.6" height="4.6" fill="#f0f0f0" stroke="#333" stroke-width="0.5"/><rect x="37.2" y="303" width="4.6" height="4.6" fill="#111" stroke="#ddd" stroke-width="0.5"/><rect x="40.7" y="317.2" width="11.6" height="10.3" fill="#2e2e2e" rx="1"/><rect x="43.2" y="319.6" width="6.6" height="5.6" fill="#8a8a8a"/><path d="M58.2 318.4 L65 318.4 M58.2 318.4 L58.2 319.8 M65 318.4 L65 319.8 M61.6 318.4 L61.6 326.8 M60.2 326.8 L63 326.8" fill="none" stroke="#bbbbbb" stroke-width="1.3" /><rect x="36.6" y="334" width="7.5" height="7.5" fill="#1c1c1c" stroke="#777" stroke-width="0.5"/><defs><linearGradient id="gsw3" x1="0" x2="1"><stop offset="0" stop-color="#333"/><stop offset="0.5" stop-color="#eee"/><stop offset="1" stop-color="#333"/></linearGradient></defs><rect x="50.4" y="334" width="7.6" height="7.5" fill="url(#gsw3)"/><rect x="62.4" y="332" width="11.2" height="11.2" fill="#2e2e2e" rx="1"/><rect x="64.2" y="333.8" width="7.6" height="7.6" fill="#f0f0f0"/><line x1="64.4" y1="341.2" x2="71.6" y2="334" stroke="#ee1c24" stroke-width="1.2"/><path d="M71.6 343.2 L73.6 341.2 L73.6 343.2 Z" fill="#ddd" /><rect x="40.4" y="352.6" width="8.2" height="6.4" fill="#bdbdbd"/><path d="M41 351.6 L48 351.6" fill="none" stroke="#9a9a9a" stroke-width="0.5" /><rect x="35.2" y="368.8" width="18.1" height="14.4" fill="#303030" rx="1.5"/><rect x="39.6" y="372" width="9.4" height="8" fill="#8a8a8a" stroke="#aaa" stroke-width="0.5"/><rect x="41.6" y="374" width="5.4" height="4" fill="#555"/><rect x="60.8" y="372.2" width="8.2" height="7.8" fill="none" stroke="#a8a8a8" stroke-width="0.8"/><line x1="60.8" y1="374.2" x2="69" y2="374.2" stroke="#a8a8a8" stroke-width="0.8"/><path d="M70.4 384 L72.8 381.6 L72.8 384 Z" fill="#bbb" /><rect x="80.5" y="94" width="41.5" height="18" fill="#4a4a4a"/><line x1="162.5" y1="95" x2="162.5" y2="112" stroke="#3a3a3a" stroke-width="0.9"/><line x1="198.6" y1="95" x2="198.6" y2="112" stroke="#3a3a3a" stroke-width="0.9"/><path d="M86.2 101.5 L87.2 100.5 L88.2 101.5 M86.2 103.5 L87.2 104.5 L88.2 103.5" fill="none" stroke="#8a8a8a" stroke-width="0.5" /><text x="92.5" y="106.5" font-size="8.2" fill="#f0f0f0" font-weight="bold" textLength="21.9" lengthAdjust="spacingAndGlyphs">Pages</text><text x="129.9" y="106.5" font-size="8.2" fill="#cfcfcf" stroke="#cfcfcf" stroke-width="0.22" textLength="24.5" lengthAdjust="spacingAndGlyphs">Layers</text><text x="171.2" y="106.5" font-size="8.2" fill="#cfcfcf" stroke="#cfcfcf" stroke-width="0.22" textLength="20.1" lengthAdjust="spacingAndGlyphs">Links</text><rect x="231.2" y="101" width="7" height="5.4" fill="#707070"/><line x1="231.2" y1="102.7" x2="238.2" y2="102.7" stroke="#4a4a4a" stroke-width="0.5"/><line x1="231.2" y1="104.6" x2="238.2" y2="104.6" stroke="#4a4a4a" stroke-width="0.5"/><rect x="82" y="113" width="129" height="15" fill="#555555"/><text x="82.6" y="123.9" font-size="8" fill="#e0e0e0" stroke="#e0e0e0" stroke-width="0.22" textLength="21.5" lengthAdjust="spacingAndGlyphs">[None]</text><rect x="215.4" y="114.5" width="12.3" height="16.1" fill="#ffffff"/><rect x="82" y="133.8" width="116.6" height="14.2" fill="#555555"/><text x="82.6" y="143.7" font-size="8" fill="#e0e0e0" stroke="#e0e0e0" stroke-width="0.22" textLength="29" lengthAdjust="spacingAndGlyphs">A-Parent</text><rect x="203" y="133.8" width="12" height="16.2" fill="#ffffff"/><rect x="216" y="133.8" width="12" height="16.2" fill="#ffffff"/><line x1="215.5" y1="133.8" x2="215.5" y2="150" stroke="#cfcfcf" stroke-width="1"/><rect x="80.5" y="153.6" width="162" height="1.8" fill="#5a5a5a"/><rect x="233.6" y="155.4" width="9" height="562" fill="#4a4a4a"/><rect x="234.4" y="157.7" width="6.6" height="380.5" fill="#5a5a5a" rx="3.3"/><line x1="156.3" y1="157.6" x2="156.3" y2="189.6" stroke="#8c8c8c" stroke-width="0.7"/><clipPath id="th0"><rect x="156.2" y="161.6" width="18.3" height="24.5"/></clipPath><g clip-path="url(#th0)"><rect x="156.2" y="161.6" width="18.3" height="24.5" fill="#101018"/><path d="M156.2 166.6 L174.5 160.6" fill="none" stroke="#b030d8" stroke-width="0.9" /><path d="M156.2 167.6 L174.5 161.6" fill="none" stroke="#5a40d0" stroke-width="0.6" opacity="0.7"/><path d="M156.2 170.79999999999998 L174.5 164.79999999999998" fill="none" stroke="#b030d8" stroke-width="0.9" /><path d="M156.2 171.79999999999998 L174.5 165.79999999999998" fill="none" stroke="#5a40d0" stroke-width="0.6" opacity="0.7"/><path d="M156.2 175.0 L174.5 169.0" fill="none" stroke="#b030d8" stroke-width="0.9" /><path d="M156.2 176.0 L174.5 170.0" fill="none" stroke="#5a40d0" stroke-width="0.6" opacity="0.7"/><path d="M156.2 179.2 L174.5 173.2" fill="none" stroke="#b030d8" stroke-width="0.9" /><path d="M156.2 180.2 L174.5 174.2" fill="none" stroke="#5a40d0" stroke-width="0.6" opacity="0.7"/><path d="M156.2 183.4 L174.5 177.4" fill="none" stroke="#b030d8" stroke-width="0.9" /><path d="M156.2 184.4 L174.5 178.4" fill="none" stroke="#5a40d0" stroke-width="0.6" opacity="0.7"/><path d="M156.2 187.6 L174.5 181.6" fill="none" stroke="#b030d8" stroke-width="0.9" /><path d="M156.2 188.6 L174.5 182.6" fill="none" stroke="#5a40d0" stroke-width="0.6" opacity="0.7"/><rect x="158.5744088581973" y="171.38093059705145" width="1.2" height="2.5" fill="#ff40e0" opacity="0.8"/><rect x="168.76377603224205" y="176.7685343790816" width="1.2" height="2.5" fill="#ff40e0" opacity="0.8"/><rect x="168.13093126044205" y="170.92056035025118" width="1.2" height="2.5" fill="#ff40e0" opacity="0.8"/><rect x="169.24033345127486" y="173.05738041481527" width="1.2" height="2.5" fill="#ff40e0" opacity="0.8"/><rect x="157.50650545960957" y="171.4028364454467" width="1.2" height="2.5" fill="#ff40e0" opacity="0.8"/><rect x="156.98056651829705" y="181.65869160161358" width="1.2" height="2.5" fill="#ff40e0" opacity="0.8"/><rect x="171.63737149784797" y="168.81004168271022" width="1.2" height="2.5" fill="#ff40e0" opacity="0.8"/><rect x="161.24331664498254" y="178.11239019801923" width="1.2" height="2.5" fill="#ff40e0" opacity="0.8"/><rect x="159.52307331906275" y="165.43690640351082" width="1.2" height="2.5" fill="#ff40e0" opacity="0.8"/><rect x="159.2740971010441" y="169.06059575271857" width="1.2" height="2.5" fill="#ff40e0" opacity="0.8"/></g><rect x="156.2" y="161.6" width="18.3" height="24.5" fill="none" stroke="#2a2a2a" stroke-width="0.4"/><line x1="156.3" y1="161.6" x2="156.3" y2="186.1" stroke="#9a9a9a" stroke-width="0.6"/><rect x="169.1" y="161.9" width="5.2" height="6.2" fill="#ffffff"/><text x="169.6" y="167.5" font-size="6.6" fill="#000" font-weight="bold" textLength="4.2" lengthAdjust="spacingAndGlyphs">A</text><rect x="145" y="189.6" width="39" height="9.7" fill="#555555"/><text x="162.7" y="197.79999999999998" font-size="8.2" fill="#f0f0f0" font-weight="bold" textLength="3.6" lengthAdjust="spacingAndGlyphs">1</text><line x1="156.3" y1="200.64" x2="156.3" y2="232.64" stroke="#8c8c8c" stroke-width="0.7"/><clipPath id="th1"><rect x="138.0" y="204.64" width="36.6" height="24.5"/></clipPath><g clip-path="url(#th1)"><rect x="138.0" y="204.64" width="18.3" height="24.5" fill="#ffffff"/><rect x="141.5" y="209.64" width="5.5" height="0.9" fill="#222"/><rect x="141.5" y="211.23999999999998" width="5.5" height="0.9" fill="#222"/><rect x="141.5" y="212.83999999999997" width="5.5" height="0.9" fill="#222"/><rect x="141.5" y="214.44" width="5.5" height="0.9" fill="#222"/><rect x="141.5" y="216.04" width="5.5" height="0.9" fill="#222"/><rect x="141.5" y="217.64" width="5.5" height="0.9" fill="#222"/><rect x="141.5" y="219.23999999999998" width="5.5" height="0.9" fill="#222"/><rect x="156.3" y="204.64" width="18.3" height="24.5" fill="#1a1a6a"/><path d="M156.8 229.14 L159.3 215.665 L161.8 229.14" fill="none" stroke="#30d050" stroke-width="1.5" /><path d="M156.8 205.64 L159.3 214.44 L161.8 205.64" fill="none" stroke="#8ab0c0" stroke-width="0.8" /><path d="M162.3 229.14 L164.8 215.665 L167.3 229.14" fill="none" stroke="#30d050" stroke-width="1.5" /><path d="M162.3 205.64 L164.8 214.44 L167.3 205.64" fill="none" stroke="#8ab0c0" stroke-width="0.8" /><path d="M167.8 229.14 L170.3 215.665 L172.8 229.14" fill="none" stroke="#30d050" stroke-width="1.5" /><path d="M167.8 205.64 L170.3 214.44 L172.8 205.64" fill="none" stroke="#8ab0c0" stroke-width="0.8" /></g><rect x="138.0" y="204.64" width="36.6" height="24.5" fill="none" stroke="#2a2a2a" stroke-width="0.4"/><line x1="156.3" y1="204.64" x2="156.3" y2="229.14" stroke="#9a9a9a" stroke-width="0.6"/><rect x="138.2" y="204.94" width="5.2" height="6.2" fill="#ffffff"/><text x="138.7" y="210.54" font-size="6.6" fill="#000" font-weight="bold" textLength="4.2" lengthAdjust="spacingAndGlyphs">A</text><rect x="169.2" y="204.94" width="5.2" height="6.2" fill="#ffffff"/><text x="169.7" y="210.54" font-size="6.6" fill="#000" font-weight="bold" textLength="4.2" lengthAdjust="spacingAndGlyphs">A</text><rect x="127.2" y="232.64" width="57.1" height="9.7" fill="#555555"/><text x="148.7" y="240.83999999999997" font-size="8.2" fill="#f0f0f0" font-weight="bold" textLength="14.0" lengthAdjust="spacingAndGlyphs">2-3</text><line x1="156.3" y1="243.68" x2="156.3" y2="275.68" stroke="#8c8c8c" stroke-width="0.7"/><clipPath id="th2"><rect x="138.0" y="247.68" width="36.6" height="24.5"/></clipPath><g clip-path="url(#th2)"><rect x="138.0" y="247.68" width="36.6" height="24.5" fill="#ffffff"/><rect x="139.0" y="268.2909727616775" width="1.8" height="3.8890272383225017" fill="#6040c0"/><rect x="141.6" y="267.0305690618" width="1.8" height="5.149430938200018" fill="#6040c0"/><rect x="144.2" y="264.9049583157488" width="1.8" height="7.275041684251246" fill="#6040c0"/><rect x="146.8" y="268.08509445737286" width="1.8" height="4.094905542627162" fill="#30c060"/><rect x="149.4" y="265.4750141983132" width="1.8" height="6.7049858016868065" fill="#6040c0"/><rect x="152.0" y="265.6921188740482" width="1.8" height="6.487881125951808" fill="#40b070"/><rect x="154.6" y="265.99929043488254" width="1.8" height="6.180709565117447" fill="#6040c0"/><rect x="157.2" y="264.70187602879366" width="1.8" height="7.478123971206353" fill="#8a30d0"/><rect x="159.8" y="264.7681330166375" width="1.8" height="7.411866983362546" fill="#c030a0"/><rect x="162.4" y="266.5308773642701" width="1.8" height="5.649122635729897" fill="#6040c0"/><rect x="165.0" y="268.411704246181" width="1.8" height="3.768295753819044" fill="#7a30c0"/><rect x="167.6" y="265.0412819231855" width="1.8" height="7.138718076814498" fill="#6040c0"/><rect x="170.2" y="265.72792277030356" width="1.8" height="6.452077229696446" fill="#6040c0"/><rect x="172.8" y="264.15539155682814" width="1.8" height="8.02460844317189" fill="#40b070"/></g><rect x="138.0" y="247.68" width="36.6" height="24.5" fill="none" stroke="#2a2a2a" stroke-width="0.4"/><line x1="156.3" y1="247.68" x2="156.3" y2="272.18" stroke="#9a9a9a" stroke-width="0.6"/><rect x="138.2" y="247.98000000000002" width="5.2" height="6.2" fill="#ffffff"/><text x="138.7" y="253.58" font-size="6.6" fill="#000" font-weight="bold" textLength="4.2" lengthAdjust="spacingAndGlyphs">A</text><rect x="169.2" y="247.98000000000002" width="5.2" height="6.2" fill="#ffffff"/><text x="169.7" y="253.58" font-size="6.6" fill="#000" font-weight="bold" textLength="4.2" lengthAdjust="spacingAndGlyphs">A</text><rect x="127.2" y="275.68" width="57.1" height="9.7" fill="#555555"/><text x="148.7" y="283.88" font-size="8.2" fill="#f0f0f0" font-weight="bold" textLength="14.0" lengthAdjust="spacingAndGlyphs">4-5</text><line x1="156.3" y1="286.72" x2="156.3" y2="318.72" stroke="#8c8c8c" stroke-width="0.7"/><clipPath id="th3"><rect x="138.0" y="290.72" width="36.6" height="24.5"/></clipPath><g clip-path="url(#th3)"><rect x="138.0" y="290.72" width="36.6" height="24.5" fill="#ffffff"/><path d="M138.0 294.72 L156.3 292.72 L156.3 315.22 L146.0 315.22 L138.0 306.72 Z" fill="#3040c0" /><rect x="144.0" y="290.72" width="8" height="24.5" fill="#4a3ad8"/><path d="M156.3 295.72 L174.6 302.72 L174.6 315.22 L156.3 313.22 Z" fill="#3050d0" /><path d="M173.87513415451798 302.9867112165666 l1.8 1.9" fill="none" stroke="#e03080" stroke-width="1.6" /><path d="M163.8423417679974 313.2482380138466 l1.9 1.2" fill="none" stroke="#a040e0" stroke-width="1.6" /><path d="M170.78371763452373 312.34338157142764 l-3.1 -3.3" fill="none" stroke="#e03080" stroke-width="1.6" /><path d="M160.18047938087545 314.61114090469704 l-3.6 3.7" fill="none" stroke="#e03080" stroke-width="1.6" /><path d="M161.00880757950623 299.32767826532734 l2.0 2.9" fill="none" stroke="#c030c0" stroke-width="1.6" /><path d="M165.01564541069982 302.058345584258 l2.3 0.6" fill="none" stroke="#c030c0" stroke-width="1.6" /><path d="M148.61131269021377 301.0252805405693 l0.6 3.6" fill="none" stroke="#c030c0" stroke-width="1.6" /><path d="M157.6426660509758 311.297637323339 l1.7 3.3" fill="none" stroke="#c030c0" stroke-width="1.6" /><path d="M170.6758524521806 312.8476458825287 l0.2 1.7" fill="none" stroke="#40a0ff" stroke-width="1.6" /><path d="M141.43336715297653 311.45794254492733 l-3.0 0.1" fill="none" stroke="#30e0a0" stroke-width="1.6" /><path d="M156.6503805563805 300.5515641893102 l2.7 1.3" fill="none" stroke="#30e0a0" stroke-width="1.6" /><path d="M150.58003430356297 307.7446440798562 l-3.0 3.3" fill="none" stroke="#30e0a0" stroke-width="1.6" /><path d="M164.5201464911024 299.2848892927925 l0.4 0.8" fill="none" stroke="#a040e0" stroke-width="1.6" /><path d="M153.19688246054477 309.12764191742843 l-1.9 3.1" fill="none" stroke="#e03080" stroke-width="1.6" /><path d="M155.39305885840096 293.7198226337627 l1.2 3.0" fill="none" stroke="#c030c0" stroke-width="1.6" /><path d="M148.2919286814523 298.0698089798245 l-2.2 3.5" fill="none" stroke="#e03080" stroke-width="1.6" /></g><rect x="138.0" y="290.72" width="36.6" height="24.5" fill="none" stroke="#2a2a2a" stroke-width="0.4"/><line x1="156.3" y1="290.72" x2="156.3" y2="315.22" stroke="#9a9a9a" stroke-width="0.6"/><rect x="138.2" y="291.02000000000004" width="5.2" height="6.2" fill="#ffffff"/><text x="138.7" y="296.62000000000006" font-size="6.6" fill="#000" font-weight="bold" textLength="4.2" lengthAdjust="spacingAndGlyphs">A</text><rect x="169.2" y="291.02000000000004" width="5.2" height="6.2" fill="#ffffff"/><text x="169.7" y="296.62000000000006" font-size="6.6" fill="#000" font-weight="bold" textLength="4.2" lengthAdjust="spacingAndGlyphs">A</text><rect x="127.2" y="318.72" width="57.1" height="9.7" fill="#555555"/><text x="148.7" y="326.92" font-size="8.2" fill="#f0f0f0" font-weight="bold" textLength="14.0" lengthAdjust="spacingAndGlyphs">6-7</text><line x1="156.3" y1="329.76" x2="156.3" y2="361.76" stroke="#8c8c8c" stroke-width="0.7"/><clipPath id="th4"><rect x="138.0" y="333.76" width="36.6" height="24.5"/></clipPath><g clip-path="url(#th4)"><rect x="138.0" y="333.76" width="36.6" height="24.5" fill="#0a0a0a"/><rect x="138.0" y="333.76" width="36.6" height="3.6" fill="#f4f4f4"/><text x="143.0" y="336.96" font-size="3.2" fill="#444" stroke="#444" stroke-width="0.22" textLength="7" lengthAdjust="spacingAndGlyphs">DEG</text><line x1="172.21464818474544" y1="354.76134189694017" x2="172.9103640689555" y2="356.2165867121561" stroke="#60c090" stroke-width="0.5"/><line x1="139.23332186861222" y1="340.1997000426861" x2="140.1864424954952" y2="343.02465386945175" stroke="#30a060" stroke-width="0.5"/><line x1="169.98101155824185" y1="340.0632721578235" x2="170.44699813983925" y2="341.7226809710728" stroke="#30a060" stroke-width="0.5"/><line x1="168.83468839396625" y1="349.09964712925137" x2="168.50811529741995" y2="350.74429514396394" stroke="#206040" stroke-width="0.5"/><line x1="160.73963881395244" y1="345.7467986686085" x2="160.63868487988054" y2="347.8194578667117" stroke="#60c090" stroke-width="0.5"/><line x1="172.2663382322938" y1="354.5642212470421" x2="170.88353673159216" y2="355.64087287383427" stroke="#30a060" stroke-width="0.5"/><line x1="167.6511382538752" y1="342.6793003509203" x2="167.39551916029023" y2="345.526096521872" stroke="#60c090" stroke-width="0.5"/><line x1="160.5599737369112" y1="348.3198787248081" x2="161.5002858506897" y2="349.50918286860895" stroke="#2a8050" stroke-width="0.5"/><line x1="166.8719307505306" y1="348.43801935455093" x2="167.27005300451773" y2="351.2655785011259" stroke="#206040" stroke-width="0.5"/><line x1="145.20460730771643" y1="347.95229982466213" x2="143.82420413634225" y2="349.7093651958118" stroke="#206040" stroke-width="0.5"/><line x1="154.99096852350795" y1="341.8955140707218" x2="154.81793383507585" y2="343.0198322852874" stroke="#30a060" stroke-width="0.5"/><line x1="139.33891769406844" y1="353.6240050488162" x2="138.5700092408575" y2="354.76858018976475" stroke="#2a8050" stroke-width="0.5"/><line x1="160.8167109692556" y1="348.4346336022695" x2="160.92046489782845" y2="350.8737927039862" stroke="#60c090" stroke-width="0.5"/><line x1="139.89544388618208" y1="352.6422366523027" x2="138.47030116267064" y2="355.40510736474045" stroke="#2a8050" stroke-width="0.5"/><line x1="156.96312288827846" y1="347.9456651114073" x2="157.6641848899856" y2="350.10380658709835" stroke="#30a060" stroke-width="0.5"/><line x1="147.7847664499688" y1="338.2045276475117" x2="148.62391609235624" y2="340.9658475597722" stroke="#30a060" stroke-width="0.5"/><line x1="142.22782919159823" y1="349.0360590818316" x2="142.49878845163744" y2="351.66225974125217" stroke="#60c090" stroke-width="0.5"/><line x1="142.5398019548218" y1="353.34259594219907" x2="141.54191560936056" y2="354.489938964483" stroke="#30a060" stroke-width="0.5"/><line x1="153.44825558259961" y1="353.78474889247735" x2="154.94650139919108" y2="355.5644589071067" stroke="#206040" stroke-width="0.5"/><line x1="147.2774742675242" y1="341.3883081294255" x2="148.34235570920106" y2="344.1062276169233" stroke="#30a060" stroke-width="0.5"/><line x1="164.4049660677153" y1="349.95605650056547" x2="164.06381403688005" y2="352.36722640546964" stroke="#206040" stroke-width="0.5"/><line x1="155.5962524428947" y1="351.5885237477353" x2="154.12002859573587" y2="354.32263259637574" stroke="#60c090" stroke-width="0.5"/><line x1="158.46492247591587" y1="345.4683586223344" x2="158.6143857138428" y2="348.36300724926474" stroke="#2a8050" stroke-width="0.5"/><line x1="140.93626583992" y1="352.97635676717994" x2="142.21625461413896" y2="355.20265403804086" stroke="#2a8050" stroke-width="0.5"/><line x1="148.5401778093834" y1="355.28114458383277" x2="147.44022171797027" y2="356.9927959245559" stroke="#206040" stroke-width="0.5"/><line x1="154.88796458051027" y1="337.97687327639915" x2="155.07044197135457" y2="339.831007432006" stroke="#30a060" stroke-width="0.5"/><line x1="148.06530765644013" y1="348.05470092207526" x2="147.92601573750872" y2="350.4456916439268" stroke="#206040" stroke-width="0.5"/><line x1="144.78198665579148" y1="353.31630015889095" x2="144.20446471463885" y2="355.6854343325952" stroke="#60c090" stroke-width="0.5"/><line x1="139.4173477337111" y1="346.3001608944803" x2="138.2745816807287" y2="348.89908740204163" stroke="#2a8050" stroke-width="0.5"/><line x1="142.75273806414884" y1="342.4563679704237" x2="143.33431466829842" y2="345.1754404623708" stroke="#60c090" stroke-width="0.5"/><line x1="142.2814146154335" y1="344.0589616705483" x2="141.72009108755614" y2="345.9406568945901" stroke="#2a8050" stroke-width="0.5"/><line x1="163.74242924037628" y1="347.5146770095092" x2="164.70562343841942" y2="348.92931224485295" stroke="#206040" stroke-width="0.5"/><line x1="144.22726751893399" y1="345.01361998095246" x2="143.04488379353282" y2="346.6581479101206" stroke="#2a8050" stroke-width="0.5"/><line x1="149.4945972797621" y1="355.1996491823064" x2="148.65518849793278" y2="356.6153660383329" stroke="#206040" stroke-width="0.5"/><line x1="169.09924228114446" y1="339.7031679147852" x2="169.16390333870186" y2="341.42812594081977" stroke="#206040" stroke-width="0.5"/><line x1="143.9321413491157" y1="352.09911647747975" x2="144.84981796774537" y2="353.7611319770712" stroke="#206040" stroke-width="0.5"/><line x1="163.76356667350728" y1="337.7748510030054" x2="163.11766449457755" y2="339.98126801914134" stroke="#206040" stroke-width="0.5"/><line x1="146.27380129256596" y1="348.58751729689084" x2="147.49111215973568" y2="349.9313212242915" stroke="#60c090" stroke-width="0.5"/><line x1="173.22751904004866" y1="348.3910515032591" x2="171.83299583993923" y2="350.2262102406173" stroke="#206040" stroke-width="0.5"/><line x1="142.10478268884083" y1="344.9951817783676" x2="141.3392427221148" y2="347.29434373156846" stroke="#206040" stroke-width="0.5"/><line x1="156.952662686654" y1="356.89025805222576" x2="155.80516610492046" y2="358.9253825911633" stroke="#60c090" stroke-width="0.5"/><line x1="171.12860969064602" y1="346.93033638146306" x2="170.93836708017773" y2="349.7136190983645" stroke="#2a8050" stroke-width="0.5"/><line x1="163.30178118794493" y1="350.2277974790617" x2="164.11568565077428" y2="352.4628187074929" stroke="#30a060" stroke-width="0.5"/><line x1="152.78231021728487" y1="350.8566910350549" x2="152.7903031958853" y2="353.2038676879541" stroke="#206040" stroke-width="0.5"/><line x1="152.4615334487124" y1="356.36794290480026" x2="153.50651940446147" y2="359.0057050144642" stroke="#206040" stroke-width="0.5"/><line x1="160.47123672831145" y1="343.7088149828404" x2="160.44230555136812" y2="345.81621250203864" stroke="#206040" stroke-width="0.5"/><line x1="171.69365628593238" y1="348.98238419425604" x2="172.55757975829468" y2="351.4913487757254" stroke="#30a060" stroke-width="0.5"/><line x1="148.56843573885357" y1="347.45401073147536" x2="149.84254421009018" y2="349.11423868112325" stroke="#2a8050" stroke-width="0.5"/><line x1="159.2798384673825" y1="352.7139166388005" x2="158.75946987702426" y2="354.86097275688354" stroke="#60c090" stroke-width="0.5"/><line x1="151.29257681948127" y1="342.4559516447673" x2="152.1933011815129" y2="343.46720926467844" stroke="#30a060" stroke-width="0.5"/></g><rect x="138.0" y="333.76" width="36.6" height="24.5" fill="none" stroke="#2a2a2a" stroke-width="0.4"/><line x1="156.3" y1="333.76" x2="156.3" y2="358.26" stroke="#9a9a9a" stroke-width="0.6"/><rect x="138.2" y="334.06" width="5.2" height="6.2" fill="#ffffff"/><text x="138.7" y="339.66" font-size="6.6" fill="#000" font-weight="bold" textLength="4.2" lengthAdjust="spacingAndGlyphs">A</text><rect x="169.2" y="334.06" width="5.2" height="6.2" fill="#ffffff"/><text x="169.7" y="339.66" font-size="6.6" fill="#000" font-weight="bold" textLength="4.2" lengthAdjust="spacingAndGlyphs">A</text><rect x="127.2" y="361.76" width="57.1" height="9.7" fill="#555555"/><text x="148.7" y="369.96" font-size="8.2" fill="#f0f0f0" font-weight="bold" textLength="14.0" lengthAdjust="spacingAndGlyphs">8-9</text><line x1="156.3" y1="372.79999999999995" x2="156.3" y2="404.79999999999995" stroke="#8c8c8c" stroke-width="0.7"/><clipPath id="th5"><rect x="138.0" y="376.79999999999995" width="36.6" height="24.5"/></clipPath><g clip-path="url(#th5)"><rect x="138.0" y="376.79999999999995" width="36.6" height="24.5" fill="#ffffff"/><rect x="143.0" y="379.79999999999995" width="29.6" height="19.5" fill="#d8d8f0"/><path d="M169.1 386.7 Q168.2 400.1 152.9 395.6" fill="none" stroke="#a040e0" stroke-width="1.4" /><path d="M152.4 397.9 Q149.1 398.6 146.9 386.5" fill="none" stroke="#e040a0" stroke-width="1.4" /><path d="M168.2 392.7 Q169.4 389.0 168.9 393.4" fill="none" stroke="#ff4080" stroke-width="1.4" /><path d="M172.3 392.6 Q173.4 396.8 159.0 382.9" fill="none" stroke="#a040e0" stroke-width="1.4" /><path d="M172.6 392.9 Q147.6 397.0 165.9 398.4" fill="none" stroke="#ff4080" stroke-width="1.4" /><path d="M170.7 400.3 Q170.9 390.7 162.0 388.8" fill="none" stroke="#40e080" stroke-width="1.4" /><path d="M158.7 392.1 Q173.5 396.2 170.6 393.9" fill="none" stroke="#30d0e0" stroke-width="1.4" /><path d="M160.2 386.9 Q165.6 390.7 170.3 390.3" fill="none" stroke="#4060e0" stroke-width="1.4" /><path d="M168.8 400.6 Q161.8 377.2 149.5 378.2" fill="none" stroke="#e040a0" stroke-width="1.4" /><path d="M153.1 395.1 Q157.8 391.1 168.4 392.9" fill="none" stroke="#30d0e0" stroke-width="1.4" /><path d="M163.9 380.5 Q161.5 384.3 162.8 392.7" fill="none" stroke="#a040e0" stroke-width="1.4" /><path d="M155.8 380.7 Q168.4 399.3 158.1 380.9" fill="none" stroke="#40e080" stroke-width="1.4" /><path d="M153.7 384.3 Q145.3 398.4 150.7 379.7" fill="none" stroke="#a040e0" stroke-width="1.4" /><path d="M149.3 401.2 Q159.9 399.5 167.7 383.6" fill="none" stroke="#30d0e0" stroke-width="1.4" /><path d="M157.9 394.2 Q169.6 389.9 157.5 377.0" fill="none" stroke="#e040a0" stroke-width="1.4" /><path d="M171.5 382.0 Q150.4 393.8 162.5 387.6" fill="none" stroke="#a040e0" stroke-width="1.4" /><path d="M165.5 393.7 Q154.7 385.7 149.4 392.6" fill="none" stroke="#a040e0" stroke-width="1.4" /><path d="M162.5 381.2 Q151.5 399.2 167.1 378.4" fill="none" stroke="#ff4080" stroke-width="1.4" /><path d="M167.6 399.4 Q145.1 393.6 160.1 385.4" fill="none" stroke="#30d0e0" stroke-width="1.4" /><path d="M163.5 385.8 Q169.4 387.6 157.5 388.5" fill="none" stroke="#4060e0" stroke-width="1.4" /><path d="M144.1 393.0 Q148.1 399.6 164.8 381.4" fill="none" stroke="#e040a0" stroke-width="1.4" /><path d="M146.0 379.5 Q150.4 398.3 163.5 394.5" fill="none" stroke="#30d0e0" stroke-width="1.4" /><path d="M159.6 400.7 Q167.3 397.3 158.5 396.0" fill="none" stroke="#30d0e0" stroke-width="1.4" /><path d="M171.1 398.8 Q162.8 385.4 161.2 390.9" fill="none" stroke="#4060e0" stroke-width="1.4" /><path d="M166.3 390.8 Q163.6 399.0 149.3 377.1" fill="none" stroke="#40e080" stroke-width="1.4" /><path d="M159.5 391.6 Q146.0 377.4 158.1 389.2" fill="none" stroke="#a040e0" stroke-width="1.4" /><path d="M152.0 389.2 Q146.9 389.4 163.0 393.7" fill="none" stroke="#40e080" stroke-width="1.4" /><path d="M151.5 383.5 Q155.0 385.0 170.1 381.9" fill="none" stroke="#4060e0" stroke-width="1.4" /><rect x="139.0" y="397.29999999999995" width="3" height="3" fill="#777"/></g><rect x="138.0" y="376.79999999999995" width="36.6" height="24.5" fill="none" stroke="#2a2a2a" stroke-width="0.4"/><line x1="156.3" y1="376.79999999999995" x2="156.3" y2="401.29999999999995" stroke="#9a9a9a" stroke-width="0.6"/><rect x="138.2" y="377.09999999999997" width="5.2" height="6.2" fill="#ffffff"/><text x="138.7" y="382.7" font-size="6.6" fill="#000" font-weight="bold" textLength="4.2" lengthAdjust="spacingAndGlyphs">A</text><rect x="169.2" y="377.09999999999997" width="5.2" height="6.2" fill="#ffffff"/><text x="169.7" y="382.7" font-size="6.6" fill="#000" font-weight="bold" textLength="4.2" lengthAdjust="spacingAndGlyphs">A</text><rect x="127.2" y="404.79999999999995" width="57.1" height="9.7" fill="#555555"/><text x="145.85" y="412.99999999999994" font-size="8.2" fill="#f0f0f0" font-weight="bold" textLength="19.7" lengthAdjust="spacingAndGlyphs">10-11</text><line x1="156.3" y1="415.84000000000003" x2="156.3" y2="447.84000000000003" stroke="#8c8c8c" stroke-width="0.7"/><clipPath id="th6"><rect x="138.0" y="419.84000000000003" width="36.6" height="24.5"/></clipPath><g clip-path="url(#th6)"><rect x="138.0" y="419.84000000000003" width="36.6" height="24.5" fill="#a8d0f8"/><line x1="139.5" y1="423.82589760162506" x2="139.5" y2="440.354102398375" stroke="#3a60c8" stroke-width="0.9"/><line x1="141.7" y1="422.68335463586885" x2="141.7" y2="441.4966453641312" stroke="#3a60c8" stroke-width="0.9"/><line x1="143.9" y1="427.98941794177614" x2="143.9" y2="436.1905820582239" stroke="#3a60c8" stroke-width="0.9"/><line x1="146.1" y1="422.43762061267137" x2="146.1" y2="441.7423793873287" stroke="#3a60c8" stroke-width="0.9"/><line x1="148.3" y1="423.16397913294577" x2="148.3" y2="441.0160208670543" stroke="#3a60c8" stroke-width="0.9"/><line x1="150.5" y1="427.7498902663605" x2="150.5" y2="436.43010973363954" stroke="#3a60c8" stroke-width="0.9"/><line x1="152.7" y1="423.2520346340894" x2="152.7" y2="440.92796536591067" stroke="#3a60c8" stroke-width="0.9"/><line x1="154.9" y1="423.26302280378945" x2="154.9" y2="440.9169771962106" stroke="#3a60c8" stroke-width="0.9"/><line x1="157.1" y1="426.9637519319483" x2="157.1" y2="437.21624806805175" stroke="#3a60c8" stroke-width="0.9"/><line x1="159.3" y1="422.2620128136532" x2="159.3" y2="441.91798718634686" stroke="#3a60c8" stroke-width="0.9"/><line x1="161.5" y1="425.9063905544534" x2="161.5" y2="438.27360944554664" stroke="#3a60c8" stroke-width="0.9"/><line x1="163.7" y1="425.3846684774598" x2="163.7" y2="438.79533152254027" stroke="#3a60c8" stroke-width="0.9"/><line x1="165.9" y1="424.16744172441025" x2="165.9" y2="440.0125582755898" stroke="#3a60c8" stroke-width="0.9"/><line x1="168.1" y1="423.9487818344179" x2="168.1" y2="440.23121816558216" stroke="#3a60c8" stroke-width="0.9"/><line x1="170.3" y1="423.61077829235234" x2="170.3" y2="440.5692217076477" stroke="#3a60c8" stroke-width="0.9"/><line x1="172.5" y1="426.4212377909173" x2="172.5" y2="437.75876220908276" stroke="#3a60c8" stroke-width="0.9"/></g><rect x="138.0" y="419.84000000000003" width="36.6" height="24.5" fill="none" stroke="#2a2a2a" stroke-width="0.4"/><line x1="156.3" y1="419.84000000000003" x2="156.3" y2="444.34000000000003" stroke="#9a9a9a" stroke-width="0.6"/><rect x="138.2" y="420.14000000000004" width="5.2" height="6.2" fill="#ffffff"/><text x="138.7" y="425.74000000000007" font-size="6.6" fill="#000" font-weight="bold" textLength="4.2" lengthAdjust="spacingAndGlyphs">A</text><rect x="169.2" y="420.14000000000004" width="5.2" height="6.2" fill="#ffffff"/><text x="169.7" y="425.74000000000007" font-size="6.6" fill="#000" font-weight="bold" textLength="4.2" lengthAdjust="spacingAndGlyphs">A</text><rect x="127.2" y="447.84000000000003" width="57.1" height="9.7" fill="#555555"/><rect x="142" y="448.14000000000004" width="26" height="9.3" fill="#2680eb"/><text x="145.85" y="456.04" font-size="8.2" fill="#f0f0f0" font-weight="bold" textLength="19.7" lengthAdjust="spacingAndGlyphs">12-13</text><line x1="156.3" y1="458.88" x2="156.3" y2="490.88" stroke="#8c8c8c" stroke-width="0.7"/><clipPath id="th7"><rect x="138.0" y="462.88" width="36.6" height="24.5"/></clipPath><g clip-path="url(#th7)"><rect x="138.0" y="462.88" width="36.6" height="24.5" fill="#ffffff"/><path d="M142.5 469.88 L149.6 475.18 L142.5 480.48 Z" fill="#8a1650" /><rect x="158.9" y="469.38" width="3.6" height="12" fill="#8a1650" rx="1.8"/><rect x="162.9" y="469.38" width="3.6" height="12" fill="#8a1650" rx="1.8"/></g><rect x="138.0" y="462.88" width="36.6" height="24.5" fill="none" stroke="#2a2a2a" stroke-width="0.4"/><line x1="156.3" y1="462.88" x2="156.3" y2="487.38" stroke="#9a9a9a" stroke-width="0.6"/><rect x="138.2" y="463.18" width="5.2" height="6.2" fill="#ffffff"/><text x="138.7" y="468.78000000000003" font-size="6.6" fill="#000" font-weight="bold" textLength="4.2" lengthAdjust="spacingAndGlyphs">A</text><rect x="169.2" y="463.18" width="5.2" height="6.2" fill="#ffffff"/><text x="169.7" y="468.78000000000003" font-size="6.6" fill="#000" font-weight="bold" textLength="4.2" lengthAdjust="spacingAndGlyphs">A</text><rect x="127.2" y="490.88" width="57.1" height="9.7" fill="#555555"/><text x="145.85" y="499.08" font-size="8.2" fill="#f0f0f0" font-weight="bold" textLength="19.7" lengthAdjust="spacingAndGlyphs">14-15</text><line x1="156.3" y1="501.91999999999996" x2="156.3" y2="533.92" stroke="#8c8c8c" stroke-width="0.7"/><clipPath id="th8"><rect x="138.0" y="505.91999999999996" width="36.6" height="24.5"/></clipPath><g clip-path="url(#th8)"><rect x="138.0" y="505.91999999999996" width="36.6" height="24.5" fill="#ffffff"/><rect x="143.0" y="506.91999999999996" width="14" height="18.5" fill="#0a0a0a"/><rect x="155.0" y="508.91999999999996" width="7" height="15.5" fill="#0a0a0a"/><rect x="144.0" y="509.91999999999996" width="6" height="8" fill="#1a2a2a"/><rect x="168.6" y="510.91999999999996" width="3.6" height="2.2" fill="#111"/><rect x="168.6" y="514.52" width="3.6" height="2.2" fill="#111"/><rect x="168.6" y="518.12" width="3.6" height="2.2" fill="#111"/><rect x="168.6" y="521.7199999999999" width="3.6" height="2.2" fill="#111"/><rect x="168.6" y="525.3199999999999" width="3.6" height="2.2" fill="#111"/><rect x="139.0" y="527.42" width="2.5" height="2" fill="#333"/></g><rect x="138.0" y="505.91999999999996" width="36.6" height="24.5" fill="none" stroke="#2a2a2a" stroke-width="0.4"/><line x1="156.3" y1="505.91999999999996" x2="156.3" y2="530.42" stroke="#9a9a9a" stroke-width="0.6"/><rect x="138.2" y="506.21999999999997" width="5.2" height="6.2" fill="#ffffff"/><text x="138.7" y="511.82" font-size="6.6" fill="#000" font-weight="bold" textLength="4.2" lengthAdjust="spacingAndGlyphs">A</text><rect x="169.2" y="506.21999999999997" width="5.2" height="6.2" fill="#ffffff"/><text x="169.7" y="511.82" font-size="6.6" fill="#000" font-weight="bold" textLength="4.2" lengthAdjust="spacingAndGlyphs">A</text><rect x="127.2" y="533.92" width="57.1" height="9.7" fill="#555555"/><text x="145.85" y="542.12" font-size="8.2" fill="#f0f0f0" font-weight="bold" textLength="19.7" lengthAdjust="spacingAndGlyphs">16-17</text><line x1="156.3" y1="544.96" x2="156.3" y2="576.96" stroke="#8c8c8c" stroke-width="0.7"/><clipPath id="th9"><rect x="138.0" y="548.96" width="36.6" height="24.5"/></clipPath><g clip-path="url(#th9)"><rect x="138.0" y="548.96" width="36.6" height="24.5" fill="#ffffff"/><path d="M138.0 556.96 L148.0 550.96 L154.0 568.96 L138.0 573.46 Z" fill="#8aa040" /><path d="M146.0 552.96 L162.0 548.96 L164.0 566.96 L150.0 570.96 Z" fill="#1a2ab0" /><path d="M152.0 554.96 L164.0 552.96 L162.0 564.96 Z" fill="#0a0a0a" /><path d="M162.0 556.96 L174.6 552.96 L174.6 566.96 L164.0 570.96 Z" fill="#909a60" /><rect x="143.0" y="549.96" width="4" height="6" fill="#e060c0"/></g><rect x="138.0" y="548.96" width="36.6" height="24.5" fill="none" stroke="#2a2a2a" stroke-width="0.4"/><line x1="156.3" y1="548.96" x2="156.3" y2="573.46" stroke="#9a9a9a" stroke-width="0.6"/><rect x="138.2" y="549.26" width="5.2" height="6.2" fill="#ffffff"/><text x="138.7" y="554.86" font-size="6.6" fill="#000" font-weight="bold" textLength="4.2" lengthAdjust="spacingAndGlyphs">A</text><rect x="169.2" y="549.26" width="5.2" height="6.2" fill="#ffffff"/><text x="169.7" y="554.86" font-size="6.6" fill="#000" font-weight="bold" textLength="4.2" lengthAdjust="spacingAndGlyphs">A</text><rect x="127.2" y="576.96" width="57.1" height="9.7" fill="#555555"/><text x="145.85" y="585.1600000000001" font-size="8.2" fill="#f0f0f0" font-weight="bold" textLength="19.7" lengthAdjust="spacingAndGlyphs">18-19</text><line x1="156.3" y1="588.0" x2="156.3" y2="620.0" stroke="#8c8c8c" stroke-width="0.7"/><clipPath id="th10"><rect x="138.0" y="592.0" width="36.6" height="24.5"/></clipPath><g clip-path="url(#th10)"><rect x="138.0" y="592.0" width="36.6" height="24.5" fill="#ffffff"/><rect x="141.0" y="594.0" width="2.4" height="18.5" fill="#b040e0"/><rect x="145.2" y="594.0" width="2.4" height="18.5" fill="#e050c0"/><rect x="149.4" y="594.0" width="2.4" height="18.5" fill="#b040e0"/><rect x="153.6" y="594.0" width="2.4" height="18.5" fill="#b040e0"/><rect x="157.8" y="594.0" width="2.4" height="18.5" fill="#3050d0"/><rect x="162.0" y="594.0" width="2.4" height="18.5" fill="#7a30d0"/><rect x="166.2" y="594.0" width="2.4" height="18.5" fill="#b040e0"/><rect x="170.4" y="594.0" width="2.4" height="18.5" fill="#3050d0"/><circle cx="150.0" cy="613.0" r="2.2" fill="#000"/><rect x="139.0" y="600.0" width="34.6" height="1.6" fill="#40c060" opacity="0.6"/></g><rect x="138.0" y="592.0" width="36.6" height="24.5" fill="none" stroke="#2a2a2a" stroke-width="0.4"/><line x1="156.3" y1="592.0" x2="156.3" y2="616.5" stroke="#9a9a9a" stroke-width="0.6"/><rect x="138.2" y="592.3" width="5.2" height="6.2" fill="#ffffff"/><text x="138.7" y="597.9" font-size="6.6" fill="#000" font-weight="bold" textLength="4.2" lengthAdjust="spacingAndGlyphs">A</text><rect x="169.2" y="592.3" width="5.2" height="6.2" fill="#ffffff"/><text x="169.7" y="597.9" font-size="6.6" fill="#000" font-weight="bold" textLength="4.2" lengthAdjust="spacingAndGlyphs">A</text><rect x="127.2" y="620.0" width="57.1" height="9.7" fill="#555555"/><text x="145.85" y="628.2" font-size="8.2" fill="#f0f0f0" font-weight="bold" textLength="19.7" lengthAdjust="spacingAndGlyphs">20-21</text><line x1="156.3" y1="631.04" x2="156.3" y2="663.04" stroke="#8c8c8c" stroke-width="0.7"/><clipPath id="th11"><rect x="138.0" y="635.04" width="36.6" height="24.5"/></clipPath><g clip-path="url(#th11)"><rect x="138.0" y="635.04" width="36.6" height="24.5" fill="#ffffff"/><path d="M138.0 643.04 L174.6 641.04 L174.6 653.04 Q168.6 659.54 156.3 659.54 L138.0 659.54 Z" fill="#2050c8" /><rect x="163.3114192994748" y="646.1250651700544" width="6.770077774404719" height="1.5" fill="#30c080" opacity="0.8"/><rect x="153.11394333200747" y="648.8050137249088" width="5.468658709873826" height="1.5" fill="#30c080" opacity="0.8"/><rect x="143.19066008679405" y="645.8473764787594" width="4.686580018969934" height="1.5" fill="#30c080" opacity="0.8"/><rect x="145.02895726270458" y="652.7612321997696" width="4.66492613618082" height="1.5" fill="#30c080" opacity="0.8"/><rect x="149.7361697246539" y="647.0673217855622" width="3.8831543268649584" height="1.5" fill="#30c080" opacity="0.8"/><rect x="159.91545551847125" y="656.1270059371208" width="4.4009598344543095" height="1.5" fill="#30c080" opacity="0.8"/><rect x="162.60366777638728" y="647.5804531160578" width="6.041639705938852" height="1.5" fill="#30c080" opacity="0.8"/><rect x="145.30648624764308" y="651.2863124323543" width="4.629775853873884" height="1.5" fill="#30c080" opacity="0.8"/><rect x="164.65008559978241" y="654.0787730998429" width="3.431167283449712" height="1.5" fill="#30c080" opacity="0.8"/><rect x="141.0385104519741" y="649.7105982903582" width="3.8611182075962645" height="1.5" fill="#30c080" opacity="0.8"/></g><rect x="138.0" y="635.04" width="36.6" height="24.5" fill="none" stroke="#2a2a2a" stroke-width="0.4"/><line x1="156.3" y1="635.04" x2="156.3" y2="659.54" stroke="#9a9a9a" stroke-width="0.6"/><rect x="138.2" y="635.3399999999999" width="5.2" height="6.2" fill="#ffffff"/><text x="138.7" y="640.9399999999999" font-size="6.6" fill="#000" font-weight="bold" textLength="4.2" lengthAdjust="spacingAndGlyphs">A</text><rect x="169.2" y="635.3399999999999" width="5.2" height="6.2" fill="#ffffff"/><text x="169.7" y="640.9399999999999" font-size="6.6" fill="#000" font-weight="bold" textLength="4.2" lengthAdjust="spacingAndGlyphs">A</text><rect x="127.2" y="663.04" width="57.1" height="9.7" fill="#555555"/><text x="145.85" y="671.24" font-size="8.2" fill="#f0f0f0" font-weight="bold" textLength="19.7" lengthAdjust="spacingAndGlyphs">22-23</text><line x1="156.3" y1="674.08" x2="156.3" y2="706.08" stroke="#8c8c8c" stroke-width="0.7"/><clipPath id="th12"><rect x="138.0" y="678.08" width="36.6" height="24.5"/></clipPath><g clip-path="url(#th12)"><rect x="138.0" y="678.08" width="36.6" height="24.5" fill="#ffffff"/><rect x="138.0" y="679.58" width="36.6" height="0.7" fill="#50a0f0"/><rect x="138.0" y="680.63" width="36.6" height="0.7" fill="#40c0a0"/><rect x="138.0" y="681.6800000000001" width="36.6" height="0.7" fill="#50a0f0"/><rect x="138.0" y="682.73" width="36.6" height="0.7" fill="#d050c0"/><rect x="138.0" y="683.7800000000001" width="36.6" height="0.7" fill="#a040d0"/><rect x="138.0" y="684.83" width="36.6" height="0.7" fill="#6060e0"/><rect x="138.0" y="685.88" width="36.6" height="0.7" fill="#e0a040"/><rect x="138.0" y="686.9300000000001" width="36.6" height="0.7" fill="#50a0f0"/><rect x="138.0" y="687.98" width="36.6" height="0.7" fill="#e04060"/><rect x="138.0" y="689.0300000000001" width="36.6" height="0.7" fill="#d050c0"/><rect x="138.0" y="690.08" width="36.6" height="0.7" fill="#e0a040"/><rect x="138.0" y="691.13" width="36.6" height="0.7" fill="#50a0f0"/><rect x="138.0" y="692.1800000000001" width="36.6" height="0.7" fill="#50a0f0"/><rect x="138.0" y="693.23" width="36.6" height="0.7" fill="#40c0a0"/><rect x="138.0" y="694.2800000000001" width="36.6" height="0.7" fill="#6060e0"/><rect x="138.0" y="695.33" width="36.6" height="0.7" fill="#e0a040"/><rect x="138.0" y="696.38" width="36.6" height="0.7" fill="#e0a040"/><rect x="138.0" y="697.4300000000001" width="36.6" height="0.7" fill="#a040d0"/><rect x="138.0" y="698.48" width="36.6" height="0.7" fill="#50a0f0"/><rect x="138.0" y="699.5300000000001" width="36.6" height="0.7" fill="#6060e0"/><rect x="138.0" y="700.58" width="36.6" height="0.7" fill="#d050c0"/><rect x="138.0" y="701.63" width="36.6" height="0.7" fill="#d050c0"/></g><rect x="138.0" y="678.08" width="36.6" height="24.5" fill="none" stroke="#2a2a2a" stroke-width="0.4"/><line x1="156.3" y1="678.08" x2="156.3" y2="702.58" stroke="#9a9a9a" stroke-width="0.6"/><rect x="138.2" y="678.38" width="5.2" height="6.2" fill="#ffffff"/><text x="138.7" y="683.98" font-size="6.6" fill="#000" font-weight="bold" textLength="4.2" lengthAdjust="spacingAndGlyphs">A</text><rect x="169.2" y="678.38" width="5.2" height="6.2" fill="#ffffff"/><text x="169.7" y="683.98" font-size="6.6" fill="#000" font-weight="bold" textLength="4.2" lengthAdjust="spacingAndGlyphs">A</text><rect x="127.2" y="706.08" width="57.1" height="9.7" fill="#555555"/><text x="145.85" y="714.2800000000001" font-size="8.2" fill="#f0f0f0" font-weight="bold" textLength="19.7" lengthAdjust="spacingAndGlyphs">24-25</text><path d="M161.4 157.2 L166.6 157.2 L164 160.4 Z" fill="#d8d8d8" /><rect x="80.5" y="717.5" width="162" height="17.5" fill="#4a4a4a"/><text x="83.6" y="730.3" font-size="7.6" fill="#e6e6e6" stroke="#e6e6e6" stroke-width="0.22" textLength="70.6" lengthAdjust="spacingAndGlyphs">36 Pages in 19 Spre...</text><path d="M160.5 731 L160.5 726.6 L162.2 724.6 L165.6 724.6 L165.6 727 M160.5 731 L163.6 731" fill="none" stroke="#9a9a9a" stroke-width="0.8" /><path d="M163.6 729.4 Q166.4 726.6 169.4 729.4 Q166.4 732.2 163.6 729.4 Z" fill="none" stroke="#9a9a9a" stroke-width="0.8" /><path d="M178.8 731 L178.8 727.6 L181.6 724.6 L184.8 727.4 L184 731 Z" fill="none" stroke="#9a9a9a" stroke-width="0.8" /><circle cx="187" cy="730.6" r="0.5" fill="#9a9a9a"/><rect x="200" y="724.4" width="8" height="7.8" fill="none" stroke="#9a9a9a" stroke-width="0.8"/><path d="M204 726.2 L204 730.4 M201.9 728.3 L206.1 728.3" fill="none" stroke="#9a9a9a" stroke-width="0.8" /><path d="M219.2 726 L225.8 726 M221.2 726 L221.2 724.6 L223.8 724.6 L223.8 726 M219.8 726.6 L220.4 732.4 L224.6 732.4 L225.2 726.6 Z" fill="none" stroke="#9a9a9a" stroke-width="0.8" /><text x="1247.1" y="106.1" font-size="8.4" fill="#f0f0f0" font-weight="bold" textLength="38.7" lengthAdjust="spacingAndGlyphs">Properties</text><text x="1245.7" y="126.4" font-size="8.2" fill="#e2e2e2" font-weight="bold" textLength="40.1" lengthAdjust="spacingAndGlyphs">No Selection</text><rect x="1239" y="134.6" width="170" height="1" fill="#464646"/><text x="1245.7" y="149.1" font-size="8.2" fill="#e2e2e2" font-weight="bold" textLength="33.3" lengthAdjust="spacingAndGlyphs">Document</text><rect x="1245" y="157.4" width="63.6" height="13.6" fill="#393939" rx="2" stroke="#585858" stroke-width="0.8"/><line x1="1296.4" y1="157.8" x2="1296.4" y2="170.6" stroke="#585858" stroke-width="0.8"/><path d="M1300.1000000000001 163.0 L1302.4 165.39999999999998 L1304.7 163.0" fill="none" stroke="#d0d0d0" stroke-width="0.9" /><text x="1248" y="167.5" font-size="8" fill="#e2e2e2" stroke="#e2e2e2" stroke-width="0.22" textLength="29.7" lengthAdjust="spacingAndGlyphs">[Custom]</text><rect x="1331" y="157.4" width="14.8" height="13.9" fill="#2c2c2c" rx="1.5"/><rect x="1334.4" y="159.6" width="8" height="10" fill="#9a9a9a"/><rect x="1336.8" y="160.6" width="3.2" height="2.6" fill="#e0e0e0"/><rect x="1336" y="163.8" width="4.8" height="5.2" fill="#e0e0e0"/><rect x="1350.6" y="159.8" width="9.7" height="9.4" fill="none" stroke="#a8a8a8" stroke-width="0.8"/><rect x="1355.6" y="161.8" width="3.2" height="5.4" fill="#a8a8a8"/><rect x="1352.4" y="163.8" width="2.6" height="1.6" fill="#a8a8a8"/><text x="1249" y="189.3" font-size="8" fill="#e2e2e2" stroke="#e2e2e2" stroke-width="0.22" textLength="8.2" lengthAdjust="spacingAndGlyphs">W:</text><rect x="1259" y="179.6" width="49.6" height="13.6" fill="#393939" rx="2" stroke="#585858" stroke-width="0.8"/><line x1="1271.3" y1="180.0" x2="1271.3" y2="192.79999999999998" stroke="#585858" stroke-width="0.8"/><path d="M1262.65 184.8 L1265.15 182.4 L1267.65 184.8 M1262.65 188.0 L1265.15 190.4 L1267.65 188.0" fill="none" stroke="#c4c4c4" stroke-width="0.8" /><text x="1274.2" y="189.3" font-size="8" fill="#e2e2e2" stroke="#e2e2e2" stroke-width="0.22" textLength="27.5" lengthAdjust="spacingAndGlyphs">289 mm</text><text x="1250.6" y="207.1" font-size="8" fill="#e2e2e2" stroke="#e2e2e2" stroke-width="0.22" textLength="6.6" lengthAdjust="spacingAndGlyphs">H:</text><rect x="1259" y="197.4" width="49.6" height="13.6" fill="#393939" rx="2" stroke="#585858" stroke-width="0.8"/><line x1="1271.3" y1="197.8" x2="1271.3" y2="210.6" stroke="#585858" stroke-width="0.8"/><path d="M1262.65 202.60000000000002 L1265.15 200.20000000000002 L1267.65 202.60000000000002 M1262.65 205.8 L1265.15 208.20000000000002 L1267.65 205.8" fill="none" stroke="#c4c4c4" stroke-width="0.8" /><text x="1274.2" y="207.1" font-size="8" fill="#e2e2e2" stroke="#e2e2e2" stroke-width="0.22" textLength="27.5" lengthAdjust="spacingAndGlyphs">380 mm</text><path d="M1330.4 192.6 L1330.4 184 L1335.4 181.6 L1335.4 192.6 Z M1336.6 192.6 L1336.6 181.6 L1341.8 184 L1341.8 192.6 Z" fill="#a8a8a8" /><line x1="1336" y1="179.8" x2="1336" y2="194" stroke="#a8a8a8" stroke-width="0.7"/><rect x="1346" y="179.6" width="46.6" height="13.6" fill="#393939" rx="2" stroke="#585858" stroke-width="0.8"/><text x="1350" y="189.3" font-size="8" fill="#e2e2e2" stroke="#e2e2e2" stroke-width="0.22" textLength="7.8" lengthAdjust="spacingAndGlyphs">36</text><rect x="1331.2" y="200.2" width="7.8" height="7.8" fill="#bdbdbd" rx="1.2"/><path d="M1332.8 204 L1334.6 205.8 L1337.6 202" fill="none" stroke="#333" stroke-width="1" /><text x="1343.3" y="207.1" font-size="8" fill="#e2e2e2" stroke="#e2e2e2" stroke-width="0.22" textLength="41.6" lengthAdjust="spacingAndGlyphs">Facing Pages</text><text x="1245.7" y="224.7" font-size="8.2" fill="#e2e2e2" font-weight="bold" textLength="25.6" lengthAdjust="spacingAndGlyphs">Margins</text><rect x="1246" y="234.2" width="11" height="3.2" fill="#a8a8a8"/><rect x="1246.4" y="239" width="10.4" height="5.8" fill="none" stroke="#a8a8a8" stroke-width="0.8"/><rect x="1246.4" y="251.2" width="10.4" height="5.8" fill="none" stroke="#a8a8a8" stroke-width="0.8"/><rect x="1246" y="258.6" width="11" height="3.2" fill="#a8a8a8"/><rect x="1331.2" y="235.4" width="6.4" height="9" fill="none" stroke="#a8a8a8" stroke-width="0.8"/><rect x="1339" y="234.2" width="3.2" height="11.4" fill="#a8a8a8"/><rect x="1331" y="252.4" width="3.2" height="11.4" fill="#a8a8a8"/><rect x="1335.6" y="253.4" width="6.4" height="9" fill="none" stroke="#a8a8a8" stroke-width="0.8"/><rect x="1259.2" y="232.8" width="49.4" height="13.6" fill="#393939" rx="2" stroke="#585858" stroke-width="0.8"/><line x1="1271.4" y1="233.20000000000002" x2="1271.4" y2="246.0" stroke="#585858" stroke-width="0.8"/><path d="M1262.8000000000002 238.00000000000003 L1265.3000000000002 235.60000000000002 L1267.8000000000002 238.00000000000003 M1262.8000000000002 241.20000000000002 L1265.3000000000002 243.60000000000002 L1267.8000000000002 241.20000000000002" fill="none" stroke="#c4c4c4" stroke-width="0.8" /><text x="1274.7" y="243.3" font-size="8" fill="#e2e2e2" stroke="#e2e2e2" stroke-width="0.22" textLength="22.6" lengthAdjust="spacingAndGlyphs">15 mm</text><rect x="1259.2" y="250.6" width="49.4" height="13.6" fill="#393939" rx="2" stroke="#585858" stroke-width="0.8"/><line x1="1271.4" y1="251.0" x2="1271.4" y2="263.8" stroke="#585858" stroke-width="0.8"/><path d="M1262.8000000000002 255.79999999999998 L1265.3000000000002 253.39999999999998 L1267.8000000000002 255.79999999999998 M1262.8000000000002 259.0 L1265.3000000000002 261.4 L1267.8000000000002 259.0" fill="none" stroke="#c4c4c4" stroke-width="0.8" /><text x="1274.7" y="261.1" font-size="8" fill="#e2e2e2" stroke="#e2e2e2" stroke-width="0.22" textLength="22.6" lengthAdjust="spacingAndGlyphs">15 mm</text><rect x="1344.4" y="232.8" width="49.4" height="13.6" fill="#393939" rx="2" stroke="#585858" stroke-width="0.8"/><line x1="1356.6" y1="233.20000000000002" x2="1356.6" y2="246.0" stroke="#585858" stroke-width="0.8"/><path d="M1348.0 238.00000000000003 L1350.5 235.60000000000002 L1353.0 238.00000000000003 M1348.0 241.20000000000002 L1350.5 243.60000000000002 L1353.0 241.20000000000002" fill="none" stroke="#c4c4c4" stroke-width="0.8" /><text x="1359.8999999999999" y="243.3" font-size="8" fill="#e2e2e2" stroke="#e2e2e2" stroke-width="0.22" textLength="22.6" lengthAdjust="spacingAndGlyphs">15 mm</text><rect x="1344.4" y="250.6" width="49.4" height="13.6" fill="#393939" rx="2" stroke="#585858" stroke-width="0.8"/><line x1="1356.6" y1="251.0" x2="1356.6" y2="263.8" stroke="#585858" stroke-width="0.8"/><path d="M1348.0 255.79999999999998 L1350.5 253.39999999999998 L1353.0 255.79999999999998 M1348.0 259.0 L1350.5 261.4 L1353.0 259.0" fill="none" stroke="#c4c4c4" stroke-width="0.8" /><text x="1359.8999999999999" y="261.1" font-size="8" fill="#e2e2e2" stroke="#e2e2e2" stroke-width="0.22" textLength="22.6" lengthAdjust="spacingAndGlyphs">15 mm</text><rect x="1312.4" y="240" width="14.6" height="14.5" fill="#2b2b2b" rx="1.5"/><rect x="1317.9" y="242.2" width="3.6" height="5.6" fill="none" rx="1.8" stroke="#d0d0d0" stroke-width="0.9"/><rect x="1317.9" y="246.6" width="3.6" height="5.6" fill="none" rx="1.8" stroke="#d0d0d0" stroke-width="0.9"/><rect x="1245.6" y="274.8" width="148.4" height="13" fill="#4a4a4a" rx="2" stroke="#5e5e5e" stroke-width="0.9"/><text x="1297.3" y="284.5" font-size="8" fill="#e2e2e2" stroke="#e2e2e2" stroke-width="0.22" textLength="44.5" lengthAdjust="spacingAndGlyphs">Adjust Layout</text><rect x="1239" y="291.2" width="170" height="1" fill="#464646"/><text x="1245.6" y="306.8" font-size="8.2" fill="#e2e2e2" font-weight="bold" textLength="15.1" lengthAdjust="spacingAndGlyphs">Page</text><rect x="1245.6" y="314" width="63" height="13.5" fill="#393939" rx="2" stroke="#585858" stroke-width="0.8"/><line x1="1297" y1="314.4" x2="1297" y2="327.1" stroke="#585858" stroke-width="0.8"/><path d="M1300.5 319.6 L1302.8 322.0 L1305.1 319.6" fill="none" stroke="#d0d0d0" stroke-width="0.9" /><text x="1248.5" y="323.8" font-size="8" fill="#e2e2e2" stroke="#e2e2e2" stroke-width="0.22" textLength="8.2" lengthAdjust="spacingAndGlyphs">14</text><rect x="1362" y="316.8" width="7.8" height="7.6" fill="none" stroke="#a8a8a8" stroke-width="0.8"/><path d="M1365.9 318.6 L1365.9 322.6 M1363.9 320.6 L1367.9 320.6" fill="none" stroke="#a8a8a8" stroke-width="0.8" /><path d="M1380.4 318 L1387.4 318 M1382.6 318 L1382.6 316.6 L1385.2 316.6 L1385.2 318 M1381.2 318.8 L1381.8 324.6 L1386 324.6 L1386.6 318.8 Z" fill="none" stroke="#a8a8a8" stroke-width="0.8" /><rect x="1245.6" y="333.6" width="148.4" height="13.8" fill="#4a4a4a" rx="2" stroke="#5e5e5e" stroke-width="0.9"/><text x="1304.7" y="343.6" font-size="8" fill="#e2e2e2" stroke="#e2e2e2" stroke-width="0.22" textLength="29.4" lengthAdjust="spacingAndGlyphs">Edit Page</text><rect x="1239" y="350.4" width="170" height="1" fill="#464646"/><text x="1245.6" y="369.2" font-size="8.2" fill="#e2e2e2" font-weight="bold" textLength="45.9" lengthAdjust="spacingAndGlyphs">Rulers &amp; Grids</text><rect x="1326" y="357.6" width="17" height="17.4" fill="#d4d4d4"/><rect x="1329.4" y="360.8" width="13.2" height="13.4" fill="#2e2e2e"/><line x1="1329.6" y1="357.8" x2="1329.6" y2="360.6" stroke="#4a4a4a" stroke-width="0.6"/><line x1="1326.2" y1="362.0" x2="1329.2" y2="362.0" stroke="#4a4a4a" stroke-width="0.6"/><line x1="1332.3999999999999" y1="357.8" x2="1332.3999999999999" y2="360.6" stroke="#4a4a4a" stroke-width="0.6"/><line x1="1326.2" y1="364.8" x2="1329.2" y2="364.8" stroke="#4a4a4a" stroke-width="0.6"/><line x1="1335.1999999999998" y1="357.8" x2="1335.1999999999998" y2="360.6" stroke="#4a4a4a" stroke-width="0.6"/><line x1="1326.2" y1="367.6" x2="1329.2" y2="367.6" stroke="#4a4a4a" stroke-width="0.6"/><line x1="1338.0" y1="357.8" x2="1338.0" y2="360.6" stroke="#4a4a4a" stroke-width="0.6"/><line x1="1326.2" y1="370.4" x2="1329.2" y2="370.4" stroke="#4a4a4a" stroke-width="0.6"/><line x1="1340.8" y1="357.8" x2="1340.8" y2="360.6" stroke="#4a4a4a" stroke-width="0.6"/><line x1="1326.2" y1="373.2" x2="1329.2" y2="373.2" stroke="#4a4a4a" stroke-width="0.6"/><rect x="1351.4" y="358" width="17" height="16.6" fill="none" stroke="#d4d4d4" stroke-width="0.9"/><line x1="1353.6" y1="361.4" x2="1366.4" y2="361.4" stroke="#d4d4d4" stroke-width="0.8"/><line x1="1353.6" y1="364.59999999999997" x2="1366.4" y2="364.59999999999997" stroke="#d4d4d4" stroke-width="0.8"/><line x1="1353.6" y1="367.79999999999995" x2="1366.4" y2="367.79999999999995" stroke="#d4d4d4" stroke-width="0.8"/><line x1="1353.6" y1="371.0" x2="1366.4" y2="371.0" stroke="#d4d4d4" stroke-width="0.8"/><line x1="1355" y1="358" x2="1355" y2="374.6" stroke="#d4d4d4" stroke-width="0.6"/><line x1="1365" y1="358" x2="1365" y2="374.6" stroke="#d4d4d4" stroke-width="0.6"/><rect x="1377.2" y="358" width="16.6" height="16.6" fill="none" stroke="#d4d4d4" stroke-width="0.9"/><line x1="1382.73" y1="358" x2="1382.73" y2="374.6" stroke="#d4d4d4" stroke-width="0.9"/><line x1="1377.2" y1="363.53" x2="1393.8" y2="363.53" stroke="#d4d4d4" stroke-width="0.9"/><line x1="1388.26" y1="358" x2="1388.26" y2="374.6" stroke="#d4d4d4" stroke-width="0.9"/><line x1="1377.2" y1="369.06" x2="1393.8" y2="369.06" stroke="#d4d4d4" stroke-width="0.9"/><rect x="1239" y="377.6" width="170" height="1" fill="#464646"/><text x="1245.6" y="396.3" font-size="8.2" fill="#e2e2e2" font-weight="bold" textLength="21.9" lengthAdjust="spacingAndGlyphs">Guides</text><rect x="1327.3" y="386" width="14.4" height="14.5" fill="#2c2c2c" rx="1.5"/><rect x="1353" y="386" width="14.4" height="14.5" fill="#2c2c2c" rx="1.5"/><rect x="1378" y="386" width="14.4" height="14.5" fill="#2c2c2c" rx="1.5"/><path d="M1331.2 388.4 L1331.2 398.2 M1333.4 388.4 L1333.4 398.2 M1329.4 391.4 L1339.6 391.4 M1329.4 395.2 L1339.6 395.2" fill="none" stroke="#c8c8c8" stroke-width="0.8" /><path d="M1356.6 388.4 L1356.6 398.2 M1358.8 388.4 L1358.8 398.2 M1355 391.4 L1361 391.4 M1355 395.2 L1360 395.2" fill="none" stroke="#c8c8c8" stroke-width="0.8" /><rect x="1361" y="395" width="4.8" height="3.6" fill="#c8c8c8"/><path d="M1362 395 L1362 393.6 Q1363.4 392 1364.8 393.6 L1364.8 395" fill="none" stroke="#c8c8c8" stroke-width="0.6" /><path d="M1382.6 388.4 L1382.6 398.4 M1380.6 391 L1386.6 391 M1384 389.6 L1382.6 391 L1384 392.4" fill="none" stroke="#c8c8c8" stroke-width="0.8" /><text x="1386.4" y="398.4" font-size="6" fill="#c8c8c8" font-weight="bold" textLength="3.4" lengthAdjust="spacingAndGlyphs">$</text><rect x="1239" y="404.6" width="170" height="1" fill="#464646"/><text x="1245.6" y="417" font-size="8.2" fill="#e2e2e2" font-weight="bold" textLength="44.6" lengthAdjust="spacingAndGlyphs">Quick Actions</text><rect x="1245.6" y="424" width="70.7" height="14.5" fill="#4a4a4a" rx="2" stroke="#5e5e5e" stroke-width="0.9"/><text x="1263" y="434.4" font-size="8" fill="#e2e2e2" stroke="#e2e2e2" stroke-width="0.22" textLength="35.1" lengthAdjust="spacingAndGlyphs">Import File</text><rect x="1323" y="424" width="71" height="14.5" fill="#4a4a4a" rx="2" stroke="#5e5e5e" stroke-width="0.9"/><text x="1335.7" y="434.4" font-size="8" fill="#e2e2e2" stroke="#e2e2e2" stroke-width="0.22" textLength="44.9" lengthAdjust="spacingAndGlyphs">Text to Image</text><path d="M254.4 92.8 L258.4 96.8 M258.4 92.8 L254.4 96.8" fill="none" stroke="#d0d0d0" stroke-width="0.9" /><text x="265" y="98.3" font-size="8" fill="#e8e8e8" font-weight="bold" textLength="142.5" lengthAdjust="spacingAndGlyphs">Analogue_Zine.indd @ 47% [GPU Preview]</text><path d="M246.5 104.5 L246.5 116.5 M250 104.5 L250 116.5 M244 109 L254 109 M244 113 L254 113" fill="none" stroke="#4a4a4a" stroke-width="0.6" /><text x="252.8" y="733" font-size="7.8" fill="#e0e0e0" stroke="#e0e0e0" stroke-width="0.22" textLength="24" lengthAdjust="spacingAndGlyphs">47.41%</text><path d="M281.9 728.3000000000001 L284.4 730.9 L286.9 728.3000000000001" fill="none" stroke="#cfcfcf" stroke-width="0.9" /><path d="M295.4 727 L295.4 732.4 M300.6 727 L296.6 729.7 L300.6 732.4 Z" fill="none" stroke="#a8a8a8" stroke-width="0.8" /><path d="M300.6 727 L296.8 729.7 L300.6 732.4 Z" fill="#a8a8a8" /><path d="M314 727 L310.6 729.7 L314 732.4 Z" fill="#a8a8a8" /><rect x="323.3" y="725.4" width="58.4" height="8.8" fill="#3c3c3c"/><line x1="370.3" y1="725.4" x2="370.3" y2="734.2" stroke="#555" stroke-width="0.8"/><text x="325.4" y="733" font-size="7.8" fill="#e0e0e0" stroke="#e0e0e0" stroke-width="0.22" textLength="7.6" lengthAdjust="spacingAndGlyphs">14</text><path d="M373.7 728.4 L376 730.8000000000001 L378.3 728.4" fill="none" stroke="#cfcfcf" stroke-width="0.9" /><path d="M391.6 727 L395 729.7 L391.6 732.4 Z" fill="#a8a8a8" /><path d="M404.2 727 L408 729.7 L404.2 732.4 Z" fill="#a8a8a8" /><line x1="409.6" y1="727" x2="409.6" y2="732.4" stroke="#a8a8a8" stroke-width="0.9"/><path d="M421.6 732.6 L421.6 730 Q421.6 726.4 425.4 726.4 Q429.2 726.4 429.2 730 L429.2 732.6" fill="none" stroke="#b0b0b0" stroke-width="1.1" /><line x1="425.4" y1="729.6" x2="427.6" y2="727.8" stroke="#b0b0b0" stroke-width="0.8"/><circle cx="431.2" cy="733.6" r="0.5" fill="#b0b0b0"/><text x="442.8" y="732.8" font-size="7.8" fill="#e0e0e0" stroke="#e0e0e0" stroke-width="0.22" textLength="54.2" lengthAdjust="spacingAndGlyphs">[Basic] (working)</text><path d="M512.1 728.4 L514.4 730.8000000000001 L516.6999999999999 728.4" fill="none" stroke="#cfcfcf" stroke-width="0.9" /><circle cx="531" cy="729.8" r="3.3" fill="#e82a2a"/><text x="538.6" y="732.8" font-size="7.8" fill="#e0e0e0" stroke="#e0e0e0" stroke-width="0.22" textLength="25.8" lengthAdjust="spacingAndGlyphs">5 errors</text><path d="M581.6 728.4 L583.9 730.8000000000001 L586.1999999999999 728.4" fill="none" stroke="#a0a0a0" stroke-width="0.9" /><rect x="1215.2" y="726.6" width="10.6" height="6.8" fill="none" stroke="#8c8c8c" stroke-width="0.8"/><line x1="1220.5" y1="726.6" x2="1220.5" y2="733.4" stroke="#8c8c8c" stroke-width="0.8"/></svg>
</body></html>
